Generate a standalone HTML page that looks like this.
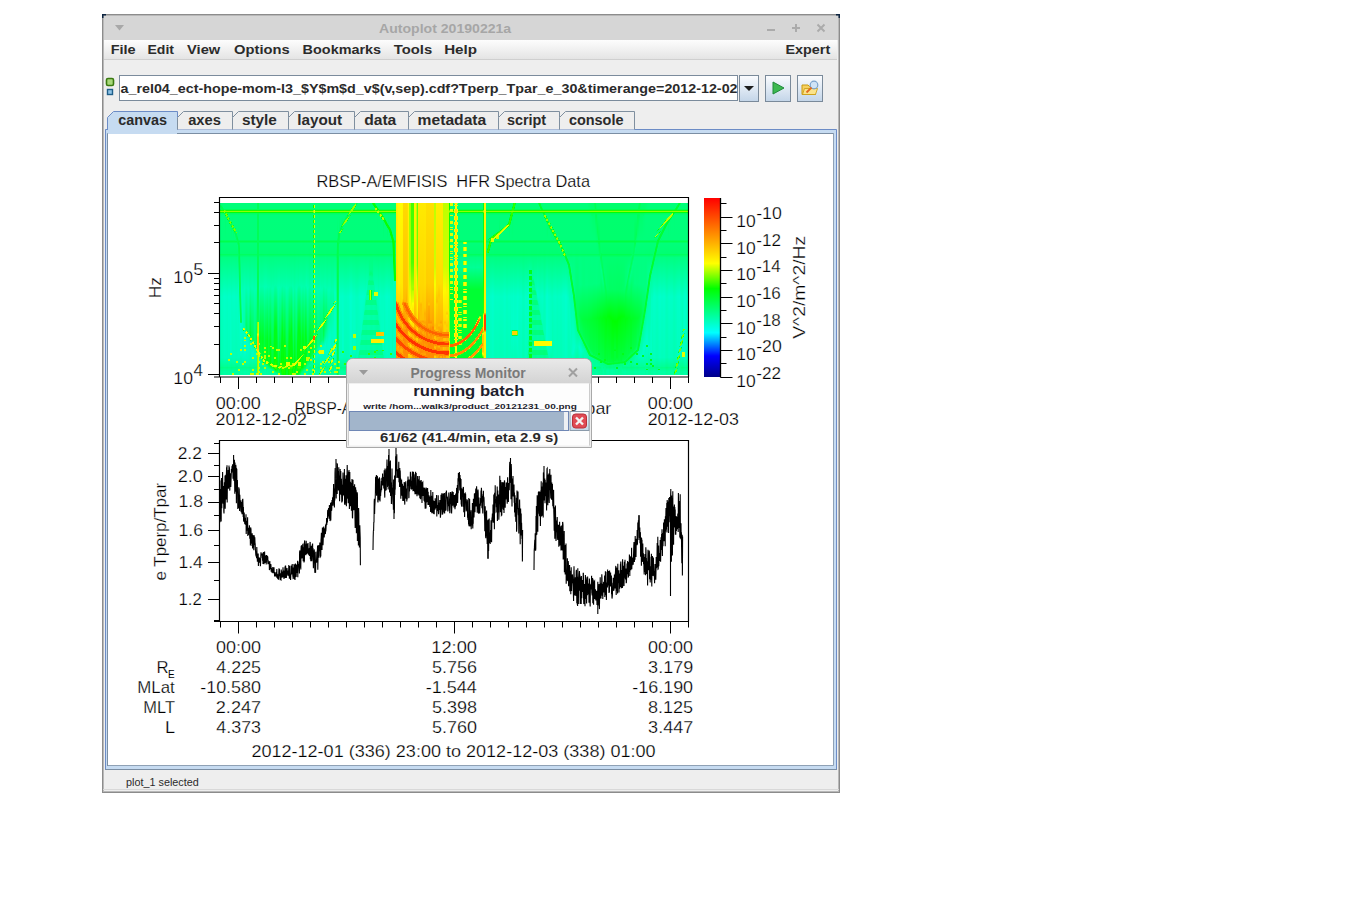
<!DOCTYPE html>
<html><head><meta charset="utf-8"><title>Autoplot</title>
<style>
html,body{margin:0;padding:0;background:#fff}
body{width:1345px;height:916px;position:relative;overflow:hidden;font-family:"Liberation Sans",sans-serif}
.L{position:absolute;left:0;top:0}
.pt text{stroke:#fff;stroke-width:0.25px}
.sp{position:absolute;left:220px;top:203px;width:468px;height:172px;overflow:hidden}
.sp i{position:absolute;top:0;height:172px;display:block}
</style></head><body>
<svg class="L" width="1345" height="916" font-family='"Liberation Sans", sans-serif'><defs><linearGradient id="mb" x1="0" y1="0" x2="0" y2="1"><stop offset="0" stop-color="#fdfdfd"/><stop offset="1" stop-color="#e4e4e4"/></linearGradient><linearGradient id="btn" x1="0" y1="0" x2="0" y2="1"><stop offset="0" stop-color="#fbfcfe"/><stop offset="0.45" stop-color="#e2ebf5"/><stop offset="1" stop-color="#c3d5e8"/></linearGradient><linearGradient id="ttl" x1="0" y1="0" x2="0" y2="1"><stop offset="0" stop-color="#e9e9e9"/><stop offset="1" stop-color="#d3d3d3"/></linearGradient></defs><rect x="102" y="14" width="738" height="779" fill="#eeeeee"/><rect x="102.5" y="14.5" width="737" height="778" fill="none" stroke="#8c8c8c" stroke-width="1"/><rect x="103.5" y="15.5" width="735" height="776" fill="none" stroke="#b8b8b8" stroke-width="1"/><rect x="104" y="16" width="734" height="24" fill="#d6d6d6"/><path d="M102 14h4v1.5h-2.5v2.5h-1.5z" fill="#0d2440"/><path d="M840 14h-4v1.5h2.5v2.5h1.5z" fill="#0d2440"/><path d="M115 25h9l-4.5 5.5z" fill="#a8a8a8"/><text x="379.05" y="33.4" font-size="13.7" font-weight="bold" textLength="132.15" lengthAdjust="spacingAndGlyphs" fill="#a6a6a6">Autoplot 20190221a</text><rect x="767" y="29" width="8" height="2" fill="#ababab"/><path d="M792 28h8M796 24v8" stroke="#ababab" stroke-width="2"/><path d="M817.5 24.5l7 7M824.5 24.5l-7 7" stroke="#ababab" stroke-width="2"/><rect x="104" y="40" width="733" height="19" fill="url(#mb)"/><rect x="104" y="59" width="733" height="1" fill="#cfcfcf"/><text x="110.72" y="53.7" font-size="12.8" font-weight="bold" textLength="24.95" lengthAdjust="spacingAndGlyphs" fill="#2b2b2b">File</text><text x="147.45" y="53.7" font-size="12.8" font-weight="bold" textLength="26.54" lengthAdjust="spacingAndGlyphs" fill="#2b2b2b">Edit</text><text x="187.09" y="53.7" font-size="12.8" font-weight="bold" textLength="33.09" lengthAdjust="spacingAndGlyphs" fill="#2b2b2b">View</text><text x="234.11" y="53.7" font-size="12.8" font-weight="bold" textLength="55.58" lengthAdjust="spacingAndGlyphs" fill="#2b2b2b">Options</text><text x="302.63" y="53.7" font-size="12.8" font-weight="bold" textLength="78.48" lengthAdjust="spacingAndGlyphs" fill="#2b2b2b">Bookmarks</text><text x="393.75" y="53.7" font-size="12.8" font-weight="bold" textLength="38.38" lengthAdjust="spacingAndGlyphs" fill="#2b2b2b">Tools</text><text x="444.18" y="53.7" font-size="12.8" font-weight="bold" textLength="32.86" lengthAdjust="spacingAndGlyphs" fill="#2b2b2b">Help</text><text x="785.43" y="53.7" font-size="12.8" font-weight="bold" textLength="44.75" lengthAdjust="spacingAndGlyphs" fill="#2b2b2b">Expert</text><rect x="106.5" y="78.5" width="7" height="7" rx="1.5" fill="#a8d87a" stroke="#3a7a10" stroke-width="1.6"/><rect x="107.5" y="89.5" width="5" height="5" fill="#8fc4e6" stroke="#1f5f8a" stroke-width="1.4"/><rect x="119.5" y="75.5" width="618" height="25" fill="#fff" stroke="#7b8b9c" stroke-width="1"/><text x="120.47" y="93" font-size="13.3" font-weight="bold" textLength="617.09" lengthAdjust="spacingAndGlyphs" fill="#2a2a2a">a_rel04_ect-hope-mom-l3_$Y$m$d_v$(v,sep).cdf?Tperp_Tpar_e_30&amp;timerange=2012-12-02</text><rect x="739.5" y="75.5" width="19" height="26" fill="url(#btn)" stroke="#7a8a9a" stroke-width="1"/><rect x="765.5" y="75.5" width="25" height="26" fill="url(#btn)" stroke="#7a8a9a" stroke-width="1"/><rect x="797.5" y="75.5" width="25" height="26" fill="url(#btn)" stroke="#7a8a9a" stroke-width="1"/><path d="M744 86h10l-5 5z" fill="#1e1e1e"/><path d="M773 82v12l11-6z" fill="#3cb850" stroke="#1f8a3a" stroke-width="1"/><path d="M802 85h6l1.5 1.5h6v8h-13.5z" fill="#f5d060" stroke="#c99a10" stroke-width="1"/><path d="M802.5 94.5l2-6h13l-2 6z" fill="#fbe38a" stroke="#c99a10" stroke-width="0.8"/><circle cx="814" cy="85" r="3.8" fill="#cfe3f7" stroke="#7aa2cc" stroke-width="1.2"/><path d="M811.5 87.5l-5 5" stroke="#e06a20" stroke-width="1.8"/><rect x="105" y="129" width="732" height="641" fill="#c6dbf1"/><path d="M105.5 770V129.5H836.5V770" fill="none" stroke="#6c8cc6" stroke-width="1"/><rect x="105" y="769" width="732" height="1" fill="#7b8ea3"/><rect x="108" y="133" width="725" height="633" fill="#fff"/><path d="M107.5 766V133.5H833.5" fill="none" stroke="#7b8ea3" stroke-width="1"/><path d="M108 765.5H833.5V133" fill="none" stroke="#8fa1b5" stroke-width="1"/><path d="M107.5 130V117.5L113.5 111.5H177.5V130" fill="#c6dbf1" stroke="#6c8cc6" stroke-width="1"/><text x="118.22" y="124.6" font-size="13.8" font-weight="bold" textLength="48.78" lengthAdjust="spacingAndGlyphs" fill="#2b2b2b">canvas</text><path d="M177.5 129.5V117.5L183.5 111.5H232.5V129.5" fill="#eeeeee" stroke="#7f8f9f" stroke-width="1"/><text x="188.16" y="124.6" font-size="13.8" font-weight="bold" textLength="32.66" lengthAdjust="spacingAndGlyphs" fill="#2b2b2b">axes</text><path d="M232.5 129.5V117.5L238.5 111.5H288.5V129.5" fill="#eeeeee" stroke="#7f8f9f" stroke-width="1"/><text x="241.96" y="124.6" font-size="13.8" font-weight="bold" textLength="34.86" lengthAdjust="spacingAndGlyphs" fill="#2b2b2b">style</text><path d="M288.5 129.5V117.5L294.5 111.5H354.5V129.5" fill="#eeeeee" stroke="#7f8f9f" stroke-width="1"/><text x="297.23" y="124.6" font-size="13.8" font-weight="bold" textLength="44.86" lengthAdjust="spacingAndGlyphs" fill="#2b2b2b">layout</text><path d="M354.5 129.5V117.5L360.5 111.5H408.5V129.5" fill="#eeeeee" stroke="#7f8f9f" stroke-width="1"/><text x="364.18" y="124.6" font-size="13.8" font-weight="bold" textLength="32.13" lengthAdjust="spacingAndGlyphs" fill="#2b2b2b">data</text><path d="M408.5 129.5V117.5L414.5 111.5H498.5V129.5" fill="#eeeeee" stroke="#7f8f9f" stroke-width="1"/><text x="417.58" y="124.6" font-size="13.8" font-weight="bold" textLength="68.71" lengthAdjust="spacingAndGlyphs" fill="#2b2b2b">metadata</text><path d="M498.5 129.5V117.5L504.5 111.5H559.5V129.5" fill="#eeeeee" stroke="#7f8f9f" stroke-width="1"/><text x="506.90" y="124.6" font-size="13.8" font-weight="bold" textLength="39.19" lengthAdjust="spacingAndGlyphs" fill="#2b2b2b">script</text><path d="M559.5 129.5V117.5L565.5 111.5H634.5V129.5" fill="#eeeeee" stroke="#7f8f9f" stroke-width="1"/><text x="568.92" y="124.6" font-size="13.8" font-weight="bold" textLength="54.57" lengthAdjust="spacingAndGlyphs" fill="#2b2b2b">console</text><rect x="108" y="129" width="69" height="5" fill="#c6dbf1"/><text x="126.10" y="786" font-size="10.5" textLength="72.70" lengthAdjust="spacingAndGlyphs" fill="#2b2b2b">plot_1 selected</text><rect x="103" y="789" width="736" height="1" fill="#d8d8d8"/></svg>
<div class="sp"><i style="left:0px;width:1px;background:linear-gradient(#00ff7b 0px,#00ff7b 1.5px,#00ff59 2.5px,#00ff57 3.5px,#00ff78 5.5px,#00ff5a 6.5px,#18ff00 7.5px,#90ff00 8.5px,#00ff0c 9.5px,#00ff65 10.5px,#00ff7b 12.5px,#00ff7a 36.5px,#00ff4c 38.5px,#00ff7a 40.5px,#00ff72 50.5px,#00ff5f 51.5px,#00ff82 54.5px,#00ffc3 93.5px,#00ffb6 154.5px,#00ff92 163.5px,#00ff85 164.5px,#00ff9f 168.5px,#00ff9f 172px)"></i><i style="left:1px;width:1px;background:linear-gradient(#00ff7b 0px,#00ff7b 1.5px,#00ff4d 3.5px,#00ff5a 6.5px,#18ff00 7.5px,#90ff00 8.5px,#00ff0c 9.5px,#00ff65 10.5px,#00ff7b 12.5px,#00ff7a 36.5px,#00ff4c 38.5px,#00ff7a 40.5px,#00ff72 50.5px,#00ff5f 51.5px,#00ff82 54.5px,#00ffc0 94.5px,#00ffb3 154.5px,#00ff8f 163.5px,#00ff82 164.5px,#00ff9b 168.5px,#00ff9b 172px)"></i><i style="left:2px;width:1px;background:linear-gradient(#00ff7b 0px,#00ff6e 3.5px,#00ff51 4.5px,#00ff4d 6.5px,#18ff00 7.5px,#90ff00 8.5px,#00ff0c 9.5px,#00ff65 10.5px,#00ff7b 12.5px,#00ff7a 36.5px,#00ff4c 38.5px,#00ff7a 40.5px,#00ff72 50.5px,#00ff5f 51.5px,#00ff82 54.5px,#00ffc1 94.5px,#00ffb4 154.5px,#00ff90 163.5px,#00ff83 164.5px,#00ff9d 168.5px,#00ff9d 172px)"></i><i style="left:3px;width:1px;background:linear-gradient(#00ff7b 0px,#00ff7b 4.5px,#00ff4d 6.5px,#18ff00 7.5px,#90ff00 8.5px,#00ff0c 9.5px,#00ff65 10.5px,#00ff7b 12.5px,#00ff7a 36.5px,#00ff4c 38.5px,#00ff7a 40.5px,#00ff72 50.5px,#00ff60 51.5px,#00ff83 54.5px,#00ffc5 93.5px,#00ffb8 154.5px,#00ff94 163.5px,#00ff87 164.5px,#00ffa1 168.5px,#00ffa1 172px)"></i><i style="left:4px;width:1px;background:linear-gradient(#00ff7b 0px,#00ff78 5.5px,#00ff5a 6.5px,#7f0 7.5px,#90ff00 8.5px,#7f0 9.5px,#00ff4f 10.5px,#00ff7b 12.5px,#00ff7a 36.5px,#00ff4d 38.5px,#00ff7a 40.5px,#00ff73 50.5px,#00ff60 51.5px,#00ff83 54.5px,#00ffc8 93.5px,#00ffbc 154.5px,#00ff97 163.5px,#00ff8a 164.5px,#00ffa4 168.5px,#00ffa4 172px)"></i><i style="left:5px;width:1px;background:linear-gradient(#00ff7b 0px,#00ff78 5.5px,#00ff5a 6.5px,#4cff00 7.5px,#90ff00 8.5px,#00ff0c 9.5px,#00ff4d 10.5px,#7f0 11.5px,#00ff02 12.5px,#00ff73 13.5px,#00ff7a 36.5px,#00ff4d 38.5px,#00ff7a 40.5px,#00ff72 50.5px,#00ff60 51.5px,#00ff83 54.5px,#00ffc6 93.5px,#00ffba 154.5px,#00ff95 163.5px,#0f8 164.5px,#00ffa2 168.5px,#00ffa2 172px)"></i><i style="left:6px;width:1px;background:linear-gradient(#00ff7b 0px,#00ff78 5.5px,#00ff5a 6.5px,#18ff00 7.5px,#90ff00 8.5px,#00ff0c 9.5px,#7f0 10.5px,#7f0 13.5px,#00ff5b 14.5px,#00ff7b 16.5px,#00ff7a 36.5px,#00ff4c 38.5px,#00ff7a 40.5px,#00ff72 50.5px,#00ff60 51.5px,#00ff83 54.5px,#00ffc5 93.5px,#00ffb9 154.5px,#00ff94 163.5px,#00ff87 164.5px,#00ffa1 168.5px,#00ffa1 172px)"></i><i style="left:7px;width:1px;background:linear-gradient(#00ff7b 0px,#00ff78 5.5px,#00ff5a 6.5px,#18ff00 7.5px,#90ff00 8.5px,#00ff0c 9.5px,#00ff65 10.5px,#00ff12 11.5px,#7f0 12.5px,#00ff52 13.5px,#00ff4d 14.5px,#7f0 15.5px,#00ff07 16.5px,#00ff7b 17.5px,#00ff7a 36.5px,#00ff4c 38.5px,#00ff7a 40.5px,#00ff72 50.5px,#00ff60 51.5px,#00ff82 54.5px,#00ffc3 93.5px,#00ffb7 154.5px,#00ff92 163.5px,#00ff85 164.5px,#00ff9f 168.5px,#00ff9f 172px)"></i><i style="left:8px;width:1px;background:linear-gradient(#00ff7b 0px,#00ff78 5.5px,#00ff5a 6.5px,#18ff00 7.5px,#90ff00 8.5px,#00ff0c 9.5px,#00ff65 10.5px,#00ff7b 12.5px,#00ff7b 13.5px,#7f0 14.5px,#7f0 16.5px,#00ff4d 17.5px,#00ff7b 19.5px,#00ff7a 36.5px,#00ff4d 38.5px,#00ff7a 40.5px,#00ff73 50.5px,#00ff60 51.5px,#00ff83 54.5px,#00ffc7 93.5px,#0fb 154.5px,#00ffb7 155.5px,#bfff00 156.5px,#bfff00 157.5px,#00ffac 158.5px,#00ff96 163.5px,#00ff89 164.5px,#00ffa3 168.5px,#00ffa3 172px)"></i><i style="left:9px;width:1px;background:linear-gradient(#00ff7b 0px,#00ff78 5.5px,#00ff5a 6.5px,#18ff00 7.5px,#90ff00 8.5px,#00ff0c 9.5px,#00ff65 10.5px,#00ff7b 12.5px,#00ff7b 14.5px,#00ff13 15.5px,#00ff65 16.5px,#00ff4d 18.5px,#7f0 19.5px,#00ff1f 20.5px,#00ff7b 21.5px,#00ff7a 36.5px,#00ff4d 38.5px,#00ff7a 40.5px,#00ff72 50.5px,#00ff60 51.5px,#00ff83 54.5px,#00ffc6 93.5px,#00ffb9 154.5px,#00ffb5 155.5px,#bfff00 156.5px,#bfff00 157.5px,#0fa 158.5px,#00ff95 163.5px,#0f8 164.5px,#00ffa1 168.5px,#00ffa1 172px)"></i><i style="left:10px;width:1px;background:linear-gradient(#00ff7b 0px,#00ff78 5.5px,#00ff5a 6.5px,#18ff00 7.5px,#90ff00 8.5px,#00ff0c 9.5px,#00ff65 10.5px,#00ff7b 12.5px,#00ff7b 17.5px,#7f0 18.5px,#7f0 20.5px,#00ff52 21.5px,#00ff7b 23.5px,#00ff7a 36.5px,#00ff4c 38.5px,#00ff7a 40.5px,#00ff72 50.5px,#00ff60 51.5px,#00ff83 54.5px,#00ffc5 93.5px,#00ffc5 149.5px,#bfff00 150.5px,#bfff00 151.5px,#00ffbf 152.5px,#00ff94 163.5px,#00ff87 164.5px,#00ffa1 168.5px,#00ffa1 172px)"></i><i style="left:11px;width:1px;background:linear-gradient(#00ff7b 0px,#00ff78 5.5px,#00ff5a 6.5px,#18ff00 7.5px,#90ff00 8.5px,#00ff0c 9.5px,#00ff65 10.5px,#00ff7b 12.5px,#00ff7b 18.5px,#0cff00 19.5px,#00ff5b 20.5px,#00ff4d 22.5px,#1fff00 23.5px,#00ff70 24.5px,#00ff7a 36.5px,#00ff4c 38.5px,#00ff7a 40.5px,#00ff72 50.5px,#00ff5f 51.5px,#00ff82 54.5px,#00ffc1 93.5px,#00ffc1 149.5px,#bfff00 150.5px,#bfff00 151.5px,#00ffbc 152.5px,#00ff90 163.5px,#00ff83 164.5px,#00ff9d 168.5px,#00ff9d 172px)"></i><i style="left:12px;width:1px;background:linear-gradient(#00ff7b 0px,#00ff78 5.5px,#00ff5a 6.5px,#18ff00 7.5px,#90ff00 8.5px,#00ff0c 9.5px,#00ff65 10.5px,#00ff7b 12.5px,#00ff73 21.5px,#7f0 22.5px,#7f0 24.5px,#00ff56 25.5px,#00ff7b 27.5px,#00ff7a 36.5px,#00ff4c 38.5px,#00ff7a 40.5px,#00ff72 50.5px,#00ff60 51.5px,#00ff83 54.5px,#00ffc4 93.5px,#00ffb8 154.5px,#00ff93 163.5px,#00ff86 164.5px,#00ffa0 168.5px,#00ffa0 169.5px,#bfff00 170.5px,#bfff00 172px)"></i><i style="left:13px;width:1px;background:linear-gradient(#00ff7b 0px,#00ff78 5.5px,#00ff5a 6.5px,#18ff00 7.5px,#90ff00 8.5px,#00ff0c 9.5px,#00ff65 10.5px,#00ff7b 12.5px,#00ff7b 21.5px,#00ff29 22.5px,#7f0 23.5px,#00ff56 24.5px,#00ff4d 25.5px,#62ff00 26.5px,#00ff3a 27.5px,#00ff70 28.5px,#00ff7a 36.5px,#00ff4c 38.5px,#00ff7a 40.5px,#00ff72 50.5px,#00ff60 51.5px,#00ff83 54.5px,#00ffc5 93.5px,#00ffb9 154.5px,#00ff94 163.5px,#00ff87 164.5px,#00ffa1 168.5px,#00ffa1 169.5px,#bfff00 170.5px,#bfff00 172px)"></i><i style="left:14px;width:1px;background:linear-gradient(#00ff7b 0px,#00ff78 5.5px,#00ff5a 6.5px,#18ff00 7.5px,#90ff00 8.5px,#00ff0c 9.5px,#00ff65 10.5px,#00ff7b 12.5px,#00ff7b 24.5px,#7f0 25.5px,#7f0 27.5px,#24ff00 28.5px,#00ff56 29.5px,#00ff7b 31.5px,#00ff7a 36.5px,#00ff4d 38.5px,#00ff7a 40.5px,#00ff72 50.5px,#00ff60 51.5px,#00ff83 54.5px,#00ffc6 93.5px,#00ffb9 154.5px,#00ff95 163.5px,#0f8 164.5px,#00ffa1 168.5px,#00ffa1 172px)"></i><i style="left:15px;width:1px;background:linear-gradient(#00ff7b 0px,#00ff78 5.5px,#00ff5a 6.5px,#18ff00 7.5px,#90ff00 8.5px,#00ff0c 9.5px,#00ff65 10.5px,#00ff7b 12.5px,#00ff7b 24.5px,#00ff58 25.5px,#5cff00 26.5px,#7f0 27.5px,#00ff56 28.5px,#00ff53 31.5px,#00ff7b 35.5px,#00ff6a 37.5px,#00ff4c 38.5px,#00ff7a 40.5px,#00ff72 50.5px,#00ff60 51.5px,#00ff82 54.5px,#00ffc3 93.5px,#00ffb7 154.5px,#00ff92 163.5px,#00ff85 164.5px,#00ff9f 168.5px,#00ff9f 172px)"></i><i style="left:16px;width:1px;background:linear-gradient(#00ff7b 0px,#00ff78 5.5px,#00ff5a 6.5px,#18ff00 7.5px,#90ff00 8.5px,#00ff0c 9.5px,#00ff65 10.5px,#00ff7b 12.5px,#00ff7b 28.5px,#7f0 29.5px,#00ff56 30.5px,#00ff58 35.5px,#00ff67 37.5px,#00ff4c 38.5px,#00ff7a 40.5px,#00ff72 50.5px,#00ff5f 51.5px,#00ff82 54.5px,#00ffc3 93.5px,#00ffb6 154.5px,#00ffab 157.5px,#bfff00 158.5px,#bfff00 159.5px,#00ffa2 160.5px,#00ff85 164.5px,#00ff9f 168.5px,#00ff9f 172px)"></i><i style="left:17px;width:1px;background:linear-gradient(#00ff7b 0px,#00ff78 5.5px,#00ff5a 6.5px,#18ff00 7.5px,#90ff00 8.5px,#00ff0c 9.5px,#00ff65 10.5px,#00ff7b 12.5px,#00ff7b 31.5px,#00ff4d 35.5px,#00ff57 39.5px,#00ff7b 42.5px,#00ff72 50.5px,#00ff60 51.5px,#00ff83 54.5px,#00ffc5 94.5px,#00ffb8 154.5px,#00ffad 157.5px,#bfff00 158.5px,#bfff00 159.5px,#00ffa3 160.5px,#00ff87 164.5px,#00ffa0 168.5px,#00ffa0 172px)"></i><i style="left:18px;width:1px;background:linear-gradient(#00ff7b 0px,#00ff78 5.5px,#00ff5a 6.5px,#18ff00 7.5px,#90ff00 8.5px,#00ff0c 9.5px,#00ff65 10.5px,#00ff7b 12.5px,#0f7 35.5px,#00ff4c 38.5px,#0f6 57.5px,#00ffbf 84.5px,#00ffbc 153.5px,#00ff94 163.5px,#00ff87 164.5px,#00ff94 165.5px,#bfff00 166.5px,#bfff00 167.5px,#00ffa1 168.5px,#00ffa1 172px)"></i><i style="left:19px;width:1px;background:linear-gradient(#00ff7b 0px,#00ff78 5.5px,#00ff5a 6.5px,#18ff00 7.5px,#90ff00 8.5px,#00ff0c 9.5px,#00ff65 10.5px,#00ff7b 12.5px,#00ff7a 36.5px,#00ff4d 38.5px,#00ff64 39.5px,#00ff4d 45.5px,#00ff58 89.5px,#00ffc5 114.5px,#00ffb9 154.5px,#00ff94 163.5px,#00ff94 165.5px,#bfff00 166.5px,#bfff00 167.5px,#00ffa1 168.5px,#00ffa1 172px)"></i><i style="left:20px;width:1px;background:linear-gradient(#00ff7b 0px,#00ff78 5.5px,#00ff5a 6.5px,#18ff00 7.5px,#90ff00 8.5px,#00ff0c 9.5px,#00ff65 10.5px,#00ff7b 12.5px,#00ff7a 36.5px,#00ff4d 38.5px,#00ff7a 40.5px,#00ff73 50.5px,#00ff60 51.5px,#00ff7e 54.5px,#00ff5d 81.5px,#00ff4d 105.5px,#00ff4d 118.5px,#00ff6d 119.5px,#00ffc9 120.5px,#00ffc9 145.5px,#bfff00 146.5px,#bfff00 147.5px,#00ffc9 148.5px,#00ff98 163.5px,#00ff8b 164.5px,#00ffa5 168.5px,#00ffa5 172px)"></i><i style="left:21px;width:1px;background:linear-gradient(#00ff7b 0px,#00ff78 5.5px,#00ff5a 6.5px,#18ff00 7.5px,#90ff00 8.5px,#00ff0c 9.5px,#00ff65 10.5px,#00ff7b 12.5px,#00ff7a 36.5px,#00ff4d 38.5px,#00ff7a 40.5px,#00ff73 50.5px,#00ff61 51.5px,#00ff84 54.5px,#00ffbc 88.5px,#00ff9c 100.5px,#00ff4f 118.5px,#00ff6b 119.5px,#00ffc5 120.5px,#00ffca 145.5px,#bfff00 146.5px,#bfff00 147.5px,#00ffca 148.5px,#0f9 163.5px,#00ff8c 164.5px,#00ffa6 168.5px,#00ffa6 172px)"></i><i style="left:22px;width:1px;background:linear-gradient(#00ff7b 0px,#00ff78 5.5px,#00ff5a 6.5px,#18ff00 7.5px,#90ff00 8.5px,#00ff0c 9.5px,#00ff65 10.5px,#00ff7b 12.5px,#00ff7a 36.5px,#00ff4d 38.5px,#00ff7a 40.5px,#00ff73 50.5px,#00ff60 51.5px,#00ff83 54.5px,#00ffb8 87.5px,#00ffbf 125.5px,#00ff8e 126.5px,#00ffc3 127.5px,#00ffbc 154.5px,#0fa 159.5px,#bfff00 160.5px,#bfff00 161.5px,#00ffa3 162.5px,#00ff8a 164.5px,#00ffa4 168.5px,#00ffa4 172px)"></i><i style="left:23px;width:1px;background:linear-gradient(#00ff7b 0px,#00ff78 5.5px,#00ff5a 6.5px,#18ff00 7.5px,#90ff00 8.5px,#00ff0c 9.5px,#00ff65 10.5px,#00ff7b 12.5px,#00ff7a 36.5px,#00ff4d 38.5px,#00ff7a 40.5px,#00ff73 50.5px,#00ff61 51.5px,#00ff84 54.5px,#00ffb7 86.5px,#00ffb0 123.5px,#00ffb1 124.5px,#e3ff00 125.5px,#e3ff00 126.5px,#00ff21 127.5px,#00ffbf 128.5px,#00ffc1 153.5px,#00ffab 159.5px,#bfff00 160.5px,#bfff00 161.5px,#00ffa4 162.5px,#00ff8c 164.5px,#00ffa6 168.5px,#00ffa6 172px)"></i><i style="left:24px;width:1px;background:linear-gradient(#00ff7b 0px,#00ff78 5.5px,#00ff5a 6.5px,#18ff00 7.5px,#90ff00 8.5px,#00ff0c 9.5px,#00ff65 10.5px,#00ff7b 12.5px,#00ff7a 36.5px,#00ff4d 38.5px,#00ff7a 40.5px,#00ff73 50.5px,#00ff61 51.5px,#00ff84 54.5px,#00ffba 85.5px,#00ffa7 124.5px,#b7ff00 125.5px,#e3ff00 126.5px,#00ffae 127.5px,#00ffcd 133.5px,#bfff00 134.5px,#bfff00 135.5px,#00ffcd 136.5px,#bfff00 137.5px,#00ffcd 138.5px,#00ffcd 141.5px,#bfff00 142.5px,#bfff00 143.5px,#00ffcd 144.5px,#00ffcd 145.5px,#bfff00 146.5px,#bfff00 147.5px,#00ffcd 148.5px,#00ffb5 157.5px,#bfff00 158.5px,#bfff00 159.5px,#00ffac 160.5px,#00ff8f 164.5px,#00ffa9 168.5px,#00ffa9 172px)"></i><i style="left:25px;width:1px;background:linear-gradient(#00ff7b 0px,#00ff78 5.5px,#00ff5a 6.5px,#18ff00 7.5px,#90ff00 8.5px,#00ff0c 9.5px,#00ff65 10.5px,#00ff7b 12.5px,#00ff7a 36.5px,#00ff4d 38.5px,#00ff7a 40.5px,#00ff73 50.5px,#00ff61 51.5px,#00ff84 54.5px,#00ffb5 84.5px,#00ff83 121.5px,#0f9 128.5px,#cfff00 129.5px,#00ff98 130.5px,#00ffba 131.5px,#00ffc8 133.5px,#bfff00 134.5px,#bfff00 135.5px,#0fc 136.5px,#bfff00 137.5px,#0fc 138.5px,#0fc 141.5px,#bfff00 142.5px,#bfff00 143.5px,#0fc 144.5px,#0fc 145.5px,#bfff00 146.5px,#bfff00 147.5px,#0fc 148.5px,#00ffb4 157.5px,#bfff00 158.5px,#bfff00 159.5px,#00ffab 160.5px,#00ff8e 164.5px,#00ffa8 168.5px,#00ffa8 172px)"></i><i style="left:26px;width:1px;background:linear-gradient(#00ff7b 0px,#00ff78 5.5px,#00ff5a 6.5px,#18ff00 7.5px,#90ff00 8.5px,#00ff0c 9.5px,#00ff65 10.5px,#00ff7b 12.5px,#00ff7a 36.5px,#00ff4d 38.5px,#00ff7a 40.5px,#00ff73 50.5px,#00ff61 51.5px,#00ff84 54.5px,#00ffb2 84.5px,#00ff69 123.5px,#00ff70 127.5px,#e3ff00 128.5px,#e3ff00 130.5px,#00ffa3 131.5px,#00ffca 137.5px,#00ffba 155.5px,#0f9 163.5px,#00ff8c 164.5px,#00ffa6 168.5px,#00ffa6 172px)"></i><i style="left:27px;width:1px;background:linear-gradient(#00ff7b 0px,#00ff78 5.5px,#00ff5a 6.5px,#18ff00 7.5px,#90ff00 8.5px,#00ff0c 9.5px,#00ff65 10.5px,#00ff7b 12.5px,#00ff7a 36.5px,#00ff4d 38.5px,#00ff7a 40.5px,#00ff73 50.5px,#00ff61 51.5px,#00ff84 54.5px,#00ffb6 85.5px,#00ff71 127.5px,#00ff48 128.5px,#e3ff00 129.5px,#00ff8d 130.5px,#00ff98 131.5px,#0f0 132.5px,#00ffae 133.5px,#0fc 140.5px,#00ffb8 156.5px,#00ff9b 163.5px,#00ff8e 164.5px,#00ffa8 168.5px,#00ffa8 172px)"></i><i style="left:28px;width:1px;background:linear-gradient(#00ff7b 0px,#00ff78 5.5px,#00ff5a 6.5px,#18ff00 7.5px,#90ff00 8.5px,#00ff0c 9.5px,#00ff65 10.5px,#00ff7b 12.5px,#00ff7a 36.5px,#00ff4d 38.5px,#00ff7a 40.5px,#00ff73 50.5px,#00ff61 51.5px,#00ff84 54.5px,#00ffb9 86.5px,#00ff7f 128.5px,#00ff8b 130.5px,#e3ff00 131.5px,#e3ff00 132.5px,#7aff00 133.5px,#00ffad 134.5px,#00ffcb 142.5px,#00ffb3 157.5px,#00ff9a 163.5px,#00ff8d 164.5px,#00ffa7 168.5px,#00ffa7 172px)"></i><i style="left:29px;width:1px;background:linear-gradient(#00ff7b 0px,#00ff78 5.5px,#00ff5a 6.5px,#18ff00 7.5px,#90ff00 8.5px,#00ff0c 9.5px,#00ff65 10.5px,#00ff7b 12.5px,#00ff7a 36.5px,#00ff4d 38.5px,#00ff7a 40.5px,#00ff73 50.5px,#00ff60 51.5px,#00ff83 54.5px,#00ffb1 85.5px,#00ff5f 129.5px,#00ff64 130.5px,#3dff00 131.5px,#e3ff00 132.5px,#e3ff00 133.5px,#00ff8b 134.5px,#00ffc6 141.5px,#00ffb2 156.5px,#00ff95 163.5px,#0f8 164.5px,#00ffa2 168.5px,#00ffa2 172px)"></i><i style="left:30px;width:1px;background:linear-gradient(#00ff7b 0px,#00ff78 5.5px,#00ff5a 6.5px,#18ff00 7.5px,#90ff00 8.5px,#00ff0c 9.5px,#00ff65 10.5px,#00ff7b 12.5px,#00ff7a 36.5px,#00ff4c 38.5px,#00ff7a 40.5px,#00ff72 50.5px,#00ff60 51.5px,#00ff82 54.5px,#00ffab 83.5px,#00ff38 130.5px,#00ff3c 131.5px,#06ff00 132.5px,#00ff4f 133.5px,#00ff5c 134.5px,#e3ff00 135.5px,#e3ff00 136.5px,#00ff1e 137.5px,#00ff97 138.5px,#00ffa4 139.5px,#bfff00 140.5px,#bfff00 141.5px,#00ffc0 142.5px,#00ffaf 156.5px,#00ff92 163.5px,#00ff85 164.5px,#00ff9f 168.5px,#00ff9f 169.5px,#bfff00 170.5px,#bfff00 172px)"></i><i style="left:31px;width:1px;background:linear-gradient(#00ff7b 0px,#00ff78 5.5px,#00ff5a 6.5px,#18ff00 7.5px,#90ff00 8.5px,#00ff0c 9.5px,#00ff65 10.5px,#00ff7b 12.5px,#00ff7a 36.5px,#00ff4d 38.5px,#00ff7a 40.5px,#00ff72 50.5px,#00ff60 51.5px,#00ff83 54.5px,#00ffaf 84.5px,#00ff4e 132.5px,#00ff53 133.5px,#3fff00 134.5px,#e3ff00 135.5px,#e3ff00 136.5px,#00ff7d 137.5px,#00ff96 139.5px,#bfff00 140.5px,#bfff00 141.5px,#00ffb7 142.5px,#00ffc3 151.5px,#00ff95 163.5px,#0f8 164.5px,#00ffa1 168.5px,#00ffa1 169.5px,#bfff00 170.5px,#bfff00 172px)"></i><i style="left:32px;width:1px;background:linear-gradient(#00ff7b 0px,#00ff78 5.5px,#00ff5a 6.5px,#18ff00 7.5px,#90ff00 8.5px,#00ff0c 9.5px,#00ff65 10.5px,#00ff7b 12.5px,#00ff7a 36.5px,#00ff4d 38.5px,#00ff7a 40.5px,#00ff73 50.5px,#00ff60 51.5px,#00ff83 54.5px,#00ffb1 84.5px,#00ff53 133.5px,#00ff78 138.5px,#e3ff00 139.5px,#9aff00 140.5px,#00ff6f 141.5px,#00ffa8 142.5px,#00ffc7 149.5px,#00ffbe 153.5px,#bfff00 154.5px,#bfff00 155.5px,#00ffb3 156.5px,#00ff96 163.5px,#00ff89 164.5px,#00ff96 165.5px,#bfff00 166.5px,#bfff00 167.5px,#00ffa3 168.5px,#00ffa3 169.5px,#bfff00 170.5px,#bfff00 172px)"></i><i style="left:33px;width:1px;background:linear-gradient(#00ff7b 0px,#00ff78 5.5px,#00ff5a 6.5px,#18ff00 7.5px,#90ff00 8.5px,#00ff0c 9.5px,#00ff65 10.5px,#00ff7b 12.5px,#00ff7a 36.5px,#00ff4c 38.5px,#00ff7a 40.5px,#00ff72 50.5px,#00ff60 51.5px,#00ff83 54.5px,#00ffb0 85.5px,#00ff5c 135.5px,#00ff65 137.5px,#96ff00 138.5px,#e3ff00 139.5px,#e3ff00 140.5px,#00ff8b 141.5px,#00ffc4 148.5px,#00ffbc 153.5px,#bfff00 154.5px,#bfff00 155.5px,#00ffb0 156.5px,#00ff93 163.5px,#00ff86 164.5px,#00ff93 165.5px,#bfff00 166.5px,#bfff00 167.5px,#00ffa0 168.5px,#00ffa0 169.5px,#bfff00 170.5px,#bfff00 172px)"></i><i style="left:34px;width:1px;background:linear-gradient(#00ff7b 0px,#00ff78 5.5px,#00ff5a 6.5px,#18ff00 7.5px,#90ff00 8.5px,#00ff0c 9.5px,#00ff65 10.5px,#00ff7b 12.5px,#00ff7a 36.5px,#00ff4c 38.5px,#00ff7a 40.5px,#00ff72 50.5px,#00ff60 51.5px,#00ff82 54.5px,#00ffb2 87.5px,#00ff71 137.5px,#00ff74 138.5px,#00ff3b 139.5px,#00ff7f 140.5px,#00ff87 141.5px,#e3ff00 142.5px,#e3ff00 143.5px,#1bff00 144.5px,#0fa 145.5px,#00ffbe 152.5px,#00ff92 163.5px,#00ff85 164.5px,#00ff9f 168.5px,#00ff9f 172px)"></i><i style="left:35px;width:1px;background:linear-gradient(#00ff7b 0px,#00ff78 5.5px,#00ff5a 6.5px,#18ff00 7.5px,#90ff00 8.5px,#00ff0c 9.5px,#00ff65 10.5px,#00ff7b 12.5px,#00ff7a 36.5px,#00ff4c 38.5px,#00ff7a 40.5px,#00ff72 50.5px,#00ff60 51.5px,#00ff82 54.5px,#00ffb2 86.5px,#00ff6b 137.5px,#00ff70 140.5px,#00ff1b 141.5px,#e3ff00 142.5px,#e3ff00 144.5px,#0f9 145.5px,#00ffbe 152.5px,#00ff93 163.5px,#00ff86 164.5px,#00ffa0 168.5px,#00ffa0 172px)"></i><i style="left:36px;width:1px;background:linear-gradient(#00ff7b 0px,#00ff78 5.5px,#00ff5a 6.5px,#18ff00 7.5px,#90ff00 8.5px,#00ff0c 9.5px,#00ff65 10.5px,#00ff7b 12.5px,#00ff7a 36.5px,#00ff4c 38.5px,#00ff7a 40.5px,#00ff72 50.5px,#00ff5f 51.5px,#00ff82 54.5px,#00ffad 85.5px,#00ff4f 135.5px,#00ff59 142.5px,#18ff00 143.5px,#00ff6b 144.5px,#00ff76 145.5px,#e3ff00 146.5px,#bfff00 147.5px,#00ff74 148.5px,#00ffa5 149.5px,#bfff00 150.5px,#bfff00 151.5px,#00ffb7 152.5px,#00ff92 163.5px,#00ff85 164.5px,#00ff9e 168.5px,#00ff9e 169.5px,#bfff00 170.5px,#bfff00 172px)"></i><i style="left:37px;width:1px;background:linear-gradient(#00ff57 0px,#00ff57 6.5px,#18ff00 7.5px,#90ff00 8.5px,#00ff0c 9.5px,#00ff57 10.5px,#00ff53 118.5px,#8f0 119.5px,#93ff00 129.5px,#edff00 131.5px,#ffcb00 134.5px,#ffcf00 146.5px,#e7ff00 148.5px,#aeff00 149.5px,#bfff00 151.5px,#86ff00 152.5px,#86ff00 169.5px,#bfff00 170.5px,#bfff00 172px)"></i><i style="left:38px;width:1px;background:linear-gradient(#00ff57 0px,#00ff57 6.5px,#18ff00 7.5px,#90ff00 8.5px,#00ff0c 9.5px,#00ff57 10.5px,#00ff57 118.5px,#bfff00 119.5px,#c4ff00 129.5px,#fff300 131.5px,#ffb800 134.5px,#ffb800 145.5px,#fff300 148.5px,#e7ff00 149.5px,#e8ff00 150.5px,#bfff00 151.5px,#bfff00 172px)"></i><i style="left:39px;width:1px;background:linear-gradient(#00ff7b 0px,#00ff78 5.5px,#00ff5a 6.5px,#18ff00 7.5px,#90ff00 8.5px,#00ff0c 9.5px,#00ff65 10.5px,#00ff7b 12.5px,#00ff7a 36.5px,#00ff4d 38.5px,#00ff7a 40.5px,#00ff73 50.5px,#00ff60 51.5px,#00ff83 54.5px,#00ffb0 84.5px,#00ff40 136.5px,#00ff40 139.5px,#bfff00 140.5px,#bfff00 141.5px,#00ff41 142.5px,#00ff56 148.5px,#e3ff00 149.5px,#e3ff00 151.5px,#bfff00 152.5px,#bfff00 153.5px,#00ff96 154.5px,#00ffa7 157.5px,#bfff00 158.5px,#bfff00 159.5px,#00ffa6 160.5px,#00ff96 163.5px,#bfff00 164.5px,#bfff00 165.5px,#00ffa1 166.5px,#00ffa3 167.5px,#bfff00 168.5px,#bfff00 169.5px,#00ffa3 170.5px,#00ffa3 172px)"></i><i style="left:40px;width:1px;background:linear-gradient(#00ff7b 0px,#00ff78 5.5px,#00ff5a 6.5px,#18ff00 7.5px,#90ff00 8.5px,#00ff0c 9.5px,#00ff65 10.5px,#00ff7b 12.5px,#00ff7a 36.5px,#00ff4d 38.5px,#00ff7a 40.5px,#00ff72 50.5px,#00ff60 51.5px,#00ff83 54.5px,#00ffab 83.5px,#00ff20 134.5px,#00ff2d 149.5px,#9f0 150.5px,#00ff49 151.5px,#00ff63 153.5px,#16ff00 154.5px,#00ff7d 155.5px,#00ffa4 160.5px,#0f8 164.5px,#00ffa1 168.5px,#00ffa1 169.5px,#bfff00 170.5px,#bfff00 172px)"></i><i style="left:41px;width:1px;background:linear-gradient(#00ff7b 0px,#00ff78 5.5px,#00ff5a 6.5px,#18ff00 7.5px,#90ff00 8.5px,#00ff0c 9.5px,#00ff65 10.5px,#00ff7b 12.5px,#00ff7a 36.5px,#00ff4c 38.5px,#00ff7a 40.5px,#00ff72 50.5px,#00ff5f 51.5px,#00ff82 54.5px,#0fa 83.5px,#00ff28 135.5px,#00ff3b 151.5px,#00ff43 152.5px,#e3ff00 153.5px,#deff00 155.5px,#00ff6f 156.5px,#00ff9f 161.5px,#00ff84 164.5px,#00ff9e 168.5px,#00ff9e 169.5px,#bfff00 170.5px,#bfff00 172px)"></i><i style="left:42px;width:1px;background:linear-gradient(#00ff7b 0px,#00ff78 5.5px,#00ff5a 6.5px,#18ff00 7.5px,#90ff00 8.5px,#00ff0c 9.5px,#00ff65 10.5px,#00ff7b 12.5px,#00ff7a 36.5px,#00ff4c 38.5px,#00ff7a 40.5px,#00ff72 50.5px,#00ff60 51.5px,#00ff83 54.5px,#00ffab 83.5px,#00ff21 135.5px,#00ff2c 152.5px,#61ff00 153.5px,#e3ff00 154.5px,#00ff46 155.5px,#00ff52 156.5px,#71ff00 157.5px,#00ff6b 158.5px,#00ff81 159.5px,#bfff00 160.5px,#bfff00 161.5px,#00ff9f 162.5px,#00ff87 164.5px,#00ffa0 168.5px,#00ffa0 172px)"></i><i style="left:43px;width:1px;background:linear-gradient(#00ff7b 0px,#00ff78 5.5px,#00ff5a 6.5px,#18ff00 7.5px,#90ff00 8.5px,#00ff0c 9.5px,#00ff65 10.5px,#00ff7b 12.5px,#00ff7a 36.5px,#00ff4d 38.5px,#00ff7a 40.5px,#00ff73 50.5px,#00ff60 51.5px,#00ff83 54.5px,#00ffae 83.5px,#00ff28 135.5px,#00ff36 155.5px,#e3ff00 156.5px,#e3ff00 158.5px,#00ff06 159.5px,#bfff00 160.5px,#bfff00 161.5px,#00ffa2 162.5px,#00ff8a 164.5px,#00ffa4 168.5px,#00ffa4 172px)"></i><i style="left:44px;width:1px;background:linear-gradient(#00ff7b 0px,#00ff78 5.5px,#00ff5a 6.5px,#18ff00 7.5px,#90ff00 8.5px,#00ff0c 9.5px,#00ff65 10.5px,#00ff7b 12.5px,#00ff7a 36.5px,#00ff4d 38.5px,#00ff7a 40.5px,#00ff73 50.5px,#00ff61 51.5px,#00ff84 54.5px,#00ffb3 84.5px,#00ff3f 137.5px,#00ff3e 143.5px,#bfff00 144.5px,#bfff00 145.5px,#00ff40 146.5px,#00ff41 147.5px,#bfff00 148.5px,#bfff00 149.5px,#00ff43 150.5px,#00ff43 151.5px,#bfff00 152.5px,#bfff00 155.5px,#16ff00 156.5px,#e3ff00 157.5px,#e3ff00 158.5px,#00ff60 159.5px,#00ffa3 162.5px,#00ff9a 163.5px,#bfff00 164.5px,#bfff00 165.5px,#00ffa5 166.5px,#00ffa7 172px)"></i><i style="left:45px;width:1px;background:linear-gradient(#00ff7b 0px,#00ff78 5.5px,#00ff5a 6.5px,#18ff00 7.5px,#90ff00 8.5px,#00ff0c 9.5px,#00ff65 10.5px,#00ff7b 12.5px,#00ff7a 36.5px,#00ff4d 38.5px,#00ff7a 40.5px,#00ff73 50.5px,#00ff61 51.5px,#00ff84 54.5px,#00ffb2 83.5px,#00ff2d 136.5px,#00ff2b 143.5px,#bfff00 144.5px,#bfff00 145.5px,#00ff2d 146.5px,#00ff2e 147.5px,#bfff00 148.5px,#bfff00 149.5px,#00ff30 150.5px,#00ff2f 151.5px,#bfff00 152.5px,#bfff00 155.5px,#00ff26 156.5px,#00ff3d 159.5px,#3fff00 160.5px,#00ff81 161.5px,#00ff9a 163.5px,#bfff00 164.5px,#bfff00 165.5px,#00ffa6 166.5px,#00ffa8 172px)"></i><i style="left:46px;width:1px;background:linear-gradient(#00ff7b 0px,#00ff78 5.5px,#00ff5a 6.5px,#18ff00 7.5px,#90ff00 8.5px,#00ff0c 9.5px,#00ff65 10.5px,#00ff7b 12.5px,#00ff7a 36.5px,#00ff4d 38.5px,#00ff7a 40.5px,#00ff73 50.5px,#00ff61 51.5px,#00ff84 54.5px,#00ffb1 83.5px,#00ff28 137.5px,#00ff1e 157.5px,#bfff00 158.5px,#e3ff00 159.5px,#e3ff00 160.5px,#0f6 161.5px,#00ff92 163.5px,#00ffa7 172px)"></i><i style="left:47px;width:1px;background:linear-gradient(#00ff7b 0px,#00ff78 5.5px,#00ff5a 6.5px,#18ff00 7.5px,#90ff00 8.5px,#00ff0c 9.5px,#00ff65 10.5px,#00ff7b 12.5px,#00ff7a 36.5px,#00ff4d 38.5px,#00ff7a 40.5px,#00ff73 50.5px,#00ff60 51.5px,#00ff83 54.5px,#00ffad 83.5px,#00ff20 136.5px,#00ff13 157.5px,#bfff00 158.5px,#e3ff00 159.5px,#e3ff00 160.5px,#0f4 161.5px,#00ff7d 163.5px,#00ffa3 167.5px,#00ffa3 172px)"></i><i style="left:48px;width:1px;background:linear-gradient(#00ff7b 0px,#00ff78 5.5px,#00ff5a 6.5px,#18ff00 7.5px,#90ff00 8.5px,#00ff0c 9.5px,#00ff65 10.5px,#00ff7b 12.5px,#00ff7a 36.5px,#00ff4c 38.5px,#00ff7a 40.5px,#00ff72 50.5px,#00ff60 51.5px,#00ff83 54.5px,#00ffae 84.5px,#00ff38 138.5px,#00ff38 151.5px,#bfff00 152.5px,#bfff00 153.5px,#00ff31 154.5px,#00ff27 158.5px,#beff00 159.5px,#00ff2a 160.5px,#00ff9f 166.5px,#00ffa1 172px)"></i><i style="left:49px;width:1px;background:linear-gradient(#00ff7b 0px,#00ff78 5.5px,#00ff5a 6.5px,#18ff00 7.5px,#90ff00 8.5px,#00ff0c 9.5px,#00ff65 10.5px,#00ff7b 12.5px,#00ff7a 36.5px,#00ff4c 38.5px,#00ff7a 40.5px,#00ff72 50.5px,#00ff60 51.5px,#00ff82 54.5px,#00ffac 83.5px,#00ff29 137.5px,#00ff27 151.5px,#bfff00 152.5px,#bfff00 153.5px,#00ff20 154.5px,#00ff1f 161.5px,#00ff9e 166.5px,#00ff9f 172px)"></i><i style="left:50px;width:1px;background:linear-gradient(#00ff7b 0px,#00ff78 5.5px,#00ff5a 6.5px,#18ff00 7.5px,#90ff00 8.5px,#00ff0c 9.5px,#00ff65 10.5px,#00ff7b 12.5px,#00ff7a 36.5px,#00ff4c 38.5px,#00ff7a 40.5px,#00ff72 50.5px,#00ff5f 51.5px,#00ff82 54.5px,#00ffa9 83.5px,#00ff1c 137.5px,#00ff19 142.5px,#bfff00 143.5px,#00ff19 144.5px,#00ff08 160.5px,#e3ff00 161.5px,#3eff00 162.5px,#00ff2e 163.5px,#00ff96 166.5px,#00ff9e 172px)"></i><i style="left:51px;width:1px;background:linear-gradient(#00ff7b 0px,#00ff78 5.5px,#00ff5a 6.5px,#18ff00 7.5px,#90ff00 8.5px,#00ff0c 9.5px,#00ff65 10.5px,#00ff7b 12.5px,#00ff7a 36.5px,#00ff4c 38.5px,#00ff7a 40.5px,#00ff72 50.5px,#00ff5f 51.5px,#00ff82 54.5px,#0fa 85.5px,#00ff3d 140.5px,#00ff3c 142.5px,#bfff00 143.5px,#00ff3c 144.5px,#00ff26 159.5px,#91ff00 160.5px,#e3ff00 161.5px,#c2ff00 162.5px,#00ff2f 163.5px,#00ff3d 164.5px,#00ff8a 166.5px,#00ff9b 172px)"></i><i style="left:52px;width:1px;background:linear-gradient(#00ff7b 0px,#00ff78 5.5px,#00ff5a 6.5px,#18ff00 7.5px,#90ff00 8.5px,#00ff0c 9.5px,#00ff65 10.5px,#00ff7b 12.5px,#00ff7a 36.5px,#00ff4c 38.5px,#00ff7a 40.5px,#00ff72 50.5px,#00ff5f 51.5px,#00ff82 54.5px,#00ffad 85.5px,#00ff49 141.5px,#00ff49 143.5px,#bfff00 144.5px,#bfff00 145.5px,#00ff49 146.5px,#00ff31 159.5px,#00ff09 160.5px,#e3ff00 161.5px,#bfff00 162.5px,#bfff00 163.5px,#0f3 164.5px,#00ff93 167.5px,#bfff00 168.5px,#bfff00 169.5px,#00ff9d 170.5px,#00ff9d 172px)"></i><i style="left:53px;width:1px;background:linear-gradient(#00ff7b 0px,#00ff78 5.5px,#00ff5a 6.5px,#18ff00 7.5px,#90ff00 8.5px,#00ff0c 9.5px,#00ff65 10.5px,#00ff7b 12.5px,#00ff7a 36.5px,#00ff4c 38.5px,#00ff7a 40.5px,#00ff72 50.5px,#00ff5f 51.5px,#00ff82 54.5px,#00ffab 85.5px,#00ff37 140.5px,#00ff36 143.5px,#bfff00 144.5px,#bfff00 145.5px,#00ff36 146.5px,#00ff1e 161.5px,#bfff00 162.5px,#bfff00 163.5px,#00ff15 164.5px,#00ff83 167.5px,#bfff00 168.5px,#bfff00 169.5px,#00ff9d 170.5px,#00ff9d 172px)"></i><i style="left:54px;width:1px;background:linear-gradient(#00ff7b 0px,#00ff78 5.5px,#00ff5a 6.5px,#18ff00 7.5px,#90ff00 8.5px,#00ff0c 9.5px,#00ff65 10.5px,#00ff7b 12.5px,#00ff7a 36.5px,#00ff4c 38.5px,#00ff7a 40.5px,#00ff72 50.5px,#00ff60 51.5px,#00ff83 54.5px,#00ffa9 82.5px,#00ff19 127.5px,#00ff10 153.5px,#bfff00 154.5px,#bfff00 155.5px,#00ff05 156.5px,#12ff00 161.5px,#e3ff00 162.5px,#e3ff00 163.5px,#41ff00 164.5px,#0eff00 165.5px,#00ff83 168.5px,#00ffa0 170.5px,#00ffa0 172px)"></i><i style="left:55px;width:1px;background:linear-gradient(#00ff7b 0px,#00ff78 5.5px,#00ff5a 6.5px,#18ff00 7.5px,#90ff00 8.5px,#00ff0c 9.5px,#00ff65 10.5px,#00ff7b 12.5px,#00ff7a 36.5px,#00ff4d 38.5px,#00ff7a 40.5px,#00ff72 50.5px,#00ff60 51.5px,#00ff83 54.5px,#00ffa9 81.5px,#00ff52 107.5px,#00ff19 124.5px,#00ff10 153.5px,#bfff00 154.5px,#bfff00 155.5px,#00ff05 156.5px,#20ff00 161.5px,#e3ff00 162.5px,#e3ff00 163.5px,#62ff00 164.5px,#00ff05 166.5px,#00ff8b 169.5px,#00ffa2 172px)"></i><i style="left:56px;width:1px;background:linear-gradient(#00ff7b 0px,#00ff78 5.5px,#00ff5a 6.5px,#18ff00 7.5px,#90ff00 8.5px,#00ff0c 9.5px,#00ff65 10.5px,#00ff7b 12.5px,#00ff7a 36.5px,#00ff4c 38.5px,#00ff7a 40.5px,#00ff72 50.5px,#00ff60 51.5px,#00ff83 54.5px,#00ffa9 82.5px,#00ff19 126.5px,#00ff19 145.5px,#bfff00 146.5px,#bfff00 147.5px,#00ff19 148.5px,#0eff00 160.5px,#12ff00 161.5px,#d0ff00 162.5px,#e3ff00 163.5px,#41ff00 164.5px,#16ff00 166.5px,#00ff48 168.5px,#00ff92 170.5px,#00ffa1 172px)"></i><i style="left:57px;width:1px;background:linear-gradient(#00ff7b 0px,#00ff78 5.5px,#00ff5a 6.5px,#18ff00 7.5px,#90ff00 8.5px,#00ff0c 9.5px,#00ff65 10.5px,#00ff7b 12.5px,#00ff7a 36.5px,#00ff4d 38.5px,#00ff7a 40.5px,#00ff72 50.5px,#00ff60 51.5px,#00ff83 54.5px,#00ffaf 84.5px,#00ff32 140.5px,#00ff30 145.5px,#bfff00 146.5px,#bfff00 147.5px,#00ff30 148.5px,#00ff13 161.5px,#4aff00 162.5px,#00ff09 163.5px,#00ff0f 165.5px,#00ff4b 168.5px,#00ff9c 172px)"></i><i style="left:58px;width:1px;background:linear-gradient(#00ff7b 0px,#00ff78 5.5px,#00ff5a 6.5px,#18ff00 7.5px,#90ff00 8.5px,#00ff0c 9.5px,#00ff65 10.5px,#00ff7b 12.5px,#00ff7a 36.5px,#00ff4d 38.5px,#00ff7a 40.5px,#00ff73 50.5px,#00ff60 51.5px,#00ff83 54.5px,#00ffb4 86.5px,#00ff59 144.5px,#00ff59 145.5px,#bfff00 146.5px,#bfff00 147.5px,#00ff59 148.5px,#00ff2e 163.5px,#e3ff00 164.5px,#19ff00 165.5px,#00ff40 166.5px,#00ff6a 169.5px,#bfff00 170.5px,#bfff00 172px)"></i><i style="left:59px;width:1px;background:linear-gradient(#00ff7b 0px,#00ff78 5.5px,#00ff5a 6.5px,#18ff00 7.5px,#90ff00 8.5px,#00ff0c 9.5px,#00ff65 10.5px,#00ff7b 12.5px,#00ff7a 36.5px,#00ff4d 38.5px,#00ff7a 40.5px,#00ff73 50.5px,#00ff60 51.5px,#00ff83 54.5px,#00ffb2 84.5px,#00ff3d 142.5px,#00ff3c 145.5px,#bfff00 146.5px,#bfff00 147.5px,#00ff3c 148.5px,#00ff1b 162.5px,#a5ff00 163.5px,#e3ff00 164.5px,#96ff00 165.5px,#00ff23 166.5px,#00ff45 169.5px,#bfff00 170.5px,#bfff00 172px)"></i><i style="left:60px;width:1px;background:linear-gradient(#00ff7b 0px,#00ff78 5.5px,#00ff5a 6.5px,#18ff00 7.5px,#90ff00 8.5px,#00ff0c 9.5px,#00ff65 10.5px,#00ff7b 12.5px,#00ff7a 36.5px,#00ff4c 38.5px,#00ff7a 40.5px,#00ff72 50.5px,#00ff60 51.5px,#00ff83 54.5px,#00ffae 85.5px,#00ff40 142.5px,#00ff24 158.5px,#00ff21 159.5px,#bfff00 160.5px,#bfff00 161.5px,#00ff1c 162.5px,#e2ff00 163.5px,#e3ff00 164.5px,#00ff15 165.5px,#00ff34 169.5px,#00ff6b 172px)"></i><i style="left:61px;width:1px;background:linear-gradient(#00ff7b 0px,#00ff78 5.5px,#00ff5a 6.5px,#18ff00 7.5px,#90ff00 8.5px,#00ff0c 9.5px,#00ff65 10.5px,#00ff7b 12.5px,#00ff7a 36.5px,#00ff4c 38.5px,#00ff7a 40.5px,#00ff72 50.5px,#00ff60 51.5px,#00ff83 54.5px,#00ffac 83.5px,#00ff1a 139.5px,#00ff05 156.5px,#0aff00 159.5px,#bfff00 160.5px,#bfff00 161.5px,#16ff00 162.5px,#e3ff00 163.5px,#3dff00 164.5px,#03ff00 167.5px,#00ff1a 170.5px,#00ff3e 172px)"></i><i style="left:62px;width:1px;background:linear-gradient(#00ff7b 0px,#00ff78 5.5px,#00ff5a 6.5px,#18ff00 7.5px,#90ff00 8.5px,#00ff0c 9.5px,#00ff65 10.5px,#00ff7b 12.5px,#00ff7a 36.5px,#00ff4c 38.5px,#00ff7a 40.5px,#00ff72 50.5px,#00ff60 51.5px,#00ff83 54.5px,#0fa 82.5px,#00ff19 129.5px,#00ff0d 154.5px,#12ff00 161.5px,#2aff00 163.5px,#bfff00 164.5px,#bfff00 165.5px,#16ff00 166.5px,#14ff00 170.5px,#00ff0c 172px)"></i><i style="left:63px;width:1px;background:linear-gradient(#00ff7b 0px,#00ff78 5.5px,#00ff5a 6.5px,#18ff00 7.5px,#90ff00 8.5px,#00ff0c 9.5px,#00ff65 10.5px,#00ff7b 12.5px,#00ff7a 36.5px,#00ff4d 38.5px,#00ff7a 40.5px,#00ff72 50.5px,#00ff60 51.5px,#00ff83 54.5px,#00ffac 83.5px,#00ff19 140.5px,#00ff05 156.5px,#16ff00 162.5px,#2aff00 163.5px,#bfff00 164.5px,#bfff00 165.5px,#14ff00 166.5px,#00ff0b 172px)"></i><i style="left:64px;width:1px;background:linear-gradient(#00ff7b 0px,#00ff78 5.5px,#00ff5a 6.5px,#18ff00 7.5px,#90ff00 8.5px,#00ff0c 9.5px,#00ff65 10.5px,#00ff7b 12.5px,#00ff7a 36.5px,#00ff4d 38.5px,#00ff7a 40.5px,#00ff72 50.5px,#00ff60 51.5px,#00ff83 54.5px,#00ffac 83.5px,#00ff19 136.5px,#00ff19 141.5px,#bfff00 142.5px,#bfff00 143.5px,#00ff19 144.5px,#0eff00 160.5px,#2aff00 163.5px,#d9ff00 164.5px,#2aff00 165.5px,#14ff00 167.5px,#0cff00 172px)"></i><i style="left:65px;width:1px;background:linear-gradient(#00ff7b 0px,#00ff78 5.5px,#00ff5a 6.5px,#18ff00 7.5px,#90ff00 8.5px,#00ff0c 9.5px,#00ff65 10.5px,#00ff7b 12.5px,#00ff7a 36.5px,#00ff4d 38.5px,#00ff7a 40.5px,#00ff72 50.5px,#00ff60 51.5px,#00ff83 54.5px,#00ffad 84.5px,#00ff27 141.5px,#bfff00 142.5px,#bfff00 143.5px,#00ff25 144.5px,#01ff00 162.5px,#e3ff00 163.5px,#acff00 164.5px,#13ff00 165.5px,#00ff03 167.5px,#00ff0a 172px)"></i><i style="left:66px;width:1px;background:linear-gradient(#00ff7b 0px,#00ff78 5.5px,#00ff5a 6.5px,#18ff00 7.5px,#90ff00 8.5px,#00ff0c 9.5px,#00ff65 10.5px,#00ff7b 12.5px,#00ff7a 36.5px,#00ff4d 38.5px,#00ff7a 40.5px,#00ff72 50.5px,#00ff60 51.5px,#00ff83 54.5px,#00ffb1 85.5px,#00ff49 144.5px,#00ff40 153.5px,#bfff00 154.5px,#bfff00 155.5px,#00ff35 156.5px,#00ff2e 158.5px,#e3ff00 159.5px,#e3ff00 163.5px,#5fff00 164.5px,#00ff18 165.5px,#00ff29 172px)"></i><i style="left:67px;width:1px;background:linear-gradient(#00ff7b 0px,#00ff78 5.5px,#00ff5a 6.5px,#18ff00 7.5px,#90ff00 8.5px,#00ff0c 9.5px,#00ff65 10.5px,#00ff7b 12.5px,#00ff7a 36.5px,#00ff4c 38.5px,#00ff7a 40.5px,#00ff72 50.5px,#00ff60 51.5px,#00ff82 54.5px,#00ffaf 85.5px,#00ff47 144.5px,#00ff3e 153.5px,#bfff00 154.5px,#bfff00 155.5px,#0f3 156.5px,#00ff2c 158.5px,#e3ff00 159.5px,#e3ff00 163.5px,#00ff09 164.5px,#00ff23 168.5px,#00ff25 172px)"></i><i style="left:68px;width:1px;background:linear-gradient(#00ff7b 0px,#00ff78 5.5px,#00ff5a 6.5px,#18ff00 7.5px,#90ff00 8.5px,#00ff0c 9.5px,#00ff65 10.5px,#00ff7b 12.5px,#00ff7a 36.5px,#00ff4c 38.5px,#00ff7a 40.5px,#00ff72 50.5px,#00ff60 51.5px,#00ff83 54.5px,#00ffad 84.5px,#00ff25 141.5px,#00ff0c 157.5px,#00ff08 158.5px,#e3ff00 159.5px,#e3ff00 162.5px,#19ff00 163.5px,#bfff00 164.5px,#bfff00 165.5px,#05ff00 166.5px,#01ff00 172px)"></i><i style="left:69px;width:1px;background:linear-gradient(#00ff7b 0px,#00ff78 5.5px,#00ff5a 6.5px,#18ff00 7.5px,#90ff00 8.5px,#00ff0c 9.5px,#00ff65 10.5px,#00ff7b 12.5px,#00ff7a 36.5px,#00ff4c 38.5px,#00ff7a 40.5px,#00ff72 50.5px,#00ff60 51.5px,#00ff82 54.5px,#0fa 82.5px,#00ff19 133.5px,#00ff09 155.5px,#04ff00 158.5px,#e3ff00 159.5px,#e3ff00 162.5px,#2aff00 163.5px,#bfff00 164.5px,#bfff00 165.5px,#16ff00 166.5px,#14ff00 172px)"></i><i style="left:70px;width:1px;background:linear-gradient(#00ff7b 0px,#00ff78 5.5px,#00ff5a 6.5px,#18ff00 7.5px,#90ff00 8.5px,#00ff0c 9.5px,#00ff65 10.5px,#00ff7b 12.5px,#00ff7a 36.5px,#00ff4c 38.5px,#00ff7a 40.5px,#00ff72 50.5px,#00ff5f 51.5px,#00ff82 54.5px,#00ffa9 82.5px,#00ff19 133.5px,#00ff10 153.5px,#bfff00 154.5px,#bfff00 155.5px,#00ff05 156.5px,#12ff00 161.5px,#bfff00 162.5px,#bfff00 163.5px,#41ff00 164.5px,#16ff00 166.5px,#14ff00 172px)"></i><i style="left:71px;width:1px;background:linear-gradient(#00ff7b 0px,#00ff78 5.5px,#00ff5a 6.5px,#18ff00 7.5px,#90ff00 8.5px,#00ff0c 9.5px,#00ff65 10.5px,#00ff7b 12.5px,#00ff7a 36.5px,#00ff4c 38.5px,#00ff7a 40.5px,#00ff72 50.5px,#00ff5f 51.5px,#00ff82 54.5px,#00ffa7 82.5px,#00ff19 127.5px,#00ff10 153.5px,#bfff00 154.5px,#bfff00 155.5px,#00ff05 156.5px,#12ff00 161.5px,#bfff00 162.5px,#bfff00 163.5px,#41ff00 164.5px,#16ff00 166.5px,#14ff00 172px)"></i><i style="left:72px;width:1px;background:linear-gradient(#00ff7b 0px,#00ff78 5.5px,#00ff5a 6.5px,#18ff00 7.5px,#90ff00 8.5px,#00ff0c 9.5px,#00ff65 10.5px,#00ff7b 12.5px,#00ff7a 36.5px,#00ff4c 38.5px,#00ff7a 40.5px,#00ff72 50.5px,#00ff60 51.5px,#00ff82 54.5px,#00ffac 83.5px,#00ff24 141.5px,#00ff09 158.5px,#00ff06 159.5px,#bfff00 160.5px,#bfff00 161.5px,#e3ff00 162.5px,#74ff00 163.5px,#2dff00 164.5px,#03ff00 166.5px,#01ff00 169.5px,#bfff00 170.5px,#bfff00 172px)"></i><i style="left:73px;width:1px;background:linear-gradient(#00ff7b 0px,#00ff78 5.5px,#00ff5a 6.5px,#18ff00 7.5px,#90ff00 8.5px,#00ff0c 9.5px,#00ff65 10.5px,#00ff7b 12.5px,#00ff7a 36.5px,#00ff4c 38.5px,#00ff7a 40.5px,#00ff72 50.5px,#00ff5f 51.5px,#00ff82 54.5px,#00ffae 86.5px,#00ff4b 144.5px,#00ff2f 159.5px,#bfff00 160.5px,#e3ff00 161.5px,#e3ff00 162.5px,#0aff00 163.5px,#00ff2a 167.5px,#00ff2a 169.5px,#bfff00 170.5px,#bfff00 172px)"></i><i style="left:74px;width:1px;background:linear-gradient(#00ff7b 0px,#00ff78 5.5px,#00ff5a 6.5px,#18ff00 7.5px,#90ff00 8.5px,#00ff0c 9.5px,#00ff65 10.5px,#00ff7b 12.5px,#00ff7a 36.5px,#00ff4c 38.5px,#00ff7a 40.5px,#00ff71 50.5px,#00ff5f 51.5px,#00ff81 54.5px,#00ffa7 84.5px,#00ff28 141.5px,#00ff0e 158.5px,#00ff0b 159.5px,#e3ff00 160.5px,#e3ff00 162.5px,#0bff00 163.5px,#2f0 164.5px,#00ff07 167.5px,#00ff08 169.5px,#bfff00 170.5px,#bfff00 172px)"></i><i style="left:75px;width:1px;background:linear-gradient(#00ff7b 0px,#00ff78 5.5px,#00ff5a 6.5px,#18ff00 7.5px,#90ff00 8.5px,#00ff0c 9.5px,#00ff65 10.5px,#00ff7b 12.5px,#00ff7a 36.5px,#00ff4c 38.5px,#00ff7a 40.5px,#00ff72 50.5px,#00ff5f 51.5px,#00ff82 54.5px,#00ffac 85.5px,#00ff3b 142.5px,#00ff23 158.5px,#e3ff00 159.5px,#e3ff00 161.5px,#00ff1a 162.5px,#00ff02 164.5px,#00ff1e 168.5px,#00ff1f 169.5px,#bfff00 170.5px,#bfff00 172px)"></i><i style="left:76px;width:1px;background:linear-gradient(#00ff7b 0px,#00ff78 5.5px,#00ff5a 6.5px,#18ff00 7.5px,#90ff00 8.5px,#00ff0c 9.5px,#00ff65 10.5px,#00ff7b 12.5px,#00ff7a 36.5px,#00ff4c 38.5px,#00ff7a 40.5px,#00ff72 50.5px,#00ff60 51.5px,#00ff83 54.5px,#00ffb0 86.5px,#00ff4d 143.5px,#00ff39 157.5px,#e3ff00 158.5px,#e3ff00 159.5px,#c3ff00 160.5px,#00ff2f 161.5px,#00ff16 164.5px,#00ff31 167.5px,#bfff00 168.5px,#bfff00 169.5px,#00ff35 170.5px,#00ff3c 172px)"></i><i style="left:77px;width:1px;background:linear-gradient(#00ff7b 0px,#00ff78 5.5px,#00ff5a 6.5px,#18ff00 7.5px,#90ff00 8.5px,#00ff0c 9.5px,#00ff65 10.5px,#00ff7b 12.5px,#00ff7a 36.5px,#00ff4c 38.5px,#00ff7a 40.5px,#00ff72 50.5px,#00ff60 51.5px,#00ff83 54.5px,#00ffab 83.5px,#00ff19 138.5px,#00ff09 155.5px,#00ff05 156.5px,#e3ff00 157.5px,#e3ff00 158.5px,#8aff00 159.5px,#09ff00 160.5px,#20ff00 163.5px,#35ff00 164.5px,#01ff00 167.5px,#bfff00 168.5px,#bfff00 169.5px,#00ff12 170.5px,#00ff24 172px)"></i><i style="left:78px;width:1px;background:linear-gradient(#00ff7b 0px,#00ff78 5.5px,#00ff5a 6.5px,#18ff00 7.5px,#90ff00 8.5px,#00ff0c 9.5px,#00ff65 10.5px,#00ff7b 12.5px,#00ff7a 36.5px,#00ff4c 38.5px,#00ff7a 40.5px,#00ff72 50.5px,#00ff5f 51.5px,#00ff82 54.5px,#00ffa7 82.5px,#00ff19 125.5px,#00ff0d 154.5px,#00ff09 155.5px,#e3ff00 156.5px,#e3ff00 157.5px,#48ff00 158.5px,#e3ff00 159.5px,#e3ff00 162.5px,#2aff00 163.5px,#41ff00 164.5px,#16ff00 166.5px,#09ff00 169.5px,#00ff2d 172px)"></i><i style="left:79px;width:1px;background:linear-gradient(#00ff7b 0px,#00ff78 5.5px,#00ff5a 6.5px,#18ff00 7.5px,#90ff00 8.5px,#00ff0c 9.5px,#00ff65 10.5px,#00ff7b 12.5px,#00ff7a 36.5px,#00ff4d 38.5px,#00ff7a 40.5px,#00ff73 50.5px,#00ff60 51.5px,#00ff83 54.5px,#0fa 81.5px,#00ff48 110.5px,#00ff19 126.5px,#00ff0d 154.5px,#e3ff00 155.5px,#c2ff00 156.5px,#0f0 157.5px,#04ff00 158.5px,#e3ff00 159.5px,#e3ff00 162.5px,#2aff00 163.5px,#41ff00 164.5px,#16ff00 166.5px,#00ff03 168.5px,#0f5 172px)"></i><i style="left:80px;width:1px;background:linear-gradient(#00ff7b 0px,#00ff78 5.5px,#00ff5a 6.5px,#18ff00 7.5px,#90ff00 8.5px,#00ff0c 9.5px,#00ff65 10.5px,#00ff7b 12.5px,#00ff7a 36.5px,#00ff4d 38.5px,#00ff7a 40.5px,#00ff72 50.5px,#00ff60 51.5px,#00ff83 54.5px,#00ffab 82.5px,#00ff19 133.5px,#00ff19 145.5px,#bfff00 146.5px,#bfff00 147.5px,#00ff19 148.5px,#00ff10 153.5px,#e3ff00 154.5px,#00ff05 156.5px,#04ff00 158.5px,#e3ff00 159.5px,#e3ff00 162.5px,#23ff00 163.5px,#36ff00 164.5px,#00ff0a 166.5px,#00ff7b 172px)"></i><i style="left:81px;width:1px;background:linear-gradient(#00ff7b 0px,#00ff78 5.5px,#00ff5a 6.5px,#18ff00 7.5px,#90ff00 8.5px,#00ff0c 9.5px,#00ff65 10.5px,#00ff7b 12.5px,#00ff7a 36.5px,#00ff4d 38.5px,#00ff7a 40.5px,#00ff73 50.5px,#00ff60 51.5px,#00ff83 54.5px,#00ffae 84.5px,#00ff2a 140.5px,#00ff2a 145.5px,#bfff00 146.5px,#bfff00 147.5px,#00ff2b 148.5px,#00ff29 152.5px,#e3ff00 153.5px,#0eff00 154.5px,#00ff21 155.5px,#00ff05 164.5px,#00ff86 170.5px,#00ff93 172px)"></i><i style="left:82px;width:1px;background:linear-gradient(#00ff7b 0px,#00ff78 5.5px,#00ff5a 6.5px,#18ff00 7.5px,#90ff00 8.5px,#00ff0c 9.5px,#00ff65 10.5px,#00ff7b 12.5px,#00ff7a 36.5px,#00ff4c 38.5px,#00ff7a 40.5px,#00ff72 50.5px,#00ff60 51.5px,#00ff83 54.5px,#00ffab 83.5px,#00ff19 136.5px,#00ff16 151.5px,#b4ff00 152.5px,#0f1 153.5px,#00ff04 164.5px,#00ff74 168.5px,#00ff9d 172px)"></i><i style="left:83px;width:1px;background:linear-gradient(#00ff7b 0px,#00ff78 5.5px,#00ff5a 6.5px,#18ff00 7.5px,#90ff00 8.5px,#00ff0c 9.5px,#00ff65 10.5px,#00ff7b 12.5px,#00ff7a 36.5px,#00ff4c 38.5px,#00ff7a 40.5px,#00ff72 50.5px,#00ff60 51.5px,#00ff83 54.5px,#0fa 83.5px,#00ff19 138.5px,#00ff19 142.5px,#e3ff00 143.5px,#e3ff00 145.5px,#00ff19 146.5px,#39ff00 147.5px,#00ff1b 148.5px,#00ff1c 150.5px,#60ff00 151.5px,#00ff1a 152.5px,#00ff16 162.5px,#00ff21 164.5px,#00ff7a 167.5px,#00ffa0 172px)"></i><i style="left:84px;width:1px;background:linear-gradient(#00ff7b 0px,#00ff78 5.5px,#00ff5a 6.5px,#18ff00 7.5px,#90ff00 8.5px,#00ff0c 9.5px,#00ff65 10.5px,#00ff7b 12.5px,#00ff7a 36.5px,#00ff4c 38.5px,#00ff7a 40.5px,#00ff72 50.5px,#00ff60 51.5px,#00ff83 54.5px,#00ffac 84.5px,#00ff2b 139.5px,#00ff2b 142.5px,#e3ff00 143.5px,#e3ff00 145.5px,#83ff00 146.5px,#00ff2d 147.5px,#00ff2f 149.5px,#00ff08 150.5px,#00ff2e 151.5px,#00ff20 159.5px,#bfff00 160.5px,#bfff00 161.5px,#00ff38 162.5px,#00ff45 164.5px,#00ff8f 167.5px,#00ff9f 169.5px,#bfff00 170.5px,#bfff00 172px)"></i><i style="left:85px;width:1px;background:linear-gradient(#00ff7b 0px,#00ff78 5.5px,#00ff5a 6.5px,#18ff00 7.5px,#90ff00 8.5px,#00ff0c 9.5px,#00ff65 10.5px,#00ff7b 12.5px,#00ff7a 36.5px,#00ff4d 38.5px,#00ff7a 40.5px,#00ff73 50.5px,#00ff60 51.5px,#00ff83 54.5px,#00ffac 82.5px,#00ff19 131.5px,#00ff19 142.5px,#e3ff00 143.5px,#e3ff00 145.5px,#00ff19 146.5px,#00ff08 159.5px,#bfff00 160.5px,#bfff00 161.5px,#00ff3d 162.5px,#0f5 164.5px,#00ff9e 167.5px,#00ffa3 169.5px,#bfff00 170.5px,#bfff00 172px)"></i><i style="left:86px;width:1px;background:linear-gradient(#00ff7b 0px,#00ff78 5.5px,#00ff5a 6.5px,#18ff00 7.5px,#90ff00 8.5px,#00ff0c 9.5px,#00ff65 10.5px,#00ff7b 12.5px,#00ff7a 36.5px,#00ff4d 38.5px,#00ff7a 40.5px,#00ff73 50.5px,#00ff61 51.5px,#00ff84 54.5px,#00ffb1 82.5px,#00ff19 138.5px,#00ff19 142.5px,#4fff00 143.5px,#e3ff00 144.5px,#00ff1a 145.5px,#00ff1d 153.5px,#bfff00 154.5px,#bfff00 157.5px,#00ff1f 158.5px,#00ff6f 163.5px,#00ff8e 165.5px,#bfff00 166.5px,#bfff00 167.5px,#00ffa7 168.5px,#00ffa7 172px)"></i><i style="left:87px;width:1px;background:linear-gradient(#00ff7b 0px,#00ff78 5.5px,#00ff5a 6.5px,#18ff00 7.5px,#90ff00 8.5px,#00ff0c 9.5px,#00ff65 10.5px,#00ff7b 12.5px,#00ff7a 36.5px,#00ff4d 38.5px,#00ff7a 40.5px,#00ff73 50.5px,#00ff60 51.5px,#00ff84 54.5px,#00ffb2 85.5px,#00ff46 140.5px,#00ff47 141.5px,#8fff00 142.5px,#e3ff00 143.5px,#00ff48 144.5px,#00ff49 153.5px,#bfff00 154.5px,#bfff00 157.5px,#00ff54 158.5px,#0f8 163.5px,#00ff97 165.5px,#bfff00 166.5px,#bfff00 167.5px,#00ffa4 168.5px,#00ffa4 172px)"></i><i style="left:88px;width:1px;background:linear-gradient(#00ff7b 0px,#00ff78 5.5px,#00ff5a 6.5px,#18ff00 7.5px,#90ff00 8.5px,#00ff0c 9.5px,#00ff65 10.5px,#00ff7b 12.5px,#00ff7a 36.5px,#00ff4c 38.5px,#00ff7a 40.5px,#00ff72 50.5px,#00ff60 51.5px,#00ff83 54.5px,#00ffae 84.5px,#00ff3f 139.5px,#00ff14 140.5px,#e3ff00 141.5px,#e3ff00 142.5px,#00ff40 143.5px,#0f4 147.5px,#bfff00 148.5px,#bfff00 149.5px,#00ff46 150.5px,#0f4 153.5px,#bfff00 154.5px,#bfff00 157.5px,#00ff62 158.5px,#00ff8f 163.5px,#00ff93 165.5px,#00ffa0 172px)"></i><i style="left:89px;width:1px;background:linear-gradient(#00ff7b 0px,#00ff78 5.5px,#00ff5a 6.5px,#18ff00 7.5px,#90ff00 8.5px,#00ff0c 9.5px,#00ff65 10.5px,#00ff7b 12.5px,#00ff7a 36.5px,#00ff4c 38.5px,#00ff7a 40.5px,#00ff71 50.5px,#00ff5f 51.5px,#00ff81 54.5px,#00ffa6 83.5px,#00ff26 138.5px,#59ff00 139.5px,#e3ff00 140.5px,#e3ff00 141.5px,#00ff27 142.5px,#00ff2c 147.5px,#bfff00 148.5px,#bfff00 149.5px,#00ff30 150.5px,#00ff32 153.5px,#bfff00 154.5px,#bfff00 155.5px,#00ff4e 156.5px,#00ff94 162.5px,#00ff7f 164.5px,#0f9 168.5px,#0f9 172px)"></i><i style="left:90px;width:1px;background:linear-gradient(#00ff7b 0px,#00ff78 5.5px,#00ff5a 6.5px,#18ff00 7.5px,#90ff00 8.5px,#00ff0c 9.5px,#00ff65 10.5px,#00ff7b 12.5px,#00ff7a 36.5px,#00ff4c 38.5px,#00ff7a 40.5px,#00ff72 50.5px,#00ff5f 51.5px,#00ff82 54.5px,#00ffa8 83.5px,#00ff1f 137.5px,#b6ff00 138.5px,#e3ff00 139.5px,#e3ff00 140.5px,#00ff1f 141.5px,#00ff20 143.5px,#bfff00 144.5px,#bfff00 145.5px,#00ff24 146.5px,#00ff3b 153.5px,#00ff56 155.5px,#bfff00 156.5px,#bfff00 157.5px,#00ff81 158.5px,#00ff9b 162.5px,#00ff83 164.5px,#00ff9d 168.5px,#00ff9d 172px)"></i><i style="left:91px;width:1px;background:linear-gradient(#00ff7b 0px,#00ff78 5.5px,#00ff5a 6.5px,#18ff00 7.5px,#90ff00 8.5px,#00ff0c 9.5px,#00ff65 10.5px,#00ff7b 12.5px,#00ff7a 36.5px,#00ff4d 38.5px,#00ff7a 40.5px,#00ff73 50.5px,#00ff60 51.5px,#00ff83 54.5px,#00ffae 83.5px,#00ff2b 136.5px,#e3ff00 137.5px,#e3ff00 139.5px,#00ff2b 140.5px,#00ff2d 143.5px,#bfff00 144.5px,#bfff00 145.5px,#00ff31 146.5px,#00ff4f 152.5px,#00ff79 155.5px,#bfff00 156.5px,#bfff00 157.5px,#00ff9b 158.5px,#00ff96 163.5px,#00ff89 164.5px,#00ffa3 168.5px,#00ffa3 172px)"></i><i style="left:92px;width:1px;background:linear-gradient(#00ff7b 0px,#00ff78 5.5px,#00ff5a 6.5px,#18ff00 7.5px,#90ff00 8.5px,#00ff0c 9.5px,#00ff65 10.5px,#00ff7b 12.5px,#00ff7a 36.5px,#00ff4d 38.5px,#00ff7a 40.5px,#00ff73 50.5px,#00ff60 51.5px,#00ff84 54.5px,#00ffaf 83.5px,#00ff2d 135.5px,#e3ff00 136.5px,#e3ff00 138.5px,#00ff2c 139.5px,#00ff40 149.5px,#00ffa5 157.5px,#00ff98 163.5px,#00ff8b 164.5px,#00ff98 165.5px,#bfff00 166.5px,#bfff00 167.5px,#00ffa5 168.5px,#00ffa5 169.5px,#bfff00 170.5px,#bfff00 172px)"></i><i style="left:93px;width:1px;background:linear-gradient(#00ff7b 0px,#00ff7b 1.5px,#06ff00 2.5px,#06ff00 4.5px,#00ff78 5.5px,#00ff5a 6.5px,#7eff00 7.5px,#baff00 8.5px,#68ff00 9.5px,#00ff65 10.5px,#00ff79 11.5px,#06ff00 12.5px,#06ff00 14.5px,#00ff7b 15.5px,#00ff7b 16.5px,#06ff00 17.5px,#06ff00 19.5px,#00ff7b 20.5px,#00ff7b 21.5px,#06ff00 22.5px,#06ff00 24.5px,#00ff7b 25.5px,#00ff7b 26.5px,#06ff00 27.5px,#06ff00 29.5px,#00ff7b 30.5px,#00ff7b 31.5px,#06ff00 32.5px,#06ff00 34.5px,#00ff7b 35.5px,#00ff7a 36.5px,#15ff00 37.5px,#2fff00 38.5px,#15ff00 39.5px,#00ff7a 40.5px,#00ff7b 41.5px,#06ff00 42.5px,#06ff00 44.5px,#00ff7b 45.5px,#00ff7b 46.5px,#06ff00 47.5px,#05ff00 49.5px,#00ff72 50.5px,#00ff5f 51.5px,#0cff00 52.5px,#0f0 54.5px,#00ff84 55.5px,#00ff85 56.5px,#00ff03 57.5px,#00ff04 59.5px,#00ff8d 60.5px,#00ff8f 61.5px,#00ff07 62.5px,#00ff0a 64.5px,#00ff97 65.5px,#00ff9a 66.5px,#00ff0d 67.5px,#00ff0f 69.5px,#00ffa2 70.5px,#00ffa4 71.5px,#00ff12 72.5px,#00ff13 74.5px,#0fa 75.5px,#00ffab 76.5px,#00ff15 77.5px,#00ff16 79.5px,#00ffae 80.5px,#00ffae 81.5px,#00ff16 82.5px,#00ff16 84.5px,#00ffad 85.5px,#00ffac 86.5px,#00ff15 87.5px,#00ff13 89.5px,#00ffa7 90.5px,#00ffa5 91.5px,#00ff10 92.5px,#00ff0e 94.5px,#00ff9c 95.5px,#00ff9a 96.5px,#00ff0b 97.5px,#00ff09 99.5px,#00ff91 100.5px,#00ff8f 101.5px,#00ff05 102.5px,#00ff03 104.5px,#00ff86 105.5px,#00ff84 106.5px,#0f0 107.5px,#04ff00 109.5px,#00ff7b 110.5px,#00ff79 111.5px,#0aff00 112.5px,#0eff00 114.5px,#00ff70 115.5px,#00ff6e 116.5px,#13ff00 117.5px,#16ff00 119.5px,#0f6 120.5px,#00ff65 121.5px,#1bff00 122.5px,#1eff00 124.5px,#00ff5e 125.5px,#00ff5d 126.5px,#2f0 127.5px,#24ff00 129.5px,#00ff57 130.5px,#00ff56 131.5px,#28ff00 132.5px,#ff5400 133.5px,#ff5400 136.5px,#adff00 137.5px,#2bff00 138.5px,#2bff00 139.5px,#00ff51 140.5px,#00ff51 141.5px,#2aff00 142.5px,#28ff00 144.5px,#0f5 145.5px,#00ff57 146.5px,#23ff00 147.5px,#13ff00 149.5px,#0f7 150.5px,#00ff82 151.5px,#00ff06 152.5px,#00ff0e 154.5px,#00ffa5 155.5px,#00ffa8 156.5px,#00ff13 157.5px,#0f1 159.5px,#00ffa1 160.5px,#00ff9f 161.5px,#00ff0d 162.5px,#00ff01 164.5px,#00ff91 165.5px,#bfff00 166.5px,#bfff00 167.5px,#00ff0e 168.5px,#00ff0e 169.5px,#bfff00 170.5px,#bfff00 172px)"></i><i style="left:94px;width:1px;background:linear-gradient(#00ff7b 0px,#00ff7b 1.5px,#e3ff00 2.5px,#e3ff00 4.5px,#00ff78 5.5px,#00ff5a 6.5px,#e3ff00 7.5px,#e3ff00 9.5px,#00ff65 10.5px,#00ff79 11.5px,#e3ff00 12.5px,#e3ff00 14.5px,#00ff7b 15.5px,#00ff7b 16.5px,#e3ff00 17.5px,#e3ff00 19.5px,#00ff7b 20.5px,#00ff7b 21.5px,#e3ff00 22.5px,#e3ff00 24.5px,#00ff7b 25.5px,#00ff7b 26.5px,#e3ff00 27.5px,#e3ff00 29.5px,#00ff7b 30.5px,#00ff7b 31.5px,#e3ff00 32.5px,#e3ff00 34.5px,#00ff7b 35.5px,#00ff7a 36.5px,#e3ff00 37.5px,#e3ff00 39.5px,#00ff7a 40.5px,#00ff7b 41.5px,#e3ff00 42.5px,#e3ff00 44.5px,#00ff7b 45.5px,#00ff7b 46.5px,#e3ff00 47.5px,#e3ff00 49.5px,#00ff72 50.5px,#00ff5f 51.5px,#e3ff00 52.5px,#e3ff00 54.5px,#00ff83 55.5px,#00ff85 56.5px,#e3ff00 57.5px,#e3ff00 59.5px,#00ff8c 60.5px,#00ff8e 61.5px,#e3ff00 62.5px,#e3ff00 64.5px,#00ff96 65.5px,#00ff98 66.5px,#e3ff00 67.5px,#e3ff00 69.5px,#00ffa1 70.5px,#00ffa3 71.5px,#e3ff00 72.5px,#e3ff00 74.5px,#00ffa9 75.5px,#00ffab 76.5px,#e3ff00 77.5px,#e3ff00 79.5px,#00ffaf 80.5px,#00ffaf 81.5px,#e3ff00 82.5px,#e3ff00 84.5px,#00ffaf 85.5px,#00ffaf 86.5px,#e3ff00 87.5px,#e3ff00 89.5px,#00ffac 90.5px,#0fa 91.5px,#e3ff00 92.5px,#e3ff00 94.5px,#00ffa4 95.5px,#00ffa2 96.5px,#e3ff00 97.5px,#e3ff00 99.5px,#00ff9c 100.5px,#00ff9a 101.5px,#e3ff00 102.5px,#e3ff00 104.5px,#00ff94 105.5px,#00ff92 106.5px,#e3ff00 107.5px,#e3ff00 109.5px,#00ff8b 110.5px,#00ff8a 111.5px,#e3ff00 112.5px,#e3ff00 114.5px,#00ff84 115.5px,#00ff82 116.5px,#e3ff00 117.5px,#e3ff00 119.5px,#00ff7d 120.5px,#00ff7b 121.5px,#e3ff00 122.5px,#e3ff00 124.5px,#0f7 125.5px,#00ff76 126.5px,#e3ff00 127.5px,#e3ff00 129.5px,#00ff72 130.5px,#00ff71 131.5px,#e3ff00 132.5px,#ff5400 133.5px,#ff5400 136.5px,#e3ff00 137.5px,#e3ff00 139.5px,#00ff6e 140.5px,#00ff6e 141.5px,#e3ff00 142.5px,#e3ff00 144.5px,#00ff72 145.5px,#00ff75 146.5px,#e3ff00 147.5px,#e3ff00 149.5px,#00ff96 150.5px,#00ff9e 151.5px,#e3ff00 152.5px,#e3ff00 154.5px,#00ffad 155.5px,#00ffab 156.5px,#e3ff00 157.5px,#e3ff00 159.5px,#00ff9e 160.5px,#00ff9c 161.5px,#e3ff00 162.5px,#e3ff00 164.5px,#00ff8e 165.5px,#00ff9a 166.5px,#e3ff00 167.5px,#e3ff00 169.5px,#00ff9b 170.5px,#00ff9b 172px)"></i><i style="left:95px;width:1px;background:linear-gradient(#00ff7b 0px,#00ff78 5.5px,#00ff5a 6.5px,#18ff00 7.5px,#90ff00 8.5px,#00ff0c 9.5px,#00ff65 10.5px,#00ff7b 12.5px,#00ff7a 36.5px,#00ff4c 38.5px,#00ff7a 40.5px,#00ff72 50.5px,#00ff5f 51.5px,#00ff82 54.5px,#00ffad 85.5px,#00ff52 132.5px,#e3ff00 133.5px,#3fff00 134.5px,#00ff4f 135.5px,#00ff5c 145.5px,#00ffb3 153.5px,#00ff92 163.5px,#00ff85 164.5px,#00ff9f 168.5px,#00ff9f 172px)"></i><i style="left:96px;width:1px;background:linear-gradient(#00ff7b 0px,#00ff78 5.5px,#00ff5a 6.5px,#18ff00 7.5px,#90ff00 8.5px,#00ff0c 9.5px,#00ff65 10.5px,#00ff7b 12.5px,#00ff7a 36.5px,#00ff4d 38.5px,#00ff7a 40.5px,#00ff72 50.5px,#00ff60 51.5px,#00ff83 54.5px,#00ffb0 85.5px,#00ff5c 127.5px,#00ff02 128.5px,#00ff59 129.5px,#00ff57 131.5px,#adff00 132.5px,#00ff40 133.5px,#00ff53 135.5px,#00ff64 144.5px,#00ffbc 152.5px,#00ff95 163.5px,#0f8 164.5px,#00ffa2 168.5px,#00ffa2 172px)"></i><i style="left:97px;width:1px;background:linear-gradient(#00ff7b 0px,#00ff78 5.5px,#00ff5a 6.5px,#18ff00 7.5px,#90ff00 8.5px,#00ff0c 9.5px,#00ff65 10.5px,#00ff7b 12.5px,#00ff7a 36.5px,#00ff4d 38.5px,#00ff7a 40.5px,#00ff72 50.5px,#00ff60 51.5px,#00ff83 54.5px,#00ffb4 87.5px,#00ff7a 125.5px,#00ff61 126.5px,#a4ff00 127.5px,#0f7 128.5px,#00ff75 130.5px,#00ff12 131.5px,#00ff74 132.5px,#00ff81 143.5px,#00ffc2 151.5px,#00ff95 163.5px,#0f8 164.5px,#00ffa2 168.5px,#00ffa2 172px)"></i><i style="left:98px;width:1px;background:linear-gradient(#00ff7b 0px,#00ff78 5.5px,#00ff5a 6.5px,#18ff00 7.5px,#90ff00 8.5px,#00ff0c 9.5px,#00ff65 10.5px,#00ff7b 12.5px,#00ff7a 36.5px,#00ff4c 38.5px,#00ff7a 40.5px,#00ff72 50.5px,#00ff60 51.5px,#00ff83 54.5px,#00ffb4 87.5px,#00ff81 124.5px,#1aff00 125.5px,#e3ff00 126.5px,#00ff7e 127.5px,#00ff82 141.5px,#00ffb7 147.5px,#bfff00 148.5px,#bfff00 149.5px,#00ffc4 150.5px,#00ff94 163.5px,#00ff87 164.5px,#00ffa1 168.5px,#00ffa1 172px)"></i><i style="left:99px;width:1px;background:linear-gradient(#00ff7b 0px,#00ff78 5.5px,#00ff5a 6.5px,#18ff00 7.5px,#90ff00 8.5px,#00ff0c 9.5px,#00ff65 10.5px,#00ff7b 12.5px,#00ff7a 36.5px,#00ff4d 38.5px,#00ff7a 40.5px,#00ff73 50.5px,#00ff60 51.5px,#00ff83 54.5px,#00ffb5 86.5px,#00ff7f 122.5px,#00ff3e 123.5px,#e3ff00 124.5px,#e3ff00 125.5px,#00ff7a 126.5px,#00ff80 140.5px,#0fb 146.5px,#e3ff00 147.5px,#e3ff00 150.5px,#00ffc4 151.5px,#00ff96 163.5px,#00ff89 164.5px,#00ffa3 168.5px,#00ffa3 169.5px,#00ff03 170.5px,#bfff00 172px)"></i><i style="left:100px;width:1px;background:linear-gradient(#00ff7b 0px,#00ff78 5.5px,#00ff5a 6.5px,#18ff00 7.5px,#90ff00 8.5px,#00ff0c 9.5px,#00ff65 10.5px,#00ff7b 12.5px,#00ff7a 36.5px,#00ff4d 38.5px,#00ff7a 40.5px,#00ff73 50.5px,#00ff60 51.5px,#00ff83 54.5px,#00ffb3 85.5px,#00ff71 121.5px,#67ff00 122.5px,#e3ff00 123.5px,#e3ff00 124.5px,#00ff6b 125.5px,#00ff6c 138.5px,#00ff8e 141.5px,#bfff00 142.5px,#bfff00 143.5px,#00ffb3 144.5px,#00ffc3 146.5px,#e3ff00 147.5px,#e3ff00 150.5px,#00ffc4 151.5px,#00ffa8 159.5px,#bfff00 160.5px,#bfff00 161.5px,#00ffa1 162.5px,#00ff96 163.5px,#bfff00 164.5px,#bfff00 165.5px,#00ffa1 166.5px,#00ffa3 167.5px,#25ff00 168.5px,#bfff00 169.5px,#bfff00 170.5px,#00ffa3 172px)"></i><i style="left:101px;width:1px;background:linear-gradient(#00ff7b 0px,#00ff78 5.5px,#00ff5a 6.5px,#18ff00 7.5px,#90ff00 8.5px,#00ff0c 9.5px,#00ff65 10.5px,#00ff7b 12.5px,#00ff7a 36.5px,#00ff4c 38.5px,#00ff7a 40.5px,#00ff72 50.5px,#00ff60 51.5px,#00ff83 54.5px,#00ffb1 86.5px,#00ff74 120.5px,#e3ff00 121.5px,#e3ff00 123.5px,#00ff6f 124.5px,#00ff72 137.5px,#00ffa1 141.5px,#bfff00 142.5px,#bfff00 143.5px,#00ffbe 144.5px,#00ffc5 146.5px,#e3ff00 147.5px,#e3ff00 150.5px,#00ffc2 151.5px,#00ffa7 159.5px,#bfff00 160.5px,#bfff00 161.5px,#00ff9f 162.5px,#00ff94 163.5px,#bfff00 164.5px,#bfff00 165.5px,#00ff9f 166.5px,#bfff00 167.5px,#bfff00 169.5px,#00ffa1 170.5px,#00ffa1 172px)"></i><i style="left:102px;width:1px;background:linear-gradient(#00ff7b 0px,#00ff78 5.5px,#00ff5a 6.5px,#18ff00 7.5px,#90ff00 8.5px,#00ff0c 9.5px,#00ff65 10.5px,#00ff7b 12.5px,#00ff7a 36.5px,#00ff4c 38.5px,#00ff7a 40.5px,#00ff72 50.5px,#00ff60 51.5px,#00ff83 54.5px,#00ffb0 85.5px,#00ff71 119.5px,#e3ff00 120.5px,#e3ff00 122.5px,#00ff6b 123.5px,#00ff75 136.5px,#00ffc3 144.5px,#00ffc4 146.5px,#e3ff00 147.5px,#e3ff00 150.5px,#00ffc1 151.5px,#00ffac 157.5px,#bfff00 158.5px,#bfff00 159.5px,#00ffa3 160.5px,#00ff86 164.5px,#00ff93 165.5px,#bfff00 166.5px,#bfff00 168.5px,#00ffa0 169.5px,#00ffa0 172px)"></i><i style="left:103px;width:1px;background:linear-gradient(#00ff7b 0px,#00ff78 5.5px,#00ff5a 6.5px,#18ff00 7.5px,#90ff00 8.5px,#00ff0c 9.5px,#00ff65 10.5px,#00ff7b 12.5px,#00ff7a 36.5px,#00ff4d 38.5px,#00ff7a 40.5px,#00ff72 50.5px,#00ff60 51.5px,#00ff83 54.5px,#00ffac 83.5px,#00ff4f 118.5px,#e3ff00 119.5px,#e3ff00 120.5px,#6fff00 121.5px,#00ff47 122.5px,#00ff53 132.5px,#00ff79 137.5px,#00ffc2 142.5px,#00ffc5 146.5px,#e3ff00 147.5px,#e3ff00 150.5px,#00ffc2 151.5px,#00ffae 157.5px,#bfff00 158.5px,#bfff00 159.5px,#00ffa4 160.5px,#00ff49 161.5px,#00ffa0 162.5px,#00ff87 164.5px,#bfff00 165.5px,#a0ff00 166.5px,#00ff48 167.5px,#00ffa1 168.5px,#00ffa1 172px)"></i><i style="left:104px;width:1px;background:linear-gradient(#00ff7b 0px,#00ff78 5.5px,#00ff5a 6.5px,#18ff00 7.5px,#90ff00 8.5px,#00ff0c 9.5px,#00ff65 10.5px,#00ff7b 12.5px,#00ff7a 36.5px,#00ff4d 38.5px,#00ff7a 40.5px,#00ff73 50.5px,#00ff60 51.5px,#00ff83 54.5px,#00ffaf 83.5px,#00ff61 114.5px,#03ff00 115.5px,#00ff5c 116.5px,#00ff5a 117.5px,#e3ff00 118.5px,#c4ff00 119.5px,#00ff2c 120.5px,#00ff52 121.5px,#00ff73 132.5px,#00ffa9 138.5px,#00ffc8 143.5px,#00ffad 158.5px,#00ff36 159.5px,#bfff00 160.5px,#00ffa5 161.5px,#00ff97 163.5px,#7dff00 164.5px,#00ff58 165.5px,#00ffa3 166.5px,#00ffa4 167.5px,#bfff00 168.5px,#bfff00 169.5px,#00ffa4 170.5px,#00ffa4 172px)"></i><i style="left:105px;width:1px;background:linear-gradient(#00ff7b 0px,#00ff78 5.5px,#00ff5a 6.5px,#18ff00 7.5px,#90ff00 8.5px,#00ff0c 9.5px,#00ff65 10.5px,#00ff7b 12.5px,#00ff7a 36.5px,#00ff4d 38.5px,#00ff7a 40.5px,#00ff73 50.5px,#00ff61 51.5px,#00ff84 54.5px,#00ffb1 84.5px,#00ff6d 112.5px,#00ff40 113.5px,#c2ff00 114.5px,#0f6 115.5px,#00ff64 116.5px,#e3ff00 117.5px,#0f0 118.5px,#00ff60 119.5px,#00ff97 133.5px,#00ffca 141.5px,#00ffb6 156.5px,#00ff21 157.5px,#bfff00 158.5px,#bfff00 159.5px,#00ffa9 160.5px,#00ffa4 162.5px,#00ff6f 163.5px,#00ffa4 166.5px,#00ffa6 167.5px,#bfff00 168.5px,#bfff00 169.5px,#00ffa6 170.5px,#00ffa6 172px)"></i><i style="left:106px;width:1px;background:linear-gradient(#00ff7b 0px,#00ff78 5.5px,#00ff5a 6.5px,#18ff00 7.5px,#90ff00 8.5px,#00ff0c 9.5px,#00ff65 10.5px,#00ff7b 12.5px,#00ff7a 36.5px,#00ff4d 38.5px,#00ff7a 40.5px,#00ff73 50.5px,#00ff60 51.5px,#00ff83 54.5px,#00ffae 84.5px,#00ff6b 111.5px,#5dff00 112.5px,#e3ff00 113.5px,#00ff64 114.5px,#00ff63 115.5px,#60ff00 116.5px,#00ff63 117.5px,#00ffb8 136.5px,#00ffc6 149.5px,#00ffb6 155.5px,#bfff00 156.5px,#bfff00 158.5px,#00ffa8 159.5px,#00ff89 164.5px,#00ffa2 168.5px,#00ffa2 172px)"></i><i style="left:107px;width:1px;background:linear-gradient(#00ff7b 0px,#00ff78 5.5px,#00ff5a 6.5px,#18ff00 7.5px,#90ff00 8.5px,#00ff0c 9.5px,#00ff65 10.5px,#00ff7b 12.5px,#00ff7a 36.5px,#00ff4c 38.5px,#00ff7a 40.5px,#00ff72 50.5px,#00ff60 51.5px,#00ff82 54.5px,#00ffb0 86.5px,#0f8 109.5px,#00ff16 110.5px,#e3ff00 111.5px,#e3ff00 112.5px,#00ff85 113.5px,#00ff85 114.5px,#0f5 115.5px,#00ff87 116.5px,#00ffc4 141.5px,#00ffc0 151.5px,#00ffa8 152.5px,#00ffb7 154.5px,#bfff00 155.5px,#bfff00 157.5px,#00ffa8 158.5px,#00ff93 163.5px,#00ff86 164.5px,#00ff9f 168.5px,#00ff9f 172px)"></i><i style="left:108px;width:1px;background:linear-gradient(#00ff7b 0px,#00ff78 5.5px,#00ff5a 6.5px,#18ff00 7.5px,#90ff00 8.5px,#00ff0c 9.5px,#00ff65 10.5px,#00ff7b 12.5px,#00ff7a 36.5px,#00ff4d 38.5px,#00ff7a 40.5px,#00ff72 50.5px,#00ff60 51.5px,#00ff83 54.5px,#00ffb4 87.5px,#00ff94 107.5px,#00ff61 108.5px,#bcff00 109.5px,#e3ff00 110.5px,#e3ff00 111.5px,#00ff93 112.5px,#00ffc6 138.5px,#00ffc6 149.5px,#00ff95 150.5px,#40ff00 151.5px,#00ffc1 152.5px,#00ffbd 153.5px,#bfff00 154.5px,#bfff00 155.5px,#0f2 156.5px,#00ffae 157.5px,#bfff00 158.5px,#bfff00 159.5px,#00ffa5 160.5px,#0f8 164.5px,#00ffa2 168.5px,#00ffa2 172px)"></i><i style="left:109px;width:1px;background:linear-gradient(#00ff7b 0px,#00ff78 5.5px,#00ff5a 6.5px,#18ff00 7.5px,#90ff00 8.5px,#00ff0c 9.5px,#00ff65 10.5px,#00ff7b 12.5px,#00ff7a 36.5px,#00ff4d 38.5px,#00ff7a 40.5px,#00ff73 50.5px,#00ff60 51.5px,#00ff83 54.5px,#00ffb4 86.5px,#00ff98 106.5px,#42ff00 107.5px,#e3ff00 108.5px,#e3ff00 110.5px,#00ff9b 111.5px,#00ffc7 136.5px,#00ffc7 147.5px,#00ff7b 148.5px,#6eff00 149.5px,#bfff00 150.5px,#00ffc4 151.5px,#00ffc1 152.5px,#bfff00 153.5px,#00ff3f 154.5px,#00ffb7 155.5px,#00ffaf 157.5px,#bfff00 158.5px,#bfff00 159.5px,#00ffa6 160.5px,#00ff89 164.5px,#1f0 165.5px,#87ff00 166.5px,#e3ff00 167.5px,#00ffa3 168.5px,#00ffa3 172px)"></i><i style="left:110px;width:1px;background:linear-gradient(#00ff7b 0px,#00ff78 5.5px,#00ff5a 6.5px,#18ff00 7.5px,#90ff00 8.5px,#00ff0c 9.5px,#00ff65 10.5px,#00ff7b 12.5px,#00ff7a 36.5px,#00ff4c 38.5px,#00ff7a 40.5px,#00ff72 50.5px,#00ff60 51.5px,#00ff82 54.5px,#00ffb0 85.5px,#00ff95 105.5px,#e3ff00 106.5px,#e3ff00 108.5px,#bf0 109.5px,#00ff9b 110.5px,#00ffc4 132.5px,#00ffc4 145.5px,#00ff5f 146.5px,#9cff00 147.5px,#bfff00 148.5px,#bfff00 149.5px,#00ffc2 150.5px,#00ffc1 151.5px,#00ff5b 152.5px,#0fb 153.5px,#00ffac 157.5px,#00ff15 159.5px,#5cff00 160.5px,#00ffa1 161.5px,#00ff93 163.5px,#e3ff00 164.5px,#e3ff00 166.5px,#00ff9f 167.5px,#00ffa0 168.5px,#e3ff00 169.5px,#00ffa0 170.5px,#00ffa0 172px)"></i><i style="left:111px;width:1px;background:linear-gradient(#00ff7b 0px,#00ff78 5.5px,#00ff5a 6.5px,#18ff00 7.5px,#90ff00 8.5px,#00ff0c 9.5px,#00ff65 10.5px,#00ff7b 12.5px,#00ff7a 36.5px,#00ff4c 38.5px,#00ff7a 40.5px,#00ff71 50.5px,#00ff5f 51.5px,#00ff81 54.5px,#00ffab 86.5px,#0f9 104.5px,#e3ff00 105.5px,#e3ff00 107.5px,#00ff23 108.5px,#00ffa1 109.5px,#00ffbe 132.5px,#00ffbe 144.5px,#bfff00 145.5px,#bfff00 148.5px,#00ffbd 149.5px,#0fb 151.5px,#00ff87 152.5px,#00ff37 153.5px,#00ffb1 154.5px,#0fa 156.5px,#e3ff00 157.5px,#e3ff00 159.5px,#00ff9c 160.5px,#00ff98 162.5px,#e3ff00 163.5px,#e3ff00 164.5px,#b5ff00 165.5px,#00ff98 166.5px,#0f9 167.5px,#00ff6d 168.5px,#0f9 169.5px,#0f9 172px)"></i><i style="left:112px;width:1px;background:linear-gradient(#00ff7b 0px,#00ff78 5.5px,#00ff5a 6.5px,#18ff00 7.5px,#90ff00 8.5px,#00ff0c 9.5px,#00ff65 10.5px,#00ff7b 12.5px,#00ff7a 36.5px,#00ff4c 38.5px,#00ff7a 40.5px,#00ff72 50.5px,#00ff5f 51.5px,#00ff82 54.5px,#00ffad 86.5px,#00ff9f 103.5px,#e3ff00 104.5px,#e3ff00 105.5px,#3bff00 106.5px,#00ffa6 107.5px,#00ffbf 129.5px,#00ffbf 144.5px,#bfff00 145.5px,#bfff00 146.5px,#5aff00 147.5px,#00ffbf 148.5px,#00ffbf 149.5px,#e3ff00 150.5px,#e3ff00 152.5px,#00ffb6 153.5px,#00ffaf 155.5px,#e3ff00 156.5px,#e3ff00 158.5px,#00ffa0 159.5px,#00ff9c 161.5px,#00ff56 162.5px,#00ff8e 163.5px,#00ff81 164.5px,#00ff9b 168.5px,#00ff9b 172px)"></i><i style="left:113px;width:1px;background:linear-gradient(#00ff7b 0px,#00ff78 5.5px,#00ff5a 6.5px,#18ff00 7.5px,#90ff00 8.5px,#00ff0c 9.5px,#00ff65 10.5px,#00ff7b 12.5px,#00ff7a 36.5px,#00ff4c 38.5px,#00ff7a 40.5px,#00ff72 50.5px,#00ff5f 51.5px,#00ff82 54.5px,#00ffaf 86.5px,#00ffa0 99.5px,#00ff24 100.5px,#00ffa2 101.5px,#00ffa4 102.5px,#e3ff00 103.5px,#b8ff00 104.5px,#00ff74 105.5px,#00ffad 106.5px,#00ffc2 129.5px,#00ffc2 142.5px,#bfff00 143.5px,#bfff00 144.5px,#e3ff00 145.5px,#e3ff00 146.5px,#00ffc2 147.5px,#00ffc2 148.5px,#e3ff00 149.5px,#e3ff00 151.5px,#00ffbc 152.5px,#00ffb6 154.5px,#00ff02 155.5px,#00ff94 157.5px,#00ffa4 159.5px,#00ff84 164.5px,#00ff9e 168.5px,#00ff9e 172px)"></i><i style="left:114px;width:1px;background:linear-gradient(#00ff7b 0px,#00ff78 5.5px,#00ff5a 6.5px,#18ff00 7.5px,#90ff00 8.5px,#00ff0c 9.5px,#00ff65 10.5px,#00ff7b 12.5px,#00ff7a 36.5px,#00ff4d 38.5px,#00ff7a 40.5px,#00ff73 50.5px,#00ff60 51.5px,#00ff84 54.5px,#00ffbe 89.5px,#00ffb8 97.5px,#00ff7f 98.5px,#b6ff00 99.5px,#0fb 100.5px,#00ffbc 101.5px,#e3ff00 102.5px,#00ff35 103.5px,#00ffc0 104.5px,#00ffc9 136.5px,#00ff8d 137.5px,#00ff30 138.5px,#4eff00 139.5px,#00ffc9 140.5px,#00ffc9 141.5px,#e3ff00 142.5px,#e3ff00 145.5px,#00ffc9 146.5px,#00ffc9 147.5px,#e3ff00 148.5px,#4eff00 149.5px,#00ff30 150.5px,#00ffc6 151.5px,#0fa 159.5px,#bfff00 160.5px,#bfff00 161.5px,#00ffa3 162.5px,#00ff8b 164.5px,#00ffa5 167.5px,#bfff00 168.5px,#bfff00 169.5px,#00ffa5 170.5px,#00ffa5 172px)"></i><i style="left:115px;width:1px;background:linear-gradient(#00ff7b 0px,#00ff78 5.5px,#00ff5a 6.5px,#18ff00 7.5px,#90ff00 8.5px,#00ff0c 9.5px,#00ff65 10.5px,#00ff7b 12.5px,#00ff7a 36.5px,#00ff4d 38.5px,#00ff7a 40.5px,#00ff73 50.5px,#00ff60 51.5px,#00ff83 54.5px,#00ffbf 90.5px,#00ffbc 97.5px,#e3ff00 98.5px,#00ffbe 99.5px,#00ffbf 100.5px,#2bff00 101.5px,#00ffc1 102.5px,#00ffc7 135.5px,#e3ff00 136.5px,#e3ff00 138.5px,#00ffc7 139.5px,#00ffc7 140.5px,#e3ff00 141.5px,#e3ff00 143.5px,#4fff00 144.5px,#00ffc7 145.5px,#00ffa9 159.5px,#bfff00 160.5px,#bfff00 161.5px,#00ffa2 162.5px,#00ff89 164.5px,#00ffa3 167.5px,#bfff00 168.5px,#bfff00 169.5px,#00ffa3 170.5px,#00ffa3 172px)"></i><i style="left:116px;width:1px;background:linear-gradient(#00ff7b 0px,#00ff78 5.5px,#00ff5a 6.5px,#18ff00 7.5px,#90ff00 8.5px,#00ff0c 9.5px,#00ff65 10.5px,#00ff7b 12.5px,#00ff7a 36.5px,#00ff4c 38.5px,#00ff7a 40.5px,#00ff68 50.5px,#00ff5a 51.5px,#00ff76 55.5px,#00ff9c 94.5px,#00ff9e 99.5px,#00ff6a 100.5px,#00ffa0 101.5px,#00ffa3 135.5px,#e3ff00 136.5px,#e3ff00 137.5px,#00ffa3 138.5px,#00ffa3 139.5px,#00ff1c 140.5px,#00ff6e 141.5px,#00ffa3 142.5px,#00ff87 162.5px,#00ff7e 163.5px,#bfff00 164.5px,#bfff00 165.5px,#00ff87 166.5px,#0f8 167.5px,#bfff00 168.5px,#bfff00 169.5px,#0f8 170.5px,#0f8 172px)"></i><i style="left:117px;width:1px;background:linear-gradient(#00ff7b 0px,#00ff78 5.5px,#00ff5a 6.5px,#18ff00 7.5px,#90ff00 8.5px,#00ff0c 9.5px,#00ff65 10.5px,#00ff7b 12.5px,#00ff70 34.5px,#00ff4c 38.5px,#00ff4d 163.5px,#bfff00 164.5px,#bfff00 165.5px,#00ff4d 166.5px,#00ff4d 167.5px,#bfff00 168.5px,#bfff00 169.5px,#00ff4d 170.5px,#00ff4d 172px)"></i><i style="left:118px;width:1px;background:linear-gradient(#00ff7b 0px,#00ff78 5.5px,#00ff5a 6.5px,#18ff00 7.5px,#90ff00 8.5px,#00ff0c 9.5px,#00ff65 10.5px,#00ff7b 12.5px,#00ff7b 28.5px,#00ff4f 30.5px,#00ff6a 130.5px,#00ff64 157.5px,#bfff00 158.5px,#bfff00 159.5px,#00ff62 160.5px,#00ff5e 163.5px,#bfff00 164.5px,#bfff00 165.5px,#00ff61 166.5px,#00ff61 172px)"></i><i style="left:119px;width:1px;background:linear-gradient(#00ff7b 0px,#00ff78 5.5px,#00ff5a 6.5px,#18ff00 7.5px,#90ff00 8.5px,#00ff0c 9.5px,#00ff65 10.5px,#00ff7b 12.5px,#00ff70 26.5px,#00ff4d 28.5px,#9bff00 29.5px,#00ff4d 30.5px,#00ff5c 37.5px,#00ff4d 38.5px,#00ff78 41.5px,#00ff73 50.5px,#00ff60 51.5px,#00ff83 54.5px,#00ffc7 93.5px,#0fb 154.5px,#00ffb0 157.5px,#bfff00 158.5px,#bfff00 159.5px,#00ffa6 160.5px,#00ff96 163.5px,#bfff00 164.5px,#bfff00 165.5px,#00ffa2 166.5px,#00ffa3 172px)"></i><i style="left:120px;width:1px;background:linear-gradient(#00ff7b 0px,#00ff78 5.5px,#00ff5a 6.5px,#18ff00 7.5px,#90ff00 8.5px,#00ff0c 9.5px,#00ff65 10.5px,#00ff7b 12.5px,#00ff7b 23.5px,#00ff4f 25.5px,#00ff4d 27.5px,#9bff00 28.5px,#9bff00 29.5px,#00ff70 30.5px,#00ff7a 36.5px,#00ff4d 38.5px,#00ff7a 40.5px,#00ff73 50.5px,#00ff60 51.5px,#00ff83 54.5px,#00ffc7 93.5px,#00ffba 154.5px,#00ff96 163.5px,#00ff89 164.5px,#00ffa2 168.5px,#00ffa2 172px)"></i><i style="left:121px;width:1px;background:linear-gradient(#00ff7b 0px,#00ff78 5.5px,#00ff5a 6.5px,#18ff00 7.5px,#90ff00 8.5px,#00ff0c 9.5px,#00ff65 10.5px,#00ff7b 12.5px,#00ff70 21.5px,#00ff5a 22.5px,#00ff1a 23.5px,#00ff4d 24.5px,#00ff4f 26.5px,#9bff00 27.5px,#05ff00 28.5px,#00ff7b 29.5px,#00ff7a 36.5px,#00ff4d 38.5px,#00ff7a 40.5px,#00ff73 50.5px,#00ff60 51.5px,#00ff83 54.5px,#00ffc7 93.5px,#00ffba 154.5px,#00ff96 163.5px,#00ff89 164.5px,#00ffa3 168.5px,#00ffa3 172px)"></i><i style="left:122px;width:1px;background:linear-gradient(#00ff7b 0px,#00ff78 5.5px,#00ff5a 6.5px,#18ff00 7.5px,#90ff00 8.5px,#00ff0c 9.5px,#00ff65 10.5px,#00ff7b 12.5px,#00ff6f 19.5px,#00ff2a 21.5px,#7aff00 22.5px,#00ff4d 23.5px,#00ff70 25.5px,#29ff00 26.5px,#00ff78 27.5px,#00ff7a 36.5px,#00ff4d 38.5px,#00ff7a 40.5px,#00ff73 50.5px,#00ff60 51.5px,#00ff83 54.5px,#00ffc8 93.5px,#00ffc8 147.5px,#2fff00 148.5px,#2fff00 149.5px,#00ffc7 150.5px,#00ff97 163.5px,#00ff8a 164.5px,#00ffa4 168.5px,#00ffa4 172px)"></i><i style="left:123px;width:1px;background:linear-gradient(#00ff7b 0px,#00ff78 5.5px,#00ff5a 6.5px,#18ff00 7.5px,#90ff00 8.5px,#00ff0c 9.5px,#00ff65 10.5px,#00ff7b 12.5px,#0f7 17.5px,#00ff3a 19.5px,#5eff00 20.5px,#9bff00 21.5px,#00ff65 22.5px,#00ff7b 24.5px,#00ff63 25.5px,#00ff7b 27.5px,#00ff7a 36.5px,#00ff4d 38.5px,#00ff7a 40.5px,#00ff73 50.5px,#00ff60 51.5px,#00ff83 54.5px,#00ffc6 93.5px,#00ffc6 147.5px,#2fff00 148.5px,#2fff00 149.5px,#00ffc5 150.5px,#00ff95 163.5px,#0f8 164.5px,#00ffa2 168.5px,#00ffa2 172px)"></i><i style="left:124px;width:1px;background:linear-gradient(#00ff7b 0px,#00ff78 5.5px,#00ff5a 6.5px,#18ff00 7.5px,#90ff00 8.5px,#00ff0c 9.5px,#00ff65 10.5px,#00ff7b 12.5px,#00ff7b 15.5px,#00ff4d 17.5px,#42ff00 18.5px,#9bff00 19.5px,#9bff00 20.5px,#00ff7b 21.5px,#00ff7a 36.5px,#00ff4c 38.5px,#00ff7a 40.5px,#00ff72 50.5px,#00ff60 51.5px,#00ff82 54.5px,#00ffc3 93.5px,#00ffb7 154.5px,#00ffa5 159.5px,#2fff00 160.5px,#2fff00 161.5px,#00ff9e 162.5px,#00ff85 164.5px,#00ff9f 168.5px,#00ff9f 172px)"></i><i style="left:125px;width:1px;background:linear-gradient(#00ff7b 0px,#00ff78 5.5px,#00ff5a 6.5px,#18ff00 7.5px,#90ff00 8.5px,#00ff0c 9.5px,#00ff65 10.5px,#00ff7b 12.5px,#00ff6a 14.5px,#00ff4d 15.5px,#00ff4d 16.5px,#9bff00 17.5px,#9bff00 19.5px,#00ff7b 20.5px,#00ff7a 36.5px,#00ff4c 38.5px,#00ff7a 40.5px,#00ff72 50.5px,#00ff5f 51.5px,#00ff82 54.5px,#00ffc2 93.5px,#00ffb6 154.5px,#00ffa4 159.5px,#2fff00 160.5px,#2fff00 161.5px,#00ff9d 162.5px,#00ff84 164.5px,#00ff9e 168.5px,#00ff9e 172px)"></i><i style="left:126px;width:1px;background:linear-gradient(#00ff7b 0px,#00ff78 5.5px,#00ff5a 6.5px,#18ff00 7.5px,#90ff00 8.5px,#00ff0c 9.5px,#00ff65 10.5px,#00ff79 11.5px,#00ff4d 14.5px,#00ff4d 15.5px,#9bff00 16.5px,#9bff00 18.5px,#00ff7b 19.5px,#00ff7a 36.5px,#00ff4c 38.5px,#00ff7a 40.5px,#00ff72 50.5px,#00ff5f 51.5px,#00ff82 54.5px,#00ffc2 93.5px,#00ffb5 154.5px,#00ff90 163.5px,#00ff90 165.5px,#00ff9d 172px)"></i><i style="left:127px;width:1px;background:linear-gradient(#00ff7b 0px,#00ff78 5.5px,#00ff5a 6.5px,#18ff00 7.5px,#90ff00 8.5px,#00ff0c 9.5px,#00ff65 10.5px,#00ff5d 11.5px,#00ff1e 12.5px,#00ff4d 13.5px,#00ff4d 14.5px,#9bff00 15.5px,#9bff00 16.5px,#00ff12 17.5px,#00ff7b 18.5px,#00ff7a 36.5px,#00ff4c 38.5px,#00ff7a 40.5px,#00ff72 50.5px,#00ff60 51.5px,#00ff83 54.5px,#00ffc4 93.5px,#00ffb7 154.5px,#00ff93 163.5px,#00ff86 164.5px,#00ffa0 168.5px,#00ffa0 172px)"></i><i style="left:128px;width:1px;background:linear-gradient(#00ff7b 0px,#00ff78 5.5px,#00ff5a 6.5px,#18ff00 7.5px,#90ff00 8.5px,#00ff0c 9.5px,#00ff3b 10.5px,#65ff00 11.5px,#00ff4d 12.5px,#00ff62 13.5px,#9bff00 14.5px,#15ff00 15.5px,#00ff7b 16.5px,#00ff7a 36.5px,#00ff4c 38.5px,#00ff7a 40.5px,#00ff72 50.5px,#00ff60 51.5px,#00ff83 54.5px,#00ffc4 93.5px,#00ffb8 154.5px,#00ff93 163.5px,#00ff86 164.5px,#00ffa0 168.5px,#00ffa0 172px)"></i><i style="left:129px;width:1px;background:linear-gradient(#00ff7b 0px,#00ff78 5.5px,#00ff5a 6.5px,#18ff00 7.5px,#90ff00 8.5px,#5bff00 9.5px,#9bff00 10.5px,#00ff59 11.5px,#0f7 12.5px,#56ff00 13.5px,#00ff65 14.5px,#00ff7b 16.5px,#00ff7a 36.5px,#00ff4d 38.5px,#00ff7a 40.5px,#00ff73 50.5px,#00ff60 51.5px,#00ff84 54.5px,#00ffc9 93.5px,#00ffbd 154.5px,#00ff98 163.5px,#00ff8b 164.5px,#00ffa5 168.5px,#00ffa5 172px)"></i><i style="left:130px;width:1px;background:linear-gradient(#00ff7b 0px,#00ff78 5.5px,#00ff56 6.5px,#54ff00 7.5px,#9bff00 8.5px,#9bff00 9.5px,#00ff5f 10.5px,#00ff79 11.5px,#00ff3f 12.5px,#00ff7b 13.5px,#00ff7a 36.5px,#00ff4d 38.5px,#00ff7a 40.5px,#00ff73 50.5px,#00ff61 51.5px,#00ff84 54.5px,#00ffcd 93.5px,#00ffca 151.5px,#2fff00 152.5px,#2fff00 153.5px,#00ffc0 154.5px,#0fa 161.5px,#2fff00 162.5px,#2fff00 163.5px,#00ff8f 164.5px,#00ffa9 168.5px,#00ffa9 172px)"></i><i style="left:131px;width:1px;background:linear-gradient(#00ff7b 0px,#00ff7b 4.5px,#00ff2c 5.5px,#9f0 6.5px,#9bff00 8.5px,#00ff0c 9.5px,#00ff65 10.5px,#00ff7b 12.5px,#00ff7a 36.5px,#00ff4d 38.5px,#00ff7a 40.5px,#00ff73 50.5px,#00ff61 51.5px,#00ff84 54.5px,#00ffcb 92.5px,#00ffc8 151.5px,#2fff00 152.5px,#2fff00 153.5px,#00ffbf 154.5px,#00ffa8 161.5px,#2fff00 162.5px,#2fff00 163.5px,#00ff8d 164.5px,#00ffa7 168.5px,#00ffa7 172px)"></i><i style="left:132px;width:1px;background:linear-gradient(#00ff7b 0px,#00ff7b 3.5px,#62ff00 4.5px,#9bff00 5.5px,#90ff00 8.5px,#00ff0c 9.5px,#00ff65 10.5px,#00ff7b 12.5px,#00ff7a 36.5px,#00ff4d 38.5px,#00ff7a 40.5px,#00ff73 50.5px,#00ff60 51.5px,#00ff83 54.5px,#00ffc7 93.5px,#0fb 154.5px,#00ffa4 161.5px,#2fff00 162.5px,#2fff00 163.5px,#00ff89 164.5px,#00ffa3 168.5px,#00ffa3 172px)"></i><i style="left:133px;width:1px;background:linear-gradient(#00ff7b 0px,#00ff71 2.5px,#9bff00 3.5px,#9bff00 5.5px,#18ff00 7.5px,#90ff00 8.5px,#00ff0c 9.5px,#00ff65 10.5px,#00ff7b 12.5px,#00ff7a 36.5px,#00ff4c 38.5px,#00ff7a 40.5px,#00ff72 50.5px,#00ff60 51.5px,#00ff83 54.5px,#00ffc4 93.5px,#00ffc4 130.5px,#bfff00 131.5px,#bfff00 134.5px,#00ffc4 135.5px,#00ffc4 142.5px,#9bff00 143.5px,#9bff00 146.5px,#00ffc4 147.5px,#00ffa1 161.5px,#2fff00 162.5px,#2fff00 163.5px,#00ff86 164.5px,#00ffa0 168.5px,#00ffa0 172px)"></i><i style="left:134px;width:1px;background:linear-gradient(#00ff7b 0px,#00ff67 1.5px,#9bff00 2.5px,#98ff00 4.5px,#00ff3d 5.5px,#00ff5a 6.5px,#18ff00 7.5px,#90ff00 8.5px,#00ff0c 9.5px,#00ff65 10.5px,#00ff7b 12.5px,#00ff7a 36.5px,#00ff4c 38.5px,#00ff7a 40.5px,#00ff72 50.5px,#00ff60 51.5px,#00ff83 54.5px,#00ffc4 93.5px,#00ffc4 130.5px,#bfff00 131.5px,#bfff00 134.5px,#00ffc4 135.5px,#00ffc4 142.5px,#9bff00 143.5px,#9bff00 146.5px,#00ffc4 147.5px,#00ff93 163.5px,#00ff86 164.5px,#00ffa0 168.5px,#00ffa0 172px)"></i><i style="left:135px;width:1px;background:linear-gradient(#00ff5d 0px,#9bff00 1.5px,#9bff00 2.5px,#00ff0c 3.5px,#00ff7b 4.5px,#00ff78 5.5px,#00ff5a 6.5px,#18ff00 7.5px,#90ff00 8.5px,#00ff0c 9.5px,#00ff65 10.5px,#00ff7b 12.5px,#00ff7a 36.5px,#00ff4c 38.5px,#00ff7a 40.5px,#00ff72 50.5px,#00ff5f 51.5px,#00ff82 54.5px,#00ffc0 93.5px,#00ffc0 130.5px,#bfff00 131.5px,#bfff00 134.5px,#00ffc0 135.5px,#00ffc0 142.5px,#9bff00 143.5px,#9bff00 146.5px,#00ffc0 147.5px,#00ff8f 163.5px,#00ff82 164.5px,#00ff9c 168.5px,#00ff95 172px)"></i><i style="left:136px;width:1px;background:linear-gradient(#00ff4d 0px,#00ff4d 1.5px,#00ff7b 3.5px,#00ff78 5.5px,#00ff5a 6.5px,#18ff00 7.5px,#90ff00 8.5px,#00ff0c 9.5px,#00ff65 10.5px,#00ff7b 12.5px,#00ff7a 36.5px,#00ff4c 38.5px,#00ff7a 40.5px,#00ff72 50.5px,#00ff5f 51.5px,#00ff82 54.5px,#00ffbf 94.5px,#00ffb3 154.5px,#00ff8b 163.5px,#2fff00 164.5px,#2fff00 165.5px,#00ff90 166.5px,#00ff6e 172px)"></i><i style="left:137px;width:1px;background:linear-gradient(#00ff52 0px,#00ff76 1.5px,#00ff78 5.5px,#00ff5a 6.5px,#18ff00 7.5px,#90ff00 8.5px,#00ff0c 9.5px,#00ff65 10.5px,#00ff7b 12.5px,#00ff7a 36.5px,#00ff4c 38.5px,#00ff7a 40.5px,#00ff72 50.5px,#00ff5f 51.5px,#00ff82 54.5px,#00ffbf 94.5px,#00ffb6 153.5px,#00ff79 161.5px,#00ff85 162.5px,#00ff78 163.5px,#2fff00 164.5px,#2fff00 165.5px,#00ff7e 166.5px,#00ff63 167.5px,#00ff63 172px)"></i><i style="left:138px;width:1px;background:linear-gradient(#00ff7b 0px,#00ff78 5.5px,#00ff5a 6.5px,#18ff00 7.5px,#90ff00 8.5px,#00ff0c 9.5px,#00ff65 10.5px,#00ff7b 12.5px,#00ff7a 36.5px,#00ff4c 38.5px,#00ff7a 40.5px,#00ff72 50.5px,#00ff5f 51.5px,#00ff82 54.5px,#00ffc1 93.5px,#00ffb9 148.5px,#00ff95 156.5px,#00ff75 157.5px,#00ff65 161.5px,#00ff7f 162.5px,#00ff67 164.5px,#00ff7f 166.5px,#00ff63 167.5px,#00ff64 172px)"></i><i style="left:139px;width:1px;background:linear-gradient(#00ff7b 0px,#00ff78 5.5px,#00ff5a 6.5px,#18ff00 7.5px,#90ff00 8.5px,#00ff0c 9.5px,#00ff65 10.5px,#00ff7b 12.5px,#00ff7a 36.5px,#00ff4c 38.5px,#00ff7a 40.5px,#00ff72 50.5px,#00ff60 51.5px,#00ff83 54.5px,#00ffc5 93.5px,#00ffb9 143.5px,#00ffb1 146.5px,#00ff93 148.5px,#00ff87 151.5px,#00ffa1 152.5px,#00ff93 156.5px,#00ff71 157.5px,#0f6 161.5px,#00ff81 162.5px,#00ff69 164.5px,#00ff81 166.5px,#00ff65 167.5px,#00ff65 172px)"></i><i style="left:140px;width:1px;background:linear-gradient(#00ff7b 0px,#00ff78 5.5px,#00ff5a 6.5px,#18ff00 7.5px,#90ff00 8.5px,#00ff0c 9.5px,#00ff65 10.5px,#00ff7b 12.5px,#00ff7a 36.5px,#00ff4d 38.5px,#00ff7a 40.5px,#00ff73 50.5px,#00ff60 51.5px,#00ff84 54.5px,#00ffc9 93.5px,#00ffbd 135.5px,#00ff91 141.5px,#00ffab 142.5px,#0fa 146.5px,#00ff8b 147.5px,#00ff87 151.5px,#00ffa4 152.5px,#00ff96 156.5px,#00ff73 157.5px,#00ff67 161.5px,#00ff84 162.5px,#00ff6c 164.5px,#00ff79 165.5px,#2fff00 166.5px,#2fff00 167.5px,#0f6 168.5px,#0f6 172px)"></i><i style="left:141px;width:1px;background:linear-gradient(#00ff7b 0px,#00ff78 5.5px,#00ff5a 6.5px,#18ff00 7.5px,#90ff00 8.5px,#00ff0c 9.5px,#00ff65 10.5px,#00ff7b 12.5px,#00ff7a 36.5px,#00ff4d 38.5px,#00ff7a 40.5px,#00ff73 50.5px,#00ff60 51.5px,#00ff84 54.5px,#00ffc9 93.5px,#00ffc1 126.5px,#00ff9c 131.5px,#00ffae 133.5px,#0fa 136.5px,#00ff8b 137.5px,#00ff8b 141.5px,#0fa 142.5px,#0fa 146.5px,#00ff8b 147.5px,#0f8 151.5px,#00ffa4 152.5px,#00ff96 156.5px,#00ff73 157.5px,#00ff68 161.5px,#00ff84 162.5px,#00ff6c 164.5px,#00ff79 165.5px,#2fff00 166.5px,#2fff00 167.5px,#00ff67 168.5px,#00ff67 172px)"></i><i style="left:142px;width:1px;background:linear-gradient(#00ff7b 0px,#00ff78 5.5px,#00ff5a 6.5px,#18ff00 7.5px,#90ff00 8.5px,#00ff0c 9.5px,#00ff65 10.5px,#00ff7b 12.5px,#00ff7a 36.5px,#00ff4d 38.5px,#00ff7a 40.5px,#00ff73 50.5px,#00ff61 51.5px,#00ff84 54.5px,#00ffca 93.5px,#00ffc0 117.5px,#0fa 121.5px,#00ffaf 125.5px,#00ffad 126.5px,#00ff8d 127.5px,#00ff8b 131.5px,#0fa 132.5px,#0fa 136.5px,#00ff8b 137.5px,#00ff8b 141.5px,#0fa 142.5px,#0fa 146.5px,#00ff8b 147.5px,#0f8 151.5px,#00ffa5 152.5px,#00ff96 156.5px,#00ff73 157.5px,#00ff68 161.5px,#00ff85 162.5px,#00ff6d 164.5px,#00ff85 166.5px,#00ff67 167.5px,#00ff67 172px)"></i><i style="left:143px;width:1px;background:linear-gradient(#00ff7b 0px,#00ff78 5.5px,#00ff5a 6.5px,#18ff00 7.5px,#90ff00 8.5px,#00ff0c 9.5px,#00ff65 10.5px,#00ff7b 12.5px,#00ff7a 36.5px,#00ff4d 38.5px,#00ff7a 40.5px,#00ff73 50.5px,#00ff61 51.5px,#00ff84 54.5px,#00ffca 93.5px,#00ffbc 110.5px,#00ffb2 116.5px,#00ff95 117.5px,#00ff8b 121.5px,#00ffab 122.5px,#00ffab 126.5px,#00ff8b 127.5px,#00ff8b 131.5px,#00ffab 132.5px,#00ffab 136.5px,#00ff8b 137.5px,#00ff8b 141.5px,#00ffab 142.5px,#00ffab 146.5px,#00ff8b 147.5px,#0f8 151.5px,#00ffa5 152.5px,#00ff97 156.5px,#00ff73 157.5px,#00ff68 161.5px,#00ff85 162.5px,#00ff6d 164.5px,#00ff85 166.5px,#00ff67 167.5px,#00ff67 172px)"></i><i style="left:144px;width:1px;background:linear-gradient(#00ff7b 0px,#00ff78 5.5px,#00ff5a 6.5px,#18ff00 7.5px,#90ff00 8.5px,#00ff0c 9.5px,#00ff65 10.5px,#00ff7b 12.5px,#00ff7a 36.5px,#00ff4d 38.5px,#00ff7a 40.5px,#00ff73 50.5px,#00ff60 51.5px,#00ff84 54.5px,#00ffc9 93.5px,#00ffb7 106.5px,#00ff95 109.5px,#00ff8e 111.5px,#0fa 112.5px,#0fa 116.5px,#00ff8b 117.5px,#00ff8b 121.5px,#0fa 122.5px,#0fa 126.5px,#00ff8b 127.5px,#00ff8b 131.5px,#0fa 132.5px,#0fa 136.5px,#00ff8b 137.5px,#00ff8b 141.5px,#0fa 142.5px,#0fa 146.5px,#00ff8b 147.5px,#0f8 151.5px,#00ffa4 152.5px,#00ff96 156.5px,#00ff73 157.5px,#00ff68 161.5px,#00ff84 162.5px,#00ff6c 164.5px,#00ff84 166.5px,#0f6 167.5px,#00ff67 172px)"></i><i style="left:145px;width:1px;background:linear-gradient(#00ff7b 0px,#00ff78 5.5px,#00ff5a 6.5px,#18ff00 7.5px,#90ff00 8.5px,#00ff0c 9.5px,#00ff65 10.5px,#00ff7b 12.5px,#00ff7a 36.5px,#00ff4d 38.5px,#00ff7a 40.5px,#00ff72 50.5px,#00ff60 51.5px,#00ff83 54.5px,#00ffc4 92.5px,#00ffa5 98.5px,#00ff95 101.5px,#00ffa9 103.5px,#00ffa8 106.5px,#00ff8a 107.5px,#00ff8a 111.5px,#00ffa8 112.5px,#00ffa8 116.5px,#00ff8a 117.5px,#00ff8a 121.5px,#00ffa8 122.5px,#00ffa8 126.5px,#00ff8a 127.5px,#00ff8a 131.5px,#00ffa8 132.5px,#00ffa8 136.5px,#00ff8a 137.5px,#00ff8a 141.5px,#00ffa8 142.5px,#00ffa8 146.5px,#00ff8a 147.5px,#00ff86 151.5px,#00ffa2 152.5px,#00ff94 156.5px,#00ff72 157.5px,#0f6 161.5px,#00ff82 162.5px,#00ff6a 164.5px,#00ff82 166.5px,#00ff65 167.5px,#00ff65 172px)"></i><i style="left:146px;width:1px;background:linear-gradient(#00ff7b 0px,#00ff78 5.5px,#00ff5a 6.5px,#18ff00 7.5px,#90ff00 8.5px,#00ff0c 9.5px,#00ff65 10.5px,#00ff7b 12.5px,#00ff7a 36.5px,#00ff4d 38.5px,#00ff7a 40.5px,#00ff72 50.5px,#00ff60 51.5px,#00ff83 54.5px,#00ffbe 86.5px,#00ffa0 91.5px,#00ffad 93.5px,#00ffa8 96.5px,#00ff89 97.5px,#00ff89 101.5px,#00ffa7 102.5px,#00ffa7 106.5px,#00ff89 107.5px,#00ff89 111.5px,#00ffa7 112.5px,#00ffa7 116.5px,#00ff89 117.5px,#00ff89 121.5px,#00ffa7 122.5px,#00ffa7 126.5px,#00ff89 127.5px,#00ff89 131.5px,#00ffa7 132.5px,#00ffa7 136.5px,#00ff89 137.5px,#00ff89 141.5px,#00ffa7 142.5px,#00ffa7 146.5px,#00ff89 147.5px,#00ff86 151.5px,#00ffa2 152.5px,#00ff93 156.5px,#00ff71 157.5px,#2fff00 158.5px,#2fff00 159.5px,#00ff68 160.5px,#0f6 161.5px,#00ff82 162.5px,#00ff69 164.5px,#00ff82 166.5px,#00ff65 167.5px,#00ff65 172px)"></i><i style="left:147px;width:1px;background:linear-gradient(#00ff7b 0px,#00ff78 5.5px,#00ff5a 6.5px,#18ff00 7.5px,#90ff00 8.5px,#00ff0c 9.5px,#00ff65 10.5px,#00ff7b 12.5px,#00ff7a 36.5px,#00ff4d 38.5px,#00ff7a 40.5px,#00ff73 50.5px,#00ff60 51.5px,#00ff84 54.5px,#00ffaf 79.5px,#00ffac 86.5px,#00ff8f 87.5px,#00ff8b 91.5px,#0fa 92.5px,#0fa 96.5px,#00ff8b 97.5px,#00ff8b 101.5px,#0fa 102.5px,#0fa 106.5px,#00ff8b 107.5px,#00ff8b 111.5px,#0fa 112.5px,#0fa 116.5px,#00ff8b 117.5px,#00ff8b 121.5px,#0fa 122.5px,#0fa 126.5px,#00ff8b 127.5px,#00ff8b 131.5px,#0fa 132.5px,#0fa 136.5px,#00ff8b 137.5px,#00ff8b 141.5px,#0fa 142.5px,#0fa 146.5px,#00ff8b 147.5px,#0f8 151.5px,#00ffa4 152.5px,#00ff96 156.5px,#00ff73 157.5px,#2fff00 158.5px,#2fff00 159.5px,#00ff6a 160.5px,#00ff68 161.5px,#00ff84 162.5px,#00ff6c 164.5px,#00ff84 166.5px,#00ff67 167.5px,#00ff67 172px)"></i><i style="left:148px;width:1px;background:linear-gradient(#00ff7b 0px,#00ff78 5.5px,#00ff5a 6.5px,#18ff00 7.5px,#90ff00 8.5px,#00ff0c 9.5px,#00ff65 10.5px,#00ff7b 12.5px,#00ff7a 36.5px,#00ff4d 38.5px,#00ff7a 40.5px,#00ff73 50.5px,#00ff61 51.5px,#00ff84 54.5px,#00ffa5 76.5px,#00ff8d 78.5px,#0f8 81.5px,#00ffa5 82.5px,#00ffa9 86.5px,#00ff8a 87.5px,#00ff8b 91.5px,#00ffab 92.5px,#00ffab 96.5px,#00ff8b 97.5px,#00ff8b 101.5px,#00ffab 102.5px,#00ffab 106.5px,#00ff8b 107.5px,#00ff8b 111.5px,#00ffab 112.5px,#00ffab 116.5px,#00ff8b 117.5px,#00ff8b 121.5px,#00ffab 122.5px,#00ffab 126.5px,#00ff8b 127.5px,#00ff8b 131.5px,#00ffab 132.5px,#00ffab 136.5px,#00ff8b 137.5px,#00ff8b 141.5px,#00ffab 142.5px,#00ffab 146.5px,#00ff8b 147.5px,#00ff8b 149.5px,#2fff00 150.5px,#2fff00 151.5px,#00ffa5 152.5px,#00ff97 156.5px,#00ff74 157.5px,#00ff68 161.5px,#00ff86 162.5px,#00ff6d 164.5px,#00ff85 166.5px,#00ff67 167.5px,#00ff67 172px)"></i><i style="left:149px;width:1px;background:linear-gradient(#00ff7b 0px,#00ff78 5.5px,#00ff5a 6.5px,#18ff00 7.5px,#90ff00 8.5px,#00ff0c 9.5px,#00ff65 10.5px,#00ff7b 12.5px,#00ff7a 36.5px,#00ff4d 38.5px,#00ff7a 40.5px,#00ff73 50.5px,#00ff60 51.5px,#00ff84 54.5px,#00ff8c 67.5px,#00ff82 71.5px,#00ff97 73.5px,#00ff9c 76.5px,#00ff83 77.5px,#00ff87 81.5px,#00ffa4 82.5px,#00ffa7 86.5px,#53ff00 87.5px,#45ff00 96.5px,#00ff8b 97.5px,#00ff8b 101.5px,#0fa 102.5px,#0fa 106.5px,#00ff8b 107.5px,#00ff8b 111.5px,#0fa 112.5px,#0fa 116.5px,#00ff8b 117.5px,#00ff8b 121.5px,#0fa 122.5px,#0fa 126.5px,#00ff8b 127.5px,#00ff8b 131.5px,#0fa 132.5px,#0fa 136.5px,#00ff8b 137.5px,#00ff8b 141.5px,#0fa 142.5px,#0fa 146.5px,#00ff8b 147.5px,#00ff8a 149.5px,#2fff00 150.5px,#2fff00 151.5px,#00ffa4 152.5px,#00ff96 156.5px,#00ff73 157.5px,#00ff68 161.5px,#00ff84 162.5px,#00ff6c 164.5px,#00ff84 166.5px,#0f6 167.5px,#0f6 172px)"></i><i style="left:150px;width:1px;background:linear-gradient(#00ff7b 0px,#00ff78 5.5px,#00ff5a 6.5px,#18ff00 7.5px,#90ff00 8.5px,#00ff0c 9.5px,#00ff65 10.5px,#00ff7b 12.5px,#00ff7a 36.5px,#00ff4c 38.5px,#00ff7a 40.5px,#00ff72 50.5px,#00ff5f 51.5px,#00ff82 54.5px,#00ff8c 66.5px,#00ff7b 69.5px,#00ff7d 71.5px,#00ff94 73.5px,#0f9 76.5px,#00ff82 78.5px,#00ff85 81.5px,#00ffa0 82.5px,#00ffa4 86.5px,#bfff00 87.5px,#bfff00 96.5px,#0f8 97.5px,#0f8 101.5px,#00ffa6 102.5px,#00ffa6 106.5px,#0f8 107.5px,#0f8 111.5px,#00ffa6 112.5px,#00ffa6 116.5px,#0f8 117.5px,#0f8 121.5px,#00ffa6 122.5px,#00ffa6 126.5px,#0f8 127.5px,#0f8 131.5px,#00ffa6 132.5px,#00ffa6 136.5px,#0f8 137.5px,#0f8 141.5px,#00ffa6 142.5px,#00ffa6 146.5px,#0f8 147.5px,#00ff85 151.5px,#00ffa0 152.5px,#00ff92 156.5px,#00ff70 157.5px,#00ff65 161.5px,#00ff80 162.5px,#00ff68 164.5px,#00ff80 166.5px,#00ff64 167.5px,#00ff64 172px)"></i><i style="left:151px;width:1px;background:linear-gradient(#00ff7b 0px,#00ff78 5.5px,#00ff5a 6.5px,#18ff00 7.5px,#90ff00 8.5px,#00ff0c 9.5px,#00ff65 10.5px,#00ff7b 12.5px,#00ff7a 36.5px,#00ff4c 38.5px,#00ff7a 40.5px,#00ff72 50.5px,#00ff5f 51.5px,#00ff82 54.5px,#00ff8b 66.5px,#00ff7b 70.5px,#00ff95 74.5px,#00ff98 76.5px,#00ff82 78.5px,#00ff84 81.5px,#00ff9f 82.5px,#00ffa3 86.5px,#00ff21 87.5px,#0f2 91.5px,#00ff32 95.5px,#00ff32 96.5px,#0f8 97.5px,#0f8 101.5px,#00ffa4 102.5px,#00ffa4 106.5px,#0f8 107.5px,#0f8 111.5px,#00ffa4 112.5px,#00ffa4 116.5px,#0f8 117.5px,#0f8 121.5px,#00ffa4 122.5px,#00ffa4 126.5px,#0f8 127.5px,#0f8 131.5px,#00ffa4 132.5px,#00ffa4 135.5px,#fe0 136.5px,#fe0 139.5px,#0f8 140.5px,#0f8 141.5px,#00ffa4 142.5px,#00ffa4 146.5px,#0f8 147.5px,#00ff84 151.5px,#00ff9f 152.5px,#00ff90 156.5px,#00ff70 157.5px,#00ff64 161.5px,#00ff7f 162.5px,#0f6 164.5px,#00ff7f 166.5px,#00ff63 167.5px,#00ff63 172px)"></i><i style="left:152px;width:1px;background:linear-gradient(#0bff00 0px,#0f5 1.5px,#00ff7b 2.5px,#00ff78 5.5px,#00ff5a 6.5px,#18ff00 7.5px,#90ff00 8.5px,#00ff0c 9.5px,#00ff65 10.5px,#00ff7b 12.5px,#00ff7a 36.5px,#00ff4c 38.5px,#00ff7a 40.5px,#00ff72 50.5px,#00ff60 51.5px,#00ff82 54.5px,#00ff8a 67.5px,#00ff81 71.5px,#00ff96 74.5px,#0f9 76.5px,#00ff83 78.5px,#00ff85 81.5px,#00ffa0 82.5px,#00ffa4 86.5px,#0f8 87.5px,#0f8 91.5px,#00ffa6 92.5px,#00ffa6 96.5px,#0f8 97.5px,#0f8 101.5px,#00ffa6 102.5px,#00ffa6 106.5px,#0f8 107.5px,#0f8 111.5px,#00ffa6 112.5px,#00ffa6 116.5px,#0f8 117.5px,#0f8 121.5px,#00ffa6 122.5px,#00ffa6 126.5px,#0f8 127.5px,#0f8 131.5px,#00ffa6 132.5px,#00ffa6 135.5px,#fe0 136.5px,#fe0 139.5px,#0f8 140.5px,#0f8 141.5px,#00ffa6 142.5px,#00ffa6 146.5px,#0f8 147.5px,#00ff85 151.5px,#00ffa0 152.5px,#00ff92 156.5px,#00ff71 157.5px,#00ff65 161.5px,#00ff80 162.5px,#00ff68 164.5px,#00ff80 166.5px,#00ff64 167.5px,#00ff64 172px)"></i><i style="left:153px;width:1px;background:linear-gradient(#0bff00 0px,#0bff00 1.5px,#00ff2c 2.5px,#00ff7b 3.5px,#00ff78 5.5px,#00ff5a 6.5px,#18ff00 7.5px,#90ff00 8.5px,#00ff0c 9.5px,#00ff65 10.5px,#00ff7b 12.5px,#00ff7a 36.5px,#00ff4d 38.5px,#00ff7a 40.5px,#00ff73 50.5px,#00ff60 51.5px,#00ff83 54.5px,#00ffa3 76.5px,#00ff89 79.5px,#00ff87 81.5px,#00ffa3 82.5px,#00ffa6 86.5px,#00ff89 87.5px,#00ff8a 91.5px,#00ffa9 92.5px,#00ffa9 96.5px,#00ff8a 97.5px,#00ff8a 101.5px,#00ffa9 102.5px,#00ffa9 106.5px,#00ff8a 107.5px,#00ff8a 111.5px,#00ffa9 112.5px,#00ffa9 116.5px,#00ff8a 117.5px,#00ff8a 121.5px,#00ffa9 122.5px,#00ffa9 126.5px,#00ff8a 127.5px,#00ff8a 131.5px,#00ffa9 132.5px,#00ffa9 135.5px,#fe0 136.5px,#fe0 139.5px,#00ff8a 140.5px,#00ff8a 141.5px,#00ffa9 142.5px,#00ffa9 146.5px,#00ff8a 147.5px,#00ff87 151.5px,#00ffa3 152.5px,#00ff95 156.5px,#00ff72 157.5px,#00ff67 161.5px,#00ff83 162.5px,#00ff6b 164.5px,#00ff83 166.5px,#0f6 167.5px,#0f6 172px)"></i><i style="left:154px;width:1px;background:linear-gradient(#0f2 0px,#0bff00 1.5px,#00ff03 3.5px,#00ff5f 4.5px,#00ff78 5.5px,#00ff5a 6.5px,#18ff00 7.5px,#90ff00 8.5px,#00ff0c 9.5px,#00ff65 10.5px,#00ff7b 12.5px,#00ff7a 36.5px,#00ff4c 38.5px,#00ff7a 40.5px,#00ff72 50.5px,#00ff60 51.5px,#00ff83 54.5px,#00ffab 79.5px,#00ffa9 86.5px,#00ff8d 87.5px,#00ff8a 88.5px,#e3ff00 89.5px,#e3ff00 92.5px,#00ffa7 93.5px,#00ffa7 96.5px,#00ff89 97.5px,#00ff89 101.5px,#00ffa7 102.5px,#00ffa7 106.5px,#00ff89 107.5px,#00ff89 111.5px,#00ffa7 112.5px,#00ffa7 116.5px,#00ff89 117.5px,#00ff89 121.5px,#00ffa7 122.5px,#00ffa7 126.5px,#00ff89 127.5px,#00ff89 131.5px,#00ffa7 132.5px,#00ffa7 135.5px,#fe0 136.5px,#fe0 139.5px,#00ff89 140.5px,#00ff89 141.5px,#00ffa7 142.5px,#00ffa7 146.5px,#00ff89 147.5px,#2fff00 148.5px,#2fff00 149.5px,#0f8 150.5px,#00ff86 151.5px,#00ffa1 152.5px,#00ff9e 153.5px,#2fff00 154.5px,#2fff00 155.5px,#00ff93 156.5px,#00ff71 157.5px,#2fff00 158.5px,#2fff00 159.5px,#00ff68 160.5px,#0f6 161.5px,#00ff81 162.5px,#00ff76 163.5px,#2fff00 164.5px,#2fff00 165.5px,#00ff81 166.5px,#00ff65 167.5px,#00ff65 172px)"></i><i style="left:155px;width:1px;background:linear-gradient(#00ff7b 0px,#00ff4b 1.5px,#0bff00 2.5px,#0bff00 4.5px,#bfff00 5.5px,#bfff00 6.5px,#4bff00 7.5px,#90ff00 8.5px,#00ff0c 9.5px,#00ff65 10.5px,#00ff7b 12.5px,#00ff7a 36.5px,#00ff4c 38.5px,#00ff7a 40.5px,#00ff72 50.5px,#00ff5f 51.5px,#00ff82 54.5px,#00ffb9 86.5px,#00ffac 88.5px,#e3ff00 89.5px,#e3ff00 92.5px,#00ffa9 93.5px,#00ffa4 96.5px,#00ff87 97.5px,#00ff87 101.5px,#00ffa4 102.5px,#00ffa4 106.5px,#00ff87 107.5px,#00ff87 111.5px,#00ffa4 112.5px,#00ffa4 116.5px,#00ff87 117.5px,#00ff87 121.5px,#00ffa4 122.5px,#00ffa4 126.5px,#00ff87 127.5px,#00ff87 131.5px,#00ffa4 132.5px,#00ffa4 135.5px,#fe0 136.5px,#fe0 139.5px,#00ff87 140.5px,#00ff87 141.5px,#00ffa4 142.5px,#00ffa4 146.5px,#00ff87 147.5px,#2fff00 148.5px,#2fff00 149.5px,#00ff86 150.5px,#00ff84 151.5px,#00ff9e 152.5px,#00ff9b 153.5px,#2fff00 154.5px,#2fff00 155.5px,#00ff90 156.5px,#00ff6f 157.5px,#2fff00 158.5px,#2fff00 159.5px,#0f6 160.5px,#00ff64 161.5px,#00ff7e 162.5px,#00ff73 163.5px,#2fff00 164.5px,#2fff00 165.5px,#00ff7e 166.5px,#00ff63 167.5px,#00ff63 172px)"></i><i style="left:156px;width:1px;background:linear-gradient(#00ff7b 0px,#00ff74 2.5px,#00ff18 3.5px,#0bff00 4.5px,#bfff00 5.5px,#bfff00 6.5px,#18ff00 7.5px,#90ff00 8.5px,#00ff0c 9.5px,#00ff65 10.5px,#00ff7b 12.5px,#00ff7a 36.5px,#00ff4c 38.5px,#00ff7a 40.5px,#00ff71 50.5px,#00ff5f 51.5px,#00ff81 54.5px,#00ffbc 88.5px,#e3ff00 89.5px,#e3ff00 92.5px,#00ffb9 93.5px,#00ff90 101.5px,#00ffa2 103.5px,#00ffa1 106.5px,#00ff86 107.5px,#00ff86 111.5px,#00ffa1 112.5px,#00ffa1 116.5px,#00ff86 117.5px,#00ff86 121.5px,#00ffa1 122.5px,#00ffa1 126.5px,#00ff86 127.5px,#00ff86 128.5px,#ffc400 129.5px,#ffc400 132.5px,#00ffa1 133.5px,#00ffa1 135.5px,#fe0 136.5px,#fe0 139.5px,#00ff86 140.5px,#00ff86 141.5px,#00ffa1 142.5px,#00ffa1 146.5px,#2fff00 147.5px,#00ff86 148.5px,#00ff83 151.5px,#00ff9b 152.5px,#00ff8d 156.5px,#00ff6e 157.5px,#00ff63 161.5px,#00ff7b 162.5px,#00ff63 164.5px,#00ff7b 166.5px,#00ff61 167.5px,#00ff61 169.5px,#2fff00 170.5px,#2fff00 172px)"></i><i style="left:157px;width:1px;background:linear-gradient(#00ff7b 0px,#00ff7b 3.5px,#0bff00 5.5px,#18ff00 7.5px,#bfff00 8.5px,#b1ff00 9.5px,#00ff51 10.5px,#00ff79 11.5px,#00ff7a 36.5px,#00ff4c 38.5px,#00ff7a 40.5px,#00ff71 50.5px,#00ff5e 51.5px,#00ff81 54.5px,#0fb 88.5px,#e3ff00 89.5px,#e3ff00 92.5px,#0fb 93.5px,#00ffac 106.5px,#00ff8e 109.5px,#0f8 111.5px,#00ffa1 112.5px,#00ffa0 116.5px,#00ff85 117.5px,#00ff85 121.5px,#00ffa0 122.5px,#00ffa0 126.5px,#00ff85 127.5px,#00ff85 128.5px,#ffc400 129.5px,#ffc400 132.5px,#00ffa0 133.5px,#00ffa0 135.5px,#fe0 136.5px,#fe0 139.5px,#00ff85 140.5px,#00ff85 141.5px,#00ffa0 142.5px,#00ffa0 146.5px,#2fff00 147.5px,#00ff85 148.5px,#00ff82 151.5px,#00ff9b 152.5px,#00ff8c 156.5px,#00ff6d 157.5px,#00ff62 161.5px,#00ff7b 162.5px,#00ff62 164.5px,#00ff7b 166.5px,#00ff61 167.5px,#00ff61 169.5px,#2fff00 170.5px,#2fff00 172px)"></i><i style="left:158px;width:1px;background:linear-gradient(#00ff7b 0px,#00ff7b 4.5px,#00ff67 5.5px,#00ff09 6.5px,#6eff00 7.5px,#bfff00 8.5px,#bfff00 9.5px,#00ff5f 10.5px,#00ff7b 12.5px,#00ff7a 36.5px,#00ff4c 38.5px,#00ff7a 40.5px,#00ff71 50.5px,#00ff5f 51.5px,#00ff81 54.5px,#00ffbe 94.5px,#00ffa9 116.5px,#00ff8b 118.5px,#00ff86 121.5px,#00ffa2 122.5px,#00ffa2 126.5px,#00ff86 127.5px,#00ff86 128.5px,#ffc400 129.5px,#ffc400 132.5px,#00ffa2 133.5px,#00ffa2 135.5px,#fe0 136.5px,#fe0 139.5px,#00ff86 140.5px,#00ff86 141.5px,#00ffa2 142.5px,#00ffa2 146.5px,#00ff86 147.5px,#00ff83 151.5px,#00ff9d 152.5px,#00ff8e 156.5px,#00ff6f 157.5px,#00ff63 161.5px,#00ff7d 162.5px,#00ff64 164.5px,#00ff7c 166.5px,#00ff62 167.5px,#00ff62 172px)"></i><i style="left:159px;width:1px;background:linear-gradient(#00ff7b 0px,#00ff78 5.5px,#00ff5a 6.5px,#18ff00 7.5px,#9aff00 8.5px,#0bff00 9.5px,#0bff00 10.5px,#00ff4a 11.5px,#4fff00 12.5px,#00ff7b 13.5px,#00ff7a 36.5px,#00ff4c 38.5px,#00ff7a 40.5px,#00ff72 50.5px,#00ff5f 51.5px,#00ff82 54.5px,#00ffc3 93.5px,#00ffb5 118.5px,#00ffa5 121.5px,#00ffa8 126.5px,#00ff8a 127.5px,#0f8 128.5px,#ffc400 129.5px,#ffc400 132.5px,#00ffa5 133.5px,#00ffa5 135.5px,#fe0 136.5px,#fe0 139.5px,#0f8 140.5px,#0f8 141.5px,#00ffa5 142.5px,#00ffa5 146.5px,#0f8 147.5px,#00ff85 151.5px,#00ffa0 152.5px,#00ff91 156.5px,#00ff70 157.5px,#00ff65 161.5px,#00ff80 162.5px,#00ff67 164.5px,#00ff80 166.5px,#00ff64 167.5px,#00ff64 172px)"></i><i style="left:160px;width:1px;background:linear-gradient(#00ff7b 0px,#00ff78 5.5px,#00ff5a 6.5px,#18ff00 7.5px,#90ff00 8.5px,#08ff00 9.5px,#0bff00 10.5px,#bfff00 11.5px,#bfff00 13.5px,#00ff7b 14.5px,#00ff7a 36.5px,#00ff4c 38.5px,#00ff7a 40.5px,#00ff72 50.5px,#00ff60 51.5px,#00ff83 54.5px,#00ffc5 93.5px,#00ffbd 126.5px,#00ffab 128.5px,#ffc400 129.5px,#ffc400 132.5px,#00ffab 133.5px,#00ffa8 135.5px,#fe0 136.5px,#fe0 139.5px,#00ff89 140.5px,#00ff89 141.5px,#00ffa7 142.5px,#00ffa7 146.5px,#00ff89 147.5px,#00ff86 151.5px,#00ffa1 152.5px,#00ff93 156.5px,#00ff71 157.5px,#00ff6b 159.5px,#2fff00 160.5px,#2fff00 161.5px,#00ff81 162.5px,#00ff69 164.5px,#00ff81 166.5px,#00ff65 167.5px,#00ff65 172px)"></i><i style="left:161px;width:1px;background:linear-gradient(#00ff7b 0px,#00ff78 5.5px,#00ff5a 6.5px,#18ff00 7.5px,#90ff00 8.5px,#00ff0c 9.5px,#00ff24 10.5px,#5f0 11.5px,#bfff00 12.5px,#0bff00 13.5px,#00ff47 14.5px,#00ff03 15.5px,#00ff7b 16.5px,#00ff7a 36.5px,#00ff4c 38.5px,#00ff7a 40.5px,#00ff72 50.5px,#00ff5f 51.5px,#00ff82 54.5px,#00ffc2 93.5px,#00ffc2 128.5px,#ffc400 129.5px,#ffc400 132.5px,#00ffbd 133.5px,#00ffb8 135.5px,#fe0 136.5px,#fe0 139.5px,#00ff93 140.5px,#00ff8e 141.5px,#00ffa7 142.5px,#00ffa5 146.5px,#0f8 147.5px,#00ff85 151.5px,#00ffa0 152.5px,#00ff91 156.5px,#00ff70 157.5px,#00ff6a 159.5px,#2fff00 160.5px,#2fff00 161.5px,#00ff80 162.5px,#00ff67 164.5px,#00ff7f 166.5px,#00ff64 167.5px,#00ff64 172px)"></i><i style="left:162px;width:1px;background:linear-gradient(#00ff7b 0px,#00ff78 5.5px,#00ff5a 6.5px,#18ff00 7.5px,#90ff00 8.5px,#00ff0c 9.5px,#00ff65 10.5px,#00ff54 11.5px,#0bff00 12.5px,#0bff00 13.5px,#bfff00 14.5px,#bfff00 15.5px,#84ff00 16.5px,#00ff7b 17.5px,#00ff7a 36.5px,#00ff4c 38.5px,#00ff7a 40.5px,#00ff72 50.5px,#00ff5f 51.5px,#00ff82 54.5px,#00ffc2 93.5px,#00ffc2 128.5px,#ffc400 129.5px,#ffc400 132.5px,#00ffc2 133.5px,#00ffc2 135.5px,#fe0 136.5px,#fe0 139.5px,#00ffba 140.5px,#00ffaf 146.5px,#2fff00 147.5px,#00ff91 148.5px,#00ff86 151.5px,#00ff9f 152.5px,#00ff91 156.5px,#00ff70 157.5px,#00ff65 161.5px,#00ff7f 162.5px,#00ff67 164.5px,#00ff7f 166.5px,#00ff64 167.5px,#00ff64 169.5px,#2fff00 170.5px,#2fff00 172px)"></i><i style="left:163px;width:1px;background:linear-gradient(#00ff7b 0px,#00ff78 5.5px,#00ff5a 6.5px,#18ff00 7.5px,#90ff00 8.5px,#00ff0c 9.5px,#00ff65 10.5px,#00ff7b 12.5px,#0f3 13.5px,#7bff00 14.5px,#bfff00 15.5px,#bfff00 16.5px,#00ff1f 17.5px,#00ff6f 18.5px,#00ff7a 36.5px,#00ff4c 38.5px,#00ff7a 40.5px,#00ff72 50.5px,#00ff5f 51.5px,#00ff82 54.5px,#00ffc3 94.5px,#00ffc3 128.5px,#ffc400 129.5px,#ffc400 132.5px,#00ffc3 133.5px,#00ffc3 135.5px,#fe0 136.5px,#fe0 139.5px,#00ffc3 140.5px,#00ffc1 146.5px,#2fff00 147.5px,#00ffba 148.5px,#00ff96 156.5px,#00ff75 157.5px,#00ff65 161.5px,#00ff80 162.5px,#00ff67 164.5px,#00ff80 166.5px,#00ff64 167.5px,#00ff64 169.5px,#2fff00 170.5px,#2fff00 172px)"></i><i style="left:164px;width:1px;background:linear-gradient(#00ff7b 0px,#00ff78 5.5px,#00ff5a 6.5px,#18ff00 7.5px,#90ff00 8.5px,#00ff0c 9.5px,#00ff65 10.5px,#00ff7b 12.5px,#00ff6f 14.5px,#15ff00 15.5px,#0bff00 18.5px,#00ff7b 20.5px,#00ff7a 36.5px,#00ff4c 38.5px,#00ff7a 40.5px,#00ff72 50.5px,#00ff60 51.5px,#00ff82 54.5px,#00ffc3 93.5px,#00ffb6 154.5px,#00ff7c 161.5px,#00ff89 162.5px,#00ff6c 164.5px,#00ff81 166.5px,#00ff65 167.5px,#00ff64 172px)"></i><i style="left:165px;width:1px;background:linear-gradient(#00ff7b 0px,#00ff78 5.5px,#00ff5a 6.5px,#18ff00 7.5px,#90ff00 8.5px,#00ff0c 9.5px,#00ff65 10.5px,#00ff7b 12.5px,#00ff7b 15.5px,#00ff5b 16.5px,#00ff0b 17.5px,#0bff00 20.5px,#00ff7b 22.5px,#00ff7a 36.5px,#00ff4d 38.5px,#00ff7a 40.5px,#00ff73 50.5px,#00ff60 51.5px,#00ff83 54.5px,#00ffc7 93.5px,#0fb 154.5px,#00ff93 163.5px,#00ff84 164.5px,#00ff97 166.5px,#00ff72 172px)"></i><i style="left:166px;width:1px;background:linear-gradient(#00ff7b 0px,#00ff78 5.5px,#00ff5a 6.5px,#18ff00 7.5px,#90ff00 8.5px,#00ff0c 9.5px,#00ff65 10.5px,#00ff7b 12.5px,#00ff7b 17.5px,#0bff00 19.5px,#00ff0b 22.5px,#00ff5b 23.5px,#00ff7b 24.5px,#00ff7a 36.5px,#00ff4d 38.5px,#00ff7a 40.5px,#00ff73 50.5px,#00ff60 51.5px,#00ff84 54.5px,#00ffc9 93.5px,#00ffbd 154.5px,#00ffa6 161.5px,#2fff00 162.5px,#2fff00 165.5px,#00ffa3 166.5px,#00ff9d 172px)"></i><i style="left:167px;width:1px;background:linear-gradient(#00ff7b 0px,#00ff78 5.5px,#00ff5a 6.5px,#18ff00 7.5px,#90ff00 8.5px,#00ff0c 9.5px,#00ff65 10.5px,#00ff7b 12.5px,#00ff7b 19.5px,#0bff00 21.5px,#0bff00 23.5px,#00ff1f 24.5px,#00ff6f 25.5px,#00ff7a 36.5px,#00ff4d 38.5px,#00ff7a 40.5px,#00ff73 50.5px,#00ff61 51.5px,#00ff84 54.5px,#00ffca 93.5px,#00ffbe 154.5px,#00ffa7 161.5px,#2fff00 162.5px,#2fff00 165.5px,#00ffa4 166.5px,#00ffa6 172px)"></i><i style="left:168px;width:1px;background:linear-gradient(#00ff7b 0px,#00ff78 5.5px,#00ff5a 6.5px,#18ff00 7.5px,#90ff00 8.5px,#00ff0c 9.5px,#00ff65 10.5px,#00ff7b 12.5px,#00ff6f 21.5px,#00ff1f 22.5px,#0bff00 23.5px,#0bff00 25.5px,#00ff7b 27.5px,#00ff7a 36.5px,#00ff4d 38.5px,#00ff7a 40.5px,#00ff73 50.5px,#00ff60 51.5px,#00ff83 54.5px,#00ffc7 93.5px,#0fb 154.5px,#00ffaf 157.5px,#2fff00 158.5px,#2fff00 159.5px,#00ffa6 160.5px,#00ff89 164.5px,#00ffa3 168.5px,#00ffa3 172px)"></i><i style="left:169px;width:1px;background:linear-gradient(#00ff7b 0px,#00ff78 5.5px,#00ff5a 6.5px,#18ff00 7.5px,#90ff00 8.5px,#00ff0c 9.5px,#00ff65 10.5px,#00ff7b 12.5px,#00ff7b 22.5px,#00ff5b 23.5px,#00ff0b 24.5px,#0bff00 27.5px,#00ff47 29.5px,#00ff74 30.5px,#00ff7a 36.5px,#00ff4d 38.5px,#00ff7a 40.5px,#00ff73 50.5px,#00ff60 51.5px,#00ff83 54.5px,#00ffc7 93.5px,#0fb 154.5px,#00ffaf 157.5px,#2fff00 158.5px,#2fff00 159.5px,#00ffa6 160.5px,#00ff89 164.5px,#00ffa3 168.5px,#00ffa3 172px)"></i><i style="left:170px;width:1px;background:linear-gradient(#00ff7b 0px,#00ff78 5.5px,#00ff5a 6.5px,#18ff00 7.5px,#90ff00 8.5px,#00ff0c 9.5px,#00ff65 10.5px,#00ff7b 12.5px,#00ff7b 24.5px,#0bff00 26.5px,#00ff07 31.5px,#00ff61 33.5px,#00ff7b 34.5px,#00ff6a 37.5px,#00ff4c 38.5px,#00ff7a 40.5px,#00ff72 50.5px,#00ff60 51.5px,#00ff83 54.5px,#00ffc5 93.5px,#00ffc5 149.5px,#2fff00 150.5px,#2fff00 151.5px,#00ffbf 152.5px,#00ff94 163.5px,#00ff87 164.5px,#00ff94 165.5px,#2fff00 166.5px,#2fff00 169.5px,#00ffa1 170.5px,#00ffa1 172px)"></i><i style="left:171px;width:1px;background:linear-gradient(#00ff7b 0px,#00ff78 5.5px,#00ff5a 6.5px,#18ff00 7.5px,#90ff00 8.5px,#00ff0c 9.5px,#00ff65 10.5px,#00ff7b 12.5px,#00ff7b 26.5px,#0f0 29.5px,#0bff00 34.5px,#00ff6a 37.5px,#00ff4c 38.5px,#00ff7a 40.5px,#00ff72 50.5px,#00ff60 51.5px,#00ff82 54.5px,#00ffc3 93.5px,#00ffc3 149.5px,#2fff00 150.5px,#2fff00 151.5px,#00ffbd 152.5px,#00ff92 163.5px,#00ff85 164.5px,#00ff92 165.5px,#2fff00 166.5px,#2fff00 169.5px,#00ff9f 170.5px,#00ff9f 172px)"></i><i style="left:172px;width:1px;background:linear-gradient(#00ff7b 0px,#00ff78 5.5px,#00ff5a 6.5px,#18ff00 7.5px,#90ff00 8.5px,#00ff0c 9.5px,#00ff65 10.5px,#00ff7b 12.5px,#00ff7b 29.5px,#00ff6e 30.5px,#00ff14 32.5px,#0bff00 34.5px,#00ff06 38.5px,#0f3 40.5px,#00ff6b 50.5px,#00ff5e 51.5px,#00ff82 54.5px,#00ffc2 94.5px,#00ffb5 154.5px,#00ff90 163.5px,#00ff90 165.5px,#00ff9d 169.5px,#2fff00 170.5px,#2fff00 172px)"></i><i style="left:173px;width:1px;background:linear-gradient(#00ff7b 0px,#00ff78 5.5px,#00ff5a 6.5px,#18ff00 7.5px,#90ff00 8.5px,#00ff0c 9.5px,#00ff65 10.5px,#00ff7b 12.5px,#00ff7b 33.5px,#0bff00 36.5px,#00ff06 58.5px,#00ffb4 78.5px,#00ffc2 149.5px,#00ff91 163.5px,#00ff84 164.5px,#00ff9e 168.5px,#00ff9e 169.5px,#2fff00 170.5px,#2fff00 172px)"></i><i style="left:174px;width:1px;background:linear-gradient(#00ff7b 0px,#00ff78 5.5px,#00ff5a 6.5px,#18ff00 7.5px,#90ff00 8.5px,#00ff0c 9.5px,#00ff65 10.5px,#00ff7b 12.5px,#00ff7a 36.5px,#00ff23 38.5px,#0bff00 49.5px,#08ff00 77.5px,#00ffb5 78.5px,#00ffc4 138.5px,#00ffb4 155.5px,#00ff93 163.5px,#00ff86 164.5px,#00ffa0 168.5px,#00ffa0 172px)"></i><i style="left:175px;width:1px;background:linear-gradient(#00ff7b 0px,#00ff78 5.5px,#00ff5a 6.5px,#18ff00 7.5px,#90ff00 8.5px,#00ff0c 9.5px,#00ff65 10.5px,#00ff7b 12.5px,#00ff7a 36.5px,#00ff4d 38.5px,#00ff7a 40.5px,#00ff72 50.5px,#00ff60 51.5px,#00ff70 54.5px,#0bff00 73.5px,#08ff00 77.5px,#00ffb6 78.5px,#00ffc5 133.5px,#00ffb5 155.5px,#00ff94 163.5px,#00ff87 164.5px,#00ffa1 168.5px,#00ffa1 172px)"></i><i style="left:176px;width:1px;background:linear-gradient(#fe0 0px,#ffdb00 83.5px,#ffce00 97.5px,#ff5f00 99.5px,#ff3d00 100.5px,#ff3800 106.5px,#ff8c00 107.5px,#ff8c00 109.5px,#ffbe00 111.5px,#fa0 116.5px,#ff8c00 117.5px,#ff8c00 119.5px,#ff3100 120.5px,#ff3100 124.5px,#ff8c00 125.5px,#fa0 128.5px,#ff8c00 133.5px,#ff4600 134.5px,#ff4600 138.5px,#ff8c00 139.5px,#ff9c00 145.5px,#ff8c00 147.5px,#ff3800 148.5px,#ff3800 151.5px,#ff8c00 152.5px,#ff9300 161.5px,#ffa200 164.5px,#ffa500 170.5px,#ff9700 172px)"></i><i style="left:177px;width:1px;background:linear-gradient(#fff500 0px,#ffe200 83.5px,#ffd400 98.5px,#ff9000 100.5px,#ff3800 101.5px,#ff3800 108.5px,#ff8c00 109.5px,#ff9200 112.5px,#ffc300 113.5px,#ffb100 116.5px,#ffc000 117.5px,#ff8c00 119.5px,#ff8c00 120.5px,#ff3100 121.5px,#ff3100 125.5px,#ff8c00 126.5px,#ff8c00 128.5px,#ffa700 129.5px,#ffa500 131.5px,#ffb700 132.5px,#ff8c00 133.5px,#ff8c00 134.5px,#ff4600 135.5px,#ff4600 139.5px,#ff8c00 140.5px,#ffa300 144.5px,#ffa300 146.5px,#ff8c00 148.5px,#ff3800 149.5px,#ff3800 152.5px,#ff8c00 153.5px,#ffa000 158.5px,#ff9a00 161.5px,#ffa900 164.5px,#ffac00 170.5px,#ff9e00 172px)"></i><i style="left:178px;width:1px;background:linear-gradient(#fffc00 0px,#ffed00 80.5px,#ffd500 98.5px,#ff9000 100.5px,#ff8c00 103.5px,#ff3800 104.5px,#ff3800 110.5px,#ff8c00 111.5px,#ff8c00 113.5px,#ffb900 115.5px,#ffc400 119.5px,#ff8c00 120.5px,#ff8c00 122.5px,#ff3100 123.5px,#ff3100 127.5px,#ff8c00 128.5px,#ff8c00 129.5px,#ffba00 130.5px,#ffab00 133.5px,#ff8c00 134.5px,#ff8c00 135.5px,#ff4600 136.5px,#ff4600 140.5px,#ff8c00 141.5px,#ff8c00 142.5px,#ffb500 143.5px,#ff9f00 145.5px,#ffa800 147.5px,#ff8c00 148.5px,#ff8c00 149.5px,#ff3800 150.5px,#ff3800 153.5px,#ff8c00 154.5px,#ffae00 161.5px,#ff9e00 164.5px,#ffa200 172px)"></i><i style="left:179px;width:1px;background:linear-gradient(#fffc00 0px,#ffed00 80.5px,#ffd200 101.5px,#ff8c00 103.5px,#ff8c00 106.5px,#ff3800 107.5px,#ff3800 112.5px,#ff8c00 113.5px,#ff8c00 115.5px,#ffb800 116.5px,#ffc000 120.5px,#ff8c00 122.5px,#ff8c00 123.5px,#ff3100 124.5px,#ff3100 128.5px,#ff8c00 129.5px,#ff8c00 130.5px,#ffb900 131.5px,#ffab00 134.5px,#ff8c00 135.5px,#ff8c00 136.5px,#ff4600 137.5px,#ff4600 141.5px,#ff8c00 142.5px,#ffa700 148.5px,#ff8600 150.5px,#ff3800 151.5px,#ff3800 153.5px,#ff8c00 154.5px,#ffae00 161.5px,#ff9e00 164.5px,#ffa200 172px)"></i><i style="left:180px;width:1px;background:linear-gradient(#fffc00 0px,#ffe900 80.5px,#ffcd00 104.5px,#ff9800 105.5px,#ff8c00 108.5px,#ff3800 109.5px,#ff3800 114.5px,#ff8c00 115.5px,#ff8c00 117.5px,#ffbe00 118.5px,#ffaf00 122.5px,#ff8c00 123.5px,#ff8c00 124.5px,#ff3100 125.5px,#ff3100 129.5px,#ff8c00 130.5px,#ffaf00 135.5px,#ff8c00 136.5px,#ff8c00 137.5px,#ff4600 138.5px,#ff5000 142.5px,#ff8c00 143.5px,#ffac00 146.5px,#ffad00 148.5px,#ff8c00 150.5px,#ff3800 151.5px,#ff3800 154.5px,#ff8c00 155.5px,#ff8c00 156.5px,#ffb700 157.5px,#ffa200 164.5px,#ffb100 167.5px,#ffa700 172px)"></i><i style="left:181px;width:1px;background:linear-gradient(#fffc00 0px,#ffe900 80.5px,#ffd000 107.5px,#ff8c00 108.5px,#ff8c00 110.5px,#ff3800 111.5px,#ff3800 116.5px,#ff8c00 117.5px,#ff8c00 118.5px,#fb0 119.5px,#ffad00 123.5px,#ff8c00 124.5px,#ff8c00 126.5px,#ff3100 127.5px,#ff3100 130.5px,#ff8c00 131.5px,#ffaf00 136.5px,#ff8c00 137.5px,#ff8c00 138.5px,#ff4600 139.5px,#ff4600 142.5px,#ff8c00 143.5px,#ff8c00 144.5px,#ffad00 145.5px,#ffac00 149.5px,#ff8c00 150.5px,#ff8c00 151.5px,#ff3800 152.5px,#ff3800 155.5px,#ff8c00 156.5px,#ff8c00 157.5px,#ffb700 158.5px,#ffa500 161.5px,#ffa700 172px)"></i><i style="left:182px;width:1px;background:linear-gradient(#fffa00 0px,#ffe700 83.5px,#fd0 95.5px,#ffca00 98.5px,#ff9000 100.5px,#ff8c00 101.5px,#ffd300 102.5px,#ffc900 109.5px,#ff8c00 110.5px,#ff8c00 112.5px,#ff3800 113.5px,#ff3800 117.5px,#ff8c00 118.5px,#ff8c00 120.5px,#ffc500 121.5px,#ffc100 124.5px,#ff8c00 126.5px,#ff8c00 127.5px,#ff3100 128.5px,#ff3100 131.5px,#ff8c00 132.5px,#ff8c00 133.5px,#ffad00 134.5px,#ffa100 137.5px,#ff8c00 139.5px,#ff4600 140.5px,#ff4600 143.5px,#ff8c00 144.5px,#ff8c00 145.5px,#ffaf00 146.5px,#ffa500 149.5px,#ffb500 150.5px,#ff8c00 151.5px,#ff8c00 152.5px,#ff3800 153.5px,#ff3800 156.5px,#ff8c00 157.5px,#ffb500 158.5px,#ffa200 160.5px,#ff9300 164.5px,#fa0 172px)"></i><i style="left:183px;width:1px;background:linear-gradient(#ffd900 0px,#ffc700 83.5px,#ffbf00 95.5px,#ffab00 98.5px,#ff8600 99.5px,#ff8c00 103.5px,#ffb200 105.5px,#fa0 111.5px,#ff8c00 112.5px,#ff8c00 114.5px,#ff3800 115.5px,#ff3800 119.5px,#ff8c00 120.5px,#ff8c00 121.5px,#ffa800 122.5px,#ffa400 125.5px,#ff8c00 128.5px,#ff3100 129.5px,#ff3100 132.5px,#ff8c00 133.5px,#ff8500 137.5px,#ff9f00 138.5px,#ff8c00 140.5px,#ff4600 141.5px,#ff4600 144.5px,#ff8c00 145.5px,#ff8a00 149.5px,#ff9a00 151.5px,#ff8300 153.5px,#ff3800 154.5px,#ff3800 156.5px,#ff8c00 157.5px,#ff7900 164.5px,#ff8f00 172px)"></i><i style="left:184px;width:1px;background:linear-gradient(#ffd900 0px,#ffc500 84.5px,#ffb900 98.5px,#f60 100.5px,#ff6200 102.5px,#ff8c00 103.5px,#ff8c00 106.5px,#ffa900 107.5px,#ffa100 113.5px,#ff8c00 115.5px,#ff3800 116.5px,#ff3800 120.5px,#ff8c00 121.5px,#ff8c00 122.5px,#ffa700 123.5px,#ffa500 125.5px,#ff8f00 127.5px,#ff8c00 129.5px,#ff3100 130.5px,#ff3100 133.5px,#ff8c00 134.5px,#ff8c00 141.5px,#ff4600 142.5px,#ff4600 145.5px,#ff8a00 146.5px,#ff8c00 153.5px,#ff3800 154.5px,#ff3800 157.5px,#ff8c00 158.5px,#ff7900 160.5px,#ff9100 164.5px,#ff8e00 172px)"></i><i style="left:185px;width:1px;background:linear-gradient(#ffd900 0px,#ffc500 84.5px,#ffb900 98.5px,#f60 100.5px,#ff6200 104.5px,#ff8b00 105.5px,#ff8c00 108.5px,#fa0 109.5px,#ffa600 114.5px,#ff8c00 115.5px,#ff8c00 117.5px,#ff3800 118.5px,#ff3800 121.5px,#ff8c00 122.5px,#ff8c00 124.5px,#ffa500 125.5px,#ff8f00 127.5px,#ff8c00 130.5px,#ff3100 131.5px,#ff3100 134.5px,#ff8c00 135.5px,#ff8c00 142.5px,#ff4600 143.5px,#ff4600 146.5px,#f80 147.5px,#ff8c00 154.5px,#ff3800 155.5px,#ff3900 158.5px,#ff7900 159.5px,#ff7900 161.5px,#ff9100 163.5px,#ff8e00 172px)"></i><i style="left:186px;width:1px;background:linear-gradient(#ffd900 0px,#ffc600 82.5px,#ffae00 99.5px,#ff9000 100.5px,#ff8c00 101.5px,#ff6200 102.5px,#ff6500 107.5px,#ff8c00 108.5px,#ff8c00 110.5px,#ffa600 111.5px,#ffa700 116.5px,#ff8c00 117.5px,#ff8c00 118.5px,#ff3800 119.5px,#ff3800 122.5px,#ff8c00 124.5px,#ff8c00 131.5px,#ff3100 132.5px,#ff3100 135.5px,#ff8c00 136.5px,#ff9700 140.5px,#f80 143.5px,#ff4600 144.5px,#ff4600 146.5px,#ff8c00 147.5px,#ff8700 155.5px,#ff3800 156.5px,#ff3800 158.5px,#ff8400 159.5px,#ff8d00 172px)"></i><i style="left:187px;width:1px;background:linear-gradient(#fd0 0px,#ffcb00 83.5px,#ffc600 99.5px,#ff9000 100.5px,#ff8c00 103.5px,#ff6200 104.5px,#ff6200 108.5px,#ff8c00 109.5px,#ff8c00 111.5px,#ffad00 112.5px,#ffb000 117.5px,#ff8c00 118.5px,#ff8c00 119.5px,#ff3800 120.5px,#ff3800 124.5px,#ff8c00 125.5px,#f90 129.5px,#ff8c00 132.5px,#ff3100 133.5px,#ff3100 136.5px,#ff8c00 137.5px,#ff9f00 140.5px,#ff8c00 143.5px,#ff4600 144.5px,#ff4600 147.5px,#ff8c00 148.5px,#ff8c00 155.5px,#ff3800 156.5px,#ff3800 159.5px,#ff8c00 160.5px,#ff9500 172px)"></i><i style="left:188px;width:1px;background:linear-gradient(#fff500 0px,#ffe300 92.5px,#ffd600 101.5px,#ffc600 102.5px,#ff8c00 103.5px,#ff8c00 105.5px,#ff6200 106.5px,#ff6200 110.5px,#ff8c00 111.5px,#ff8c00 113.5px,#ffc400 114.5px,#ffce00 118.5px,#ff8c00 119.5px,#ff8c00 120.5px,#ff3800 122.5px,#ff3800 125.5px,#ff8c00 126.5px,#ff8c00 127.5px,#ffce00 128.5px,#ffc400 131.5px,#ff8c00 132.5px,#ff8c00 133.5px,#ff3100 134.5px,#ff3100 137.5px,#ff8c00 138.5px,#ff8c00 139.5px,#ffd200 140.5px,#ffb800 141.5px,#ffb800 142.5px,#ff8c00 143.5px,#ff8c00 144.5px,#ff4600 145.5px,#ff4600 148.5px,#ff8c00 149.5px,#ff9500 150.5px,#ffd300 151.5px,#fb0 154.5px,#ff8c00 155.5px,#ff8c00 156.5px,#ff3800 157.5px,#ff3800 159.5px,#ff8c00 160.5px,#ff8c00 161.5px,#ffc800 162.5px,#ffc700 170.5px,#ffb600 172px)"></i><i style="left:189px;width:1px;background:linear-gradient(#a1ff00 0px,#b0ff00 63.5px,#fff500 98.5px,#ffe300 104.5px,#ff8c00 105.5px,#ff8c00 107.5px,#ff6200 108.5px,#ff6200 112.5px,#ff8c00 113.5px,#ff8c00 114.5px,#ffd000 115.5px,#ffda00 119.5px,#ff9000 120.5px,#ff8c00 122.5px,#ff3800 123.5px,#ff3800 126.5px,#ff8c00 127.5px,#ff8c00 128.5px,#fc0 129.5px,#ffd900 132.5px,#ff8c00 133.5px,#ff8c00 134.5px,#ff3100 135.5px,#ff3100 138.5px,#ff8c00 139.5px,#ffb300 140.5px,#ffba00 143.5px,#ff8c00 144.5px,#ff8c00 145.5px,#ff4600 146.5px,#ff4600 148.5px,#ff8c00 149.5px,#ff8c00 150.5px,#ffd300 151.5px,#ffba00 155.5px,#ff8c00 156.5px,#ff3800 157.5px,#ff3800 160.5px,#ff8c00 161.5px,#ff8c00 162.5px,#ffc800 163.5px,#ffc700 170.5px,#ffb600 172px)"></i><i style="left:190px;width:1px;background:linear-gradient(#9bff00 0px,#a9ff00 62.5px,#dfff00 86.5px,#fffe00 96.5px,#fff000 106.5px,#ff8c00 107.5px,#ff8c00 109.5px,#ff6200 110.5px,#ff6200 113.5px,#ff8c00 114.5px,#ff8c00 116.5px,#fff200 117.5px,#ffe500 120.5px,#ff8c00 122.5px,#ff8c00 123.5px,#ff3800 124.5px,#ff3800 127.5px,#ff8c00 128.5px,#ff8c00 129.5px,#ffd000 130.5px,#fb0 133.5px,#ff3100 136.5px,#ff3100 138.5px,#ff8c00 139.5px,#ff8c00 140.5px,#ffe300 141.5px,#ffe100 143.5px,#fc0 144.5px,#ff4600 146.5px,#ff4600 149.5px,#ff8c00 150.5px,#ff8c00 151.5px,#ffd200 152.5px,#ffc600 155.5px,#ff8c00 156.5px,#ff8c00 157.5px,#ff3800 158.5px,#ff3800 160.5px,#ff8c00 161.5px,#ff8c00 162.5px,#ffc700 163.5px,#ffb600 172px)"></i><i style="left:191px;width:1px;background:linear-gradient(#41ff00 0px,#4eff00 59.5px,#a0ff00 82.5px,#fff800 104.5px,#fff500 107.5px,#ff8c00 109.5px,#ff8c00 110.5px,#ff6200 111.5px,#ff6200 114.5px,#ff8c00 116.5px,#ff8c00 117.5px,#fff100 118.5px,#ffe200 121.5px,#ffc700 122.5px,#ff8c00 123.5px,#ff8c00 124.5px,#ff3800 125.5px,#ff3800 128.5px,#ff8c00 129.5px,#ff8c00 130.5px,#ffc800 131.5px,#ffc200 133.5px,#ff8c00 134.5px,#ff8c00 135.5px,#ff3100 136.5px,#ff3100 139.5px,#ff8c00 140.5px,#ff8c00 141.5px,#ffd600 142.5px,#ffc300 144.5px,#ff8c00 145.5px,#ff8c00 146.5px,#ff4600 147.5px,#ff4600 150.5px,#ffc500 152.5px,#ffb300 156.5px,#ff3800 159.5px,#ff3800 161.5px,#ff8c00 162.5px,#ff8c00 163.5px,#ffb900 164.5px,#ffa800 172px)"></i><i style="left:192px;width:1px;background:linear-gradient(#41ff00 0px,#4eff00 59.5px,#a4ff00 83.5px,#9fff00 86.5px,#c0ff00 88.5px,#e8ff00 98.5px,#fffe00 100.5px,#ffea00 107.5px,#fff300 109.5px,#ff8c00 110.5px,#ff8c00 112.5px,#ff6200 113.5px,#ff6200 116.5px,#ff8c00 117.5px,#ff8c00 118.5px,#ffde00 119.5px,#ffe100 122.5px,#ffcd00 123.5px,#ff8c00 124.5px,#ff8c00 125.5px,#ff3800 126.5px,#ff3800 128.5px,#ffb100 131.5px,#ffba00 134.5px,#ff8c00 135.5px,#ff8c00 136.5px,#ff3100 137.5px,#ff3100 140.5px,#ff8c00 141.5px,#ff8f00 142.5px,#ffc200 143.5px,#ffb700 145.5px,#ff8c00 146.5px,#ff8c00 147.5px,#ff4600 148.5px,#ff4600 150.5px,#ff8c00 151.5px,#ff8c00 152.5px,#ffad00 153.5px,#ffbd00 156.5px,#ff8c00 157.5px,#ff8c00 158.5px,#ff3800 159.5px,#ff3800 161.5px,#ff7e00 162.5px,#ff8c00 163.5px,#ffb300 164.5px,#ffb000 172px)"></i><i style="left:193px;width:1px;background:linear-gradient(#41ff00 0px,#4eff00 59.5px,#a4ff00 83.5px,#9fff00 86.5px,#c0ff00 88.5px,#e8ff00 98.5px,#fffe00 100.5px,#ffea00 107.5px,#fff100 110.5px,#ffd200 111.5px,#ff8c00 112.5px,#ff8c00 113.5px,#ff6200 114.5px,#ff6200 117.5px,#ff8c00 118.5px,#ff8c00 119.5px,#ffe400 120.5px,#ffe400 123.5px,#ff8c00 125.5px,#ff8c00 126.5px,#ff3800 127.5px,#ff3800 129.5px,#ff8c00 130.5px,#ff8c00 131.5px,#ffbc00 132.5px,#ffc800 135.5px,#ff8c00 136.5px,#ff8c00 137.5px,#ff3100 138.5px,#ff3100 140.5px,#ff8300 141.5px,#ff8c00 142.5px,#ffc200 143.5px,#ffb400 146.5px,#ff8c00 147.5px,#ff4600 148.5px,#ff4600 151.5px,#ff8c00 152.5px,#ffbd00 156.5px,#ffbd00 157.5px,#ff8c00 158.5px,#ff7500 159.5px,#ff3800 160.5px,#ff3800 162.5px,#ff8c00 163.5px,#ff8c00 164.5px,#ffb700 165.5px,#ffb000 172px)"></i><i style="left:194px;width:1px;background:linear-gradient(#fff500 0px,#ffe400 83.5px,#ffc200 112.5px,#ff8c00 113.5px,#ff8c00 114.5px,#ff6200 115.5px,#ff6200 118.5px,#ff8c00 119.5px,#ff8c00 120.5px,#ffbc00 121.5px,#ffab00 125.5px,#ff3800 128.5px,#ff3800 130.5px,#ff8c00 131.5px,#ff8c00 132.5px,#ffa900 133.5px,#ffb600 136.5px,#ff8c00 137.5px,#ff3100 138.5px,#ff3100 141.5px,#ff8c00 142.5px,#ff8c00 143.5px,#ffa600 144.5px,#ffa500 146.5px,#ff8c00 147.5px,#ff8c00 148.5px,#ff4600 149.5px,#ff4600 151.5px,#ff8c00 152.5px,#ff8c00 153.5px,#ffb100 154.5px,#ff8c00 159.5px,#ff3800 160.5px,#ff3800 162.5px,#ff8c00 163.5px,#ffa300 167.5px,#ff9a00 172px)"></i><i style="left:195px;width:1px;background:linear-gradient(#fff500 0px,#ffe400 83.5px,#ffc100 113.5px,#ff8c00 114.5px,#ff8c00 116.5px,#ff6200 117.5px,#ff6200 119.5px,#ff8c00 120.5px,#ff8c00 121.5px,#fb0 122.5px,#ffb700 125.5px,#ff8c00 126.5px,#ff8c00 127.5px,#ff3800 128.5px,#ff3800 131.5px,#ff8c00 132.5px,#ff8c00 133.5px,#ffb700 135.5px,#ffb600 136.5px,#ff8c00 137.5px,#ff8c00 138.5px,#ff3100 139.5px,#ff3100 142.5px,#ff8c00 143.5px,#ffa600 144.5px,#ffb400 147.5px,#ff8c00 148.5px,#ff4600 149.5px,#ff4600 152.5px,#ff8c00 153.5px,#ff8e00 154.5px,#ffb100 155.5px,#ff9e00 157.5px,#ff8c00 159.5px,#ff3800 161.5px,#ff3800 163.5px,#ff8c00 164.5px,#ffa300 166.5px,#ff9a00 172px)"></i><i style="left:196px;width:1px;background:linear-gradient(#bfff00 0px,#ceff00 62.5px,#f3ff00 75.5px,#ffdc00 104.5px,#ffcf00 114.5px,#ff9200 115.5px,#ff8c00 117.5px,#ff6200 118.5px,#ff6200 120.5px,#ff8c00 121.5px,#ff8c00 122.5px,#ffc300 123.5px,#ffd100 126.5px,#ff8c00 127.5px,#ff8c00 128.5px,#ff3800 129.5px,#ff3800 132.5px,#ff8c00 133.5px,#ffcb00 135.5px,#ffca00 137.5px,#ff8c00 138.5px,#ff8c00 139.5px,#ff3100 140.5px,#ff3100 142.5px,#ff8c00 143.5px,#ff8c00 144.5px,#fb0 145.5px,#ffa600 147.5px,#ff8c00 148.5px,#ff8c00 149.5px,#ff4600 150.5px,#ff4600 152.5px,#ff8c00 153.5px,#ff8c00 154.5px,#ffb700 155.5px,#ffb100 158.5px,#ff8c00 159.5px,#ff8c00 160.5px,#ff3800 161.5px,#ff3800 163.5px,#ff8c00 164.5px,#ffb500 169.5px,#ffb300 172px)"></i><i style="left:197px;width:1px;background:linear-gradient(#65ff00 0px,#73ff00 60.5px,#a5ff00 75.5px,#e2ff00 92.5px,#fff200 103.5px,#ffde00 115.5px,#ffa500 116.5px,#ff8c00 117.5px,#ff8c00 118.5px,#ff6200 119.5px,#ff6200 121.5px,#ff8c00 122.5px,#ff8c00 123.5px,#ffcf00 124.5px,#ffdc00 127.5px,#ff8c00 128.5px,#ff8c00 129.5px,#ff3800 130.5px,#ff3800 132.5px,#ff8c00 133.5px,#ff8c00 134.5px,#ffd500 135.5px,#ffc000 138.5px,#ff8c00 139.5px,#ff3100 140.5px,#ff3100 143.5px,#ff8c00 144.5px,#ff8d00 145.5px,#ffc300 146.5px,#ffad00 148.5px,#ff8c00 149.5px,#ff4f00 150.5px,#ff4600 153.5px,#ff8c00 154.5px,#ffb800 156.5px,#fb0 159.5px,#ff8c00 160.5px,#ff3800 161.5px,#ff3800 164.5px,#ff8c00 165.5px,#fa0 166.5px,#ffba00 172px)"></i><i style="left:198px;width:1px;background:linear-gradient(#ffea00 0px,#ffd800 81.5px,#ffc000 101.5px,#ffa600 117.5px,#ff8c00 118.5px,#ff8c00 119.5px,#ff6200 120.5px,#ff6200 122.5px,#ff8c00 123.5px,#ff8c00 124.5px,#ffb000 125.5px,#ffac00 128.5px,#ff8c00 129.5px,#f80 130.5px,#ff3800 131.5px,#ff3800 133.5px,#ff8c00 134.5px,#ff8c00 135.5px,#ffb000 136.5px,#ff8c00 140.5px,#ff3100 141.5px,#ff3100 143.5px,#ff8c00 144.5px,#ff9e00 148.5px,#ff8c00 150.5px,#ff4600 151.5px,#ff4600 153.5px,#ff8c00 154.5px,#ff8c00 161.5px,#ff3800 162.5px,#ff3800 164.5px,#ff8c00 165.5px,#ffa100 172px)"></i><i style="left:199px;width:1px;background:linear-gradient(#ffea00 0px,#ffd800 81.5px,#ffc000 101.5px,#ffb400 117.5px,#ff8c00 119.5px,#ff6200 120.5px,#ff6200 123.5px,#fa0 125.5px,#ffac00 128.5px,#ff8c00 130.5px,#ff3800 131.5px,#ff3800 134.5px,#ff8c00 135.5px,#ffb000 136.5px,#ffa200 139.5px,#ff8c00 140.5px,#ff3e00 141.5px,#ff3100 144.5px,#ff8c00 145.5px,#ff9d00 149.5px,#ff8c00 150.5px,#ff4600 151.5px,#ff4600 154.5px,#ff8c00 155.5px,#ff8c00 161.5px,#ff3800 162.5px,#ff3800 164.5px,#ff8c00 166.5px,#ffa100 172px)"></i><i style="left:200px;width:1px;background:linear-gradient(#ffea00 0px,#ffd800 80.5px,#ffcf00 98.5px,#ffba00 101.5px,#ffbe00 116.5px,#ffa900 118.5px,#ff8c00 119.5px,#ff8c00 120.5px,#ff6200 121.5px,#ff6200 123.5px,#ff8c00 124.5px,#ff8c00 125.5px,#ffa600 126.5px,#ff8c00 131.5px,#ff3800 132.5px,#ff3800 134.5px,#ff8c00 135.5px,#ff8c00 136.5px,#fa0 137.5px,#ff8c00 141.5px,#ff3100 142.5px,#ff3100 144.5px,#ff8c00 145.5px,#ff8c00 151.5px,#ff4600 152.5px,#ff4600 154.5px,#ff8c00 155.5px,#ff8c00 158.5px,#fa0 159.5px,#fa0 160.5px,#ff8c00 161.5px,#ff8c00 162.5px,#ff3800 163.5px,#ff3800 165.5px,#ff8c00 166.5px,#ffa700 167.5px,#ff9800 170.5px,#ffad00 172px)"></i><i style="left:201px;width:1px;background:linear-gradient(#ffea00 0px,#ffd800 80.5px,#ffcf00 98.5px,#ffba00 101.5px,#ffbe00 116.5px,#ffa900 118.5px,#ffa800 119.5px,#ff8c00 120.5px,#ff8c00 121.5px,#ff6200 122.5px,#ff6200 124.5px,#ff8c00 125.5px,#ff8c00 126.5px,#ffa500 127.5px,#ff8c00 131.5px,#ff3800 133.5px,#ff3800 135.5px,#ff8c00 136.5px,#ffa400 137.5px,#ff8c00 141.5px,#ff3100 143.5px,#ff3100 145.5px,#ff8c00 146.5px,#ff8b00 149.5px,#ff9f00 150.5px,#ff8c00 151.5px,#ff4600 152.5px,#ff4600 155.5px,#ff8c00 156.5px,#ff8c00 158.5px,#fa0 159.5px,#fa0 160.5px,#ff8c00 161.5px,#ff8c00 162.5px,#ff3800 163.5px,#ff3800 165.5px,#ff8c00 166.5px,#ff9800 170.5px,#ffad00 172px)"></i><i style="left:202px;width:1px;background:linear-gradient(#ffea00 0px,#ffd700 83.5px,#ffbd00 116.5px,#ffa300 118.5px,#ffb200 120.5px,#ff8c00 121.5px,#ff8c00 122.5px,#ff6200 123.5px,#ff6200 125.5px,#ff8c00 126.5px,#ffab00 129.5px,#fa0 130.5px,#ff8c00 131.5px,#ff8c00 132.5px,#ff3800 133.5px,#ff3800 135.5px,#ff8c00 136.5px,#ff9800 140.5px,#ff8c00 142.5px,#ff3100 143.5px,#ff3100 145.5px,#ff8c00 146.5px,#ff8e00 149.5px,#ff9f00 150.5px,#ff8c00 152.5px,#ff4600 153.5px,#ff4600 155.5px,#ff8c00 156.5px,#ff9000 158.5px,#ffab00 159.5px,#ffab00 161.5px,#ff8c00 162.5px,#ff3800 163.5px,#ff3800 166.5px,#ff8c00 167.5px,#ff9300 172px)"></i><i style="left:203px;width:1px;background:linear-gradient(#ffea00 0px,#ffd700 83.5px,#ffbd00 116.5px,#ffa300 118.5px,#ffb100 121.5px,#ff6200 124.5px,#ff6200 125.5px,#ff8c00 126.5px,#ff8c00 127.5px,#ffab00 128.5px,#ffa900 131.5px,#ff8c00 132.5px,#ff8c00 133.5px,#ff3800 134.5px,#ff3800 136.5px,#ff8c00 137.5px,#ff9200 141.5px,#ff8c00 142.5px,#ff3100 143.5px,#ff3100 146.5px,#ff8c00 147.5px,#ff9e00 151.5px,#ff8c00 152.5px,#ff4600 153.5px,#ff4600 155.5px,#ff8c00 156.5px,#ff9000 158.5px,#ffab00 159.5px,#ffab00 161.5px,#ff8c00 162.5px,#ff8c00 163.5px,#ff3800 164.5px,#ff3800 166.5px,#ff8c00 167.5px,#ff9300 172px)"></i><i style="left:204px;width:1px;background:linear-gradient(#ffea00 0px,#ffdb00 80.5px,#ffc900 104.5px,#ffb300 110.5px,#ffb700 116.5px,#ffa600 119.5px,#ffb000 121.5px,#ff8c00 122.5px,#ff8c00 123.5px,#ff6200 124.5px,#ff6200 126.5px,#ff8c00 127.5px,#ffa300 130.5px,#ff8c00 133.5px,#ff3800 134.5px,#ff3800 136.5px,#ff8c00 137.5px,#ff9b00 141.5px,#ff8c00 143.5px,#ff3100 144.5px,#ff3100 146.5px,#ff8c00 147.5px,#ffa500 151.5px,#ff8c00 152.5px,#ff5700 153.5px,#ff4600 156.5px,#ff8c00 157.5px,#ffa000 161.5px,#ff8c00 163.5px,#ff3800 164.5px,#ff3800 166.5px,#ff8c00 167.5px,#ff9700 172px)"></i><i style="left:205px;width:1px;background:linear-gradient(#ffea00 0px,#ffdb00 80.5px,#ffc900 104.5px,#ffb300 110.5px,#ffb700 116.5px,#ffa600 119.5px,#ffaf00 122.5px,#ff8c00 123.5px,#ff8c00 124.5px,#ff6200 125.5px,#ff6200 127.5px,#ffa400 129.5px,#ffa900 132.5px,#ff8c00 133.5px,#ff8c00 134.5px,#ff3800 135.5px,#ff3800 137.5px,#ff8c00 138.5px,#ff9b00 142.5px,#ff8c00 143.5px,#ff3100 144.5px,#ff3100 147.5px,#ff8c00 148.5px,#ffa500 151.5px,#ff8c00 152.5px,#ff8c00 153.5px,#ff4600 154.5px,#ff4600 156.5px,#ff8c00 157.5px,#ffa000 161.5px,#ff8c00 163.5px,#ff3800 164.5px,#ff3800 166.5px,#ff8c00 168.5px,#ff9700 172px)"></i><i style="left:206px;width:1px;background:linear-gradient(#ffe000 0px,#ffcd00 79.5px,#ff9a00 123.5px,#ff8c00 124.5px,#ff6200 125.5px,#ff6200 127.5px,#ff8400 128.5px,#ff9200 133.5px,#ff8c00 134.5px,#ff3800 135.5px,#ff3800 137.5px,#ff8c00 138.5px,#ff9400 142.5px,#ff8c00 144.5px,#ff3100 145.5px,#ff3100 147.5px,#ff8700 148.5px,#ff8c00 153.5px,#ff4600 154.5px,#ff4600 156.5px,#ff8c00 157.5px,#ff8600 164.5px,#ff3800 165.5px,#ff3800 167.5px,#ff8700 168.5px,#ff9600 172px)"></i><i style="left:207px;width:1px;background:linear-gradient(#ffe000 0px,#ffcd00 79.5px,#ff9a00 123.5px,#ff8c00 125.5px,#ff6200 126.5px,#ff6200 128.5px,#ff8c00 129.5px,#ff8c00 134.5px,#ff7f00 135.5px,#ff3800 136.5px,#ff3800 138.5px,#ff8c00 139.5px,#ff9500 141.5px,#ff8c00 144.5px,#ff3100 145.5px,#ff3100 147.5px,#ff8700 148.5px,#ff8c00 153.5px,#ff4600 155.5px,#ff4600 157.5px,#ff8c00 158.5px,#ff8600 164.5px,#ff3800 165.5px,#ff3800 167.5px,#ff8700 168.5px,#ff9600 172px)"></i><i style="left:208px;width:1px;background:linear-gradient(#ffe000 0px,#ffce00 80.5px,#ffb900 98.5px,#ffc200 101.5px,#ffab00 103.5px,#ff9600 119.5px,#ffac00 121.5px,#ffa200 124.5px,#ff6200 126.5px,#ff6200 128.5px,#ff8c00 129.5px,#ffa100 131.5px,#ff8c00 135.5px,#ff3800 136.5px,#ff3800 138.5px,#ff8c00 139.5px,#ff8c00 144.5px,#ff3100 145.5px,#ff3100 148.5px,#ff8c00 149.5px,#ff8500 154.5px,#ff4600 155.5px,#ff4600 157.5px,#ff8700 158.5px,#ff8600 164.5px,#ff3800 165.5px,#ff3800 167.5px,#ff8200 168.5px,#f80 172px)"></i><i style="left:209px;width:1px;background:linear-gradient(#ffe000 0px,#ffce00 80.5px,#ffb900 98.5px,#ffc200 101.5px,#ffab00 103.5px,#ff9600 119.5px,#ffac00 121.5px,#ffa200 124.5px,#ff8c00 126.5px,#ff6200 127.5px,#ff6200 129.5px,#ffa100 131.5px,#ff8c00 135.5px,#ff3800 136.5px,#ff3800 138.5px,#ff8c00 139.5px,#ff8c00 145.5px,#ff3100 146.5px,#ff3100 148.5px,#ff8c00 149.5px,#ff8500 154.5px,#ff4600 155.5px,#ff4600 157.5px,#ff8700 158.5px,#ff8600 164.5px,#ff3800 165.5px,#ff3e00 168.5px,#ff8200 169.5px,#f80 172px)"></i><i style="left:210px;width:1px;background:linear-gradient(#ffe000 0px,#ffcd00 81.5px,#ffab00 116.5px,#ff9700 119.5px,#ffab00 121.5px,#ff8c00 126.5px,#ff6200 127.5px,#ff6200 129.5px,#ff8c00 130.5px,#ff9700 134.5px,#ff8c00 136.5px,#ff3800 137.5px,#ff3800 139.5px,#ff8a00 140.5px,#ff8c00 145.5px,#ff3100 146.5px,#ff3100 148.5px,#ff8c00 149.5px,#ff8c00 154.5px,#ff4600 155.5px,#ff4600 157.5px,#ff5900 158.5px,#ff8b00 159.5px,#ff8c00 165.5px,#ff3800 166.5px,#ff3800 168.5px,#ff8c00 169.5px,#ff8f00 172px)"></i><i style="left:211px;width:1px;background:linear-gradient(#ffe000 0px,#ffcd00 81.5px,#ffab00 116.5px,#ff9700 119.5px,#ffab00 121.5px,#ff8c00 127.5px,#ff6200 128.5px,#ff6200 129.5px,#ff8c00 130.5px,#ff9700 135.5px,#ff8c00 136.5px,#ff3800 137.5px,#ff3800 139.5px,#ff8a00 140.5px,#ff8c00 145.5px,#ff3100 146.5px,#ff3100 148.5px,#ff4b00 149.5px,#ff8c00 150.5px,#ff8c00 155.5px,#ff4600 156.5px,#ff4600 158.5px,#ff8b00 159.5px,#ff8c00 165.5px,#ff3800 166.5px,#ff3800 168.5px,#ff8c00 169.5px,#ff8f00 172px)"></i><i style="left:212px;width:1px;background:linear-gradient(#ffe000 0px,#ffcd00 79.5px,#ffa100 122.5px,#f80 124.5px,#ff8c00 127.5px,#ff6200 128.5px,#ff6200 130.5px,#ff9e00 132.5px,#ffa200 135.5px,#ff8c00 136.5px,#ff3800 137.5px,#ff3800 139.5px,#ff8c00 140.5px,#ff8c00 146.5px,#ff3100 147.5px,#ff3100 149.5px,#ff8a00 150.5px,#ff8c00 155.5px,#ff4600 156.5px,#ff4600 158.5px,#ff7f00 159.5px,#ff8c00 165.5px,#ff3800 166.5px,#ff3800 168.5px,#ff8700 169.5px,#ff8a00 172px)"></i><i style="left:213px;width:1px;background:linear-gradient(#ffe000 0px,#ffcd00 79.5px,#ffa100 122.5px,#f80 124.5px,#ff8c00 127.5px,#ff6200 129.5px,#ff6200 130.5px,#ff8c00 131.5px,#ffa200 135.5px,#ff8c00 137.5px,#ff3800 138.5px,#ff3800 140.5px,#ff8c00 141.5px,#ff8c00 146.5px,#ff3100 147.5px,#ff3100 149.5px,#ff8a00 150.5px,#ff8c00 155.5px,#ff4600 156.5px,#ff4600 158.5px,#ff7f00 159.5px,#ff8c00 165.5px,#ff3800 166.5px,#ff3800 168.5px,#ff8700 169.5px,#ff8a00 172px)"></i><i style="left:214px;width:1px;background:linear-gradient(#bfff00 0px,#ceff00 63.5px,#f6ff00 81.5px,#ffcf00 119.5px,#ffbf00 122.5px,#ffca00 125.5px,#ffba00 126.5px,#ff8c00 127.5px,#ff8c00 128.5px,#ff6200 129.5px,#ff6200 130.5px,#ff8c00 131.5px,#ff8c00 132.5px,#ffbe00 133.5px,#ffc500 135.5px,#ff8c00 136.5px,#ff8c00 137.5px,#ff3800 138.5px,#ff3800 140.5px,#ff8c00 141.5px,#ffb600 143.5px,#ffc100 144.5px,#ff8c00 146.5px,#ff3100 147.5px,#ff3100 149.5px,#ff8c00 150.5px,#ff8c00 151.5px,#fc0 153.5px,#fc0 154.5px,#ff4600 156.5px,#ff4600 158.5px,#ff8c00 159.5px,#ff8c00 160.5px,#ffb200 161.5px,#ffb000 164.5px,#ff8c00 165.5px,#ff3800 166.5px,#ff4700 169.5px,#ff8c00 170.5px,#ffae00 172px)"></i><i style="left:215px;width:1px;background:linear-gradient(#bfff00 0px,#ceff00 63.5px,#f6ff00 81.5px,#ffcf00 119.5px,#ffbf00 122.5px,#ffca00 125.5px,#ffb500 127.5px,#ff6200 129.5px,#ff6200 131.5px,#ffbe00 133.5px,#ffc400 136.5px,#ff8c00 137.5px,#ff3800 138.5px,#ff3800 140.5px,#ff8c00 141.5px,#ff8c00 142.5px,#ffb600 143.5px,#ffc000 145.5px,#ff8c00 146.5px,#ff3100 147.5px,#ff3100 149.5px,#ff8a00 150.5px,#ff8c00 151.5px,#fc0 153.5px,#fc0 154.5px,#ff4600 156.5px,#ff4600 159.5px,#ff8c00 160.5px,#ffb200 161.5px,#ffb000 164.5px,#ff8c00 165.5px,#ff8c00 166.5px,#ff3800 167.5px,#ff3800 169.5px,#ff8c00 170.5px,#ffae00 172px)"></i><i style="left:216px;width:1px;background:linear-gradient(#fe0 0px,#ffda00 86.5px,#ffc100 98.5px,#ffce00 101.5px,#ffb200 125.5px,#ffc000 127.5px,#ff6200 129.5px,#ff6200 131.5px,#ff8c00 132.5px,#ffb000 135.5px,#ffb000 136.5px,#ff8c00 137.5px,#ff3800 138.5px,#ff3800 140.5px,#ff8c00 141.5px,#ffa400 143.5px,#ff8c00 146.5px,#ff4a00 147.5px,#ff3100 148.5px,#ff3100 150.5px,#ff8c00 151.5px,#ffac00 153.5px,#ffac00 154.5px,#ff8c00 155.5px,#ff8c00 156.5px,#ff4600 157.5px,#ff4600 159.5px,#ff8c00 160.5px,#ffa200 161.5px,#ff8f00 163.5px,#ff8c00 166.5px,#ff3800 167.5px,#ff3800 169.5px,#ff8c00 170.5px,#ff9c00 172px)"></i><i style="left:217px;width:1px;background:linear-gradient(#fe0 0px,#ffda00 86.5px,#ffc100 98.5px,#ffce00 101.5px,#ffb200 125.5px,#ffc000 127.5px,#ff8c00 128.5px,#ff8c00 129.5px,#ff6200 130.5px,#ff6200 131.5px,#ff8c00 132.5px,#ff8c00 133.5px,#ffaf00 134.5px,#ffb000 136.5px,#ff8c00 137.5px,#ff8c00 138.5px,#ff3800 139.5px,#ff3800 141.5px,#ff8c00 142.5px,#ffa400 143.5px,#ff8c00 147.5px,#ff3100 148.5px,#ff3100 150.5px,#ff8c00 151.5px,#ffac00 153.5px,#ffac00 154.5px,#ff8c00 155.5px,#ff8c00 156.5px,#ff4600 157.5px,#ff4600 159.5px,#ff8c00 160.5px,#ffa200 161.5px,#ff8f00 163.5px,#ff8c00 166.5px,#ff3800 167.5px,#ff3800 169.5px,#ff8c00 170.5px,#ff9c00 172px)"></i><i style="left:218px;width:1px;background:linear-gradient(#fe0 0px,#fd0 80.5px,#ffc700 92.5px,#fc0 96.5px,#ffb800 119.5px,#ffc100 122.5px,#ffab00 124.5px,#ffb300 127.5px,#ff8c00 128.5px,#ff8c00 129.5px,#ff6200 130.5px,#ff6200 131.5px,#ff8c00 132.5px,#ff8c00 133.5px,#ffad00 134.5px,#ffa400 136.5px,#ff8c00 138.5px,#ff3800 139.5px,#ff3800 141.5px,#ff8c00 142.5px,#ffb600 143.5px,#ff8c00 146.5px,#ff8c00 147.5px,#ff3100 148.5px,#ff3100 150.5px,#ff8c00 151.5px,#ffa400 152.5px,#ff8c00 156.5px,#ff4600 157.5px,#ff4600 159.5px,#ff8c00 160.5px,#ff9c00 164.5px,#ff8c00 166.5px,#ff3800 167.5px,#ff3800 169.5px,#ff8c00 170.5px,#ff8c00 172px)"></i><i style="left:219px;width:1px;background:linear-gradient(#fe0 0px,#fd0 80.5px,#ffc700 92.5px,#fc0 96.5px,#ffb800 119.5px,#ffc100 122.5px,#ffab00 124.5px,#ffad00 128.5px,#ff6200 130.5px,#ff6200 132.5px,#ffad00 134.5px,#ff8c00 138.5px,#ff3800 139.5px,#ff3800 141.5px,#ff8c00 142.5px,#ffb600 143.5px,#ff8c00 146.5px,#ff8c00 147.5px,#ff3100 148.5px,#ff3100 150.5px,#ff8c00 151.5px,#f90 155.5px,#ff8c00 156.5px,#ff4600 157.5px,#ff4600 159.5px,#ff8c00 160.5px,#ff9c00 164.5px,#ff8c00 166.5px,#ff3800 167.5px,#ff3800 169.5px,#ff8c00 170.5px,#ff8c00 172px)"></i><i style="left:220px;width:2px;background:linear-gradient(#fe0 0px,#ffde00 80.5px,#ffbc00 116.5px,#ffab00 119.5px,#ffbd00 121.5px,#ffa300 127.5px,#ff8c00 129.5px,#ff6200 130.5px,#ff6200 132.5px,#ffa000 134.5px,#ffa700 137.5px,#ff8c00 138.5px,#ff3800 139.5px,#ff3800 141.5px,#ff8c00 142.5px,#ff8c00 143.5px,#ffa700 144.5px,#ffa600 146.5px,#ff8c00 147.5px,#ff3100 148.5px,#ff3100 150.5px,#ff8c00 151.5px,#ff8c00 152.5px,#ffad00 153.5px,#ffad00 155.5px,#ff8c00 156.5px,#ff4600 157.5px,#ff4600 159.5px,#ff8c00 160.5px,#ff8c00 161.5px,#ffa600 162.5px,#ffa600 164.5px,#ff8c00 166.5px,#ff3800 167.5px,#ff3800 169.5px,#ff8c00 170.5px,#ff8c00 172px)"></i><i style="left:222px;width:1px;background:linear-gradient(#fe0 0px,#ffda00 84.5px,#ffb400 122.5px,#ffae00 128.5px,#ff8c00 129.5px,#ff8b00 130.5px,#ff6200 131.5px,#ff6200 132.5px,#ff8c00 133.5px,#ffa700 136.5px,#ffa600 137.5px,#ff8c00 138.5px,#ff3800 139.5px,#ff3800 141.5px,#ff8c00 142.5px,#ff8c00 143.5px,#ffad00 144.5px,#ffac00 146.5px,#ff8c00 147.5px,#ff3100 148.5px,#ff3100 150.5px,#ff8c00 151.5px,#ff8c00 156.5px,#ff4600 157.5px,#ff4600 159.5px,#ff8c00 160.5px,#ffb100 165.5px,#ff8c00 166.5px,#ff3800 167.5px,#ff3800 169.5px,#ff8c00 170.5px,#ff8c00 172px)"></i><i style="left:223px;width:1px;background:linear-gradient(#bfff00 0px,#cdff00 62.5px,#fffb00 89.5px,#ffce00 122.5px,#ffc700 128.5px,#ff8c00 129.5px,#ff8c00 130.5px,#ff6200 131.5px,#ff6200 132.5px,#ff8c00 133.5px,#ff8c00 134.5px,#ffbf00 135.5px,#ffbd00 137.5px,#ff8c00 138.5px,#ff3800 139.5px,#ff3800 141.5px,#ff8c00 142.5px,#ff8c00 143.5px,#ffc300 144.5px,#ffc200 146.5px,#ff8c00 147.5px,#ff3100 148.5px,#ff3100 150.5px,#ff8400 151.5px,#ffa900 153.5px,#ffa900 155.5px,#ff8c00 156.5px,#ff4600 157.5px,#ff4600 159.5px,#ff8c00 160.5px,#ff8c00 161.5px,#ffb800 162.5px,#ffc600 165.5px,#ff8c00 166.5px,#ff3800 167.5px,#ff3800 169.5px,#ff7800 170.5px,#ff8c00 172px)"></i><i style="left:224px;width:1px;background:linear-gradient(#bfff00 0px,#cdff00 62.5px,#fff900 87.5px,#ffe500 107.5px,#ffdc00 116.5px,#ffc700 119.5px,#ffd500 122.5px,#ffd400 128.5px,#ff8c00 129.5px,#ff8c00 130.5px,#ff6200 131.5px,#ff6200 132.5px,#ff8c00 133.5px,#ff8c00 134.5px,#ffc300 135.5px,#ffc100 137.5px,#f50 139.5px,#ff3800 140.5px,#ff3800 141.5px,#ff8c00 142.5px,#ff8c00 143.5px,#ffb800 144.5px,#ffb700 146.5px,#ff8c00 147.5px,#ff3100 148.5px,#ff3100 150.5px,#ff8c00 152.5px,#ffa400 154.5px,#ff8c00 156.5px,#ff4600 157.5px,#ff4600 159.5px,#ffb700 162.5px,#ffa500 165.5px,#ff8c00 166.5px,#ff3800 167.5px,#ff3800 169.5px,#ff8c00 172px)"></i><i style="left:225px;width:1px;background:linear-gradient(#bfff00 0px,#cdff00 62.5px,#fff900 87.5px,#ffe500 107.5px,#ffdc00 116.5px,#ffc700 119.5px,#ffd500 122.5px,#ffd400 128.5px,#ff8c00 129.5px,#ff8c00 130.5px,#ff6200 131.5px,#ff6200 132.5px,#ff8c00 133.5px,#ff8c00 134.5px,#ffc300 135.5px,#ffc100 137.5px,#ff8c00 138.5px,#ff7600 139.5px,#ff3800 140.5px,#ff3800 141.5px,#ff8c00 142.5px,#ff8c00 143.5px,#ffb800 144.5px,#ffb700 146.5px,#ff8c00 147.5px,#ff3100 148.5px,#ff4000 151.5px,#ff8c00 152.5px,#ffa400 154.5px,#ff8c00 156.5px,#ff4600 157.5px,#ff5300 160.5px,#ffb700 162.5px,#ffa500 165.5px,#ff8c00 166.5px,#ff3800 167.5px,#f40 170.5px,#ff8c00 172px)"></i><i style="left:226px;width:1px;background:linear-gradient(#bfff00 0px,#ceff00 63.5px,#fff300 89.5px,#ffe600 107.5px,#ffd000 110.5px,#ffe600 112.5px,#fc0 122.5px,#ffd400 125.5px,#ffc200 128.5px,#ff8c00 129.5px,#ff8c00 130.5px,#ff6200 131.5px,#ff6200 132.5px,#ff8c00 133.5px,#ff8c00 134.5px,#ffb900 135.5px,#ffb700 137.5px,#ff8c00 138.5px,#ff8600 139.5px,#ff3800 140.5px,#ff3800 141.5px,#ff8a00 142.5px,#ff8c00 143.5px,#ffae00 144.5px,#ffad00 146.5px,#ff8c00 147.5px,#ff3100 148.5px,#f30 151.5px,#ff8c00 152.5px,#ffb800 153.5px,#ffb800 155.5px,#ff8c00 156.5px,#ff4600 157.5px,#ff4700 160.5px,#ff8c00 161.5px,#ffb300 162.5px,#ffc000 165.5px,#ff8c00 166.5px,#ff3800 167.5px,#ff3900 170.5px,#ff8c00 172px)"></i><i style="left:227px;width:1px;background:linear-gradient(#bfff00 0px,#ceff00 63.5px,#fff300 89.5px,#ffe600 107.5px,#ffd000 110.5px,#ffe600 112.5px,#fc0 122.5px,#ffd400 125.5px,#ffc200 128.5px,#ff8c00 129.5px,#ff8c00 130.5px,#ff6200 131.5px,#ff6200 132.5px,#ff8c00 133.5px,#ff8c00 134.5px,#ffb900 135.5px,#ffb700 137.5px,#ff8c00 138.5px,#ff8400 139.5px,#ff3800 140.5px,#ff3800 141.5px,#ff8c00 142.5px,#ff8c00 143.5px,#ffae00 144.5px,#ffad00 146.5px,#ff8c00 147.5px,#ff3100 148.5px,#ff3500 151.5px,#ff8c00 152.5px,#ffb800 153.5px,#ffb800 155.5px,#ff8c00 156.5px,#ff4600 157.5px,#ff4900 160.5px,#ff8c00 161.5px,#ffb300 162.5px,#ffc000 165.5px,#ff8c00 166.5px,#ff3800 167.5px,#ff3b00 170.5px,#ff8c00 172px)"></i><i style="left:228px;width:1px;background:linear-gradient(#bfff00 0px,#ceff00 63.5px,#fff500 86.5px,#ffdf00 104.5px,#ffe900 107.5px,#ffda00 112.5px,#ffdf00 116.5px,#ffcd00 119.5px,#ffd200 127.5px,#ffd100 128.5px,#ff8c00 129.5px,#ff8c00 130.5px,#ff6200 131.5px,#ff6200 132.5px,#ff8c00 133.5px,#ff8c00 134.5px,#ffbf00 135.5px,#ffbd00 137.5px,#ff3800 140.5px,#ff3800 141.5px,#ff8c00 142.5px,#ff8c00 143.5px,#ffb500 144.5px,#ffb400 146.5px,#ff8c00 147.5px,#ff3100 148.5px,#ff3100 150.5px,#ff8c00 152.5px,#ffc200 153.5px,#ffc200 155.5px,#ff4600 157.5px,#ff4600 159.5px,#ffb000 162.5px,#ffba00 165.5px,#ff8c00 166.5px,#ff3800 167.5px,#ff3800 169.5px,#ff5300 170.5px,#ff8c00 172px)"></i><i style="left:229px;width:1px;background:linear-gradient(#00ff07 0px,#00ff05 5.5px,#1f0 6.5px,#6cff00 7.5px,#a8ff00 8.5px,#07ff00 10.5px,#03ff00 37.5px,#1dff00 38.5px,#00ff06 40.5px,#00ff06 67.5px,#52ff00 83.5px,#7bff00 104.5px,#6eff00 107.5px,#83ff00 109.5px,#7cff00 116.5px,#92ff00 119.5px,#84ff00 125.5px,#8eff00 128.5px,#e7ff00 129.5px,#fff300 132.5px,#e7ff00 134.5px,#a5ff00 135.5px,#a7ff00 137.5px,#e7ff00 138.5px,#ffde00 139.5px,#ffde00 141.5px,#e7ff00 142.5px,#e7ff00 143.5px,#b2ff00 144.5px,#b3ff00 146.5px,#e7ff00 147.5px,#ffdb00 148.5px,#ffda00 150.5px,#eaff00 151.5px,#ecff00 152.5px,#a8ff00 153.5px,#afff00 155.5px,#f8ff00 156.5px,#fd0 157.5px,#ffdb00 159.5px,#fffd00 160.5px,#fffc00 161.5px,#d9ff00 162.5px,#ef0 164.5px,#d7ff00 165.5px,#fffc00 166.5px,#ffd200 167.5px,#ffd200 169.5px,#fff800 170.5px,#fffc00 172px)"></i><i style="left:230px;width:1px;background:linear-gradient(#e3ff00 0px,#e3ff00 2.5px,#00ff7b 3.5px,#00ff78 5.5px,#e3ff00 6.5px,#e3ff00 8.5px,#00ff0c 9.5px,#00ff65 10.5px,#00ff79 11.5px,#e3ff00 12.5px,#00ff7b 13.5px,#00ff7b 17.5px,#e3ff00 18.5px,#e3ff00 20.5px,#00ff7b 21.5px,#00ff7b 23.5px,#e3ff00 24.5px,#00ff7b 25.5px,#e3ff00 26.5px,#00ff7b 27.5px,#00ff7b 29.5px,#e3ff00 30.5px,#e3ff00 32.5px,#00ff7b 33.5px,#00ff7b 35.5px,#e3ff00 36.5px,#e3ff00 38.5px,#00ff6a 39.5px,#00ff7b 41.5px,#e3ff00 42.5px,#e3ff00 44.5px,#00ff7b 45.5px,#00ff7b 47.5px,#e3ff00 48.5px,#00ff7c 49.5px,#e3ff00 50.5px,#00ff5f 51.5px,#00ff80 53.5px,#e3ff00 54.5px,#00ff84 55.5px,#e3ff00 56.5px,#00ff87 57.5px,#00ff8b 59.5px,#e3ff00 60.5px,#e3ff00 62.5px,#00ff93 63.5px,#00ff89 65.5px,#e3ff00 66.5px,#e3ff00 68.5px,#00ff7d 69.5px,#00ff74 71.5px,#e3ff00 72.5px,#e3ff00 74.5px,#00ff5f 75.5px,#00ff54 77.5px,#e3ff00 78.5px,#e3ff00 80.5px,#00ff40 81.5px,#00ff38 83.5px,#e3ff00 84.5px,#00ff34 85.5px,#e3ff00 86.5px,#0f3 87.5px,#0f3 89.5px,#e3ff00 90.5px,#0f3 91.5px,#0f3 95.5px,#e3ff00 96.5px,#0f3 97.5px,#0f3 140.5px,#ff6200 141.5px,#ff6200 143.5px,#0f3 144.5px,#00ff32 150.5px,#ff8c00 151.5px,#ff8c00 153.5px,#00ff27 154.5px,#00ff12 160.5px,#ffa400 161.5px,#ff9a00 163.5px,#13ff00 164.5px,#00ff0d 166.5px,#00ff0f 172px)"></i><i style="left:231px;width:1px;background:linear-gradient(#e3ff00 0px,#e3ff00 2.5px,#00ff7b 3.5px,#00ff78 5.5px,#e3ff00 6.5px,#e3ff00 8.5px,#00ff0c 9.5px,#00ff65 10.5px,#00ff79 11.5px,#e3ff00 12.5px,#00ff7b 13.5px,#00ff7b 17.5px,#e3ff00 18.5px,#e3ff00 20.5px,#00ff7b 21.5px,#00ff7b 23.5px,#e3ff00 24.5px,#00ff7b 25.5px,#e3ff00 26.5px,#00ff7b 27.5px,#00ff7b 29.5px,#e3ff00 30.5px,#e3ff00 32.5px,#00ff7b 33.5px,#00ff7b 35.5px,#e3ff00 36.5px,#e3ff00 38.5px,#00ff6a 39.5px,#00ff7b 41.5px,#e3ff00 42.5px,#e3ff00 44.5px,#00ff7b 45.5px,#00ff7b 47.5px,#e3ff00 48.5px,#00ff7c 49.5px,#e3ff00 50.5px,#00ff5f 51.5px,#00ff80 53.5px,#e3ff00 54.5px,#00ff83 55.5px,#e3ff00 56.5px,#00ff86 57.5px,#00ff8a 59.5px,#e3ff00 60.5px,#e3ff00 62.5px,#00ff92 63.5px,#0f8 65.5px,#e3ff00 66.5px,#e3ff00 68.5px,#00ff7c 69.5px,#00ff73 71.5px,#e3ff00 72.5px,#e3ff00 74.5px,#00ff5e 75.5px,#00ff53 77.5px,#e3ff00 78.5px,#e3ff00 80.5px,#00ff3f 81.5px,#00ff38 83.5px,#e3ff00 84.5px,#00ff34 85.5px,#e3ff00 86.5px,#0f3 87.5px,#0f3 89.5px,#e3ff00 90.5px,#0f3 91.5px,#0f3 95.5px,#e3ff00 96.5px,#0f3 97.5px,#0f3 140.5px,#ff6200 141.5px,#ff6200 143.5px,#0f3 144.5px,#00ff32 150.5px,#ff8c00 151.5px,#ff8c00 153.5px,#00ff27 154.5px,#00ff12 160.5px,#ff9a00 161.5px,#ff9a00 163.5px,#13ff00 164.5px,#00ff0d 166.5px,#00ff0f 172px)"></i><i style="left:232px;width:1px;background:linear-gradient(#e3ff00 0px,#e3ff00 2.5px,#00ff7b 3.5px,#00ff78 5.5px,#e3ff00 6.5px,#e3ff00 8.5px,#00ff0c 9.5px,#00ff65 10.5px,#00ff79 11.5px,#e3ff00 12.5px,#00ff7b 13.5px,#00ff7b 17.5px,#e3ff00 18.5px,#e3ff00 20.5px,#00ff7b 21.5px,#00ff7b 23.5px,#e3ff00 24.5px,#00ff7b 25.5px,#e3ff00 26.5px,#00ff7b 27.5px,#00ff7b 29.5px,#e3ff00 30.5px,#e3ff00 32.5px,#00ff7b 33.5px,#00ff7b 35.5px,#e3ff00 36.5px,#e3ff00 38.5px,#00ff6a 39.5px,#00ff7b 41.5px,#e3ff00 42.5px,#e3ff00 44.5px,#00ff7b 45.5px,#00ff7b 47.5px,#e3ff00 48.5px,#00ff7c 49.5px,#e3ff00 50.5px,#00ff5f 51.5px,#00ff80 53.5px,#e3ff00 54.5px,#00ff83 55.5px,#e3ff00 56.5px,#00ff87 57.5px,#00ff8a 59.5px,#e3ff00 60.5px,#e3ff00 62.5px,#00ff92 63.5px,#0f8 65.5px,#e3ff00 66.5px,#e3ff00 68.5px,#00ff7c 69.5px,#00ff73 71.5px,#e3ff00 72.5px,#e3ff00 74.5px,#00ff5e 75.5px,#00ff53 77.5px,#e3ff00 78.5px,#e3ff00 80.5px,#00ff3f 81.5px,#00ff38 83.5px,#e3ff00 84.5px,#00ff34 85.5px,#e3ff00 86.5px,#0f3 87.5px,#0f3 89.5px,#e3ff00 90.5px,#0f3 91.5px,#0f3 95.5px,#e3ff00 96.5px,#0f3 97.5px,#0f3 140.5px,#ff6200 141.5px,#ff6200 143.5px,#0f3 144.5px,#00ff32 150.5px,#ff8c00 151.5px,#ff8c00 153.5px,#00ff27 154.5px,#00ff12 160.5px,#ff9a00 161.5px,#ff9a00 163.5px,#13ff00 164.5px,#00ff0d 166.5px,#00ff0f 172px)"></i><i style="left:233px;width:1px;background:linear-gradient(#00ff7b 0px,#00ff78 5.5px,#00ff5a 6.5px,#18ff00 7.5px,#90ff00 8.5px,#00ff0c 9.5px,#00ff65 10.5px,#00ff7b 12.5px,#00ff7a 36.5px,#00ff4c 38.5px,#00ff7a 40.5px,#00ff72 50.5px,#00ff60 51.5px,#00ff82 54.5px,#00ff96 64.5px,#0f3 86.5px,#0f3 139.5px,#56ff00 140.5px,#ff6200 141.5px,#ff7100 143.5px,#0f3 144.5px,#00ff32 150.5px,#ff8c00 151.5px,#ff8c00 153.5px,#00ff27 154.5px,#00ff12 160.5px,#ff9a00 161.5px,#ff9a00 163.5px,#13ff00 164.5px,#00ff0d 166.5px,#00ff0f 172px)"></i><i style="left:234px;width:1px;background:linear-gradient(#f4ff00 0px,#00ff7b 1.5px,#f4ff00 2.5px,#00ff7b 3.5px,#00ff78 5.5px,#fdff00 6.5px,#ffec00 8.5px,#fff700 9.5px,#00ff65 10.5px,#00ff7b 12.5px,#f4ff00 13.5px,#f4ff00 16.5px,#00ff7b 17.5px,#00ff7b 18.5px,#f4ff00 19.5px,#f4ff00 21.5px,#00ff7b 22.5px,#00ff7b 25.5px,#f4ff00 26.5px,#f4ff00 28.5px,#00ff7b 29.5px,#00ff7b 31.5px,#f4ff00 32.5px,#f4ff00 35.5px,#00ff7a 36.5px,#00ff4d 38.5px,#f9ff00 39.5px,#f4ff00 40.5px,#00ff7b 41.5px,#f4ff00 42.5px,#00ff7b 43.5px,#00ff7b 44.5px,#f4ff00 45.5px,#f4ff00 48.5px,#00ff7d 49.5px,#00ff60 51.5px,#f6ff00 52.5px,#f2ff00 53.5px,#00ff83 54.5px,#f1ff00 55.5px,#00ff87 56.5px,#00ff89 57.5px,#efff00 58.5px,#ef0 61.5px,#00ff93 62.5px,#00ff98 64.5px,#efff00 65.5px,#f1ff00 67.5px,#00ff83 68.5px,#00ff76 71.5px,#f7ff00 72.5px,#faff00 74.5px,#00ff61 75.5px,#0f5 77.5px,#fffe00 78.5px,#fffd00 81.5px,#00ff3d 82.5px,#00ff39 83.5px,#fffc00 84.5px,#fffb00 87.5px,#00ff34 88.5px,#00ff34 90.5px,#fffb00 91.5px,#fffb00 94.5px,#00ff34 95.5px,#00ff34 96.5px,#fffb00 97.5px,#fffb00 99.5px,#00ff34 100.5px,#00ff34 103.5px,#fffb00 104.5px,#fffb00 107.5px,#00ff34 108.5px,#00ff34 110.5px,#fffb00 111.5px,#fffb00 113.5px,#00ff34 114.5px,#00ff34 116.5px,#fffb00 117.5px,#fffb00 120.5px,#00ff34 121.5px,#00ff34 122.5px,#fffb00 123.5px,#00ff34 124.5px,#00ff34 125.5px,#fffb00 126.5px,#00ff34 127.5px,#00ff34 129.5px,#fffb00 130.5px,#fffb00 133.5px,#00ff34 134.5px,#00ff34 135.5px,#fffb00 136.5px,#00ff34 137.5px,#00ff34 139.5px,#ff8200 140.5px,#ff6200 141.5px,#ff6200 142.5px,#9aff00 143.5px,#00ff34 144.5px,#00ff34 149.5px,#c5ff00 150.5px,#ff8c00 151.5px,#ff8c00 152.5px,#ffe000 153.5px,#00ff27 154.5px,#00ff12 160.5px,#ff9a00 161.5px,#ffa500 163.5px,#12ff00 164.5px,#00ff0e 166.5px,#00ff10 172px)"></i><i style="left:235px;width:1px;background:linear-gradient(#ffe000 0px,#fffc00 1.5px,#ffe000 2.5px,#fffc00 3.5px,#fffc00 5.5px,#ffe000 6.5px,#ffe000 9.5px,#fffc00 10.5px,#fffc00 12.5px,#ffe000 13.5px,#ffe000 16.5px,#fffc00 17.5px,#fffc00 18.5px,#ffe000 19.5px,#ffe000 21.5px,#fffc00 22.5px,#fffc00 25.5px,#ffe000 26.5px,#ffe000 28.5px,#fffc00 29.5px,#fffc00 31.5px,#ffe000 32.5px,#ffe000 35.5px,#fffc00 36.5px,#fffc00 38.5px,#ffe000 39.5px,#ffe000 40.5px,#fffc00 41.5px,#ffe000 42.5px,#fffc00 43.5px,#fffc00 44.5px,#ffe000 45.5px,#ffe000 48.5px,#fffc00 49.5px,#fffc00 51.5px,#ffe000 52.5px,#ffe000 53.5px,#fffc00 54.5px,#ffe000 55.5px,#fffc00 56.5px,#fffc00 57.5px,#ffe000 58.5px,#ffe000 61.5px,#fffc00 62.5px,#fffc00 64.5px,#ffe000 65.5px,#ffe000 67.5px,#fffc00 68.5px,#fffc00 71.5px,#ffe000 72.5px,#ffe000 74.5px,#fffc00 75.5px,#fffc00 77.5px,#ffe000 78.5px,#ffe000 81.5px,#fffc00 82.5px,#fffc00 83.5px,#ffe000 84.5px,#ffe000 87.5px,#fffc00 88.5px,#fffc00 90.5px,#ffe000 91.5px,#ffe000 94.5px,#fffc00 95.5px,#fffc00 96.5px,#ffe000 97.5px,#ffe000 99.5px,#fffc00 100.5px,#fffc00 103.5px,#ffe000 104.5px,#ffe000 107.5px,#fffc00 108.5px,#fffc00 110.5px,#ffe000 111.5px,#ffe000 113.5px,#fffc00 114.5px,#fffc00 116.5px,#ffe000 117.5px,#ffe000 120.5px,#fffc00 121.5px,#fffc00 122.5px,#ffe000 123.5px,#fffc00 124.5px,#fffc00 125.5px,#ffe000 126.5px,#fffc00 127.5px,#fffc00 129.5px,#ffe000 130.5px,#ffe000 133.5px,#fffc00 134.5px,#fffc00 135.5px,#ffe000 136.5px,#fffc00 137.5px,#fffc00 139.5px,#ff6200 140.5px,#ff6200 142.5px,#fffc00 143.5px,#fffc00 149.5px,#ff8c00 150.5px,#ff8c00 152.5px,#fffc00 153.5px,#fffc00 159.5px,#ffdc00 160.5px,#ff9a00 161.5px,#ff9a00 162.5px,#fffc00 163.5px,#fffc00 172px)"></i><i style="left:236px;width:1px;background:linear-gradient(#ffe000 0px,#fffc00 1.5px,#ffe000 2.5px,#fffc00 3.5px,#fffc00 5.5px,#ffe000 6.5px,#ffe000 9.5px,#fffc00 10.5px,#fffc00 12.5px,#ffe000 13.5px,#ffe000 16.5px,#fffc00 17.5px,#fffc00 18.5px,#ffe000 19.5px,#ffe000 21.5px,#fffc00 22.5px,#fffc00 25.5px,#ffe000 26.5px,#ffe000 28.5px,#fffc00 29.5px,#fffc00 31.5px,#ffe000 32.5px,#ffe000 35.5px,#fffc00 36.5px,#fffc00 38.5px,#ffe000 39.5px,#ffe000 40.5px,#fffc00 41.5px,#ffe000 42.5px,#fffc00 43.5px,#fffc00 44.5px,#ffe000 45.5px,#ffe000 48.5px,#fffc00 49.5px,#fffc00 51.5px,#ffe000 52.5px,#ffe000 53.5px,#fffc00 54.5px,#ffe000 55.5px,#fffc00 56.5px,#fffc00 57.5px,#ffe000 58.5px,#ffe000 61.5px,#fffc00 62.5px,#fffc00 64.5px,#ffe000 65.5px,#ffe000 67.5px,#fffc00 68.5px,#fffc00 71.5px,#ffe000 72.5px,#ffe000 74.5px,#fffc00 75.5px,#fffc00 77.5px,#ffe000 78.5px,#ffe000 81.5px,#fffc00 82.5px,#fffc00 83.5px,#ffe000 84.5px,#ffe000 87.5px,#fffc00 88.5px,#fffc00 90.5px,#ffe000 91.5px,#ffe000 94.5px,#fffc00 95.5px,#fffc00 96.5px,#ffe000 97.5px,#ffe000 99.5px,#fffc00 100.5px,#fffc00 103.5px,#ffe000 104.5px,#ffe000 107.5px,#fffc00 108.5px,#fffc00 110.5px,#ffe000 111.5px,#ffe000 113.5px,#fffc00 114.5px,#fffc00 116.5px,#ffe000 117.5px,#ffe000 120.5px,#fffc00 121.5px,#fffc00 122.5px,#ffe000 123.5px,#fffc00 124.5px,#fffc00 125.5px,#ffe000 126.5px,#fffc00 127.5px,#fffc00 129.5px,#ffe000 130.5px,#ffe000 133.5px,#fffc00 134.5px,#fffc00 135.5px,#ffe000 136.5px,#fffc00 137.5px,#fffc00 139.5px,#ff6200 140.5px,#ff6200 142.5px,#fffc00 143.5px,#fffc00 149.5px,#ff8c00 150.5px,#ff8c00 152.5px,#fffc00 153.5px,#fffc00 159.5px,#ff9a00 160.5px,#ff9a00 162.5px,#fffc00 163.5px,#fffc00 172px)"></i><i style="left:237px;width:1px;background:linear-gradient(#f4ff00 0px,#00ff7b 1.5px,#f4ff00 2.5px,#00ff7b 3.5px,#00ff78 5.5px,#fdff00 6.5px,#ffec00 8.5px,#fff700 9.5px,#00ff65 10.5px,#00ff7b 12.5px,#f4ff00 13.5px,#f4ff00 16.5px,#00ff7b 17.5px,#00ff7b 18.5px,#f4ff00 19.5px,#f4ff00 21.5px,#00ff7b 22.5px,#00ff7b 25.5px,#f4ff00 26.5px,#f4ff00 28.5px,#00ff7b 29.5px,#00ff7b 31.5px,#f4ff00 32.5px,#f4ff00 35.5px,#00ff7a 36.5px,#00ff4c 38.5px,#f9ff00 39.5px,#f4ff00 40.5px,#00ff7b 41.5px,#f4ff00 42.5px,#00ff7b 43.5px,#00ff7b 44.5px,#f4ff00 45.5px,#f4ff00 48.5px,#00ff7c 49.5px,#00ff60 51.5px,#f6ff00 52.5px,#f2ff00 53.5px,#00ff83 54.5px,#f1ff00 55.5px,#00ff86 56.5px,#0f8 57.5px,#f0ff00 58.5px,#ef0 61.5px,#00ff92 62.5px,#00ff96 64.5px,#efff00 65.5px,#f1ff00 67.5px,#00ff82 68.5px,#00ff75 71.5px,#f7ff00 72.5px,#faff00 74.5px,#00ff60 75.5px,#0f5 77.5px,#fffe00 78.5px,#fffd00 81.5px,#00ff3c 82.5px,#00ff39 83.5px,#fffc00 84.5px,#fffb00 87.5px,#0f3 88.5px,#0f3 90.5px,#fffb00 91.5px,#fffb00 94.5px,#0f3 95.5px,#0f3 96.5px,#fffb00 97.5px,#fffb00 99.5px,#0f3 100.5px,#0f3 103.5px,#fffb00 104.5px,#fffb00 107.5px,#0f3 108.5px,#0f3 110.5px,#fffb00 111.5px,#fffb00 113.5px,#0f3 114.5px,#0f3 116.5px,#fffb00 117.5px,#fffb00 120.5px,#0f3 121.5px,#0f3 122.5px,#fffb00 123.5px,#0f3 124.5px,#0f3 125.5px,#fffb00 126.5px,#0f3 127.5px,#0f3 129.5px,#fffb00 130.5px,#fffb00 133.5px,#0f3 134.5px,#0f3 135.5px,#fffb00 136.5px,#0f3 137.5px,#0f3 138.5px,#ff6200 139.5px,#ff6200 141.5px,#27ff00 142.5px,#0f3 143.5px,#0f3 148.5px,#7cff00 149.5px,#ff8c00 150.5px,#ff8c00 151.5px,#ffab00 152.5px,#00ff2b 153.5px,#00ff15 159.5px,#ff9a00 160.5px,#ff9a00 162.5px,#00ff02 163.5px,#12ff00 164.5px,#00ff0e 166.5px,#00ff0f 172px)"></i><i style="left:238px;width:1px;background:linear-gradient(#00ff7b 0px,#00ff78 5.5px,#00ff5a 6.5px,#18ff00 7.5px,#90ff00 8.5px,#00ff0c 9.5px,#00ff65 10.5px,#00ff7b 12.5px,#00ff7a 36.5px,#00ff4c 38.5px,#00ff7a 40.5px,#00ff72 50.5px,#00ff60 51.5px,#00ff83 54.5px,#00ff97 64.5px,#0f3 86.5px,#0f3 96.5px,#aeff00 97.5px,#aeff00 99.5px,#0f3 100.5px,#0f3 103.5px,#aeff00 104.5px,#0f3 105.5px,#0f3 108.5px,#aeff00 109.5px,#0f3 110.5px,#aeff00 111.5px,#0f3 112.5px,#0f3 114.5px,#aeff00 115.5px,#aeff00 117.5px,#0f3 118.5px,#0f3 120.5px,#aeff00 121.5px,#aeff00 123.5px,#0f3 124.5px,#0f3 126.5px,#aeff00 127.5px,#0f3 128.5px,#aeff00 129.5px,#0f3 130.5px,#0f3 132.5px,#aeff00 133.5px,#aeff00 135.5px,#0f3 136.5px,#00ff32 138.5px,#ff6200 139.5px,#ff6200 141.5px,#0f3 142.5px,#0f3 148.5px,#ff8c00 149.5px,#ff8c00 151.5px,#00ff2e 152.5px,#00ff18 158.5px,#dcff00 159.5px,#ff9a00 160.5px,#ff9a00 161.5px,#ffeb00 162.5px,#00ff02 163.5px,#12ff00 164.5px,#00ff0e 166.5px,#00ff0f 172px)"></i><i style="left:239px;width:1px;background:linear-gradient(#00ff7b 0px,#00ff78 5.5px,#00ff5a 6.5px,#18ff00 7.5px,#90ff00 8.5px,#00ff0c 9.5px,#00ff65 10.5px,#00ff7b 12.5px,#00ff7a 36.5px,#00ff4c 38.5px,#00ff7a 40.5px,#00ff72 50.5px,#00ff60 51.5px,#00ff83 54.5px,#00ff96 64.5px,#0f3 86.5px,#0f3 96.5px,#e3ff00 97.5px,#e3ff00 99.5px,#0f3 100.5px,#0f3 103.5px,#e3ff00 104.5px,#0f3 105.5px,#0f3 108.5px,#e3ff00 109.5px,#0f3 110.5px,#e3ff00 111.5px,#0f3 112.5px,#0f3 114.5px,#e3ff00 115.5px,#e3ff00 117.5px,#0f3 118.5px,#0f3 120.5px,#e3ff00 121.5px,#e3ff00 123.5px,#0f3 124.5px,#0f3 126.5px,#e3ff00 127.5px,#0f3 128.5px,#e3ff00 129.5px,#0f3 130.5px,#0f3 132.5px,#e3ff00 133.5px,#e3ff00 135.5px,#0f3 136.5px,#0f3 137.5px,#ff6200 138.5px,#ff6200 140.5px,#e3ff00 141.5px,#0f3 142.5px,#0f3 148.5px,#ff8c00 149.5px,#ff8c00 151.5px,#00ff2e 152.5px,#00ff18 158.5px,#ff9a00 159.5px,#ff9a00 161.5px,#00ff0e 162.5px,#13ff00 164.5px,#00ff0e 166.5px,#00ff0f 172px)"></i><i style="left:240px;width:1px;background:linear-gradient(#00ff7b 0px,#00ff78 5.5px,#00ff5a 6.5px,#18ff00 7.5px,#90ff00 8.5px,#00ff0c 9.5px,#00ff65 10.5px,#00ff7b 12.5px,#00ff7a 36.5px,#00ff4c 38.5px,#00ff7a 40.5px,#00ff72 50.5px,#00ff60 51.5px,#00ff83 54.5px,#00ff97 64.5px,#0f3 86.5px,#0f3 96.5px,#e3ff00 97.5px,#e3ff00 99.5px,#0f3 100.5px,#0f3 103.5px,#e3ff00 104.5px,#0f3 105.5px,#0f3 108.5px,#e3ff00 109.5px,#0f3 110.5px,#e3ff00 111.5px,#0f3 112.5px,#0f3 114.5px,#e3ff00 115.5px,#e3ff00 117.5px,#0f3 118.5px,#0f3 120.5px,#e3ff00 121.5px,#e3ff00 123.5px,#0f3 124.5px,#0f3 126.5px,#e3ff00 127.5px,#0f3 128.5px,#e3ff00 129.5px,#0f3 130.5px,#0f3 132.5px,#e3ff00 133.5px,#e3ff00 135.5px,#0f3 136.5px,#2eff00 137.5px,#ff6200 138.5px,#ff6200 140.5px,#e3ff00 141.5px,#0f3 142.5px,#0f3 147.5px,#ff8c00 148.5px,#ff8c00 150.5px,#6fff00 151.5px,#00ff2e 152.5px,#00ff18 158.5px,#ff9a00 159.5px,#ff9a00 161.5px,#00ff0e 162.5px,#12ff00 164.5px,#00ff0e 166.5px,#00ff0f 172px)"></i><i style="left:241px;width:1px;background:linear-gradient(#00ff7b 0px,#00ff78 5.5px,#00ff5a 6.5px,#18ff00 7.5px,#90ff00 8.5px,#00ff0c 9.5px,#00ff65 10.5px,#00ff7b 12.5px,#00ff7a 36.5px,#00ff4d 38.5px,#00ff7a 40.5px,#00ff73 50.5px,#00ff60 51.5px,#00ff84 54.5px,#00ff98 64.5px,#00ff34 86.5px,#00ff34 96.5px,#aeff00 97.5px,#aeff00 99.5px,#00ff34 100.5px,#00ff34 103.5px,#aeff00 104.5px,#00ff34 105.5px,#00ff34 108.5px,#aeff00 109.5px,#00ff34 110.5px,#aeff00 111.5px,#00ff34 112.5px,#00ff34 114.5px,#aeff00 115.5px,#aeff00 117.5px,#00ff34 118.5px,#00ff34 120.5px,#aeff00 121.5px,#aeff00 123.5px,#00ff34 124.5px,#00ff34 126.5px,#aeff00 127.5px,#00ff34 128.5px,#aeff00 129.5px,#00ff34 130.5px,#00ff34 132.5px,#aeff00 133.5px,#aeff00 135.5px,#00ff34 136.5px,#ff6200 137.5px,#ff6200 139.5px,#aeff00 140.5px,#aeff00 141.5px,#00ff34 142.5px,#00ff34 147.5px,#ff8c00 148.5px,#ff8c00 150.5px,#00ff31 151.5px,#00ff1c 157.5px,#ff9a00 158.5px,#ff9a00 160.5px,#3bff00 161.5px,#00ff0e 162.5px,#12ff00 164.5px,#00ff0e 166.5px,#00ff10 172px)"></i><i style="left:242px;width:1px;background:linear-gradient(#00ff7b 0px,#00ff78 5.5px,#00ff5a 6.5px,#18ff00 7.5px,#90ff00 8.5px,#00ff0c 9.5px,#00ff65 10.5px,#00ff7b 12.5px,#00ff7a 36.5px,#00ff4d 38.5px,#00ff7a 40.5px,#00ff73 50.5px,#00ff61 51.5px,#00ff84 54.5px,#0f9 64.5px,#00ff34 86.5px,#00ff34 135.5px,#ffa300 136.5px,#ff6200 137.5px,#ff6200 138.5px,#ff8000 139.5px,#00ff34 140.5px,#00ff34 146.5px,#ff8c00 147.5px,#ff8c00 149.5px,#62ff00 150.5px,#00ff31 151.5px,#00ff1c 157.5px,#ff9a00 158.5px,#ff9a00 160.5px,#0f1 161.5px,#1f0 164.5px,#00ff10 167.5px,#00ff10 172px)"></i><i style="left:243px;width:1px;background:linear-gradient(#00ff7b 0px,#00ff78 5.5px,#00ff5a 6.5px,#18ff00 7.5px,#90ff00 8.5px,#00ff0c 9.5px,#00ff65 10.5px,#00ff7b 12.5px,#00ff7a 36.5px,#00ff4d 38.5px,#bdff00 39.5px,#b8ff00 40.5px,#00ff7b 41.5px,#00ff7b 43.5px,#b8ff00 44.5px,#b7ff00 47.5px,#00ff7c 48.5px,#00ff73 50.5px,#bfff00 51.5px,#b6ff00 53.5px,#00ff84 54.5px,#00ff89 57.5px,#b3ff00 58.5px,#b1ff00 61.5px,#00ff94 62.5px,#00ff98 64.5px,#b3ff00 65.5px,#b5ff00 68.5px,#00ff80 69.5px,#0f7 71.5px,#baff00 72.5px,#bfff00 75.5px,#00ff5b 76.5px,#00ff50 78.5px,#c6ff00 79.5px,#caff00 82.5px,#00ff39 83.5px,#00ff35 85.5px,#cdff00 86.5px,#00ff34 87.5px,#cdff00 88.5px,#cdff00 89.5px,#00ff34 90.5px,#00ff34 92.5px,#cf0 93.5px,#cf0 96.5px,#00ff34 97.5px,#00ff34 99.5px,#cf0 100.5px,#cf0 101.5px,#00ff34 102.5px,#cf0 103.5px,#00ff34 104.5px,#00ff34 106.5px,#cf0 107.5px,#cf0 110.5px,#00ff34 111.5px,#00ff34 113.5px,#cf0 114.5px,#00ff34 115.5px,#cf0 116.5px,#cf0 117.5px,#00ff34 118.5px,#00ff34 120.5px,#cf0 121.5px,#cf0 124.5px,#00ff34 125.5px,#00ff34 134.5px,#38ff00 135.5px,#ff6200 136.5px,#ff6200 138.5px,#00ff34 139.5px,#00ff34 145.5px,#32ff00 146.5px,#ff8c00 147.5px,#ff8c00 149.5px,#0f3 150.5px,#00ff20 156.5px,#ffa000 157.5px,#ff9a00 159.5px,#9aff00 160.5px,#0f1 161.5px,#12ff00 164.5px,#00ff0e 166.5px,#00ff10 172px)"></i><i style="left:244px;width:1px;background:linear-gradient(#00ff7b 0px,#00ff78 5.5px,#00ff5a 6.5px,#18ff00 7.5px,#90ff00 8.5px,#00ff0c 9.5px,#00ff65 10.5px,#00ff7b 12.5px,#00ff7a 36.5px,#00ff4d 38.5px,#fffc00 39.5px,#fffc00 40.5px,#00ff7b 41.5px,#00ff7b 43.5px,#fffc00 44.5px,#fffc00 47.5px,#00ff7c 48.5px,#00ff73 50.5px,#fffc00 51.5px,#fffc00 53.5px,#00ff83 54.5px,#0f8 57.5px,#fffc00 58.5px,#fffc00 61.5px,#00ff93 62.5px,#00ff97 64.5px,#fffc00 65.5px,#fffc00 68.5px,#00ff7f 69.5px,#00ff76 71.5px,#fffc00 72.5px,#fffc00 75.5px,#00ff5b 76.5px,#00ff50 78.5px,#fffc00 79.5px,#fffc00 82.5px,#00ff39 83.5px,#00ff34 85.5px,#fffc00 86.5px,#0f3 87.5px,#fffc00 88.5px,#fffc00 89.5px,#00ff34 90.5px,#00ff34 92.5px,#fffc00 93.5px,#fffc00 96.5px,#00ff34 97.5px,#00ff34 99.5px,#fffc00 100.5px,#fffc00 101.5px,#00ff34 102.5px,#fffc00 103.5px,#00ff34 104.5px,#00ff34 106.5px,#fffc00 107.5px,#fffc00 110.5px,#00ff34 111.5px,#00ff34 113.5px,#fffc00 114.5px,#00ff34 115.5px,#fffc00 116.5px,#fffc00 117.5px,#00ff34 118.5px,#00ff34 120.5px,#fffc00 121.5px,#fffc00 124.5px,#00ff34 125.5px,#00ff34 134.5px,#ff6200 135.5px,#ff6200 137.5px,#00ff1b 138.5px,#00ff34 139.5px,#00ff34 145.5px,#ff8c00 146.5px,#ff8c00 148.5px,#0f3 149.5px,#00ff20 156.5px,#ff9a00 157.5px,#ff9a00 159.5px,#00ff12 160.5px,#00ff03 163.5px,#12ff00 164.5px,#00ff0e 166.5px,#00ff0f 172px)"></i><i style="left:245px;width:1px;background:linear-gradient(#00ff7b 0px,#00ff78 5.5px,#00ff5a 6.5px,#18ff00 7.5px,#90ff00 8.5px,#00ff0c 9.5px,#00ff65 10.5px,#00ff7b 12.5px,#00ff7a 36.5px,#00ff4c 38.5px,#fffc00 39.5px,#fffc00 40.5px,#00ff7b 41.5px,#00ff7b 43.5px,#fffc00 44.5px,#fffc00 47.5px,#00ff7c 48.5px,#00ff72 50.5px,#fffc00 51.5px,#fffc00 53.5px,#00ff83 54.5px,#0f8 57.5px,#fffc00 58.5px,#fffc00 61.5px,#00ff92 62.5px,#00ff96 64.5px,#fffc00 65.5px,#fffc00 68.5px,#00ff7e 69.5px,#00ff75 71.5px,#fffc00 72.5px,#fffc00 75.5px,#00ff5a 76.5px,#00ff4f 78.5px,#fffc00 79.5px,#fffc00 82.5px,#00ff39 83.5px,#00ff34 85.5px,#fffc00 86.5px,#0f3 87.5px,#fffc00 88.5px,#fffc00 89.5px,#0f3 90.5px,#0f3 92.5px,#fffc00 93.5px,#fffc00 96.5px,#0f3 97.5px,#0f3 99.5px,#fffc00 100.5px,#fffc00 101.5px,#0f3 102.5px,#fffc00 103.5px,#0f3 104.5px,#0f3 106.5px,#fffc00 107.5px,#fffc00 110.5px,#0f3 111.5px,#0f3 113.5px,#fffc00 114.5px,#0f3 115.5px,#fffc00 116.5px,#fffc00 117.5px,#0f3 118.5px,#0f3 120.5px,#fffc00 121.5px,#fffc00 124.5px,#0f3 125.5px,#0f3 133.5px,#ff6200 134.5px,#ff6200 136.5px,#fff100 137.5px,#0f3 138.5px,#0f3 144.5px,#ff9a00 145.5px,#ff8c00 147.5px,#ffd100 148.5px,#0f3 149.5px,#00ff23 155.5px,#ff9a00 156.5px,#ff9a00 158.5px,#31ff00 159.5px,#00ff12 160.5px,#00ff02 163.5px,#12ff00 164.5px,#00ff0e 166.5px,#00ff0f 172px)"></i><i style="left:246px;width:1px;background:linear-gradient(#00ff7b 0px,#00ff78 5.5px,#00ff5a 6.5px,#18ff00 7.5px,#90ff00 8.5px,#00ff0c 9.5px,#00ff65 10.5px,#00ff7b 12.5px,#00ff7a 36.5px,#00ff4c 38.5px,#bdff00 39.5px,#b8ff00 40.5px,#00ff7b 41.5px,#00ff7b 43.5px,#b8ff00 44.5px,#b8ff00 47.5px,#00ff7c 48.5px,#00ff72 50.5px,#c0ff00 51.5px,#b6ff00 53.5px,#00ff82 54.5px,#00ff87 57.5px,#b4ff00 58.5px,#b2ff00 61.5px,#00ff90 62.5px,#00ff95 64.5px,#b4ff00 65.5px,#b6ff00 68.5px,#00ff7c 69.5px,#00ff73 71.5px,#bf0 72.5px,#c0ff00 75.5px,#00ff59 76.5px,#00ff4e 78.5px,#c6ff00 79.5px,#caff00 82.5px,#00ff38 83.5px,#00ff34 85.5px,#cdff00 86.5px,#0f3 87.5px,#cdff00 88.5px,#cdff00 89.5px,#0f3 90.5px,#0f3 92.5px,#cdff00 93.5px,#cdff00 96.5px,#0f3 97.5px,#0f3 99.5px,#cdff00 100.5px,#cdff00 101.5px,#0f3 102.5px,#cdff00 103.5px,#0f3 104.5px,#0f3 106.5px,#cdff00 107.5px,#cdff00 110.5px,#0f3 111.5px,#0f3 113.5px,#cdff00 114.5px,#0f3 115.5px,#cdff00 116.5px,#cdff00 117.5px,#0f3 118.5px,#0f3 120.5px,#cdff00 121.5px,#cdff00 124.5px,#0f3 125.5px,#0f3 132.5px,#ff6200 133.5px,#ff6200 135.5px,#ff9300 136.5px,#0f3 137.5px,#0f3 143.5px,#7aff00 144.5px,#ff8c00 145.5px,#ff8c00 147.5px,#0f3 148.5px,#00ff27 154.5px,#6eff00 155.5px,#ff9a00 156.5px,#ff9a00 158.5px,#00ff14 159.5px,#00ff02 163.5px,#13ff00 164.5px,#00ff0d 166.5px,#00ff0f 172px)"></i><i style="left:247px;width:1px;background:linear-gradient(#00ff7b 0px,#00ff78 5.5px,#00ff5a 6.5px,#18ff00 7.5px,#90ff00 8.5px,#00ff0c 9.5px,#00ff65 10.5px,#00ff7b 12.5px,#00ff7a 36.5px,#00ff4c 38.5px,#00ff7a 40.5px,#00ff72 50.5px,#00ff5f 51.5px,#00ff82 54.5px,#00ff94 64.5px,#0f3 86.5px,#0f3 131.5px,#ff6200 132.5px,#ff6200 135.5px,#0f3 136.5px,#0f3 143.5px,#ff8c00 144.5px,#ff8c00 146.5px,#0f3 147.5px,#00ff27 154.5px,#ff9a00 155.5px,#ff9a00 157.5px,#00ff18 158.5px,#00ff02 163.5px,#13ff00 164.5px,#00ff0d 166.5px,#00ff0f 172px)"></i><i style="left:248px;width:1px;background:linear-gradient(#00ff7b 0px,#00ff78 5.5px,#00ff5a 6.5px,#18ff00 7.5px,#90ff00 8.5px,#00ff0c 9.5px,#00ff65 10.5px,#00ff7b 12.5px,#00ff7a 36.5px,#00ff4c 38.5px,#00ff7a 40.5px,#00ff72 50.5px,#00ff5f 51.5px,#00ff82 54.5px,#00ff95 64.5px,#0f3 86.5px,#0f3 130.5px,#ff6200 131.5px,#ff6200 134.5px,#0f3 135.5px,#0f3 142.5px,#ff8c00 143.5px,#ff8c00 145.5px,#4fff00 146.5px,#0f3 147.5px,#00ff2a 153.5px,#ff9a00 154.5px,#ff9a00 156.5px,#e7ff00 157.5px,#00ff18 158.5px,#00ff02 163.5px,#13ff00 164.5px,#00ff0d 166.5px,#00ff0f 172px)"></i><i style="left:249px;width:1px;background:linear-gradient(#00ff7b 0px,#00ff78 5.5px,#00ff5a 6.5px,#18ff00 7.5px,#90ff00 8.5px,#00ff0c 9.5px,#00ff65 10.5px,#00ff7b 12.5px,#00ff7a 36.5px,#00ff4c 38.5px,#00ff7a 40.5px,#00ff72 50.5px,#00ff5f 51.5px,#00ff82 54.5px,#00ff96 64.5px,#0f3 86.5px,#0f3 129.5px,#ff6200 130.5px,#ff6200 133.5px,#0f3 134.5px,#0f3 141.5px,#ff8c00 142.5px,#ff8c00 144.5px,#ffe500 145.5px,#0f3 146.5px,#00ff2e 152.5px,#e2ff00 153.5px,#ff9a00 154.5px,#ff9a00 156.5px,#00ff1b 157.5px,#00ff02 163.5px,#13ff00 164.5px,#00ff0d 166.5px,#00ff0f 172px)"></i><i style="left:250px;width:1px;background:linear-gradient(#00ff7b 0px,#00ff78 5.5px,#00ff5a 6.5px,#18ff00 7.5px,#90ff00 8.5px,#00ff0c 9.5px,#00ff65 10.5px,#00ff7b 12.5px,#00ff7a 36.5px,#00ff4c 38.5px,#00ff7a 40.5px,#00ff72 50.5px,#00ff5f 51.5px,#00ff82 54.5px,#00ff95 64.5px,#0f3 86.5px,#0f3 128.5px,#ff6200 129.5px,#ff6200 131.5px,#ff8c00 132.5px,#0f3 133.5px,#0f3 140.5px,#ff8c00 141.5px,#ff8c00 143.5px,#ffa500 144.5px,#0f3 145.5px,#00ff2d 152.5px,#ff9a00 153.5px,#ff9a00 155.5px,#00ff1f 156.5px,#00ff02 163.5px,#13ff00 164.5px,#00ff0d 166.5px,#00ff0f 172px)"></i><i style="left:251px;width:1px;background:linear-gradient(#00ff7b 0px,#00ff78 5.5px,#00ff5a 6.5px,#18ff00 7.5px,#90ff00 8.5px,#00ff0c 9.5px,#00ff65 10.5px,#00ff7b 12.5px,#00ff7a 36.5px,#00ff4c 38.5px,#00ff7a 40.5px,#00ff72 50.5px,#00ff5f 51.5px,#00ff82 54.5px,#00ff94 64.5px,#0f3 86.5px,#0f3 126.5px,#c1ff00 127.5px,#ff6200 128.5px,#ff6200 130.5px,#ffe700 131.5px,#0f3 132.5px,#0f3 139.5px,#ff8c00 140.5px,#ff8c00 143.5px,#0f3 144.5px,#00ff30 151.5px,#ff9a00 152.5px,#ff9a00 154.5px,#00ff23 155.5px,#00ff02 163.5px,#13ff00 164.5px,#00ff0d 166.5px,#00ff0f 172px)"></i><i style="left:252px;width:1px;background:linear-gradient(#00ff7b 0px,#00ff78 5.5px,#00ff5a 6.5px,#18ff00 7.5px,#90ff00 8.5px,#00ff0c 9.5px,#00ff65 10.5px,#00ff7b 12.5px,#00ff7a 36.5px,#00ff4c 38.5px,#00ff7a 40.5px,#00ff72 50.5px,#00ff5f 51.5px,#00ff82 54.5px,#00ff95 64.5px,#0f3 86.5px,#0f3 125.5px,#ff6200 126.5px,#ff6200 129.5px,#00ff08 130.5px,#0f3 131.5px,#0f3 138.5px,#ff8c00 139.5px,#ff8c00 142.5px,#0f3 143.5px,#00ff32 150.5px,#ff9a00 151.5px,#ff9a00 153.5px,#b0ff00 154.5px,#00ff23 155.5px,#00ff02 163.5px,#13ff00 164.5px,#00ff0d 166.5px,#00ff0f 172px)"></i><i style="left:253px;width:1px;background:linear-gradient(#00ff7b 0px,#00ff78 5.5px,#00ff5a 6.5px,#18ff00 7.5px,#90ff00 8.5px,#00ff0c 9.5px,#00ff65 10.5px,#00ff7b 12.5px,#00ff7a 36.5px,#00ff4c 38.5px,#00ff7a 40.5px,#00ff72 50.5px,#00ff60 51.5px,#00ff82 54.5px,#00ff96 64.5px,#0f3 86.5px,#0f3 123.5px,#0cff00 124.5px,#ff6200 125.5px,#ff6200 128.5px,#0f3 129.5px,#0f3 137.5px,#ff8c00 138.5px,#ff9400 141.5px,#0f3 142.5px,#0f3 149.5px,#ff9a00 150.5px,#ff9a00 152.5px,#ffd700 153.5px,#00ff27 154.5px,#00ff02 163.5px,#13ff00 164.5px,#00ff0d 166.5px,#00ff0f 172px)"></i><i style="left:254px;width:1px;background:linear-gradient(#00ff7b 0px,#00ff78 5.5px,#00ff5a 6.5px,#18ff00 7.5px,#90ff00 8.5px,#00ff0c 9.5px,#00ff65 10.5px,#00ff7b 12.5px,#00ff7a 36.5px,#00ff4c 38.5px,#00ff7a 40.5px,#00ff72 50.5px,#00ff5f 51.5px,#00ff82 54.5px,#00ff95 64.5px,#0f3 86.5px,#0f3 122.5px,#ff6200 123.5px,#ff6200 126.5px,#fff300 127.5px,#0f3 128.5px,#0f3 136.5px,#ff8c00 137.5px,#ff8c00 139.5px,#ffca00 140.5px,#0f3 141.5px,#0f3 148.5px,#ff9a00 149.5px,#ffa900 152.5px,#00ff2a 153.5px,#00ff02 163.5px,#13ff00 164.5px,#00ff0d 166.5px,#00ff0f 172px)"></i><i style="left:255px;width:1px;background:linear-gradient(#00ff7b 0px,#00ff78 5.5px,#00ff5a 6.5px,#18ff00 7.5px,#90ff00 8.5px,#00ff0c 9.5px,#00ff65 10.5px,#00ff7b 12.5px,#00ff7a 36.5px,#00ff4c 38.5px,#00ff7a 40.5px,#00ff71 50.5px,#00ff5f 51.5px,#00ff81 54.5px,#00ff93 64.5px,#0f3 86.5px,#0f3 120.5px,#fc0 121.5px,#ff6200 122.5px,#ff6200 125.5px,#0f3 126.5px,#0f3 134.5px,#8fff00 135.5px,#ff8c00 136.5px,#ff8c00 138.5px,#b1ff00 139.5px,#0f3 140.5px,#0f3 147.5px,#ff9a00 148.5px,#ff9a00 151.5px,#00ff2d 152.5px,#00ff02 163.5px,#14ff00 164.5px,#00ff0d 166.5px,#00ff0f 172px)"></i><i style="left:256px;width:1px;background:linear-gradient(#00ff7b 0px,#00ff78 5.5px,#00ff5a 6.5px,#18ff00 7.5px,#90ff00 8.5px,#00ff0c 9.5px,#00ff65 10.5px,#00ff7b 12.5px,#00ff7a 36.5px,#00ff4c 38.5px,#00ff7a 40.5px,#00ff72 50.5px,#00ff5f 51.5px,#00ff82 54.5px,#00ff95 64.5px,#0f3 86.5px,#0f3 118.5px,#fcff00 119.5px,#ff6200 120.5px,#ff6200 123.5px,#3aff00 124.5px,#0f3 125.5px,#0f3 133.5px,#ff9000 134.5px,#ff8c00 137.5px,#0f3 138.5px,#0f3 146.5px,#ff9a00 147.5px,#ff9a00 150.5px,#00ff30 151.5px,#00ff02 163.5px,#13ff00 164.5px,#00ff0d 166.5px,#00ff0f 172px)"></i><i style="left:257px;width:1px;background:linear-gradient(#00ff7b 0px,#00ff78 5.5px,#00ff5a 6.5px,#18ff00 7.5px,#90ff00 8.5px,#00ff0c 9.5px,#00ff65 10.5px,#00ff7b 12.5px,#00ff7a 36.5px,#00ff4c 38.5px,#00ff7a 40.5px,#00ff72 50.5px,#00ff60 51.5px,#00ff83 54.5px,#00ff96 64.5px,#0f3 86.5px,#0f3 116.5px,#fff900 117.5px,#ff6400 118.5px,#ff6200 121.5px,#fff000 122.5px,#0f3 123.5px,#0f3 132.5px,#ff8c00 133.5px,#ff8c00 136.5px,#0f3 137.5px,#0f3 145.5px,#ff9a00 146.5px,#ff9a00 148.5px,#ffb600 149.5px,#00ff32 150.5px,#00ff02 163.5px,#13ff00 164.5px,#00ff0e 166.5px,#00ff0f 172px)"></i><i style="left:258px;width:1px;background:linear-gradient(#00ff7b 0px,#00ff78 5.5px,#00ff5a 6.5px,#18ff00 7.5px,#90ff00 8.5px,#00ff0c 9.5px,#00ff65 10.5px,#00ff7b 12.5px,#00ff7a 36.5px,#00ff4c 38.5px,#00ff7a 40.5px,#00ff72 50.5px,#00ff5f 51.5px,#00ff82 54.5px,#00ff96 64.5px,#0f3 86.5px,#0f3 114.5px,#ffe100 115.5px,#ff9500 116.5px,#ff6400 118.5px,#ff6200 119.5px,#ffdc00 120.5px,#0f3 121.5px,#0f3 130.5px,#ffb500 131.5px,#ff8c00 132.5px,#ff8c00 134.5px,#ff0 135.5px,#0f3 136.5px,#0f3 144.5px,#ff9a00 145.5px,#ff9a00 147.5px,#ffec00 148.5px,#0f3 149.5px,#00ff02 163.5px,#13ff00 164.5px,#00ff0d 166.5px,#00ff0f 172px)"></i><i style="left:259px;width:1px;background:linear-gradient(#00ff7b 0px,#00ff78 5.5px,#00ff5a 6.5px,#18ff00 7.5px,#90ff00 8.5px,#00ff0c 9.5px,#00ff65 10.5px,#00ff7b 12.5px,#00ff7a 36.5px,#00ff4c 38.5px,#00ff7a 40.5px,#00ff72 50.5px,#00ff5f 51.5px,#00ff82 54.5px,#00ff95 64.5px,#0f3 86.5px,#0f3 112.5px,#82ff00 113.5px,#fff400 114.5px,#ff7500 117.5px,#d5ff00 118.5px,#0f3 119.5px,#0f3 128.5px,#18ff00 129.5px,#ff8c00 130.5px,#ff8c00 133.5px,#0f3 134.5px,#0f3 142.5px,#96ff00 143.5px,#ff9a00 144.5px,#ff9a00 146.5px,#61ff00 147.5px,#0f3 148.5px,#00ff02 163.5px,#13ff00 164.5px,#00ff0d 166.5px,#00ff0f 172px)"></i><i style="left:260px;width:1px;background:linear-gradient(#00ff7b 0px,#00ff78 5.5px,#00ff5a 6.5px,#18ff00 7.5px,#90ff00 8.5px,#00ff0c 9.5px,#00ff65 10.5px,#00ff7b 12.5px,#00ff7a 36.5px,#00ff4c 38.5px,#00ff7a 40.5px,#00ff72 50.5px,#00ff60 51.5px,#00ff82 54.5px,#00ff96 64.5px,#0f3 86.5px,#0f3 111.5px,#00ff13 112.5px,#fff400 114.5px,#ffc000 115.5px,#0f3 116.5px,#0f3 127.5px,#ff8c00 128.5px,#ff8c00 131.5px,#cf0 132.5px,#0f3 133.5px,#0f3 141.5px,#ff9b00 142.5px,#ff9a00 145.5px,#0f3 146.5px,#00ff0e 162.5px,#13ff00 164.5px,#00ff0d 166.5px,#00ff0f 172px)"></i><i style="left:261px;width:1px;background:linear-gradient(#00ff7b 0px,#00ff78 5.5px,#00ff5a 6.5px,#18ff00 7.5px,#90ff00 8.5px,#00ff0c 9.5px,#00ff65 10.5px,#00ff7b 12.5px,#00ff7a 36.5px,#00ff4c 38.5px,#00ff7a 40.5px,#00ff72 50.5px,#00ff60 51.5px,#00ff82 54.5px,#00ff96 64.5px,#0f3 86.5px,#0f3 111.5px,#00ff13 112.5px,#0f3 113.5px,#0f3 125.5px,#ff8c00 126.5px,#ff8d00 130.5px,#0f3 131.5px,#0f3 140.5px,#ff9a00 141.5px,#ff9a00 144.5px,#0f3 145.5px,#00ff0e 162.5px,#13ff00 164.5px,#00ff0d 166.5px,#00ff0f 172px)"></i><i style="left:262px;width:1px;background:linear-gradient(#00ff7b 0px,#00ff78 5.5px,#00ff5a 6.5px,#18ff00 7.5px,#90ff00 8.5px,#00ff0c 9.5px,#00ff65 10.5px,#00ff7b 12.5px,#00ff7a 36.5px,#00ff4c 38.5px,#00ff7a 40.5px,#00ff72 50.5px,#00ff60 51.5px,#00ff83 54.5px,#00ff97 64.5px,#0f3 86.5px,#0f3 123.5px,#ff8c00 124.5px,#ff8c00 128.5px,#61ff00 129.5px,#df0 130.5px,#ffe200 131.5px,#ffc400 133.5px,#ffc400 139.5px,#ff9a00 140.5px,#ff9a00 142.5px,#ffc400 143.5px,#ffcf00 148.5px,#fffa00 150.5px,#06ff00 154.5px,#00ff1c 157.5px,#00ff02 163.5px,#12ff00 164.5px,#00ff0e 166.5px,#00ff0f 172px)"></i><i style="left:263px;width:1px;background:linear-gradient(#00ff1c 0px,#00ff1a 5.5px,#00ff07 6.5px,#6eff00 7.5px,#beff00 8.5px,#50ff00 9.5px,#00ff0e 10.5px,#00ff1c 24.5px,#0f1 37.5px,#05ff00 38.5px,#00ff1c 41.5px,#00ff17 50.5px,#00ff0a 51.5px,#00ff24 56.5px,#00ff23 67.5px,#0eff00 80.5px,#2f0 94.5px,#2cff00 109.5px,#c9ff00 111.5px,#fffa00 112.5px,#fffa00 126.5px,#9eff00 128.5px,#b5ff00 129.5px,#fffa00 130.5px,#ffc700 132.5px,#ffcd00 148.5px,#faff00 151.5px,#69ff00 154.5px,#3cff00 156.5px,#5bff00 163.5px,#6aff00 164.5px,#4cff00 167.5px,#4cff00 172px)"></i><i style="left:264px;width:2px;background:linear-gradient(#fff500 0px,#ffed00 109.5px,#ff4000 112.5px,#ff4000 126.5px,#ffed00 129.5px,#fff500 172px)"></i><i style="left:266px;width:1px;background:linear-gradient(#00ff7b 0px,#00ff78 5.5px,#00ff5a 6.5px,#18ff00 7.5px,#90ff00 8.5px,#00ff0c 9.5px,#00ff65 10.5px,#00ff7b 12.5px,#00ff7a 36.5px,#00ff4d 38.5px,#00ff7a 40.5px,#00ff7c 47.5px,#00ff5d 48.5px,#00ff72 50.5px,#00ff60 51.5px,#00ff83 54.5px,#00ffc6 93.5px,#00ffba 154.5px,#00ff95 163.5px,#0f8 164.5px,#00ffa2 168.5px,#00ffa2 172px)"></i><i style="left:267px;width:1px;background:linear-gradient(#00ff7b 0px,#00ff78 5.5px,#00ff5a 6.5px,#18ff00 7.5px,#90ff00 8.5px,#00ff0c 9.5px,#00ff65 10.5px,#00ff7b 12.5px,#00ff7a 36.5px,#00ff4c 38.5px,#00ff7a 40.5px,#00ff71 44.5px,#00ff0d 46.5px,#2fff00 47.5px,#2fff00 49.5px,#00ff6f 50.5px,#00ff60 51.5px,#00ff83 54.5px,#00ffc4 93.5px,#00ffb7 154.5px,#00ff93 163.5px,#00ff86 164.5px,#00ffa0 168.5px,#00ffa0 172px)"></i><i style="left:268px;width:1px;background:linear-gradient(#00ff7b 0px,#00ff78 5.5px,#00ff5a 6.5px,#18ff00 7.5px,#90ff00 8.5px,#00ff0c 9.5px,#00ff65 10.5px,#00ff7b 12.5px,#00ff7b 35.5px,#00ff2b 36.5px,#00ff6a 37.5px,#00ff4c 38.5px,#00ff7a 40.5px,#00ff21 42.5px,#1eff00 43.5px,#2fff00 46.5px,#2fff00 48.5px,#0aff00 49.5px,#00ff72 50.5px,#00ff60 51.5px,#00ff83 54.5px,#00ffc4 93.5px,#00ffb8 154.5px,#00ff93 163.5px,#00ff86 164.5px,#00ffa0 168.5px,#00ffa0 172px)"></i><i style="left:269px;width:1px;background:linear-gradient(#00ff7b 0px,#00ff78 5.5px,#00ff5a 6.5px,#18ff00 7.5px,#90ff00 8.5px,#00ff0c 9.5px,#00ff65 10.5px,#00ff7b 12.5px,#00ff7b 34.5px,#00ff1e 35.5px,#00ff7a 36.5px,#00ff59 37.5px,#00ff1d 38.5px,#0f0 39.5px,#2fff00 40.5px,#2fff00 45.5px,#00ff0e 46.5px,#00ff73 48.5px,#00ff73 50.5px,#00ff60 51.5px,#00ff83 54.5px,#00ffc6 93.5px,#00ffba 154.5px,#00ff95 163.5px,#0f8 164.5px,#00ffa2 168.5px,#00ffa2 172px)"></i><i style="left:270px;width:1px;background:linear-gradient(#00ff7b 0px,#00ff78 5.5px,#00ff5a 6.5px,#18ff00 7.5px,#90ff00 8.5px,#00ff0c 9.5px,#00ff65 10.5px,#00ff7b 12.5px,#00ff7b 33.5px,#00ff18 35.5px,#2eff00 36.5px,#2fff00 37.5px,#67ff00 38.5px,#2fff00 39.5px,#2fff00 41.5px,#0cff00 42.5px,#00ff7b 45.5px,#00ff73 50.5px,#00ff60 51.5px,#00ff83 54.5px,#00ffc7 93.5px,#00ffba 154.5px,#00ff96 163.5px,#00ff89 164.5px,#00ffa3 168.5px,#00ffa3 172px)"></i><i style="left:271px;width:1px;background:linear-gradient(#00ff7b 0px,#00ff78 5.5px,#00ff5a 6.5px,#18ff00 7.5px,#90ff00 8.5px,#00ff0c 9.5px,#00ff65 10.5px,#00ff7b 12.5px,#00ff7b 32.5px,#00ff52 33.5px,#2fff00 34.5px,#e3ff00 35.5px,#e3ff00 38.5px,#0f1 39.5px,#00ff7b 41.5px,#00ff73 50.5px,#00ff60 51.5px,#00ff84 54.5px,#00ffc9 93.5px,#00ffbc 154.5px,#00ff98 163.5px,#00ff8b 164.5px,#00ffa5 168.5px,#00ffa5 172px)"></i><i style="left:272px;width:1px;background:linear-gradient(#00ff7b 0px,#00ff78 5.5px,#00ff5a 6.5px,#18ff00 7.5px,#90ff00 8.5px,#00ff0c 9.5px,#00ff65 10.5px,#00ff7b 12.5px,#00ff7b 32.5px,#2fff00 33.5px,#2fff00 34.5px,#e3ff00 35.5px,#e3ff00 38.5px,#00ff6a 39.5px,#00ff7b 43.5px,#00ff73 50.5px,#00ff61 51.5px,#00ff84 54.5px,#0fc 93.5px,#00ffc0 154.5px,#00ff9b 163.5px,#00ff8e 164.5px,#00ffa8 168.5px,#00ffa8 172px)"></i><i style="left:273px;width:1px;background:linear-gradient(#00ff7b 0px,#00ff78 5.5px,#00ff5a 6.5px,#18ff00 7.5px,#90ff00 8.5px,#00ff0c 9.5px,#00ff65 10.5px,#00ff7b 12.5px,#00ff7b 31.5px,#00ff0f 32.5px,#2fff00 33.5px,#2fff00 34.5px,#e3ff00 35.5px,#e3ff00 38.5px,#00ff6a 39.5px,#00ff7b 43.5px,#00ff73 50.5px,#00ff61 51.5px,#00ff84 54.5px,#00ffca 93.5px,#00ffbe 154.5px,#0f9 163.5px,#00ff8c 164.5px,#00ffa6 168.5px,#00ffa6 172px)"></i><i style="left:274px;width:1px;background:linear-gradient(#00ff7b 0px,#00ff78 5.5px,#00ff5a 6.5px,#18ff00 7.5px,#90ff00 8.5px,#00ff0c 9.5px,#00ff65 10.5px,#00ff7b 12.5px,#00ff7b 30.5px,#00ff39 31.5px,#2fff00 32.5px,#2fff00 33.5px,#e3ff00 34.5px,#e3ff00 35.5px,#00ff7a 36.5px,#00ff4c 38.5px,#00ff7a 40.5px,#00ff72 50.5px,#00ff60 51.5px,#00ff83 54.5px,#00ffc5 93.5px,#00ffb8 154.5px,#00ff94 163.5px,#00ff87 164.5px,#00ffa1 168.5px,#00ffa1 172px)"></i><i style="left:275px;width:1px;background:linear-gradient(#00ff7b 0px,#00ff78 5.5px,#00ff5a 6.5px,#18ff00 7.5px,#90ff00 8.5px,#00ff0c 9.5px,#00ff65 10.5px,#00ff7b 12.5px,#00ff7b 29.5px,#00ff63 30.5px,#2fff00 31.5px,#2fff00 32.5px,#e3ff00 33.5px,#e3ff00 34.5px,#00ff1e 35.5px,#00ff7a 36.5px,#00ff4c 38.5px,#00ff7a 40.5px,#00ff72 50.5px,#00ff60 51.5px,#00ff82 54.5px,#00ffc3 93.5px,#00ffb7 154.5px,#00ff92 163.5px,#00ff85 164.5px,#00ff9f 168.5px,#00ff9f 172px)"></i><i style="left:276px;width:1px;background:linear-gradient(#00ff7b 0px,#00ff78 5.5px,#00ff5a 6.5px,#18ff00 7.5px,#90ff00 8.5px,#00ff0c 9.5px,#00ff65 10.5px,#00ff7b 12.5px,#00ff7b 29.5px,#13ff00 30.5px,#2fff00 31.5px,#e3ff00 32.5px,#e3ff00 33.5px,#bfff00 34.5px,#bfff00 35.5px,#00ff7a 36.5px,#00ff4c 38.5px,#00ff7a 40.5px,#00ff72 50.5px,#00ff60 51.5px,#00ff82 54.5px,#00ffc4 93.5px,#00ffb7 154.5px,#00ff93 163.5px,#00ff86 164.5px,#00ff9f 168.5px,#00ff9f 172px)"></i><i style="left:277px;width:1px;background:linear-gradient(#00ff7b 0px,#00ff78 5.5px,#00ff5a 6.5px,#18ff00 7.5px,#90ff00 8.5px,#00ff0c 9.5px,#00ff65 10.5px,#00ff7b 12.5px,#00ff7b 28.5px,#00ff1f 29.5px,#2fff00 30.5px,#e3ff00 31.5px,#e3ff00 33.5px,#bfff00 34.5px,#bfff00 35.5px,#00ff7a 36.5px,#00ff4c 38.5px,#00ff7a 40.5px,#00ff72 50.5px,#00ff60 51.5px,#00ff83 54.5px,#00ffc4 93.5px,#00ffb8 154.5px,#00ff93 163.5px,#00ff86 164.5px,#00ffa0 168.5px,#00ffa0 172px)"></i><i style="left:278px;width:1px;background:linear-gradient(#00ff7b 0px,#00ff78 5.5px,#00ff5a 6.5px,#18ff00 7.5px,#90ff00 8.5px,#00ff0c 9.5px,#00ff65 10.5px,#00ff7b 12.5px,#00ff7b 27.5px,#00ff49 28.5px,#2fff00 29.5px,#c9ff00 30.5px,#e3ff00 31.5px,#e3ff00 32.5px,#bfff00 33.5px,#bfff00 35.5px,#00ff7a 36.5px,#00ff4c 38.5px,#00ff7a 40.5px,#00ff72 50.5px,#00ff60 51.5px,#00ff83 54.5px,#00ffc4 93.5px,#00ffb8 154.5px,#00ff93 163.5px,#00ff86 164.5px,#00ffa0 168.5px,#00ffa0 172px)"></i><i style="left:279px;width:1px;background:linear-gradient(#00ff7b 0px,#00ff78 5.5px,#00ff5a 6.5px,#18ff00 7.5px,#90ff00 8.5px,#00ff0c 9.5px,#00ff65 10.5px,#00ff7b 12.5px,#00ff70 27.5px,#2fff00 28.5px,#e3ff00 30.5px,#e3ff00 31.5px,#00ff7b 32.5px,#00ff7a 36.5px,#00ff4c 38.5px,#00ff7a 40.5px,#00ff72 50.5px,#00ff5f 51.5px,#00ff82 54.5px,#00ffc3 93.5px,#00ffb6 154.5px,#00ff92 163.5px,#00ff85 164.5px,#00ff9f 168.5px,#00ff9f 172px)"></i><i style="left:280px;width:1px;background:linear-gradient(#00ff7b 0px,#00ff78 5.5px,#00ff5a 6.5px,#18ff00 7.5px,#90ff00 8.5px,#00ff0c 9.5px,#00ff65 10.5px,#00ff7b 12.5px,#00ff7b 26.5px,#05ff00 27.5px,#92ff00 28.5px,#e3ff00 29.5px,#e3ff00 30.5px,#00ff7b 31.5px,#00ff7a 36.5px,#00ff4c 38.5px,#00ff7a 40.5px,#00ff72 50.5px,#00ff5f 51.5px,#00ff82 54.5px,#00ffc2 93.5px,#00ffb6 154.5px,#00ff91 163.5px,#00ff91 165.5px,#00ff9e 172px)"></i><i style="left:281px;width:1px;background:linear-gradient(#00ff7b 0px,#00ff78 5.5px,#00ff5a 6.5px,#18ff00 7.5px,#90ff00 8.5px,#00ff0c 9.5px,#00ff65 10.5px,#00ff7b 12.5px,#00ff7b 25.5px,#00ff1e 26.5px,#92ff00 27.5px,#e3ff00 28.5px,#e3ff00 29.5px,#00ff7b 30.5px,#00ff7a 36.5px,#00ff4c 38.5px,#00ff7a 40.5px,#00ff72 50.5px,#00ff5f 51.5px,#00ff82 54.5px,#00ffc2 93.5px,#00ffb6 154.5px,#00ff91 163.5px,#00ff84 164.5px,#00ff9e 168.5px,#00ff9e 172px)"></i><i style="left:282px;width:1px;background:linear-gradient(#00ff7b 0px,#00ff78 5.5px,#00ff5a 6.5px,#18ff00 7.5px,#90ff00 8.5px,#00ff0c 9.5px,#00ff65 10.5px,#00ff7b 12.5px,#00ff7b 24.5px,#00ff3f 25.5px,#92ff00 26.5px,#e3ff00 27.5px,#e3ff00 28.5px,#00ff7b 29.5px,#00ff7a 36.5px,#00ff4c 38.5px,#00ff7a 40.5px,#00ff72 50.5px,#00ff60 51.5px,#00ff82 54.5px,#00ffc3 93.5px,#00ffb7 154.5px,#00ff92 163.5px,#00ff85 164.5px,#00ff9f 168.5px,#00ff9f 172px)"></i><i style="left:283px;width:1px;background:linear-gradient(#00ff7b 0px,#00ff78 5.5px,#00ff5a 6.5px,#18ff00 7.5px,#90ff00 8.5px,#00ff0c 9.5px,#00ff65 10.5px,#00ff7b 12.5px,#00ff7b 23.5px,#00ff60 24.5px,#92ff00 25.5px,#e3ff00 26.5px,#e3ff00 27.5px,#00ff7b 28.5px,#00ff7a 36.5px,#00ff4d 38.5px,#00ff7a 40.5px,#00ff72 50.5px,#00ff60 51.5px,#00ff83 54.5px,#00ffc5 93.5px,#00ffb9 154.5px,#00ff94 163.5px,#00ff87 164.5px,#00ffa1 168.5px,#00ffa1 172px)"></i><i style="left:284px;width:1px;background:linear-gradient(#00ff7b 0px,#00ff78 5.5px,#00ff5a 6.5px,#18ff00 7.5px,#90ff00 8.5px,#00ff0c 9.5px,#00ff65 10.5px,#00ff7b 12.5px,#00ff7b 23.5px,#8dff00 24.5px,#e3ff00 25.5px,#e3ff00 26.5px,#00ff7b 27.5px,#00ff7a 36.5px,#00ff4d 38.5px,#00ff7a 40.5px,#00ff73 50.5px,#00ff60 51.5px,#00ff83 54.5px,#00ffc8 93.5px,#00ffbc 154.5px,#00ff97 163.5px,#00ff8a 164.5px,#00ffa4 168.5px,#00ffa4 172px)"></i><i style="left:285px;width:1px;background:linear-gradient(#00ff7b 0px,#00ff78 5.5px,#00ff5a 6.5px,#18ff00 7.5px,#90ff00 8.5px,#00ff0c 9.5px,#00ff65 10.5px,#00ff7b 12.5px,#00ff7b 22.5px,#73ff00 23.5px,#e3ff00 24.5px,#e3ff00 25.5px,#00ff60 26.5px,#00ff7b 27.5px,#00ff7a 36.5px,#00ff4d 38.5px,#00ff7a 40.5px,#00ff72 50.5px,#00ff60 51.5px,#00ff83 54.5px,#00ffc6 93.5px,#00ffba 154.5px,#00ff95 163.5px,#0f8 164.5px,#00ffa2 168.5px,#00ffa2 172px)"></i><i style="left:286px;width:1px;background:linear-gradient(#00ff7b 0px,#00ff78 5.5px,#00ff5a 6.5px,#18ff00 7.5px,#90ff00 8.5px,#00ff0c 9.5px,#00ff65 10.5px,#00ff7b 12.5px,#00ff7b 21.5px,#59ff00 22.5px,#e3ff00 23.5px,#e3ff00 24.5px,#00ff3f 25.5px,#00ff7b 26.5px,#00ff7a 36.5px,#00ff4c 38.5px,#00ff7a 40.5px,#00ff72 50.5px,#00ff5f 51.5px,#00ff82 54.5px,#00ffc2 93.5px,#00ffb6 154.5px,#00ff91 163.5px,#00ff84 164.5px,#00ff9e 168.5px,#00ff9e 172px)"></i><i style="left:287px;width:1px;background:linear-gradient(#00ff7b 0px,#00ff78 5.5px,#00ff5a 6.5px,#18ff00 7.5px,#90ff00 8.5px,#00ff0c 9.5px,#00ff65 10.5px,#00ff7b 12.5px,#00ff7b 20.5px,#00ff0e 21.5px,#e3ff00 22.5px,#e3ff00 23.5px,#00ff1e 24.5px,#00ff7b 25.5px,#00ff7a 36.5px,#00ff4c 38.5px,#00ff7a 40.5px,#00ff72 50.5px,#00ff5f 51.5px,#00ff82 54.5px,#00ffc2 93.5px,#00ffb6 154.5px,#00ff91 163.5px,#00ff84 164.5px,#00ff9e 168.5px,#00ff9e 172px)"></i><i style="left:288px;width:1px;background:linear-gradient(#00ff7b 0px,#00ff78 5.5px,#00ff5a 6.5px,#18ff00 7.5px,#90ff00 8.5px,#00ff0c 9.5px,#00ff65 10.5px,#00ff7b 12.5px,#00ff7b 17.5px,#0bff00 20.5px,#67ff00 21.5px,#e3ff00 22.5px,#05ff00 23.5px,#00ff7b 24.5px,#00ff7a 36.5px,#00ff4c 38.5px,#00ff7a 40.5px,#00ff72 50.5px,#00ff60 51.5px,#00ff83 54.5px,#00ffc5 93.5px,#00ffb8 154.5px,#00ff94 163.5px,#00ff87 164.5px,#00ffa1 168.5px,#00ffa1 172px)"></i><i style="left:289px;width:1px;background:linear-gradient(#00ff7b 0px,#00ff78 5.5px,#00ff5a 6.5px,#18ff00 7.5px,#90ff00 8.5px,#00ff0c 9.5px,#00ff65 10.5px,#00ff7b 12.5px,#00ff7b 13.5px,#0f0 16.5px,#2fff00 17.5px,#2fff00 22.5px,#00ff70 23.5px,#00ff7a 36.5px,#00ff4d 38.5px,#00ff7a 40.5px,#00ff72 50.5px,#00ff60 51.5px,#00ff83 54.5px,#00ffc6 93.5px,#00ffb9 154.5px,#00ff95 163.5px,#0f8 164.5px,#00ffa2 168.5px,#00ffa2 172px)"></i><i style="left:290px;width:1px;background:linear-gradient(#00ff7b 0px,#00ff78 5.5px,#00ff5a 6.5px,#18ff00 7.5px,#90ff00 8.5px,#00ff0c 9.5px,#00ff52 10.5px,#00ff07 12.5px,#2fff00 13.5px,#2fff00 18.5px,#16ff00 19.5px,#00ff51 21.5px,#00ff7b 22.5px,#00ff7a 36.5px,#00ff4d 38.5px,#00ff7a 40.5px,#00ff72 50.5px,#00ff60 51.5px,#00ff83 54.5px,#00ffc5 93.5px,#00ffb9 154.5px,#00ff94 163.5px,#00ff87 164.5px,#00ffa1 168.5px,#00ffa1 172px)"></i><i style="left:291px;width:1px;background:linear-gradient(#00ff7b 0px,#00ff78 5.5px,#00ff4e 6.5px,#21ff00 7.5px,#90ff00 8.5px,#2fff00 9.5px,#2f0 15.5px,#00ff1c 16.5px,#00ff79 18.5px,#00ff7a 36.5px,#00ff4d 38.5px,#00ff7a 40.5px,#00ff73 50.5px,#00ff60 51.5px,#00ff83 54.5px,#00ffc7 93.5px,#00ffc7 126.5px,#00ff9c 128.5px,#00ff9c 131.5px,#00ffc7 133.5px,#00ffb7 155.5px,#00ff96 163.5px,#00ff89 164.5px,#00ffa3 168.5px,#00ffa3 172px)"></i><i style="left:292px;width:1px;background:linear-gradient(#00ff7b 0px,#00ff72 2.5px,#00ff14 4.5px,#2fff00 5.5px,#2fff00 7.5px,#90ff00 8.5px,#2fff00 9.5px,#2dff00 11.5px,#00ff15 12.5px,#00ff73 14.5px,#00ff7a 36.5px,#00ff4d 38.5px,#00ff7a 40.5px,#00ff72 50.5px,#00ff60 51.5px,#00ff83 54.5px,#00ffc6 93.5px,#00ffc6 126.5px,#00ff35 127.5px,#ffd200 128.5px,#ffd200 131.5px,#00ff35 132.5px,#00ffc6 133.5px,#00ffb6 155.5px,#00ff95 163.5px,#0f8 164.5px,#00ffa2 168.5px,#00ffa2 172px)"></i><i style="left:293px;width:1px;background:linear-gradient(#00ff1b 0px,#23ff00 1.5px,#2fff00 7.5px,#90ff00 8.5px,#07ff00 9.5px,#00ff59 10.5px,#00ff79 11.5px,#00ff7a 36.5px,#00ff4d 38.5px,#00ff7a 40.5px,#00ff73 50.5px,#00ff60 51.5px,#00ff84 54.5px,#00ffc9 93.5px,#00ffc9 126.5px,#00ff37 127.5px,#ffd200 128.5px,#ffd200 131.5px,#00ff37 132.5px,#00ffc9 133.5px,#00ffb9 155.5px,#00ff98 163.5px,#00ff8b 164.5px,#00ffa5 168.5px,#00ffa5 172px)"></i><i style="left:294px;width:1px;background:linear-gradient(#2fff00 0px,#2fff00 3.5px,#00ff08 4.5px,#00ff4a 6.5px,#18ff00 7.5px,#90ff00 8.5px,#00ff0c 9.5px,#00ff65 10.5px,#00ff7b 12.5px,#00ff7a 36.5px,#00ff4d 38.5px,#00ff7a 40.5px,#00ff72 50.5px,#00ff60 51.5px,#00ff83 54.5px,#00ffc6 93.5px,#00ffc6 126.5px,#00ff36 127.5px,#ffd200 128.5px,#ffd200 131.5px,#00ff36 132.5px,#00ffc6 133.5px,#00ffb6 155.5px,#00ff95 163.5px,#0f8 164.5px,#00ffa2 168.5px,#00ffa2 172px)"></i><i style="left:295px;width:1px;background:linear-gradient(#00ff01 0px,#00ff5f 2.5px,#00ff7b 3.5px,#00ff78 5.5px,#00ff5a 6.5px,#18ff00 7.5px,#90ff00 8.5px,#00ff0c 9.5px,#00ff65 10.5px,#00ff7b 12.5px,#00ff7a 36.5px,#00ff4d 38.5px,#00ff7a 40.5px,#00ff72 50.5px,#00ff60 51.5px,#00ff83 54.5px,#00ffc6 93.5px,#00ffc6 126.5px,#00ff35 127.5px,#ffd200 128.5px,#ffd200 131.5px,#00ff35 132.5px,#00ffc6 133.5px,#00ffb6 155.5px,#00ff95 163.5px,#0f8 164.5px,#00ffa2 168.5px,#00ffa2 172px)"></i><i style="left:296px;width:1px;background:linear-gradient(#00ff7b 0px,#00ff78 5.5px,#00ff5a 6.5px,#18ff00 7.5px,#90ff00 8.5px,#00ff0c 9.5px,#00ff65 10.5px,#00ff7b 12.5px,#00ff7a 36.5px,#00ff4d 38.5px,#00ff7a 40.5px,#00ff73 50.5px,#00ff60 51.5px,#00ff83 54.5px,#00ffc7 93.5px,#00ffc7 126.5px,#00ff36 127.5px,#ffd200 128.5px,#ffd200 131.5px,#00ff36 132.5px,#00ffc7 133.5px,#00ffb7 155.5px,#00ff96 163.5px,#00ff89 164.5px,#00ffa3 168.5px,#00ffa3 172px)"></i><i style="left:297px;width:1px;background:linear-gradient(#00ff7b 0px,#00ff78 5.5px,#00ff5a 6.5px,#18ff00 7.5px,#90ff00 8.5px,#00ff0c 9.5px,#00ff65 10.5px,#00ff7b 12.5px,#00ff7a 36.5px,#00ff4d 38.5px,#00ff7a 40.5px,#00ff73 50.5px,#00ff61 51.5px,#00ff84 54.5px,#00ffca 93.5px,#00ffcb 126.5px,#00ff6c 127.5px,#74ff00 128.5px,#74ff00 131.5px,#00ff6c 132.5px,#00ffcb 133.5px,#00ffba 155.5px,#00ff9a 163.5px,#00ff8d 164.5px,#00ffa6 168.5px,#00ffa6 172px)"></i><i style="left:298px;width:1px;background:linear-gradient(#00ff7b 0px,#00ff78 5.5px,#00ff5a 6.5px,#18ff00 7.5px,#90ff00 8.5px,#00ff0c 9.5px,#00ff65 10.5px,#00ff7b 12.5px,#00ff7a 36.5px,#00ff4d 38.5px,#00ff7a 40.5px,#00ff73 50.5px,#00ff60 51.5px,#00ff84 54.5px,#00ffc9 93.5px,#00ffbd 154.5px,#00ff98 163.5px,#00ff98 165.5px,#00ffa5 172px)"></i><i style="left:299px;width:1px;background:linear-gradient(#00ff7b 0px,#00ff78 5.5px,#00ff5a 6.5px,#18ff00 7.5px,#90ff00 8.5px,#00ff0c 9.5px,#00ff65 10.5px,#00ff7b 12.5px,#00ff7a 36.5px,#00ff4d 38.5px,#00ff7a 40.5px,#00ff73 50.5px,#00ff60 51.5px,#00ff83 54.5px,#00ffc6 93.5px,#00ffba 154.5px,#00ff95 163.5px,#0f8 164.5px,#00ffa2 168.5px,#00ffa2 172px)"></i><i style="left:300px;width:1px;background:linear-gradient(#00ff7b 0px,#00ff78 5.5px,#00ff5a 6.5px,#18ff00 7.5px,#90ff00 8.5px,#00ff0c 9.5px,#00ff65 10.5px,#00ff7b 12.5px,#00ff7a 36.5px,#00ff4d 38.5px,#00ff7a 40.5px,#00ff73 50.5px,#00ff60 51.5px,#00ff83 54.5px,#00ffc8 93.5px,#0fb 154.5px,#00ff97 163.5px,#00ff8a 164.5px,#00ffa4 168.5px,#00ffa4 172px)"></i><i style="left:301px;width:1px;background:linear-gradient(#00ff7b 0px,#00ff78 5.5px,#00ff5a 6.5px,#18ff00 7.5px,#90ff00 8.5px,#00ff0c 9.5px,#00ff65 10.5px,#00ff7b 12.5px,#00ff7a 36.5px,#00ff4d 38.5px,#00ff7a 40.5px,#00ff73 50.5px,#00ff60 51.5px,#00ff83 54.5px,#00ffc7 93.5px,#0fb 154.5px,#00ff96 163.5px,#00ff89 164.5px,#00ffa3 168.5px,#00ffa3 172px)"></i><i style="left:302px;width:1px;background:linear-gradient(#00ff7b 0px,#00ff78 5.5px,#00ff5a 6.5px,#18ff00 7.5px,#90ff00 8.5px,#00ff0c 9.5px,#00ff65 10.5px,#00ff7b 12.5px,#00ff7a 36.5px,#00ff4c 38.5px,#00ff7a 40.5px,#00ff72 50.5px,#00ff5f 51.5px,#00ff82 54.5px,#00ffc0 94.5px,#00ffb3 154.5px,#00ff8f 163.5px,#00ff82 164.5px,#00ff9c 168.5px,#00ff9c 172px)"></i><i style="left:303px;width:1px;background:linear-gradient(#00ff7b 0px,#00ff78 5.5px,#00ff5a 6.5px,#18ff00 7.5px,#90ff00 8.5px,#00ff0c 9.5px,#00ff65 10.5px,#00ff7b 12.5px,#00ff7a 36.5px,#00ff4c 38.5px,#00ff7a 40.5px,#00ff71 50.5px,#00ff5f 51.5px,#00ff81 54.5px,#00ffbe 94.5px,#00ffb2 154.5px,#00ff8d 163.5px,#00ff80 164.5px,#00ff9a 168.5px,#00ff9a 172px)"></i><i style="left:304px;width:1px;background:linear-gradient(#00ff7b 0px,#00ff78 5.5px,#00ff5a 6.5px,#18ff00 7.5px,#90ff00 8.5px,#00ff0c 9.5px,#00ff65 10.5px,#00ff7b 12.5px,#00ff7a 36.5px,#00ff4c 38.5px,#00ff7a 40.5px,#00ff72 50.5px,#00ff5f 51.5px,#00ff82 54.5px,#00ffc1 93.5px,#00ffb5 154.5px,#00ff90 163.5px,#00ff83 164.5px,#00ff9d 168.5px,#00ff9d 172px)"></i><i style="left:305px;width:1px;background:linear-gradient(#00ff7b 0px,#00ff78 5.5px,#00ff5a 6.5px,#18ff00 7.5px,#90ff00 8.5px,#00ff0c 9.5px,#00ff65 10.5px,#00ff7b 12.5px,#00ff7a 36.5px,#00ff4d 38.5px,#00ff7a 40.5px,#00ff73 50.5px,#00ff60 51.5px,#00ff83 54.5px,#00ffc7 93.5px,#0fb 154.5px,#00ff96 163.5px,#00ff89 164.5px,#00ffa3 168.5px,#00ffa3 172px)"></i><i style="left:306px;width:1px;background:linear-gradient(#00ff7b 0px,#00ff78 5.5px,#00ff5a 6.5px,#18ff00 7.5px,#90ff00 8.5px,#00ff0c 9.5px,#00ff65 10.5px,#00ff7b 12.5px,#00ff7a 36.5px,#00ff4c 38.5px,#00ff7a 40.5px,#00ff72 50.5px,#00ff60 51.5px,#00ff83 54.5px,#00ffc5 93.5px,#00ffb9 154.5px,#00ff93 163.5px,#00ff86 164.5px,#00ff9c 167.5px,#00ff96 172px)"></i><i style="left:307px;width:1px;background:linear-gradient(#00ff7b 0px,#00ff78 5.5px,#00ff5a 6.5px,#18ff00 7.5px,#90ff00 8.5px,#00ff0c 9.5px,#00ff65 10.5px,#00ff7b 12.5px,#00ff7a 36.5px,#00ff4d 38.5px,#00ff7a 40.5px,#00ff73 50.5px,#00ff60 51.5px,#00ff84 54.5px,#00ffc9 93.5px,#00ffba 147.5px,#00ffa5 156.5px,#00ff84 159.5px,#00ff7b 161.5px,#00ff8d 162.5px,#00ff72 164.5px,#0f8 166.5px,#00ff6c 168.5px,#00ff67 172px)"></i><i style="left:308px;width:1px;background:linear-gradient(#00ff7b 0px,#00ff78 5.5px,#00ff5a 6.5px,#18ff00 7.5px,#90ff00 8.5px,#00ff0c 9.5px,#00ff65 10.5px,#00ff7b 12.5px,#00ff7a 36.5px,#00ff4d 38.5px,#00ff7a 40.5px,#00ff73 50.5px,#00ff61 51.5px,#00ff84 54.5px,#00ffcb 92.5px,#00ffbf 126.5px,#00ffa8 131.5px,#00ffb8 133.5px,#00ffb4 136.5px,#0f9 138.5px,#00ff93 141.5px,#00ffae 142.5px,#00ffab 146.5px,#0f8 147.5px,#00ff80 151.5px,#00ffa1 152.5px,#00ff92 156.5px,#00ff68 157.5px,#00ff5c 161.5px,#00ff80 162.5px,#00ff67 164.5px,#00ff80 166.5px,#00ff5b 167.5px,#00ff5b 172px)"></i><i style="left:309px;width:1px;background:linear-gradient(#00ff7b 0px,#00ff78 5.5px,#00ff5a 6.5px,#18ff00 7.5px,#90ff00 8.5px,#00ff0c 9.5px,#00ff65 10.5px,#00ff7b 12.5px,#00ff7a 36.5px,#00ff4d 38.5px,#00ff7a 40.5px,#00ff73 50.5px,#00ff61 51.5px,#00ff84 54.5px,#00ff9e 66.5px,#00ff19 67.5px,#00ff19 70.5px,#0fa 71.5px,#00ffad 72.5px,#00ff19 73.5px,#00ff19 76.5px,#00ffb8 77.5px,#0fb 78.5px,#00ff19 79.5px,#00ff19 82.5px,#00ffc3 83.5px,#00ffc4 84.5px,#00ff19 85.5px,#00ff19 88.5px,#00ffc3 89.5px,#00ffc3 90.5px,#00ff19 91.5px,#00ff19 94.5px,#00ffc3 95.5px,#00ffc2 96.5px,#00ff19 97.5px,#00ff19 100.5px,#00ffaf 101.5px,#00ffbc 102.5px,#00ff19 103.5px,#00ff19 106.5px,#00ffa2 107.5px,#00ffa0 108.5px,#00ff19 109.5px,#00ff19 112.5px,#00ffb0 113.5px,#00ffaf 114.5px,#00ff19 115.5px,#00ff19 118.5px,#00ff8b 119.5px,#00ff89 120.5px,#00ff19 121.5px,#00ff19 124.5px,#00ffa7 125.5px,#00ffa6 126.5px,#00ff19 127.5px,#00ff19 130.5px,#00ff7f 131.5px,#00ffa5 132.5px,#00ff19 133.5px,#00ff19 136.5px,#00ff7f 137.5px,#00ff7f 138.5px,#00ff19 139.5px,#00ff19 142.5px,#00ffa5 143.5px,#00ffa5 144.5px,#00ff19 145.5px,#00ff19 148.5px,#00ff7f 149.5px,#00ff7e 150.5px,#00ff19 151.5px,#00ff19 154.5px,#00ff95 155.5px,#00ff91 156.5px,#00ff19 157.5px,#00ff19 160.5px,#00ff5c 161.5px,#00ff7f 162.5px,#00ff19 163.5px,#00ff19 166.5px,#00ff5b 167.5px,#00ff5b 168.5px,#00ff19 169.5px,#00ff19 172px)"></i><i style="left:310px;width:1px;background:linear-gradient(#00ff7b 0px,#00ff78 5.5px,#00ff5a 6.5px,#18ff00 7.5px,#90ff00 8.5px,#00ff0c 9.5px,#00ff65 10.5px,#00ff7b 12.5px,#00ff7a 36.5px,#00ff4d 38.5px,#00ff7a 40.5px,#00ff73 50.5px,#00ff60 51.5px,#00ff83 54.5px,#00ff9c 66.5px,#00ff19 67.5px,#00ff19 70.5px,#00ffa2 71.5px,#00ffa6 72.5px,#00ff19 73.5px,#00ff19 76.5px,#00ff9a 77.5px,#00ff9a 78.5px,#00ff19 79.5px,#00ff19 82.5px,#00ffab 83.5px,#00ffab 84.5px,#00ff19 85.5px,#00ff19 88.5px,#00ff8f 89.5px,#00ff8d 90.5px,#00ff19 91.5px,#00ff19 94.5px,#00ffa6 95.5px,#00ffa5 96.5px,#00ff19 97.5px,#00ff19 100.5px,#00ff7f 101.5px,#00ffa2 102.5px,#00ff19 103.5px,#00ff19 106.5px,#00ff7d 107.5px,#00ff7d 108.5px,#00ff19 109.5px,#00ff19 112.5px,#00ffa2 113.5px,#00ffa2 114.5px,#00ff19 115.5px,#00ff19 118.5px,#00ff7d 119.5px,#00ff7d 120.5px,#00ff19 121.5px,#00ff19 124.5px,#00ffa2 125.5px,#00ffa2 126.5px,#00ff19 127.5px,#00ff19 130.5px,#00ff7d 131.5px,#00ffa2 132.5px,#00ff19 133.5px,#00ff19 136.5px,#00ff7d 137.5px,#00ff7d 138.5px,#00ff19 139.5px,#00ff19 142.5px,#00ffa2 143.5px,#00ffa2 144.5px,#00ff19 145.5px,#00ff19 148.5px,#00ff7d 149.5px,#00ff7c 150.5px,#00ff19 151.5px,#00ff19 154.5px,#00ff92 155.5px,#00ff8e 156.5px,#00ff19 157.5px,#00ff19 160.5px,#00ff5a 161.5px,#00ff7c 162.5px,#00ff19 163.5px,#00ff19 166.5px,#00ff59 167.5px,#00ff59 168.5px,#00ff19 169.5px,#00ff19 172px)"></i><i style="left:311px;width:1px;background:linear-gradient(#00ff7b 0px,#00ff78 5.5px,#00ff5a 6.5px,#18ff00 7.5px,#90ff00 8.5px,#00ff0c 9.5px,#00ff65 10.5px,#00ff7b 12.5px,#00ff7a 36.5px,#00ff4c 38.5px,#00ff7a 40.5px,#00ff72 50.5px,#00ff5f 51.5px,#00ff82 54.5px,#00ff9a 66.5px,#00ff19 67.5px,#00ff19 70.5px,#00ff90 71.5px,#00ff98 72.5px,#00ff19 73.5px,#00ff19 76.5px,#00ff75 77.5px,#00ff76 78.5px,#00ff19 79.5px,#00ff19 82.5px,#00ff9a 83.5px,#00ff9b 84.5px,#00ff19 85.5px,#00ff19 88.5px,#00ff7b 89.5px,#00ff7b 90.5px,#00ff19 91.5px,#00ff19 94.5px,#00ff9e 95.5px,#00ff9e 96.5px,#00ff19 97.5px,#00ff19 100.5px,#00ff7b 101.5px,#00ff9e 102.5px,#00ff19 103.5px,#00ff19 106.5px,#00ff7b 107.5px,#00ff7b 108.5px,#00ff19 109.5px,#00ff19 112.5px,#00ff9e 113.5px,#00ff9e 114.5px,#00ff19 115.5px,#00ff19 118.5px,#00ff7b 119.5px,#00ff7b 120.5px,#00ff19 121.5px,#00ff19 124.5px,#00ff9e 125.5px,#00ff9e 126.5px,#00ff19 127.5px,#00ff19 130.5px,#00ff7b 131.5px,#00ff9e 132.5px,#00ff19 133.5px,#00ff19 136.5px,#00ff7b 137.5px,#00ff7b 138.5px,#00ff19 139.5px,#00ff19 142.5px,#00ff9e 143.5px,#00ff9e 144.5px,#00ff19 145.5px,#00ff19 148.5px,#00ff7b 149.5px,#00ff7a 150.5px,#00ff19 151.5px,#00ff19 154.5px,#00ff8e 155.5px,#00ff8a 156.5px,#00ff19 157.5px,#00ff19 160.5px,#00ff58 161.5px,#00ff79 162.5px,#00ff19 163.5px,#00ff19 166.5px,#00ff57 167.5px,#00ff57 168.5px,#00ff19 169.5px,#00ff19 172px)"></i><i style="left:312px;width:1px;background:linear-gradient(#00ff7b 0px,#00ff78 5.5px,#00ff5a 6.5px,#18ff00 7.5px,#90ff00 8.5px,#00ff0c 9.5px,#00ff65 10.5px,#00ff7b 12.5px,#00ff7a 36.5px,#00ff4c 38.5px,#00ff7a 40.5px,#00ff72 50.5px,#00ff5f 51.5px,#00ff82 54.5px,#00ff9a 70.5px,#00ff93 76.5px,#00ff75 77.5px,#00ff78 81.5px,#00ff9a 82.5px,#00ff9d 86.5px,#00ff7b 87.5px,#00ff7c 91.5px,#00ff9f 92.5px,#00ff9f 96.5px,#00ff7c 97.5px,#00ff7c 101.5px,#00ff9f 102.5px,#00ff9f 106.5px,#00ff7c 107.5px,#00ff7c 111.5px,#00ff9f 112.5px,#00ff9f 116.5px,#00ff7c 117.5px,#00ff7c 121.5px,#00ff9f 122.5px,#00ff9f 126.5px,#00ff7c 127.5px,#00ff7c 131.5px,#00ff9f 132.5px,#00ff9f 136.5px,#00ff7c 137.5px,#00ff7c 141.5px,#00ff9f 142.5px,#00ff9f 146.5px,#00ff7c 147.5px,#00ff79 151.5px,#00ff9a 152.5px,#00ff8b 156.5px,#00ff64 157.5px,#00ff59 161.5px,#00ff7a 162.5px,#00ff61 164.5px,#00ff79 166.5px,#00ff58 167.5px,#00ff58 172px)"></i><i style="left:313px;width:1px;background:linear-gradient(#00ff7b 0px,#00ff78 5.5px,#00ff5a 6.5px,#18ff00 7.5px,#90ff00 8.5px,#00ff0c 9.5px,#00ff65 10.5px,#00ff7b 12.5px,#00ff7a 36.5px,#00ff4c 38.5px,#00ff7a 40.5px,#00ff72 50.5px,#00ff60 51.5px,#00ff82 54.5px,#00ff9f 75.5px,#00ff7a 78.5px,#00ff78 81.5px,#00ff9b 82.5px,#00ff9e 86.5px,#00ff7b 87.5px,#00ff7c 91.5px,#00ffa0 92.5px,#00ffa0 96.5px,#00ff7c 97.5px,#00ff7c 101.5px,#00ffa0 102.5px,#00ffa0 106.5px,#00ff7c 107.5px,#00ff7c 111.5px,#00ffa0 112.5px,#00ffa0 116.5px,#00ff7c 117.5px,#00ff7c 121.5px,#00ffa0 122.5px,#00ffa0 126.5px,#00ff7c 127.5px,#00ff7c 131.5px,#00ffa0 132.5px,#00ffa0 136.5px,#00ff7c 137.5px,#00ff7c 141.5px,#00ffa0 142.5px,#00ffa0 146.5px,#00ff7c 147.5px,#00ff79 151.5px,#00ff9a 152.5px,#00ff8c 156.5px,#00ff64 157.5px,#00ff59 161.5px,#00ff7a 162.5px,#00ff62 164.5px,#00ff7a 166.5px,#00ff58 167.5px,#00ff58 172px)"></i><i style="left:314px;width:1px;background:linear-gradient(#00ff7b 0px,#00ff78 5.5px,#00ff5a 6.5px,#18ff00 7.5px,#90ff00 8.5px,#00ff0c 9.5px,#00ff65 10.5px,#00ff7b 12.5px,#00ff7a 36.5px,#00ff4c 38.5px,#00ff7a 40.5px,#00ff72 50.5px,#00ff5f 51.5px,#00ff82 54.5px,#00ffa8 77.5px,#00ff8b 81.5px,#00ff9d 83.5px,#00ff9c 86.5px,#00ff7a 87.5px,#00ff7b 91.5px,#00ff9e 92.5px,#00ff9e 96.5px,#00ff7b 97.5px,#00ff7b 101.5px,#00ff9e 102.5px,#00ff9e 106.5px,#00ff7b 107.5px,#00ff7b 111.5px,#00ff9e 112.5px,#00ff9e 116.5px,#00ff7b 117.5px,#00ff7b 121.5px,#00ff9e 122.5px,#00ff9e 126.5px,#00ff7b 127.5px,#00ff7b 131.5px,#00ff9e 132.5px,#00ff9e 136.5px,#00ff7b 137.5px,#fffc00 138.5px,#fffc00 142.5px,#00ff9e 143.5px,#00ff9e 146.5px,#00ff7b 147.5px,#00ff78 151.5px,#00ff98 152.5px,#00ff8a 156.5px,#00ff63 157.5px,#00ff58 161.5px,#00ff78 162.5px,#00ff60 164.5px,#00ff78 166.5px,#00ff57 167.5px,#00ff57 172px)"></i><i style="left:315px;width:1px;background:linear-gradient(#00ff7b 0px,#00ff78 5.5px,#00ff5a 6.5px,#18ff00 7.5px,#90ff00 8.5px,#00ff0c 9.5px,#00ff65 10.5px,#00ff7b 12.5px,#00ff7a 36.5px,#00ff4c 38.5px,#00ff7a 40.5px,#00ff72 50.5px,#00ff5f 51.5px,#00ff82 54.5px,#00ffb2 83.5px,#00ffa7 86.5px,#00ff81 88.5px,#00ff7a 91.5px,#00ff9d 92.5px,#00ff9d 96.5px,#00ff7a 97.5px,#00ff7a 101.5px,#00ff9d 102.5px,#00ff9d 106.5px,#00ff7a 107.5px,#00ff7a 111.5px,#00ff9d 112.5px,#00ff9d 116.5px,#00ff7a 117.5px,#00ff7a 121.5px,#00ff9d 122.5px,#00ff9d 126.5px,#00ff7a 127.5px,#00ff7a 131.5px,#00ff9d 132.5px,#00ff9d 136.5px,#00ff7a 137.5px,#fffc00 138.5px,#fffc00 142.5px,#00ff9d 143.5px,#00ff9d 146.5px,#00ff7a 147.5px,#0f7 151.5px,#00ff97 152.5px,#00ff89 156.5px,#00ff63 157.5px,#00ff57 161.5px,#0f7 162.5px,#00ff5f 164.5px,#0f7 166.5px,#00ff56 167.5px,#00ff56 172px)"></i><i style="left:316px;width:1px;background:linear-gradient(#00ff7b 0px,#00ff78 5.5px,#00ff5a 6.5px,#18ff00 7.5px,#90ff00 8.5px,#00ff0c 9.5px,#00ff65 10.5px,#00ff7b 12.5px,#00ff7a 36.5px,#00ff4c 38.5px,#00ff7a 40.5px,#00ff72 50.5px,#00ff60 51.5px,#00ff82 54.5px,#00ffba 87.5px,#00ff97 91.5px,#00ffa4 93.5px,#00ffa0 96.5px,#00ff7c 97.5px,#00ff7c 101.5px,#00ffa0 102.5px,#00ffa0 106.5px,#00ff7c 107.5px,#00ff7c 111.5px,#00ffa0 112.5px,#00ffa0 116.5px,#00ff7c 117.5px,#00ff7c 121.5px,#00ffa0 122.5px,#00ffa0 126.5px,#00ff7c 127.5px,#00ff7c 131.5px,#00ffa0 132.5px,#00ffa0 136.5px,#00ff7c 137.5px,#fffc00 138.5px,#fffc00 142.5px,#00ffa0 143.5px,#00ffa0 146.5px,#00ff7c 147.5px,#00ff79 151.5px,#00ff9a 152.5px,#00ff8c 156.5px,#00ff64 157.5px,#00ff59 161.5px,#00ff7a 162.5px,#00ff62 164.5px,#00ff7a 166.5px,#00ff58 167.5px,#00ff58 172px)"></i><i style="left:317px;width:1px;background:linear-gradient(#00ff7b 0px,#00ff78 5.5px,#00ff5a 6.5px,#18ff00 7.5px,#90ff00 8.5px,#00ff0c 9.5px,#00ff65 10.5px,#00ff7b 12.5px,#00ff7a 36.5px,#00ff4d 38.5px,#00ff7a 40.5px,#00ff73 50.5px,#00ff60 51.5px,#00ff84 54.5px,#00ffc7 91.5px,#00ffb3 96.5px,#00ff8a 98.5px,#00ff7e 101.5px,#00ffa4 102.5px,#00ffa4 106.5px,#00ff7e 107.5px,#00ff7e 111.5px,#00ffa4 112.5px,#00ffa4 116.5px,#00ff7e 117.5px,#00ff7e 121.5px,#00ffa4 122.5px,#00ffa4 126.5px,#00ff7e 127.5px,#00ff7e 131.5px,#00ffa4 132.5px,#00ffa4 136.5px,#00ff7e 137.5px,#fffc00 138.5px,#fffc00 142.5px,#00ffa4 143.5px,#00ffa4 146.5px,#00ff7e 147.5px,#00ff7b 151.5px,#00ff9e 152.5px,#00ff90 156.5px,#00ff67 157.5px,#00ff5b 161.5px,#00ff7e 162.5px,#0f6 164.5px,#00ff7e 166.5px,#00ff5a 167.5px,#00ff5a 172px)"></i><i style="left:318px;width:1px;background:linear-gradient(#00ff34 0px,#00ff7b 2.5px,#00ff78 5.5px,#00ff5a 6.5px,#18ff00 7.5px,#90ff00 8.5px,#00ff0c 9.5px,#00ff65 10.5px,#00ff7b 12.5px,#00ff7a 36.5px,#00ff4d 38.5px,#00ff7a 40.5px,#00ff73 50.5px,#00ff60 51.5px,#00ff83 54.5px,#00ffc7 93.5px,#00ffb3 99.5px,#00ff9e 101.5px,#00ffa9 103.5px,#00ffa2 106.5px,#00ff7e 107.5px,#00ff7e 111.5px,#00ffa2 112.5px,#00ffa2 116.5px,#00ff7e 117.5px,#00ff7e 121.5px,#00ffa2 122.5px,#00ffa2 126.5px,#00ff7e 127.5px,#00ff7e 131.5px,#00ffa2 132.5px,#00ffa2 136.5px,#00ff7e 137.5px,#fffc00 138.5px,#fffc00 142.5px,#00ffa2 143.5px,#00ffa2 146.5px,#00ff7e 147.5px,#00ff7a 151.5px,#00ff9d 152.5px,#00ff8e 156.5px,#0f6 157.5px,#00ff5b 161.5px,#00ff7d 162.5px,#00ff64 164.5px,#00ff7d 166.5px,#00ff59 167.5px,#00ff59 172px)"></i><i style="left:319px;width:1px;background:linear-gradient(#00ff2e 0px,#00ff2e 2.5px,#00ff7b 4.5px,#00ff78 5.5px,#00ff5a 6.5px,#18ff00 7.5px,#90ff00 8.5px,#00ff0c 9.5px,#00ff65 10.5px,#00ff7b 12.5px,#00ff7a 36.5px,#00ff4c 38.5px,#00ff7a 40.5px,#00ff72 50.5px,#00ff60 51.5px,#00ff83 54.5px,#00ffc4 93.5px,#00ffb1 106.5px,#00ff8c 108.5px,#00ff7c 111.5px,#00ffa0 112.5px,#00ffa0 116.5px,#00ff7c 117.5px,#00ff7c 121.5px,#00ffa0 122.5px,#00ffa0 126.5px,#00ff7c 127.5px,#00ff7c 131.5px,#00ffa0 132.5px,#00ffa0 136.5px,#00ff7c 137.5px,#fffc00 138.5px,#fffc00 142.5px,#00ffa0 143.5px,#00ffa0 146.5px,#00ff7c 147.5px,#00ff79 151.5px,#00ff9a 152.5px,#00ff8c 156.5px,#00ff64 157.5px,#00ff59 161.5px,#00ff7a 162.5px,#00ff62 164.5px,#00ff7a 166.5px,#00ff58 167.5px,#00ff58 172px)"></i><i style="left:320px;width:1px;background:linear-gradient(#00ff63 0px,#00ff3a 1.5px,#00ff2e 4.5px,#00ff58 6.5px,#18ff00 7.5px,#90ff00 8.5px,#00ff0c 9.5px,#00ff65 10.5px,#00ff7b 12.5px,#00ff7a 36.5px,#00ff4c 38.5px,#00ff7a 40.5px,#00ff72 50.5px,#00ff60 51.5px,#00ff82 54.5px,#00ffc3 93.5px,#0fb 108.5px,#00ffa1 111.5px,#00ffa1 115.5px,#00ffa0 116.5px,#00ff7c 117.5px,#00ff7c 121.5px,#00ff9f 122.5px,#00ff9f 126.5px,#00ff7c 127.5px,#00ff7c 131.5px,#00ff9f 132.5px,#00ff9f 136.5px,#00ff7c 137.5px,#fffc00 138.5px,#fffc00 142.5px,#00ff9f 143.5px,#00ff9f 146.5px,#00ff7c 147.5px,#00ff79 151.5px,#00ff9a 152.5px,#00ff8b 156.5px,#00ff64 157.5px,#00ff59 161.5px,#00ff7a 162.5px,#00ff62 164.5px,#00ff7a 166.5px,#00ff58 167.5px,#00ff58 172px)"></i><i style="left:321px;width:1px;background:linear-gradient(#00ff7b 0px,#00ff6a 2.5px,#00ff2e 4.5px,#00ff2e 6.5px,#18ff00 7.5px,#90ff00 8.5px,#00ff0c 9.5px,#00ff65 10.5px,#00ff7b 12.5px,#00ff7a 36.5px,#00ff4c 38.5px,#00ff7a 40.5px,#00ff72 50.5px,#00ff60 51.5px,#00ff83 54.5px,#00ffc5 93.5px,#00ffba 115.5px,#00ff7d 121.5px,#00ffa1 122.5px,#00ffa1 126.5px,#00ff7d 127.5px,#00ff7d 131.5px,#00ffa1 132.5px,#00ffa1 136.5px,#00ff7d 137.5px,#fffc00 138.5px,#fffc00 142.5px,#00ffa1 143.5px,#00ffa1 146.5px,#00ff7d 147.5px,#00ff7a 151.5px,#00ff9b 152.5px,#00ff8d 156.5px,#00ff65 157.5px,#00ff5a 161.5px,#00ff7b 162.5px,#00ff63 164.5px,#00ff7b 166.5px,#00ff58 167.5px,#00ff58 172px)"></i><i style="left:322px;width:1px;background:linear-gradient(#00ff7b 0px,#00ff70 4.5px,#00ff2e 6.5px,#18ff00 7.5px,#90ff00 8.5px,#00ff0c 9.5px,#00ff59 10.5px,#00ff79 11.5px,#00ff7a 36.5px,#00ff4d 38.5px,#00ff7a 40.5px,#00ff73 50.5px,#00ff60 51.5px,#00ff83 54.5px,#00ffc6 93.5px,#0fb 119.5px,#00ffa8 121.5px,#00ffa3 126.5px,#00ff7d 127.5px,#00ff7d 131.5px,#00ffa2 132.5px,#00ffa2 136.5px,#00ff7d 137.5px,#fffc00 138.5px,#fffc00 142.5px,#00ffa2 143.5px,#00ffa2 146.5px,#00ff7d 147.5px,#00ff7a 151.5px,#00ff9c 152.5px,#00ff8e 156.5px,#0f6 157.5px,#00ff5a 161.5px,#00ff7c 162.5px,#00ff64 164.5px,#00ff7c 166.5px,#00ff59 167.5px,#00ff59 172px)"></i><i style="left:323px;width:1px;background:linear-gradient(#00ff7b 0px,#00ff78 5.5px,#00ff58 6.5px,#18ff00 7.5px,#90ff00 8.5px,#00ff0c 9.5px,#00ff7b 13.5px,#00ff7a 36.5px,#00ff4c 38.5px,#00ff7a 40.5px,#00ff72 50.5px,#00ff5f 51.5px,#00ff82 54.5px,#00ffc1 93.5px,#00ffb4 126.5px,#00ff7d 131.5px,#00ff9e 132.5px,#00ff9e 136.5px,#00ff7b 137.5px,#fffc00 138.5px,#fffc00 142.5px,#00ff9e 143.5px,#00ff9e 146.5px,#00ff7b 147.5px,#00ff78 151.5px,#0f9 152.5px,#00ff8a 156.5px,#00ff63 157.5px,#00ff58 161.5px,#00ff79 162.5px,#00ff60 164.5px,#00ff78 166.5px,#00ff57 167.5px,#00ff57 172px)"></i><i style="left:324px;width:1px;background:linear-gradient(#00ff7b 0px,#00ff78 5.5px,#00ff5a 6.5px,#18ff00 7.5px,#90ff00 8.5px,#00ff0c 9.5px,#00ff2e 10.5px,#00ff2e 11.5px,#9bff00 12.5px,#9bff00 13.5px,#00ff02 14.5px,#00ff7b 15.5px,#00ff7a 36.5px,#00ff4c 38.5px,#00ff7a 40.5px,#00ff71 50.5px,#00ff5e 51.5px,#00ff81 54.5px,#00ffbc 94.5px,#00ffb5 129.5px,#00ff9c 136.5px,#00ff79 137.5px,#fffc00 138.5px,#fffc00 142.5px,#00ff9b 143.5px,#00ff9b 146.5px,#00ff79 147.5px,#00ff76 151.5px,#00ff95 152.5px,#00ff87 156.5px,#00ff61 157.5px,#00ff56 161.5px,#00ff75 162.5px,#00ff5d 164.5px,#00ff75 166.5px,#0f5 167.5px,#0f5 172px)"></i><i style="left:325px;width:1px;background:linear-gradient(#00ff7b 0px,#00ff78 5.5px,#00ff5a 6.5px,#18ff00 7.5px,#90ff00 8.5px,#00ff0c 9.5px,#00ff65 10.5px,#00ff5b 11.5px,#9bff00 12.5px,#9bff00 14.5px,#00ff2e 15.5px,#00ff7b 17.5px,#00ff7a 36.5px,#00ff4c 38.5px,#00ff7a 40.5px,#00ff72 50.5px,#00ff5f 51.5px,#00ff82 54.5px,#00ffc2 93.5px,#00ffb7 136.5px,#00ffa3 137.5px,#fffc00 138.5px,#fffc00 142.5px,#00ff9f 143.5px,#00ff9f 146.5px,#00ff7c 147.5px,#00ff79 151.5px,#0f9 152.5px,#00ff8b 156.5px,#00ff64 157.5px,#00ff59 161.5px,#00ff79 162.5px,#00ff61 164.5px,#00ff79 166.5px,#00ff57 167.5px,#00ff58 172px)"></i><i style="left:326px;width:1px;background:linear-gradient(#00ff7b 0px,#00ff78 5.5px,#00ff5a 6.5px,#18ff00 7.5px,#90ff00 8.5px,#00ff0c 9.5px,#00ff65 10.5px,#00ff7b 12.5px,#16ff00 13.5px,#00ff3a 14.5px,#00ff2e 15.5px,#9bff00 16.5px,#97ff00 17.5px,#00ff1c 18.5px,#0f7 19.5px,#00ff7a 36.5px,#00ff4d 38.5px,#00ff7a 40.5px,#00ff73 50.5px,#00ff61 51.5px,#00ff84 54.5px,#00ffca 93.5px,#00ffca 137.5px,#fffc00 138.5px,#fffc00 142.5px,#00ffb5 143.5px,#00ffa8 146.5px,#00ff80 147.5px,#00ff7c 151.5px,#00ff9f 152.5px,#00ff90 156.5px,#00ff67 157.5px,#00ff5c 161.5px,#00ff7f 162.5px,#0f6 164.5px,#00ff7f 166.5px,#00ff5b 167.5px,#00ff5b 172px)"></i><i style="left:327px;width:1px;background:linear-gradient(#00ff7b 0px,#00ff78 5.5px,#00ff5a 6.5px,#18ff00 7.5px,#90ff00 8.5px,#00ff0c 9.5px,#00ff65 10.5px,#00ff7b 12.5px,#00ff7b 14.5px,#32ff00 15.5px,#9bff00 16.5px,#9bff00 17.5px,#00ff2e 18.5px,#00ff2e 19.5px,#00ff71 21.5px,#00ff7a 36.5px,#00ff4d 38.5px,#00ff7a 40.5px,#00ff73 50.5px,#00ff61 51.5px,#00ff84 54.5px,#0fc 92.5px,#0fc 137.5px,#fffc00 138.5px,#fffc00 142.5px,#0fc 143.5px,#00ffb0 147.5px,#00ff85 151.5px,#00ffa2 152.5px,#00ff92 156.5px,#00ff68 157.5px,#00ff5d 161.5px,#00ff80 162.5px,#00ff68 164.5px,#00ff80 166.5px,#00ff5b 167.5px,#00ff5c 172px)"></i><i style="left:328px;width:1px;background:linear-gradient(#00ff7b 0px,#00ff78 5.5px,#00ff5a 6.5px,#18ff00 7.5px,#90ff00 8.5px,#00ff0c 9.5px,#00ff65 10.5px,#00ff7b 12.5px,#00ff7b 15.5px,#00ff63 16.5px,#00ff71 17.5px,#00ff2e 19.5px,#9bff00 20.5px,#69ff00 21.5px,#00ff30 22.5px,#00ff6a 23.5px,#00ff7b 26.5px,#00ff7a 36.5px,#00ff4d 38.5px,#00ff7a 40.5px,#00ff73 50.5px,#00ff60 51.5px,#00ff83 54.5px,#00ffc7 93.5px,#00ffc7 137.5px,#fffc00 138.5px,#fffc00 142.5px,#00ffc7 143.5px,#00ffb4 152.5px,#00ff93 156.5px,#00ff69 157.5px,#00ff5a 161.5px,#00ff7c 162.5px,#00ff64 164.5px,#00ff7c 166.5px,#00ff59 167.5px,#00ff59 172px)"></i><i style="left:329px;width:1px;background:linear-gradient(#00ff7b 0px,#00ff78 5.5px,#00ff5a 6.5px,#18ff00 7.5px,#90ff00 8.5px,#00ff0c 9.5px,#00ff65 10.5px,#00ff7b 12.5px,#00ff7b 18.5px,#71ff00 19.5px,#9bff00 20.5px,#9bff00 21.5px,#00ff2e 22.5px,#00ff3a 24.5px,#00ff7b 26.5px,#00ff7a 36.5px,#00ff4d 38.5px,#00ff7a 40.5px,#00ff72 50.5px,#00ff60 51.5px,#00ff83 54.5px,#00ffc6 93.5px,#00ffc6 137.5px,#fffc00 138.5px,#fffc00 142.5px,#00ffc6 143.5px,#00ffb2 155.5px,#00ff65 161.5px,#00ff7e 162.5px,#00ff63 164.5px,#00ff7c 166.5px,#00ff59 167.5px,#00ff59 172px)"></i><i style="left:330px;width:1px;background:linear-gradient(#00ff7b 0px,#00ff78 5.5px,#00ff5a 6.5px,#18ff00 7.5px,#90ff00 8.5px,#00ff0c 9.5px,#00ff65 10.5px,#00ff7b 12.5px,#00ff7b 19.5px,#00ff3b 20.5px,#00ff7b 21.5px,#00ff2e 23.5px,#9bff00 24.5px,#3cff00 25.5px,#00ff35 26.5px,#00ff65 27.5px,#00ff7b 29.5px,#00ff7a 36.5px,#00ff4c 38.5px,#00ff7a 40.5px,#00ff72 50.5px,#00ff5f 51.5px,#00ff82 54.5px,#00ffc1 93.5px,#00ffc1 137.5px,#fffc00 138.5px,#fffc00 142.5px,#00ffc1 143.5px,#00ffa6 158.5px,#00ff82 163.5px,#00ff70 164.5px,#00ff7f 166.5px,#00ff5d 167.5px,#00ff57 172px)"></i><i style="left:331px;width:1px;background:linear-gradient(#00ff7b 0px,#00ff78 5.5px,#00ff5a 6.5px,#18ff00 7.5px,#90ff00 8.5px,#00ff0c 9.5px,#00ff65 10.5px,#00ff7b 12.5px,#00ff7b 22.5px,#9bff00 23.5px,#9bff00 25.5px,#00ff2e 26.5px,#00ff41 28.5px,#00ff71 29.5px,#00ff7a 36.5px,#00ff4c 38.5px,#00ff7a 40.5px,#00ff72 50.5px,#00ff5f 51.5px,#00ff82 54.5px,#00ffbf 94.5px,#00ffbf 137.5px,#fffc00 138.5px,#fffc00 142.5px,#00ffbf 143.5px,#00ffa4 158.5px,#00ff8e 163.5px,#00ff8c 165.5px,#00ff8a 167.5px,#00ff65 172px)"></i><i style="left:332px;width:1px;background:linear-gradient(#00ff7b 0px,#00ff78 5.5px,#00ff5a 6.5px,#18ff00 7.5px,#90ff00 8.5px,#00ff0c 9.5px,#00ff65 10.5px,#00ff7b 12.5px,#00ff7b 23.5px,#00ff12 24.5px,#00ff7b 25.5px,#00ff59 26.5px,#9bff00 27.5px,#9bff00 28.5px,#13ff00 29.5px,#00ff4d 30.5px,#00ff7b 31.5px,#00ff7a 36.5px,#00ff4c 38.5px,#00ff7a 40.5px,#00ff71 50.5px,#00ff5f 51.5px,#00ff81 54.5px,#00ffbe 94.5px,#00ffb1 154.5px,#00ff8d 163.5px,#00ff80 164.5px,#00ff9a 168.5px,#00ff92 172px)"></i><i style="left:333px;width:1px;background:linear-gradient(#00ff7b 0px,#00ff78 5.5px,#00ff5a 6.5px,#18ff00 7.5px,#90ff00 8.5px,#00ff0c 9.5px,#00ff65 10.5px,#00ff7b 12.5px,#00ff7b 25.5px,#03ff00 26.5px,#9bff00 27.5px,#9bff00 28.5px,#00ff2e 29.5px,#00ff2e 31.5px,#00ff7b 33.5px,#00ff6a 37.5px,#00ff4c 38.5px,#00ff7a 40.5px,#00ff72 50.5px,#00ff5f 51.5px,#00ff82 54.5px,#00ffc1 93.5px,#00ffb5 154.5px,#00ff90 163.5px,#00ff83 164.5px,#00ff9d 168.5px,#00ff9d 172px)"></i><i style="left:334px;width:1px;background:linear-gradient(#00ff7b 0px,#00ff78 5.5px,#00ff5a 6.5px,#18ff00 7.5px,#90ff00 8.5px,#00ff0c 9.5px,#00ff65 10.5px,#00ff7b 12.5px,#00ff7b 27.5px,#2f0 28.5px,#00ff71 29.5px,#00ff41 30.5px,#9bff00 31.5px,#89ff00 32.5px,#00ff12 33.5px,#00ff65 34.5px,#00ff7a 36.5px,#00ff4c 38.5px,#00ff7a 40.5px,#00ff72 50.5px,#00ff60 51.5px,#00ff82 54.5px,#00ffc3 93.5px,#00ffb7 154.5px,#00ff92 163.5px,#00ff85 164.5px,#00ff9f 168.5px,#00ff9f 172px)"></i><i style="left:335px;width:1px;background:linear-gradient(#00ff7b 0px,#00ff78 5.5px,#00ff5a 6.5px,#18ff00 7.5px,#90ff00 8.5px,#00ff0c 9.5px,#00ff65 10.5px,#00ff7b 12.5px,#00ff7b 29.5px,#41ff00 30.5px,#9bff00 31.5px,#9bff00 32.5px,#00ff2e 33.5px,#00ff41 35.5px,#00ff71 36.5px,#00ff4c 38.5px,#00ff7a 40.5px,#00ff72 50.5px,#00ff60 51.5px,#00ff83 54.5px,#00ffc4 93.5px,#00ffb8 154.5px,#00ff93 163.5px,#00ff86 164.5px,#00ffa0 168.5px,#00ffa0 172px)"></i><i style="left:336px;width:1px;background:linear-gradient(#00ff7b 0px,#00ff78 5.5px,#00ff5a 6.5px,#18ff00 7.5px,#90ff00 8.5px,#00ff0c 9.5px,#00ff65 10.5px,#00ff7b 12.5px,#00ff7b 30.5px,#00ff57 31.5px,#00ff7b 32.5px,#00ff2e 34.5px,#9bff00 35.5px,#62ff00 36.5px,#00ff39 37.5px,#00ff7a 40.5px,#00ff72 50.5px,#00ff5f 51.5px,#00ff82 54.5px,#00ffc2 93.5px,#00ffb6 154.5px,#00ff91 163.5px,#00ff84 164.5px,#00ff9e 168.5px,#00ff9e 172px)"></i><i style="left:337px;width:1px;background:linear-gradient(#00ff7b 0px,#00ff78 5.5px,#00ff5a 6.5px,#18ff00 7.5px,#90ff00 8.5px,#00ff0c 9.5px,#00ff65 10.5px,#00ff7b 12.5px,#00ff7b 33.5px,#7fff00 34.5px,#9bff00 35.5px,#9bff00 36.5px,#00ff2e 37.5px,#00ff2e 38.5px,#00ff7a 40.5px,#00ff72 50.5px,#00ff5f 51.5px,#00ff82 54.5px,#00ffc0 93.5px,#00ffb4 154.5px,#00ff8f 163.5px,#00ff82 164.5px,#00ff9c 168.5px,#00ff9c 172px)"></i><i style="left:338px;width:1px;background:linear-gradient(#00ff7b 0px,#00ff78 5.5px,#00ff5a 6.5px,#18ff00 7.5px,#90ff00 8.5px,#00ff0c 9.5px,#00ff65 10.5px,#00ff7b 12.5px,#00ff7b 34.5px,#00ff34 35.5px,#00ff71 36.5px,#00ff3d 37.5px,#9bff00 38.5px,#9bff00 39.5px,#35ff00 40.5px,#00ff65 41.5px,#00ff7b 43.5px,#00ff72 50.5px,#00ff5f 51.5px,#00ff82 54.5px,#00ffc2 93.5px,#00ffb6 154.5px,#00ff91 163.5px,#00ff84 164.5px,#00ff9e 168.5px,#00ff9e 172px)"></i><i style="left:339px;width:1px;background:linear-gradient(#00ff7b 0px,#00ff78 5.5px,#00ff5a 6.5px,#18ff00 7.5px,#90ff00 8.5px,#00ff0c 9.5px,#00ff65 10.5px,#00ff7b 12.5px,#00ff7a 36.5px,#00ff18 37.5px,#9bff00 38.5px,#9bff00 40.5px,#00ff2e 41.5px,#00ff7b 44.5px,#00ff72 50.5px,#00ff5f 51.5px,#00ff82 54.5px,#00ffc3 93.5px,#00ffb6 154.5px,#00ff92 163.5px,#00ff85 164.5px,#00ff9f 168.5px,#00ff9f 172px)"></i><i style="left:340px;width:1px;background:linear-gradient(#00ff7b 0px,#00ff78 5.5px,#00ff5a 6.5px,#18ff00 7.5px,#90ff00 8.5px,#00ff0c 9.5px,#00ff65 10.5px,#00ff7b 12.5px,#00ff7a 36.5px,#00ff4c 38.5px,#00ff08 39.5px,#00ff59 40.5px,#00ff2e 41.5px,#9bff00 42.5px,#9bff00 43.5px,#78ff00 44.5px,#00ff7b 45.5px,#00ff72 50.5px,#00ff5f 51.5px,#00ff82 54.5px,#00ffc2 93.5px,#00ffb6 154.5px,#00ff91 163.5px,#00ff84 164.5px,#00ff9e 168.5px,#00ff9e 172px)"></i><i style="left:341px;width:1px;background:linear-gradient(#00ff7b 0px,#00ff78 5.5px,#00ff5a 6.5px,#18ff00 7.5px,#90ff00 8.5px,#00ff0c 9.5px,#00ff65 10.5px,#00ff7b 12.5px,#00ff7a 36.5px,#00ff4c 38.5px,#00ff7a 40.5px,#00ff1e 41.5px,#98ff00 42.5px,#9bff00 43.5px,#00ff2e 44.5px,#00ff2e 45.5px,#00ff5a 46.5px,#00ff07 47.5px,#00ff7c 48.5px,#00ff5f 51.5px,#00ff82 54.5px,#00ffc3 93.5px,#00ffb6 154.5px,#00ff92 163.5px,#00ff85 164.5px,#00ff9e 168.5px,#00ff9e 172px)"></i><i style="left:342px;width:1px;background:linear-gradient(#00ff7b 0px,#00ff78 5.5px,#00ff5a 6.5px,#18ff00 7.5px,#90ff00 8.5px,#00ff0c 9.5px,#00ff65 10.5px,#00ff7b 12.5px,#00ff7a 36.5px,#00ff4d 38.5px,#00ff7a 40.5px,#00ff72 43.5px,#00ff42 44.5px,#00ff2e 45.5px,#9bff00 46.5px,#9bff00 48.5px,#00ff7c 49.5px,#00ff60 51.5px,#00ff83 54.5px,#00ffc7 93.5px,#00ffba 154.5px,#00ff96 163.5px,#00ff89 164.5px,#00ffa2 168.5px,#00ffa2 172px)"></i><i style="left:343px;width:1px;background:linear-gradient(#00ff7b 0px,#00ff78 5.5px,#00ff5a 6.5px,#18ff00 7.5px,#90ff00 8.5px,#00ff0c 9.5px,#00ff65 10.5px,#00ff7b 12.5px,#00ff7a 36.5px,#00ff4d 38.5px,#00ff7a 40.5px,#00ff7b 44.5px,#0f6 45.5px,#2bff00 46.5px,#9bff00 47.5px,#00ff2e 48.5px,#00ff42 50.5px,#98ff00 51.5px,#00ff1b 52.5px,#00ff81 53.5px,#00ffc8 92.5px,#00ffbc 154.5px,#00ff97 163.5px,#00ff8a 164.5px,#00ffa4 168.5px,#00ffa4 172px)"></i><i style="left:344px;width:1px;background:linear-gradient(#00ff7b 0px,#00ff78 5.5px,#00ff5a 6.5px,#18ff00 7.5px,#90ff00 8.5px,#00ff0c 9.5px,#00ff65 10.5px,#00ff7b 12.5px,#00ff7a 36.5px,#00ff4d 38.5px,#00ff7a 40.5px,#00ff7b 46.5px,#00ff2e 49.5px,#9bff00 50.5px,#9bff00 52.5px,#00ff5a 53.5px,#00ff82 54.5px,#00ffc9 92.5px,#00ffbd 154.5px,#00ff98 163.5px,#00ff8b 164.5px,#00ffa5 168.5px,#00ffa5 172px)"></i><i style="left:345px;width:1px;background:linear-gradient(#00ff7b 0px,#00ff78 5.5px,#00ff5a 6.5px,#18ff00 7.5px,#90ff00 8.5px,#00ff0c 9.5px,#00ff65 10.5px,#00ff7b 12.5px,#00ff7a 36.5px,#00ff4d 38.5px,#00ff7a 40.5px,#00ff7c 49.5px,#00ff3f 50.5px,#49ff00 51.5px,#00ff2e 52.5px,#00ff2e 54.5px,#00ff89 57.5px,#00ffcd 93.5px,#00ffc1 154.5px,#00ff9c 163.5px,#00ff8f 164.5px,#00ffa9 168.5px,#00ffa9 172px)"></i><i style="left:346px;width:1px;background:linear-gradient(#00ff7b 0px,#00ff78 5.5px,#00ff5a 6.5px,#18ff00 7.5px,#90ff00 8.5px,#00ff0c 9.5px,#00ff65 10.5px,#00ff7b 12.5px,#00ff7a 36.5px,#00ff4d 38.5px,#00ff7a 40.5px,#00ff73 50.5px,#00ff64 52.5px,#00ff2e 54.5px,#0f3 57.5px,#00ff8b 59.5px,#00ffcb 93.5px,#00ffbf 154.5px,#00ff9a 163.5px,#00ff9a 165.5px,#00ffa7 172px)"></i><i style="left:347px;width:1px;background:linear-gradient(#00ff7b 0px,#00ff78 5.5px,#00ff5a 6.5px,#18ff00 7.5px,#90ff00 8.5px,#00ff0c 9.5px,#00ff65 10.5px,#00ff7b 12.5px,#00ff7a 36.5px,#00ff4d 38.5px,#00ff7a 40.5px,#00ff72 50.5px,#00ff5f 51.5px,#00ff81 54.5px,#0f3 56.5px,#00ff2e 59.5px,#00ff90 62.5px,#00ffc6 94.5px,#0fb 154.5px,#00ff96 163.5px,#00ff89 164.5px,#00ffa3 168.5px,#00ffa3 172px)"></i><i style="left:348px;width:1px;background:linear-gradient(#00ff7b 0px,#00ff78 5.5px,#00ff5a 6.5px,#18ff00 7.5px,#90ff00 8.5px,#00ff0c 9.5px,#00ff65 10.5px,#00ff7b 12.5px,#00ff7a 36.5px,#00ff4c 38.5px,#00ff7a 40.5px,#00ff72 50.5px,#00ff5f 51.5px,#00ff81 54.5px,#00ff83 56.5px,#00ff2e 59.5px,#00ff3e 63.5px,#00ff93 67.5px,#00ffc1 95.5px,#00ffb6 154.5px,#00ff91 163.5px,#00ff84 164.5px,#00ff9e 168.5px,#00ff9e 172px)"></i><i style="left:349px;width:1px;background:linear-gradient(#00ff7b 0px,#00ff78 5.5px,#00ff5a 6.5px,#18ff00 7.5px,#90ff00 8.5px,#00ff0c 9.5px,#00ff65 10.5px,#00ff7b 12.5px,#00ff7a 36.5px,#00ff4c 38.5px,#00ff7a 40.5px,#00ff72 50.5px,#00ff5f 51.5px,#00ff80 54.5px,#00ff86 59.5px,#0f3 61.5px,#00ff3b 69.5px,#00ffa3 74.5px,#00ffc2 106.5px,#00ffb6 154.5px,#00ff92 163.5px,#00ff85 164.5px,#00ff9f 168.5px,#00ff9f 172px)"></i><i style="left:350px;width:1px;background:linear-gradient(#00ff7b 0px,#00ff78 5.5px,#00ff5a 6.5px,#18ff00 7.5px,#90ff00 8.5px,#00ff0c 9.5px,#00ff65 10.5px,#00ff7b 12.5px,#00ff7a 36.5px,#00ff4c 38.5px,#00ff7a 40.5px,#00ff72 50.5px,#00ff5f 51.5px,#00ff80 54.5px,#00ff8a 62.5px,#00ff2e 67.5px,#00ff37 75.5px,#00ffa8 80.5px,#00ffc2 128.5px,#00ffb6 154.5px,#00ff91 163.5px,#00ff84 164.5px,#00ff9e 168.5px,#00ff9e 172px)"></i><i style="left:351px;width:1px;background:linear-gradient(#00ff7b 0px,#00ff78 5.5px,#00ff5a 6.5px,#18ff00 7.5px,#90ff00 8.5px,#00ff0c 9.5px,#00ff65 10.5px,#00ff7b 12.5px,#00ff7a 36.5px,#00ff4c 38.5px,#00ff7a 40.5px,#00ff71 50.5px,#00ff5f 51.5px,#00ff80 54.5px,#00ff8f 68.5px,#00ff32 73.5px,#0f3 81.5px,#0fa 86.5px,#00ffc0 150.5px,#00ff91 163.5px,#00ff84 164.5px,#00ff9d 168.5px,#00ff9d 172px)"></i><i style="left:352px;width:1px;background:linear-gradient(#00ff7b 0px,#00ff78 5.5px,#00ff5a 6.5px,#18ff00 7.5px,#90ff00 8.5px,#00ff0c 9.5px,#00ff65 10.5px,#00ff7b 12.5px,#00ff7a 36.5px,#00ff4d 38.5px,#00ff7a 40.5px,#00ff72 50.5px,#00ff60 51.5px,#00ff81 54.5px,#00ff8a 75.5px,#00ff2e 80.5px,#00ff2e 87.5px,#00ffac 92.5px,#00ffc7 150.5px,#00ff97 163.5px,#00ff8a 164.5px,#00ffa4 168.5px,#00ffa4 172px)"></i><i style="left:353px;width:1px;background:linear-gradient(#00ff7b 0px,#00ff78 5.5px,#00ff5a 6.5px,#18ff00 7.5px,#90ff00 8.5px,#00ff0c 9.5px,#00ff65 10.5px,#00ff7b 12.5px,#00ff7a 36.5px,#00ff4d 38.5px,#00ff7a 40.5px,#00ff73 50.5px,#00ff60 51.5px,#00ff82 54.5px,#00ff8d 81.5px,#00ff2e 86.5px,#00ff38 94.5px,#0fa 101.5px,#00ffcb 148.5px,#00ff9a 163.5px,#00ff8d 164.5px,#00ffa7 168.5px,#00ffa7 172px)"></i><i style="left:354px;width:1px;background:linear-gradient(#00ff7b 0px,#00ff78 5.5px,#00ff5a 6.5px,#18ff00 7.5px,#90ff00 8.5px,#00ff0c 9.5px,#00ff65 10.5px,#00ff7b 12.5px,#00ff7a 36.5px,#00ff4d 38.5px,#00ff7a 40.5px,#00ff72 50.5px,#00ff60 51.5px,#00ff82 54.5px,#00ff89 87.5px,#00ff2e 92.5px,#00ff2f 102.5px,#00ffa4 109.5px,#00ffc9 144.5px,#00ffa4 162.5px,#00ff8c 164.5px,#00ffa5 168.5px,#00ffa5 172px)"></i><i style="left:355px;width:1px;background:linear-gradient(#00ff7b 0px,#00ff78 5.5px,#00ff5a 6.5px,#18ff00 7.5px,#90ff00 8.5px,#00ff0c 9.5px,#00ff65 10.5px,#00ff7b 12.5px,#00ff7a 36.5px,#00ff4c 38.5px,#00ff7a 40.5px,#00ff71 50.5px,#00ff5f 51.5px,#00ff80 54.5px,#00ff7d 93.5px,#00ff2e 101.5px,#00ff36 111.5px,#00ff9e 118.5px,#00ffc1 142.5px,#0fa 157.5px,#00ff90 163.5px,#00ff83 164.5px,#00ff9d 168.5px,#00ff9d 172px)"></i><i style="left:356px;width:1px;background:linear-gradient(#00ff7b 0px,#00ff78 5.5px,#00ff5a 6.5px,#18ff00 7.5px,#90ff00 8.5px,#00ff0c 9.5px,#00ff65 10.5px,#00ff7b 12.5px,#00ff7a 36.5px,#00ff4c 38.5px,#00ff7a 40.5px,#00ff71 50.5px,#00ff5e 51.5px,#00ff7f 54.5px,#00ff79 85.5px,#00ff62 103.5px,#00ff2e 110.5px,#00ff2f 119.5px,#00ffa2 127.5px,#00ffbd 144.5px,#00ff97 162.5px,#00ff7f 164.5px,#0f9 168.5px,#0f9 172px)"></i><i style="left:357px;width:1px;background:linear-gradient(#00ff7b 0px,#00ff78 5.5px,#00ff5a 6.5px,#18ff00 7.5px,#90ff00 8.5px,#00ff0c 9.5px,#00ff65 10.5px,#00ff7b 12.5px,#00ff7a 36.5px,#00ff4c 38.5px,#00ff7a 40.5px,#00ff71 50.5px,#00ff5e 51.5px,#00ff7f 54.5px,#00ff78 84.5px,#00ff59 112.5px,#00ff2e 119.5px,#00ff36 127.5px,#00ff9c 129.5px,#0fb 142.5px,#00ffa3 157.5px,#00ff8a 163.5px,#00ff7d 164.5px,#00ff97 168.5px,#00ff97 172px)"></i><i style="left:358px;width:1px;background:linear-gradient(#00ff7b 0px,#00ff78 5.5px,#00ff5a 6.5px,#18ff00 7.5px,#90ff00 8.5px,#00ff0c 9.5px,#00ff65 10.5px,#00ff7b 12.5px,#00ff7a 36.5px,#00ff4c 38.5px,#00ff7a 40.5px,#00ff71 50.5px,#00ff5e 51.5px,#00ff80 54.5px,#00ff7b 83.5px,#00ff58 111.5px,#00ff5b 120.5px,#00ff2e 128.5px,#00ff31 129.5px,#00ff9e 131.5px,#00ffc0 143.5px,#00ffa5 158.5px,#00ff8f 163.5px,#00ff8f 165.5px,#00ff9c 172px)"></i><i style="left:359px;width:1px;background:linear-gradient(#00ff7b 0px,#00ff78 5.5px,#00ff5a 6.5px,#18ff00 7.5px,#90ff00 8.5px,#00ff0c 9.5px,#00ff65 10.5px,#00ff7b 12.5px,#00ff7a 36.5px,#00ff4d 38.5px,#00ff7a 40.5px,#00ff72 50.5px,#00ff60 51.5px,#00ff82 54.5px,#00ff82 81.5px,#00ff4e 112.5px,#00ff6b 126.5px,#00ff2e 129.5px,#00ff2e 131.5px,#00ffa4 133.5px,#00ffc9 144.5px,#00ffab 159.5px,#00ff8c 164.5px,#00ffa5 168.5px,#00ffa5 172px)"></i><i style="left:360px;width:1px;background:linear-gradient(#00ff7b 0px,#00ff78 5.5px,#00ff5a 6.5px,#18ff00 7.5px,#90ff00 8.5px,#00ff0c 9.5px,#00ff65 10.5px,#00ff7b 12.5px,#00ff7a 36.5px,#00ff4d 38.5px,#00ff7a 40.5px,#00ff73 50.5px,#00ff60 51.5px,#00ff82 54.5px,#00ff83 81.5px,#00ff47 113.5px,#00ff5b 129.5px,#00ff2e 131.5px,#00ff2e 133.5px,#00ffa6 135.5px,#00ffcb 147.5px,#00ff9b 163.5px,#00ff8e 164.5px,#00ffa8 168.5px,#00ffa8 172px)"></i><i style="left:361px;width:1px;background:linear-gradient(#00ff7b 0px,#00ff78 5.5px,#00ff5a 6.5px,#18ff00 7.5px,#90ff00 8.5px,#00ff0c 9.5px,#00ff65 10.5px,#00ff7b 12.5px,#00ff7a 36.5px,#00ff4d 38.5px,#00ff7a 40.5px,#00ff72 50.5px,#00ff60 51.5px,#00ff81 54.5px,#00ff81 81.5px,#00ff42 115.5px,#00ff5b 129.5px,#00ff5c 131.5px,#00ff2e 133.5px,#00ff2e 135.5px,#00ffa0 137.5px,#00ffc7 148.5px,#00ff97 163.5px,#00ff8a 164.5px,#00ffa4 168.5px,#00ffa4 172px)"></i><i style="left:362px;width:1px;background:linear-gradient(#00ff7b 0px,#00ff78 5.5px,#00ff5a 6.5px,#18ff00 7.5px,#90ff00 8.5px,#00ff0c 9.5px,#00ff65 10.5px,#00ff7b 12.5px,#00ff7a 36.5px,#00ff4c 38.5px,#00ff7a 40.5px,#00ff72 50.5px,#00ff5f 51.5px,#00ff80 54.5px,#00ff7e 81.5px,#00ff3f 116.5px,#00ff59 131.5px,#00ff5d 133.5px,#00ff2e 135.5px,#00ff2e 137.5px,#00ff95 139.5px,#00ffc0 148.5px,#00ff91 163.5px,#00ff84 164.5px,#00ff9e 168.5px,#00ff9e 172px)"></i><i style="left:363px;width:1px;background:linear-gradient(#00ff7b 0px,#00ff78 5.5px,#00ff5a 6.5px,#18ff00 7.5px,#90ff00 8.5px,#00ff0c 9.5px,#00ff65 10.5px,#00ff7b 12.5px,#00ff7a 36.5px,#00ff4c 38.5px,#00ff7a 40.5px,#00ff72 50.5px,#00ff5f 51.5px,#00ff80 54.5px,#00ff7d 82.5px,#00ff3d 116.5px,#00ff53 132.5px,#00ff5f 135.5px,#00ff2e 137.5px,#00ff2e 139.5px,#00ff51 140.5px,#00ff8e 141.5px,#0fb 147.5px,#00ff9d 162.5px,#00ff85 164.5px,#00ff9f 168.5px,#00ff9f 172px)"></i><i style="left:364px;width:1px;background:linear-gradient(#00ff7b 0px,#00ff78 5.5px,#00ff5a 6.5px,#18ff00 7.5px,#90ff00 8.5px,#00ff0c 9.5px,#00ff65 10.5px,#00ff7b 12.5px,#00ff7a 36.5px,#00ff4c 38.5px,#00ff7a 40.5px,#00ff72 50.5px,#00ff5f 51.5px,#00ff80 54.5px,#00ff7d 82.5px,#00ff3c 116.5px,#00ff52 134.5px,#00ff61 137.5px,#00ff2e 139.5px,#00ff2e 141.5px,#00ff4c 142.5px,#0f8 143.5px,#00ffae 146.5px,#00ffb6 154.5px,#00ff92 163.5px,#00ff85 164.5px,#00ff9f 168.5px,#00ff9f 172px)"></i><i style="left:365px;width:1px;background:linear-gradient(#00ff7b 0px,#00ff78 5.5px,#00ff5a 6.5px,#18ff00 7.5px,#90ff00 8.5px,#00ff0c 9.5px,#00ff65 10.5px,#00ff7b 12.5px,#00ff7a 36.5px,#00ff4d 38.5px,#00ff7a 40.5px,#00ff72 50.5px,#00ff5f 51.5px,#00ff81 54.5px,#00ff80 81.5px,#00ff3b 116.5px,#00ff4d 135.5px,#00ff62 139.5px,#00ff2e 141.5px,#00ff2e 143.5px,#00ff48 144.5px,#00ff85 145.5px,#00ffab 147.5px,#00ffb7 155.5px,#00ff97 163.5px,#00ff8a 164.5px,#00ffa4 168.5px,#00ffa4 172px)"></i><i style="left:366px;width:1px;background:linear-gradient(#00ff7b 0px,#00ff78 5.5px,#00ff5a 6.5px,#18ff00 7.5px,#90ff00 8.5px,#00ff0c 9.5px,#00ff65 10.5px,#00ff7b 12.5px,#00ff7a 36.5px,#00ff4d 38.5px,#00ff7a 40.5px,#00ff72 50.5px,#00ff5f 51.5px,#00ff81 54.5px,#00ff80 81.5px,#00ff3a 116.5px,#00ff50 138.5px,#00ff62 141.5px,#00ff2e 143.5px,#00ff2e 145.5px,#00ff43 146.5px,#00ff81 147.5px,#00ffa4 148.5px,#00ffb6 155.5px,#00ff97 163.5px,#00ff8a 164.5px,#00ffa4 168.5px,#00ffa4 172px)"></i><i style="left:367px;width:1px;background:linear-gradient(#00ff79 0px,#00ff78 5.5px,#00ff5a 6.5px,#18ff00 7.5px,#90ff00 8.5px,#00ff0c 9.5px,#00ff65 10.5px,#00ff7b 12.5px,#00ff7a 36.5px,#00ff4d 38.5px,#00ff7a 40.5px,#00ff72 50.5px,#00ff5f 51.5px,#00ff81 54.5px,#00ff80 81.5px,#00ff38 117.5px,#00ff4f 140.5px,#00ff62 143.5px,#00ff2e 145.5px,#00ff3f 148.5px,#00ffa5 150.5px,#00ffaf 157.5px,#00ff97 163.5px,#00ff8a 164.5px,#00ffa4 168.5px,#00ffa4 172px)"></i><i style="left:368px;width:1px;background:linear-gradient(#00ff75 0px,#00ff76 5.5px,#00ff59 6.5px,#18ff00 7.5px,#90ff00 8.5px,#00ff0c 9.5px,#00ff65 10.5px,#00ff7b 12.5px,#00ff7a 36.5px,#00ff4c 38.5px,#00ff7a 40.5px,#00ff72 50.5px,#00ff5f 51.5px,#00ff81 54.5px,#00ff7e 81.5px,#00ff37 116.5px,#00ff4e 142.5px,#00ff61 145.5px,#00ff2e 147.5px,#00ff3b 150.5px,#00ffa4 152.5px,#00ffa2 161.5px,#00ff87 164.5px,#00ffa1 168.5px,#00ffa1 172px)"></i><i style="left:369px;width:1px;background:linear-gradient(#00ff71 0px,#00ff73 5.5px,#00ff56 6.5px,#1aff00 7.5px,#90ff00 8.5px,#00ff0b 9.5px,#00ff64 10.5px,#00ff7a 12.5px,#00ff7a 36.5px,#00ff4c 38.5px,#00ff7a 40.5px,#00ff72 50.5px,#00ff5f 51.5px,#00ff81 54.5px,#00ff7e 81.5px,#00ff36 116.5px,#00ff49 143.5px,#00ff62 147.5px,#00ff30 149.5px,#00ff3c 152.5px,#00ffa1 153.5px,#00ff9f 162.5px,#00ff86 164.5px,#00ffa0 168.5px,#00ffa0 172px)"></i><i style="left:370px;width:1px;background:linear-gradient(#00ff6f 0px,#00ff6f 5.5px,#00ff53 6.5px,#1cff00 7.5px,#90ff00 8.5px,#00ff09 9.5px,#00ff61 10.5px,#0f7 12.5px,#00ff7a 36.5px,#00ff4c 38.5px,#00ff7a 40.5px,#00ff72 50.5px,#00ff5f 51.5px,#00ff80 54.5px,#00ff7d 81.5px,#00ff34 116.5px,#00ff49 145.5px,#0f6 149.5px,#00ff34 151.5px,#00ff2e 152.5px,#00ff9f 154.5px,#00ff9e 162.5px,#00ff86 164.5px,#00ffa0 168.5px,#00ffa0 172px)"></i><i style="left:371px;width:1px;background:linear-gradient(#00ff6e 0px,#00ff6c 5.5px,#00ff50 6.5px,#1eff00 7.5px,#90ff00 8.5px,#00ff07 9.5px,#00ff5d 10.5px,#00ff75 13.5px,#00ff7a 36.5px,#00ff4c 38.5px,#00ff7a 40.5px,#00ff72 50.5px,#00ff5f 51.5px,#00ff81 54.5px,#00ff7d 81.5px,#00ff32 116.5px,#00ff4b 147.5px,#00ff63 150.5px,#00ff58 151.5px,#00ff2e 152.5px,#00ff36 153.5px,#00ff97 154.5px,#00ffa1 161.5px,#00ff86 164.5px,#00ffa0 168.5px,#00ffa0 172px)"></i><i style="left:372px;width:1px;background:linear-gradient(#00ff6e 0px,#00ff6b 5.5px,#00ff4f 6.5px,#1fff00 7.5px,#90ff00 8.5px,#00ff06 9.5px,#00ff5b 10.5px,#00ff71 13.5px,#00ff7a 36.5px,#00ff4c 38.5px,#00ff7a 40.5px,#00ff72 50.5px,#00ff5f 51.5px,#00ff81 54.5px,#00ff7d 81.5px,#00ff30 115.5px,#00ff49 148.5px,#00ff63 151.5px,#00ff34 152.5px,#00ff2e 153.5px,#0f9 155.5px,#00ff9f 162.5px,#00ff87 164.5px,#00ffa1 168.5px,#00ffa1 172px)"></i><i style="left:373px;width:1px;background:linear-gradient(#00ff6e 0px,#00ff6b 5.5px,#00ff4f 6.5px,#1fff00 7.5px,#90ff00 8.5px,#00ff06 9.5px,#00ff5a 10.5px,#00ff6e 12.5px,#00ff7a 36.5px,#00ff4c 38.5px,#00ff7a 40.5px,#00ff72 50.5px,#00ff5f 51.5px,#00ff80 54.5px,#00ff7e 80.5px,#00ff2e 115.5px,#00ff48 149.5px,#00ff52 152.5px,#00ff2e 153.5px,#00ff35 154.5px,#00ff90 155.5px,#00ff9e 162.5px,#00ff85 164.5px,#00ff9f 168.5px,#00ff9f 172px)"></i><i style="left:374px;width:1px;background:linear-gradient(#00ff58 0px,#0f6 5.5px,#00ff4f 6.5px,#1fff00 7.5px,#90ff00 8.5px,#00ff06 9.5px,#00ff5a 10.5px,#00ff6e 12.5px,#00ff7a 36.5px,#00ff4c 38.5px,#00ff7a 40.5px,#00ff72 50.5px,#00ff5f 51.5px,#00ff80 54.5px,#00ff7e 80.5px,#00ff2c 115.5px,#00ff49 150.5px,#00ff5c 152.5px,#0f3 153.5px,#00ff2e 154.5px,#00ff93 156.5px,#00ff9d 162.5px,#00ff91 163.5px,#00ff19 164.5px,#00ff19 165.5px,#00ff9d 166.5px,#00ff9e 172px)"></i><i style="left:375px;width:1px;background:linear-gradient(#00ff57 0px,#00ff4f 6.5px,#1fff00 7.5px,#90ff00 8.5px,#00ff06 9.5px,#00ff57 10.5px,#00ff70 25.5px,#00ff78 36.5px,#00ff4b 38.5px,#00ff7a 40.5px,#00ff72 50.5px,#00ff5f 51.5px,#00ff80 54.5px,#00ff7e 80.5px,#00ff2a 115.5px,#00ff4b 151.5px,#00ff4f 153.5px,#00ff2e 154.5px,#00ff35 155.5px,#00ff8c 156.5px,#00ff9e 162.5px,#00ff93 163.5px,#00ff19 164.5px,#00ff19 165.5px,#00ff9e 166.5px,#00ff9f 172px)"></i><i style="left:376px;width:1px;background:linear-gradient(#00ff6e 0px,#00ff61 5.5px,#00ff4f 6.5px,#1fff00 7.5px,#90ff00 8.5px,#00ff06 9.5px,#00ff57 10.5px,#00ff74 36.5px,#00ff48 38.5px,#00ff78 40.5px,#00ff72 50.5px,#00ff5f 51.5px,#00ff81 54.5px,#00ff7f 80.5px,#00ff27 115.5px,#00ff46 151.5px,#00ff59 153.5px,#0f3 154.5px,#00ff2e 155.5px,#00ff92 157.5px,#00ffa1 162.5px,#00ff89 164.5px,#00ffa3 168.5px,#00ffa3 172px)"></i><i style="left:377px;width:1px;background:linear-gradient(#00ff6e 0px,#00ff6b 5.5px,#00ff4f 6.5px,#1fff00 7.5px,#90ff00 8.5px,#00ff06 9.5px,#00ff5a 10.5px,#00ff6a 12.5px,#00ff58 28.5px,#00ff71 36.5px,#00ff45 38.5px,#00ff74 40.5px,#00ff72 50.5px,#00ff5f 51.5px,#00ff81 54.5px,#00ff7d 80.5px,#00ff25 114.5px,#00ff48 152.5px,#00ff4c 154.5px,#00ff2e 155.5px,#00ff34 156.5px,#00ff89 157.5px,#00ff9e 162.5px,#00ff86 164.5px,#00ffa0 168.5px,#00ffa0 172px)"></i><i style="left:378px;width:1px;background:linear-gradient(#00ff6e 0px,#00ff6b 5.5px,#00ff4f 6.5px,#1fff00 7.5px,#90ff00 8.5px,#00ff06 9.5px,#00ff5a 10.5px,#00ff6e 12.5px,#00ff57 37.5px,#00ff41 38.5px,#00ff65 41.5px,#00ff70 50.5px,#00ff5d 51.5px,#00ff80 54.5px,#00ff7c 80.5px,#0f2 115.5px,#00ff3c 149.5px,#00ff19 150.5px,#00ff19 151.5px,#00ff43 152.5px,#00ff54 154.5px,#00ff32 155.5px,#00ff2e 156.5px,#00ff8b 158.5px,#00ff9b 162.5px,#00ff84 164.5px,#00ff9e 168.5px,#00ff9e 172px)"></i><i style="left:379px;width:1px;background:linear-gradient(#00ff6e 0px,#00ff6b 5.5px,#00ff4f 6.5px,#1fff00 7.5px,#90ff00 8.5px,#00ff06 9.5px,#00ff5a 10.5px,#00ff6e 12.5px,#00ff60 34.5px,#00ff57 37.5px,#00ff40 38.5px,#00ff57 40.5px,#00ff64 50.5px,#00ff59 51.5px,#00ff7d 54.5px,#00ff7d 79.5px,#00ff1f 115.5px,#00ff3c 149.5px,#00ff19 150.5px,#00ff19 151.5px,#00ff3f 152.5px,#00ff49 155.5px,#00ff2e 156.5px,#00ff34 157.5px,#00ff82 158.5px,#00ff98 162.5px,#00ff82 164.5px,#00ff9c 168.5px,#00ff9c 172px)"></i><i style="left:380px;width:1px;background:linear-gradient(#00ff6e 0px,#00ff6b 5.5px,#00ff4f 6.5px,#1fff00 7.5px,#90ff00 8.5px,#00ff06 9.5px,#00ff5a 10.5px,#00ff6e 12.5px,#00ff6d 36.5px,#00ff40 38.5px,#00ff6a 40.5px,#00ff5c 54.5px,#00ff86 62.5px,#00ff6e 85.5px,#00ff1d 114.5px,#00ff46 154.5px,#00ff50 155.5px,#00ff32 156.5px,#00ff19 159.5px,#00ff91 160.5px,#00ff90 163.5px,#00ff84 164.5px,#00ff9e 168.5px,#00ff9e 172px)"></i><i style="left:381px;width:1px;background:linear-gradient(#00ff6e 0px,#00ff6b 5.5px,#00ff4f 6.5px,#1fff00 7.5px,#90ff00 8.5px,#00ff06 9.5px,#00ff5a 10.5px,#00ff6e 12.5px,#00ff6d 36.5px,#00ff40 38.5px,#00ff6d 40.5px,#00ff69 49.5px,#00ff52 51.5px,#00ff68 62.5px,#00ff89 67.5px,#00ff60 89.5px,#00ff1a 115.5px,#00ff47 156.5px,#00ff19 158.5px,#00ff19 159.5px,#00ff8d 160.5px,#00ff90 163.5px,#00ff92 165.5px,#00ff9f 172px)"></i><i style="left:382px;width:1px;background:linear-gradient(#00ff6e 0px,#00ff6b 5.5px,#00ff4f 6.5px,#1fff00 7.5px,#90ff00 8.5px,#00ff06 9.5px,#00ff5a 10.5px,#00ff6e 12.5px,#00ff6d 36.5px,#00ff40 38.5px,#00ff6d 40.5px,#00ff64 50.5px,#00ff51 51.5px,#00ff72 54.5px,#00ff57 64.5px,#0f7 70.5px,#00ff86 75.5px,#00ff17 115.5px,#00ff43 155.5px,#00ff4d 156.5px,#00ff2e 158.5px,#00ff89 160.5px,#00ff92 163.5px,#00ff96 165.5px,#00ffa3 172px)"></i><i style="left:383px;width:1px;background:linear-gradient(#00ff6e 0px,#00ff6b 5.5px,#00ff4f 6.5px,#1fff00 7.5px,#90ff00 8.5px,#00ff06 9.5px,#00ff5a 10.5px,#00ff6e 12.5px,#00ff6d 36.5px,#00ff40 38.5px,#00ff6d 40.5px,#00ff64 50.5px,#00ff51 51.5px,#00ff71 54.5px,#00ff6e 63.5px,#00ff57 71.5px,#00ff7c 80.5px,#00ff15 114.5px,#00ff45 157.5px,#00ff2e 158.5px,#00ff34 159.5px,#00ff82 160.5px,#00ff91 163.5px,#00ff87 164.5px,#00ffa4 167.5px,#00ffa4 172px)"></i><i style="left:384px;width:1px;background:linear-gradient(#00ff6e 0px,#00ff6b 5.5px,#00ff4f 6.5px,#1fff00 7.5px,#90ff00 8.5px,#00ff06 9.5px,#00ff5a 10.5px,#00ff6e 12.5px,#00ff6d 36.5px,#00ff40 38.5px,#00ff6d 40.5px,#00ff64 50.5px,#00ff51 51.5px,#00ff71 54.5px,#00ff74 69.5px,#00ff57 76.5px,#00ff65 87.5px,#00ff13 114.5px,#00ff39 155.5px,#00ff19 156.5px,#00ff2e 159.5px,#00ff87 161.5px,#00ff93 165.5px,#00ffa2 172px)"></i><i style="left:385px;width:1px;background:linear-gradient(#00ff6e 0px,#00ff6b 5.5px,#00ff4f 6.5px,#1fff00 7.5px,#90ff00 8.5px,#00ff06 9.5px,#00ff5a 10.5px,#00ff6e 12.5px,#00ff6d 36.5px,#00ff40 38.5px,#00ff6d 40.5px,#00ff64 50.5px,#00ff50 51.5px,#00ff71 54.5px,#00ff70 76.5px,#00ff57 83.5px,#00ff54 91.5px,#00ff0f 115.5px,#00ff35 155.5px,#00ff19 156.5px,#00ff19 157.5px,#00ff43 158.5px,#00ff2e 159.5px,#0f3 160.5px,#00ff7f 161.5px,#00ff90 165.5px,#00ff9f 172px)"></i><i style="left:386px;width:1px;background:linear-gradient(#00ff6e 0px,#00ff6b 5.5px,#00ff4f 6.5px,#1fff00 7.5px,#90ff00 8.5px,#00ff06 9.5px,#00ff5a 10.5px,#00ff6e 12.5px,#00ff6d 36.5px,#00ff40 38.5px,#00ff6d 40.5px,#00ff64 50.5px,#00ff51 51.5px,#00ff71 54.5px,#00ff6d 82.5px,#00ff5a 87.5px,#00ff0c 116.5px,#00ff3c 157.5px,#00ff48 158.5px,#00ff2e 160.5px,#0f8 162.5px,#00ff81 164.5px,#00ffa1 167.5px,#00ffa1 172px)"></i><i style="left:387px;width:1px;background:linear-gradient(#00ff6e 0px,#00ff6b 5.5px,#00ff4f 6.5px,#1fff00 7.5px,#90ff00 8.5px,#00ff06 9.5px,#00ff5a 10.5px,#00ff6e 12.5px,#00ff6d 36.5px,#00ff40 38.5px,#00ff6d 40.5px,#00ff64 50.5px,#00ff51 51.5px,#00ff71 54.5px,#0f6 86.5px,#00ff0d 113.5px,#00ff2b 141.5px,#00ff38 157.5px,#00ff45 159.5px,#00ff2e 160.5px,#00ff34 161.5px,#00ff86 162.5px,#00ff83 164.5px,#00ffa4 167.5px,#00ffa4 172px)"></i><i style="left:388px;width:1px;background:linear-gradient(#00ff6e 0px,#00ff6b 5.5px,#00ff4f 6.5px,#1fff00 7.5px,#90ff00 8.5px,#00ff06 9.5px,#00ff5a 10.5px,#00ff6e 12.5px,#00ff6d 36.5px,#00ff40 38.5px,#00ff6d 40.5px,#00ff64 50.5px,#00ff51 51.5px,#00ff71 54.5px,#00ff65 86.5px,#00ff0b 113.5px,#00ff28 140.5px,#00ff3f 158.5px,#00ff4e 159.5px,#00ff2e 160.5px,#00ff2e 161.5px,#00ff84 162.5px,#00ff83 164.5px,#00ffa5 167.5px,#00ffa5 172px)"></i><i style="left:389px;width:1px;background:linear-gradient(#00ff6e 0px,#00ff6b 5.5px,#00ff4f 6.5px,#1fff00 7.5px,#90ff00 8.5px,#00ff06 9.5px,#00ff5a 10.5px,#00ff6e 12.5px,#00ff6d 36.5px,#00ff40 38.5px,#00ff6d 40.5px,#00ff64 50.5px,#00ff51 51.5px,#00ff71 54.5px,#00ff61 87.5px,#00ff09 113.5px,#00ff25 139.5px,#00ff3c 158.5px,#00ff47 159.5px,#00ff2e 160.5px,#0f3 161.5px,#00ff7f 162.5px,#00ff7d 164.5px,#00ff9f 167.5px,#00ffa0 172px)"></i><i style="left:390px;width:1px;background:linear-gradient(#00ff6e 0px,#00ff6b 5.5px,#00ff4f 6.5px,#1fff00 7.5px,#90ff00 8.5px,#00ff06 9.5px,#00ff5a 10.5px,#00ff6e 12.5px,#00ff6d 36.5px,#00ff40 38.5px,#00ff6d 40.5px,#00ff64 50.5px,#00ff51 51.5px,#00ff71 54.5px,#00ff63 86.5px,#00ff07 114.5px,#00ff26 140.5px,#00ff3d 158.5px,#00ff43 159.5px,#00ff2e 160.5px,#00ff3d 161.5px,#00ff81 162.5px,#00ff7f 164.5px,#00ffa1 167.5px,#00ffa2 172px)"></i><i style="left:391px;width:1px;background:linear-gradient(#00ff6e 0px,#00ff6b 5.5px,#00ff4f 6.5px,#1fff00 7.5px,#90ff00 8.5px,#00ff06 9.5px,#00ff5a 10.5px,#00ff6e 12.5px,#00ff6d 36.5px,#00ff40 38.5px,#00ff6d 40.5px,#00ff64 50.5px,#00ff51 51.5px,#00ff71 54.5px,#00ff63 86.5px,#00ff05 115.5px,#00ff30 154.5px,#00ff41 159.5px,#00ff2e 160.5px,#00ff48 161.5px,#00ff83 162.5px,#00ff81 164.5px,#00ffa3 167.5px,#00ffa3 172px)"></i><i style="left:392px;width:1px;background:linear-gradient(#00ff6e 0px,#00ff6b 5.5px,#00ff4f 6.5px,#1fff00 7.5px,#90ff00 8.5px,#00ff06 9.5px,#00ff5a 10.5px,#00ff6e 12.5px,#00ff6d 36.5px,#00ff40 38.5px,#00ff6d 40.5px,#00ff64 50.5px,#00ff51 51.5px,#00ff71 54.5px,#00ff65 85.5px,#00ff02 117.5px,#00ff30 154.5px,#00ff3d 159.5px,#00ff2e 160.5px,#00ff87 162.5px,#00ff84 164.5px,#00ffa5 167.5px,#00ffa5 172px)"></i><i style="left:393px;width:1px;background:linear-gradient(#00ff6e 0px,#00ff6b 5.5px,#00ff4f 6.5px,#1fff00 7.5px,#90ff00 8.5px,#00ff06 9.5px,#00ff5a 10.5px,#00ff6e 12.5px,#00ff6d 36.5px,#00ff40 38.5px,#00ff6d 40.5px,#00ff64 50.5px,#00ff51 51.5px,#00ff71 54.5px,#00ff63 86.5px,#00ff02 117.5px,#00ff30 154.5px,#00ff39 159.5px,#00ff2e 160.5px,#00ff86 162.5px,#00ff81 164.5px,#00ffa1 167.5px,#00ffa1 172px)"></i><i style="left:394px;width:1px;background:linear-gradient(#00ff6e 0px,#00ff6b 5.5px,#00ff4f 6.5px,#1fff00 7.5px,#90ff00 8.5px,#00ff06 9.5px,#00ff5a 10.5px,#00ff6e 12.5px,#00ff6d 36.5px,#00ff40 38.5px,#00ff6d 40.5px,#00ff64 50.5px,#00ff51 51.5px,#00ff71 54.5px,#00ff63 86.5px,#00ff01 118.5px,#00ff2f 145.5px,#00ff19 147.5px,#00ff34 148.5px,#00ff38 157.5px,#0f4 158.5px,#00ff2e 160.5px,#00ff6c 161.5px,#0f8 162.5px,#00ff82 164.5px,#00ffa2 167.5px,#00ffa2 172px)"></i><i style="left:395px;width:1px;background:linear-gradient(#00ff6e 0px,#00ff6b 5.5px,#00ff4f 6.5px,#1fff00 7.5px,#90ff00 8.5px,#00ff06 9.5px,#00ff5a 10.5px,#00ff6e 12.5px,#00ff6d 36.5px,#00ff40 38.5px,#00ff6d 40.5px,#00ff64 50.5px,#00ff51 51.5px,#00ff71 54.5px,#00ff63 86.5px,#00ff01 118.5px,#00ff2f 145.5px,#00ff19 147.5px,#00ff34 148.5px,#00ff39 157.5px,#00ff45 158.5px,#00ff2e 160.5px,#00ff78 161.5px,#0f8 163.5px,#00ff92 165.5px,#00ffa1 172px)"></i><i style="left:396px;width:1px;background:linear-gradient(#00ff6e 0px,#00ff6b 5.5px,#00ff4f 6.5px,#1fff00 7.5px,#90ff00 8.5px,#00ff06 9.5px,#00ff5a 10.5px,#00ff6e 12.5px,#00ff6d 36.5px,#00ff40 38.5px,#00ff6d 40.5px,#00ff64 50.5px,#00ff50 51.5px,#00ff71 54.5px,#00ff62 86.5px,#00ff02 118.5px,#00ff30 154.5px,#00ff45 158.5px,#00ff2e 160.5px,#00ff7a 161.5px,#00ff87 163.5px,#00ff19 164.5px,#00ff19 165.5px,#00ff9c 166.5px,#00ff9e 172px)"></i><i style="left:397px;width:1px;background:linear-gradient(#00ff6e 0px,#00ff6b 5.5px,#00ff4f 6.5px,#1fff00 7.5px,#90ff00 8.5px,#00ff06 9.5px,#00ff5a 10.5px,#00ff6e 12.5px,#00ff6d 36.5px,#00ff40 38.5px,#00ff6d 40.5px,#00ff63 50.5px,#00ff50 51.5px,#00ff70 54.5px,#00ff62 86.5px,#00ff02 117.5px,#00ff30 154.5px,#00ff45 158.5px,#00ff2f 160.5px,#00ff7a 161.5px,#00ff85 163.5px,#00ff19 164.5px,#00ff19 165.5px,#00ff9a 166.5px,#00ff9c 172px)"></i><i style="left:398px;width:1px;background:linear-gradient(#00ff6e 0px,#00ff6b 5.5px,#00ff4f 6.5px,#1fff00 7.5px,#90ff00 8.5px,#00ff06 9.5px,#00ff5a 10.5px,#00ff6e 12.5px,#00ff6d 36.5px,#00ff40 38.5px,#00ff6d 40.5px,#00ff64 50.5px,#00ff50 51.5px,#00ff70 54.5px,#00ff62 86.5px,#00ff05 115.5px,#00ff3b 157.5px,#00ff43 158.5px,#00ff2e 159.5px,#00ff37 160.5px,#00ff7c 161.5px,#00ff8e 165.5px,#00ff9d 172px)"></i><i style="left:399px;width:1px;background:linear-gradient(#00ff6e 0px,#00ff6b 5.5px,#00ff4f 6.5px,#1fff00 7.5px,#90ff00 8.5px,#00ff06 9.5px,#00ff5a 10.5px,#00ff6e 12.5px,#00ff6d 36.5px,#00ff40 38.5px,#00ff6d 40.5px,#00ff64 50.5px,#00ff50 51.5px,#00ff71 54.5px,#00ff61 87.5px,#00ff07 114.5px,#00ff26 140.5px,#00ff41 158.5px,#00ff2e 159.5px,#00ff42 160.5px,#00ff7f 161.5px,#00ff90 165.5px,#00ff9f 172px)"></i><i style="left:400px;width:1px;background:linear-gradient(#00ff6e 0px,#00ff6b 5.5px,#00ff4f 6.5px,#1fff00 7.5px,#90ff00 8.5px,#00ff06 9.5px,#00ff5a 10.5px,#00ff6e 12.5px,#00ff6d 36.5px,#00ff40 38.5px,#00ff6d 40.5px,#00ff64 50.5px,#00ff51 51.5px,#00ff71 54.5px,#00ff63 86.5px,#00ff08 114.5px,#00ff2b 142.5px,#00ff3f 158.5px,#00ff2e 159.5px,#00ff83 161.5px,#00ff93 165.5px,#00ffa1 172px)"></i><i style="left:401px;width:1px;background:linear-gradient(#00ff6e 0px,#00ff6b 5.5px,#00ff4f 6.5px,#1fff00 7.5px,#90ff00 8.5px,#00ff06 9.5px,#00ff5a 10.5px,#00ff6e 12.5px,#00ff6d 36.5px,#00ff40 38.5px,#00ff6d 40.5px,#00ff64 50.5px,#00ff51 51.5px,#00ff71 54.5px,#00ff62 87.5px,#00ff0b 113.5px,#00ff28 140.5px,#00ff3a 156.5px,#00ff3c 158.5px,#00ff2e 159.5px,#00ff87 161.5px,#00ff93 165.5px,#00ffa1 172px)"></i><i style="left:402px;width:1px;background:linear-gradient(#00ff6e 0px,#00ff6b 5.5px,#00ff4f 6.5px,#1fff00 7.5px,#90ff00 8.5px,#00ff06 9.5px,#00ff5a 10.5px,#00ff6e 12.5px,#00ff6d 36.5px,#00ff40 38.5px,#00ff6d 40.5px,#00ff64 50.5px,#00ff51 51.5px,#00ff71 54.5px,#00ff65 86.5px,#00ff0d 113.5px,#00ff2b 141.5px,#00ff37 149.5px,#00ff19 150.5px,#00ff19 151.5px,#00ff35 152.5px,#00ff48 157.5px,#00ff2e 159.5px,#00ff8a 161.5px,#00ff85 164.5px,#00ffa1 167.5px,#00ffa2 172px)"></i><i style="left:403px;width:1px;background:linear-gradient(#00ff6e 0px,#00ff6b 5.5px,#00ff4f 6.5px,#1fff00 7.5px,#90ff00 8.5px,#00ff06 9.5px,#00ff5a 10.5px,#00ff6e 12.5px,#00ff6d 36.5px,#00ff40 38.5px,#00ff6d 40.5px,#00ff64 50.5px,#00ff51 51.5px,#00ff71 54.5px,#00ff67 86.5px,#00ff0f 113.5px,#00ff2f 143.5px,#00ff37 149.5px,#00ff19 150.5px,#00ff19 151.5px,#00ff36 152.5px,#00ff4d 157.5px,#00ff2e 159.5px,#0f7 160.5px,#00ff95 162.5px,#00ff86 164.5px,#00ffa2 168.5px,#00ffa2 172px)"></i><i style="left:404px;width:1px;background:linear-gradient(#00ff6e 0px,#00ff6b 5.5px,#00ff4f 6.5px,#1fff00 7.5px,#90ff00 8.5px,#00ff06 9.5px,#00ff5a 10.5px,#00ff6e 12.5px,#00ff6d 36.5px,#00ff40 38.5px,#00ff6d 40.5px,#00ff64 50.5px,#00ff51 51.5px,#00ff71 54.5px,#00ff6c 85.5px,#0f1 113.5px,#00ff34 146.5px,#00ff47 156.5px,#00ff54 157.5px,#00ff2e 158.5px,#00ff19 161.5px,#0f9 162.5px,#0f8 164.5px,#00ffa4 168.5px,#00ffa4 172px)"></i><i style="left:405px;width:1px;background:linear-gradient(#00ff6e 0px,#00ff6b 5.5px,#00ff4f 6.5px,#1fff00 7.5px,#90ff00 8.5px,#00ff06 9.5px,#00ff5a 10.5px,#00ff6e 12.5px,#00ff6d 36.5px,#00ff40 38.5px,#00ff6d 40.5px,#00ff64 50.5px,#00ff51 51.5px,#00ff71 54.5px,#00ff76 82.5px,#00ff5b 87.5px,#0f1 116.5px,#00ff45 155.5px,#00ff4f 156.5px,#00ff2e 158.5px,#00ff38 159.5px,#00ff19 160.5px,#00ff19 161.5px,#00ff9a 162.5px,#0f8 164.5px,#00ffa3 168.5px,#00ffa3 172px)"></i><i style="left:406px;width:1px;background:linear-gradient(#00ff6e 0px,#00ff6b 5.5px,#00ff4f 6.5px,#1fff00 7.5px,#90ff00 8.5px,#00ff06 9.5px,#00ff5a 10.5px,#00ff6e 12.5px,#00ff6d 36.5px,#00ff40 38.5px,#00ff6d 40.5px,#00ff64 50.5px,#00ff51 51.5px,#00ff71 54.5px,#00ff79 78.5px,#00ff57 83.5px,#00ff56 91.5px,#00ff15 115.5px,#00ff46 154.5px,#00ff4e 155.5px,#00ff2e 157.5px,#00ff32 158.5px,#00ff81 159.5px,#0f9 162.5px,#00ff86 164.5px,#00ffa0 168.5px,#00ffa0 172px)"></i><i style="left:407px;width:1px;background:linear-gradient(#00ff6e 0px,#00ff6b 5.5px,#00ff4f 6.5px,#1fff00 7.5px,#90ff00 8.5px,#00ff06 9.5px,#00ff5a 10.5px,#00ff6e 12.5px,#00ff6d 36.5px,#00ff40 38.5px,#00ff6d 40.5px,#00ff64 50.5px,#00ff51 51.5px,#00ff71 54.5px,#00ff7e 73.5px,#00ff57 78.5px,#00ff62 88.5px,#00ff17 115.5px,#00ff48 153.5px,#00ff50 154.5px,#00ff2e 157.5px,#00ff78 158.5px,#00ff9a 162.5px,#00ff85 164.5px,#00ffa0 168.5px,#00ffa0 172px)"></i><i style="left:408px;width:1px;background:linear-gradient(#00ff6e 0px,#00ff6b 5.5px,#00ff4f 6.5px,#1fff00 7.5px,#90ff00 8.5px,#00ff06 9.5px,#00ff5a 10.5px,#00ff6e 12.5px,#00ff6d 36.5px,#00ff40 38.5px,#00ff6d 40.5px,#00ff64 50.5px,#00ff51 51.5px,#00ff71 54.5px,#00ff80 68.5px,#00ff57 73.5px,#00ff6e 79.5px,#00ff6b 86.5px,#00ff1b 114.5px,#00ff41 150.5px,#00ff53 153.5px,#00ff2e 155.5px,#00ff2e 156.5px,#00ff73 157.5px,#0f9 160.5px,#00ff93 163.5px,#00ff87 164.5px,#00ffa1 168.5px,#00ffa1 172px)"></i><i style="left:409px;width:1px;background:linear-gradient(#00ff6e 0px,#00ff6b 5.5px,#00ff4f 6.5px,#1fff00 7.5px,#90ff00 8.5px,#00ff06 9.5px,#00ff5a 10.5px,#00ff6e 12.5px,#00ff6d 36.5px,#00ff40 38.5px,#00ff6d 40.5px,#00ff64 50.5px,#00ff51 51.5px,#00ff72 54.5px,#00ff7d 63.5px,#00ff57 68.5px,#00ff68 73.5px,#00ff82 77.5px,#00ff1d 114.5px,#00ff42 149.5px,#00ff56 152.5px,#00ff2e 154.5px,#00ff2e 155.5px,#00ff6f 156.5px,#00ff94 158.5px,#00ff92 163.5px,#00ff86 164.5px,#00ffa0 168.5px,#00ffa0 172px)"></i><i style="left:410px;width:1px;background:linear-gradient(#00ff6e 0px,#00ff6b 5.5px,#00ff4f 6.5px,#1fff00 7.5px,#90ff00 8.5px,#00ff06 9.5px,#00ff5a 10.5px,#00ff6e 12.5px,#00ff6d 36.5px,#00ff40 38.5px,#00ff6d 40.5px,#00ff64 50.5px,#00ff51 51.5px,#00ff75 54.5px,#00ff6f 59.5px,#00ff57 65.5px,#00ff87 72.5px,#00ff1f 116.5px,#00ff36 143.5px,#00ff19 144.5px,#00ff19 145.5px,#00ff3b 146.5px,#00ff57 151.5px,#00ff2e 153.5px,#00ff2e 154.5px,#00ff6a 155.5px,#00ff8d 156.5px,#00ff94 157.5px,#00ff19 158.5px,#00ff19 159.5px,#00ff9c 160.5px,#00ff83 164.5px,#00ff9d 168.5px,#00ff9d 172px)"></i><i style="left:411px;width:1px;background:linear-gradient(#00ff6e 0px,#00ff6b 5.5px,#00ff4f 6.5px,#1fff00 7.5px,#90ff00 8.5px,#00ff06 9.5px,#00ff5a 10.5px,#00ff6e 12.5px,#00ff6d 36.5px,#00ff40 38.5px,#00ff6d 40.5px,#00ff67 50.5px,#00ff54 51.5px,#00ff72 53.5px,#00ff57 60.5px,#00ff87 68.5px,#00ff57 92.5px,#00ff21 117.5px,#00ff37 143.5px,#00ff19 144.5px,#00ff19 145.5px,#00ff3d 146.5px,#00ff58 150.5px,#00ff2e 152.5px,#00ff2e 153.5px,#00ff8e 155.5px,#0f9 157.5px,#00ff19 158.5px,#00ff19 159.5px,#00ff9b 160.5px,#00ff80 164.5px,#00ff9a 168.5px,#00ff9a 172px)"></i><i style="left:412px;width:1px;background:linear-gradient(#00ff6e 0px,#00ff6b 5.5px,#00ff4f 6.5px,#1fff00 7.5px,#90ff00 8.5px,#00ff06 9.5px,#00ff5a 10.5px,#00ff6e 12.5px,#00ff6d 36.5px,#00ff40 38.5px,#00ff6d 40.5px,#00ff68 49.5px,#00ff57 55.5px,#00ff86 63.5px,#00ff6c 86.5px,#00ff25 115.5px,#00ff47 147.5px,#00ff54 150.5px,#00ff2e 151.5px,#00ff2e 152.5px,#00ff93 154.5px,#0f9 162.5px,#00ff81 164.5px,#00ff9b 168.5px,#00ff9b 172px)"></i><i style="left:413px;width:1px;background:linear-gradient(#00ff6e 0px,#00ff6b 5.5px,#00ff4f 6.5px,#1fff00 7.5px,#90ff00 8.5px,#00ff06 9.5px,#00ff5a 10.5px,#00ff6e 12.5px,#00ff6d 36.5px,#00ff40 38.5px,#00ff6e 40.5px,#00ff5a 52.5px,#00ff84 58.5px,#00ff75 83.5px,#00ff27 115.5px,#00ff48 146.5px,#00ff5a 149.5px,#00ff2e 150.5px,#00ff2e 151.5px,#00ff98 153.5px,#00ff9e 161.5px,#00ff84 164.5px,#00ff9d 168.5px,#00ff9d 172px)"></i><i style="left:414px;width:1px;background:linear-gradient(#00ff6e 0px,#00ff6b 5.5px,#00ff4f 6.5px,#1fff00 7.5px,#90ff00 8.5px,#00ff06 9.5px,#00ff5a 10.5px,#00ff6e 12.5px,#00ff60 36.5px,#00ff41 38.5px,#00ff57 40.5px,#00ff64 48.5px,#00ff6d 50.5px,#00ff5f 51.5px,#00ff81 54.5px,#00ff7e 80.5px,#00ff2a 115.5px,#00ff4b 145.5px,#00ff60 148.5px,#00ff2e 149.5px,#00ff2e 150.5px,#00ff58 151.5px,#00ff9e 152.5px,#00ffa6 159.5px,#00ff94 163.5px,#00ff87 164.5px,#00ffa1 168.5px,#00ffa1 172px)"></i><i style="left:415px;width:1px;background:linear-gradient(#00ff6e 0px,#00ff6b 5.5px,#00ff4f 6.5px,#1fff00 7.5px,#90ff00 8.5px,#00ff06 9.5px,#00ff5a 10.5px,#00ff6e 12.5px,#00ff5d 29.5px,#00ff57 37.5px,#0f4 38.5px,#00ff7a 45.5px,#00ff72 50.5px,#00ff5f 51.5px,#00ff81 54.5px,#00ff7f 80.5px,#00ff2c 115.5px,#00ff4b 143.5px,#0f6 147.5px,#00ff2e 148.5px,#00ff2e 149.5px,#00ff52 150.5px,#00ffa2 151.5px,#00ffae 157.5px,#00ff96 163.5px,#00ff89 164.5px,#00ffa3 168.5px,#00ffa3 172px)"></i><i style="left:416px;width:1px;background:linear-gradient(#00ff6e 0px,#00ff6b 5.5px,#00ff4f 6.5px,#1fff00 7.5px,#90ff00 8.5px,#00ff06 9.5px,#00ff5a 10.5px,#00ff6e 12.5px,#00ff57 31.5px,#00ff6e 36.5px,#00ff48 38.5px,#00ff78 40.5px,#00ff72 50.5px,#00ff5f 51.5px,#00ff81 54.5px,#00ff7d 81.5px,#00ff2f 115.5px,#00ff4f 141.5px,#00ff6f 146.5px,#00ff32 147.5px,#00ff2e 148.5px,#00ff4b 149.5px,#00ff19 150.5px,#00ff19 151.5px,#00ffb1 152.5px,#00ffa6 159.5px,#00ff19 160.5px,#00ff19 161.5px,#00ff9f 162.5px,#00ff87 164.5px,#00ffa1 168.5px,#00ffa1 172px)"></i><i style="left:417px;width:1px;background:linear-gradient(#00ff6e 0px,#00ff6b 5.5px,#00ff4f 6.5px,#1fff00 7.5px,#90ff00 8.5px,#00ff06 9.5px,#00ff59 10.5px,#00ff5b 14.5px,#0f6 27.5px,#0f7 36.5px,#00ff4b 38.5px,#00ff7a 40.5px,#00ff72 50.5px,#00ff5f 51.5px,#00ff80 54.5px,#00ff7e 80.5px,#00ff31 115.5px,#00ff58 139.5px,#00ff52 143.5px,#00ff2e 147.5px,#00ff43 148.5px,#00ffa4 149.5px,#00ff19 150.5px,#00ff19 151.5px,#00ffb6 152.5px,#00ffa5 159.5px,#00ff19 160.5px,#00ff19 161.5px,#00ff9e 162.5px,#00ff85 164.5px,#00ff9f 168.5px,#00ff9f 172px)"></i><i style="left:418px;width:1px;background:linear-gradient(#00ff6e 0px,#00ff4f 6.5px,#1fff00 7.5px,#90ff00 8.5px,#00ff06 9.5px,#00ff57 10.5px,#00ff7a 36.5px,#00ff4d 38.5px,#00ff7a 40.5px,#00ff72 50.5px,#00ff5f 51.5px,#00ff81 54.5px,#00ff7e 81.5px,#00ff35 114.5px,#00ff53 137.5px,#00ff2e 141.5px,#00ff2e 146.5px,#00ff3d 147.5px,#00ffa9 148.5px,#00ffb9 154.5px,#00ff95 163.5px,#0f8 164.5px,#00ffa2 168.5px,#00ffa2 172px)"></i><i style="left:419px;width:1px;background:linear-gradient(#00ff57 0px,#00ff4f 6.5px,#1fff00 7.5px,#90ff00 8.5px,#00ff06 9.5px,#00ff58 10.5px,#00ff6e 18.5px,#00ff7a 36.5px,#00ff4d 38.5px,#00ff7a 40.5px,#00ff72 50.5px,#00ff60 51.5px,#00ff81 54.5px,#00ff81 80.5px,#00ff3a 113.5px,#00ff53 131.5px,#00ff2e 136.5px,#00ff3a 142.5px,#00ffa8 146.5px,#00ffbf 153.5px,#00ff98 163.5px,#00ff8b 164.5px,#00ffa5 168.5px,#00ffa5 172px)"></i><i style="left:420px;width:1px;background:linear-gradient(#00ff59 0px,#00ff69 5.5px,#00ff4f 6.5px,#1fff00 7.5px,#90ff00 8.5px,#00ff06 9.5px,#00ff5a 10.5px,#00ff6e 12.5px,#00ff7a 36.5px,#00ff4d 38.5px,#00ff7a 40.5px,#00ff73 50.5px,#00ff60 51.5px,#00ff82 54.5px,#00ff81 81.5px,#00ff41 111.5px,#00ff56 125.5px,#00ff2e 130.5px,#00ff34 136.5px,#00ffa3 141.5px,#00ffc4 152.5px,#00ff9a 163.5px,#00ff8d 164.5px,#00ffa7 168.5px,#00ffa7 172px)"></i><i style="left:421px;width:1px;background:linear-gradient(#00ff6e 0px,#00ff6b 5.5px,#00ff4f 6.5px,#1fff00 7.5px,#90ff00 8.5px,#00ff06 9.5px,#00ff5a 10.5px,#00ff6e 12.5px,#00ff7a 36.5px,#00ff4d 38.5px,#00ff7a 40.5px,#00ff72 50.5px,#00ff60 51.5px,#00ff81 54.5px,#00ff80 81.5px,#00ff4a 109.5px,#00ff58 119.5px,#00ff2e 124.5px,#00ff2e 130.5px,#00ff9f 135.5px,#00ffc2 152.5px,#00ff98 163.5px,#00ff8b 164.5px,#00ffa4 168.5px,#00ffa4 172px)"></i><i style="left:422px;width:1px;background:linear-gradient(#00ff6e 0px,#00ff6b 5.5px,#00ff4f 6.5px,#1fff00 7.5px,#90ff00 8.5px,#00ff06 9.5px,#00ff5a 10.5px,#00ff70 12.5px,#00ff7a 36.5px,#00ff4d 38.5px,#00ff7a 40.5px,#00ff73 50.5px,#00ff60 51.5px,#00ff82 54.5px,#00ff81 81.5px,#00ff57 108.5px,#00ff53 114.5px,#00ff2e 119.5px,#00ff2e 124.5px,#00ff9d 129.5px,#00ffc6 151.5px,#00ff19 152.5px,#00ff19 153.5px,#00ffbd 154.5px,#0f9 163.5px,#00ff8c 164.5px,#00ffa6 168.5px,#00ffa6 172px)"></i><i style="left:423px;width:1px;background:linear-gradient(#00ff6e 0px,#00ff6b 5.5px,#00ff50 6.5px,#1fff00 7.5px,#90ff00 8.5px,#00ff07 9.5px,#00ff5d 10.5px,#00ff75 13.5px,#00ff7a 36.5px,#00ff4d 38.5px,#00ff7a 40.5px,#00ff73 50.5px,#00ff60 51.5px,#00ff82 54.5px,#00ff82 81.5px,#00ff5b 108.5px,#00ff2e 113.5px,#00ff37 119.5px,#0f9 123.5px,#00ffc8 145.5px,#00ffc7 151.5px,#00ff19 152.5px,#00ff19 153.5px,#00ffbe 154.5px,#0f9 163.5px,#00ff8c 164.5px,#00ffa6 168.5px,#00ffa6 172px)"></i><i style="left:424px;width:1px;background:linear-gradient(#00ff6e 0px,#00ff6d 5.5px,#00ff52 6.5px,#1dff00 7.5px,#90ff00 8.5px,#00ff08 9.5px,#00ff60 10.5px,#0f7 12.5px,#00ff7a 36.5px,#00ff4d 38.5px,#00ff7a 40.5px,#00ff73 50.5px,#00ff60 51.5px,#00ff82 54.5px,#00ff81 83.5px,#00ff68 101.5px,#00ff2e 107.5px,#00ff31 113.5px,#00ffa0 118.5px,#00ffca 145.5px,#00ffa5 162.5px,#00ff8c 164.5px,#00ffa6 168.5px,#00ffa6 172px)"></i><i style="left:425px;width:1px;background:linear-gradient(#00ff6f 0px,#00ff70 5.5px,#0f5 6.5px,#1bff00 7.5px,#90ff00 8.5px,#00ff0a 9.5px,#00ff63 10.5px,#00ff7a 12.5px,#00ff7a 36.5px,#00ff4d 38.5px,#00ff7a 40.5px,#00ff72 50.5px,#00ff5f 51.5px,#00ff81 54.5px,#00ff80 88.5px,#00ff76 94.5px,#00ff2e 100.5px,#00ff2e 107.5px,#00ff9e 112.5px,#00ffc6 138.5px,#00ffb7 155.5px,#00ff96 163.5px,#00ff96 165.5px,#00ffa3 172px)"></i><i style="left:426px;width:1px;background:linear-gradient(#00ff71 0px,#00ff74 5.5px,#00ff58 6.5px,#19ff00 7.5px,#90ff00 8.5px,#00ff0b 9.5px,#00ff65 10.5px,#00ff7b 12.5px,#00ff7a 36.5px,#00ff4d 38.5px,#00ff7a 40.5px,#00ff72 50.5px,#00ff60 51.5px,#00ff81 54.5px,#00ff86 87.5px,#00ff2e 93.5px,#00ff39 101.5px,#00ffa1 106.5px,#00ffc8 136.5px,#00ffc8 141.5px,#00ff19 142.5px,#00ff19 143.5px,#00ffc8 144.5px,#0fa 159.5px,#00ff19 160.5px,#00ff19 161.5px,#00ffa3 162.5px,#00ff8a 164.5px,#00ff97 165.5px,#00ff19 166.5px,#00ffa4 167.5px,#00ffa4 172px)"></i><i style="left:427px;width:1px;background:linear-gradient(#00ff75 0px,#0f7 5.5px,#00ff5a 6.5px,#18ff00 7.5px,#90ff00 8.5px,#00ff0c 9.5px,#00ff65 10.5px,#00ff7b 12.5px,#00ff7a 36.5px,#00ff4d 38.5px,#00ff7a 40.5px,#00ff72 50.5px,#00ff60 51.5px,#00ff81 54.5px,#00ff91 80.5px,#00ff2e 86.5px,#00ff35 94.5px,#00ffa3 99.5px,#00ffc8 136.5px,#00ffc8 141.5px,#00ff19 142.5px,#00ff19 143.5px,#00ffc8 144.5px,#0fa 159.5px,#00ff19 160.5px,#00ff19 161.5px,#00ffa3 162.5px,#00ff8a 164.5px,#00ff97 165.5px,#00ff19 166.5px,#00ffa4 167.5px,#00ffa4 172px)"></i><i style="left:428px;width:1px;background:linear-gradient(#00ff79 0px,#00ff78 5.5px,#00ff5a 6.5px,#18ff00 7.5px,#90ff00 8.5px,#00ff0c 9.5px,#00ff65 10.5px,#00ff7b 12.5px,#00ff7a 36.5px,#00ff4c 38.5px,#00ff7a 40.5px,#00ff72 50.5px,#00ff5f 51.5px,#00ff80 54.5px,#00ff92 73.5px,#00ff2e 79.5px,#00ff31 87.5px,#00ffa8 93.5px,#00ffc2 145.5px,#00ff9d 162.5px,#00ff85 164.5px,#00ff9e 168.5px,#00ff9e 172px)"></i><i style="left:429px;width:1px;background:linear-gradient(#00ff7b 0px,#00ff78 5.5px,#00ff5a 6.5px,#18ff00 7.5px,#90ff00 8.5px,#00ff0c 9.5px,#00ff65 10.5px,#00ff7b 12.5px,#00ff7a 36.5px,#00ff4c 38.5px,#00ff7a 40.5px,#00ff71 50.5px,#00ff5f 51.5px,#00ff80 54.5px,#00ff8f 68.5px,#00ff2e 72.5px,#00ff2e 80.5px,#0fa 86.5px,#00ffc1 149.5px,#00ff90 163.5px,#00ff83 164.5px,#00ff9d 168.5px,#00ff9d 172px)"></i><i style="left:430px;width:1px;background:linear-gradient(#00ff7b 0px,#00ff78 5.5px,#00ff5a 6.5px,#18ff00 7.5px,#90ff00 8.5px,#00ff0c 9.5px,#00ff65 10.5px,#00ff7b 12.5px,#00ff7a 36.5px,#00ff4c 38.5px,#00ff7a 40.5px,#00ff71 50.5px,#00ff5f 51.5px,#00ff80 54.5px,#00ff8c 64.5px,#00ff2e 68.5px,#00ff2e 73.5px,#00ffa7 79.5px,#00ffc2 133.5px,#00ffc1 149.5px,#00ff19 150.5px,#00ff19 151.5px,#00ffbc 152.5px,#00ffb1 155.5px,#00ff19 156.5px,#00ff19 157.5px,#00ffa6 158.5px,#00ffa3 159.5px,#00ff19 160.5px,#00ff19 161.5px,#00ff9c 162.5px,#00ff84 164.5px,#00ff9d 168.5px,#00ff9d 172px)"></i><i style="left:431px;width:1px;background:linear-gradient(#00ff7b 0px,#00ff78 5.5px,#00ff5a 6.5px,#18ff00 7.5px,#90ff00 8.5px,#00ff0c 9.5px,#00ff65 10.5px,#00ff7b 12.5px,#00ff7a 36.5px,#00ff4c 38.5px,#00ff7a 40.5px,#00ff72 50.5px,#00ff5f 51.5px,#00ff81 54.5px,#00ff80 60.5px,#00ff34 63.5px,#00ff39 69.5px,#0f9 72.5px,#00ffc2 96.5px,#00ffc5 149.5px,#00ff19 150.5px,#00ff19 151.5px,#00ffbf 152.5px,#00ffb5 155.5px,#00ff19 156.5px,#00ff19 157.5px,#00ffa9 158.5px,#00ffa6 159.5px,#00ff19 160.5px,#00ff19 161.5px,#00ff9f 162.5px,#00ff87 164.5px,#00ffa1 168.5px,#00ffa1 172px)"></i><i style="left:432px;width:1px;background:linear-gradient(#00ff7b 0px,#00ff78 5.5px,#00ff5a 6.5px,#18ff00 7.5px,#90ff00 8.5px,#00ff0c 9.5px,#00ff65 10.5px,#00ff7b 12.5px,#00ff7a 36.5px,#00ff4c 38.5px,#00ff7a 40.5px,#00ff72 50.5px,#00ff5f 51.5px,#00ff81 54.5px,#00ff72 56.5px,#00ff2e 59.5px,#00ff2e 64.5px,#00ff9a 68.5px,#00ffc4 97.5px,#00ffb8 154.5px,#00ffa1 161.5px,#00ff19 162.5px,#00ff19 163.5px,#00ff87 164.5px,#00ffa0 168.5px,#00ffa0 172px)"></i><i style="left:433px;width:1px;background:linear-gradient(#00ff7b 0px,#00ff78 5.5px,#00ff5a 6.5px,#18ff00 7.5px,#90ff00 8.5px,#00ff0c 9.5px,#00ff65 10.5px,#00ff7b 12.5px,#00ff7a 36.5px,#00ff4d 38.5px,#00ff7a 40.5px,#00ff72 50.5px,#00ff2e 56.5px,#00ff31 60.5px,#00ff94 64.5px,#00ffc8 94.5px,#00ffbc 154.5px,#00ffa5 161.5px,#00ff19 162.5px,#00ff19 163.5px,#00ff8a 164.5px,#00ffa4 168.5px,#00ffa4 172px)"></i><i style="left:434px;width:1px;background:linear-gradient(#00ff7b 0px,#00ff78 5.5px,#00ff5a 6.5px,#18ff00 7.5px,#90ff00 8.5px,#00ff0c 9.5px,#00ff65 10.5px,#00ff7b 12.5px,#00ff7b 33.5px,#00ff54 34.5px,#00ff7b 35.5px,#00ff6a 37.5px,#00ff4d 38.5px,#00ff7a 40.5px,#00ff72 47.5px,#00ff30 50.5px,#00ff3a 56.5px,#00ff89 59.5px,#00ffc9 92.5px,#00ffbd 154.5px,#00ff98 163.5px,#00ff8b 164.5px,#00ffa5 168.5px,#00ffa5 172px)"></i><i style="left:435px;width:1px;background:linear-gradient(#00ff7b 0px,#00ff78 5.5px,#00ff5a 6.5px,#18ff00 7.5px,#90ff00 8.5px,#00ff0c 9.5px,#00ff65 10.5px,#00ff7b 12.5px,#00ff7b 32.5px,#bfff00 33.5px,#00ff54 34.5px,#00ff7b 35.5px,#00ff6a 37.5px,#00ff4d 38.5px,#00ff7a 40.5px,#00ff7b 42.5px,#00ff2e 46.5px,#00ff2e 51.5px,#00ff84 55.5px,#00ffc7 93.5px,#00ffba 154.5px,#00ff96 163.5px,#00ff89 164.5px,#00ffa3 168.5px,#00ffa3 172px)"></i><i style="left:436px;width:1px;background:linear-gradient(#00ff7b 0px,#00ff78 5.5px,#00ff5a 6.5px,#18ff00 7.5px,#90ff00 8.5px,#00ff0c 9.5px,#00ff65 10.5px,#00ff7b 12.5px,#00ff7b 27.5px,#00ff67 28.5px,#00ff7b 30.5px,#00ff7b 31.5px,#bfff00 32.5px,#0f3 33.5px,#00ff7b 34.5px,#00ff6a 37.5px,#00ff4b 38.5px,#00ff4b 40.5px,#00ff2e 43.5px,#0f3 47.5px,#00ff6b 50.5px,#00ff5f 51.5px,#00ff82 54.5px,#00ffc4 93.5px,#00ffb7 154.5px,#00ff93 163.5px,#00ff86 164.5px,#00ffa0 168.5px,#00ffa0 172px)"></i><i style="left:437px;width:1px;background:linear-gradient(#00ff7b 0px,#00ff78 5.5px,#00ff5a 6.5px,#18ff00 7.5px,#90ff00 8.5px,#00ff0c 9.5px,#00ff65 10.5px,#00ff7b 12.5px,#00ff7b 26.5px,#0f3 27.5px,#00ff7b 28.5px,#00ff7b 30.5px,#b6ff00 31.5px,#00ff67 32.5px,#00ff7b 34.5px,#00ff7b 35.5px,#0f3 37.5px,#00ff3b 43.5px,#00ff7b 46.5px,#00ff72 50.5px,#00ff5f 51.5px,#00ff82 54.5px,#00ffc3 93.5px,#00ffb7 154.5px,#00ff92 163.5px,#00ff85 164.5px,#00ff9f 168.5px,#00ff9f 172px)"></i><i style="left:438px;width:1px;background:linear-gradient(#00ff7b 0px,#00ff78 5.5px,#00ff5a 6.5px,#18ff00 7.5px,#90ff00 8.5px,#00ff0c 9.5px,#00ff65 10.5px,#00ff7b 12.5px,#00ff7b 25.5px,#01ff00 26.5px,#00ff7b 27.5px,#00ff7b 29.5px,#5cff00 30.5px,#00ff7b 31.5px,#00ff7b 33.5px,#00ff34 35.5px,#00ff2e 38.5px,#00ff7b 42.5px,#00ff73 50.5px,#00ff60 51.5px,#00ff83 54.5px,#00ffc7 93.5px,#00ffba 154.5px,#00ff96 163.5px,#00ff89 164.5px,#00ff96 165.5px,#00ff19 166.5px,#00ffa3 167.5px,#00ffa3 172px)"></i><i style="left:439px;width:1px;background:linear-gradient(#00ff7b 0px,#00ff78 5.5px,#00ff5a 6.5px,#18ff00 7.5px,#90ff00 8.5px,#00ff0c 9.5px,#00ff65 10.5px,#00ff7b 12.5px,#00ff7b 24.5px,#5cff00 25.5px,#00ff7b 26.5px,#00ff7b 28.5px,#01ff00 29.5px,#00ff7b 30.5px,#00ff7b 31.5px,#00ff34 33.5px,#00ff34 36.5px,#0f5 37.5px,#00ff4d 38.5px,#00ff7a 40.5px,#00ff73 50.5px,#00ff61 51.5px,#00ff84 54.5px,#00ffca 93.5px,#00ffbe 154.5px,#0f9 163.5px,#00ff8c 164.5px,#0f9 165.5px,#00ff19 166.5px,#00ffa6 167.5px,#00ffa6 172px)"></i><i style="left:440px;width:1px;background:linear-gradient(#00ff7b 0px,#00ff78 5.5px,#00ff5a 6.5px,#18ff00 7.5px,#90ff00 8.5px,#00ff0c 9.5px,#00ff65 10.5px,#00ff7b 12.5px,#00ff7b 22.5px,#00ff67 23.5px,#b6ff00 24.5px,#00ff7b 25.5px,#00ff7b 27.5px,#0f3 28.5px,#00ff7b 29.5px,#00ff34 31.5px,#00ff34 34.5px,#00ff7a 36.5px,#00ff4d 38.5px,#00ff7a 40.5px,#00ff73 50.5px,#00ff61 51.5px,#00ff84 54.5px,#00ffca 93.5px,#00ffbe 154.5px,#0f9 163.5px,#00ff8c 164.5px,#00ffa6 168.5px,#00ffa6 172px)"></i><i style="left:441px;width:1px;background:linear-gradient(#00ff7b 0px,#00ff78 5.5px,#00ff5a 6.5px,#18ff00 7.5px,#90ff00 8.5px,#00ff0c 9.5px,#00ff65 10.5px,#00ff7b 12.5px,#00ff7b 21.5px,#0f3 22.5px,#bfff00 23.5px,#00ff7b 24.5px,#00ff7b 26.5px,#00ff60 28.5px,#00ff34 29.5px,#00ff34 32.5px,#00ff7b 34.5px,#00ff6a 37.5px,#00ff4d 38.5px,#00ff7a 40.5px,#00ff73 50.5px,#00ff60 51.5px,#00ff83 54.5px,#00ffc7 93.5px,#0fb 154.5px,#00ff96 163.5px,#00ff89 164.5px,#00ffa3 168.5px,#00ffa3 172px)"></i><i style="left:442px;width:1px;background:linear-gradient(#00ff7b 0px,#00ff78 5.5px,#00ff5a 6.5px,#18ff00 7.5px,#90ff00 8.5px,#00ff0c 9.5px,#00ff65 10.5px,#00ff7b 12.5px,#00ff7b 20.5px,#1f0 21.5px,#bfff00 22.5px,#00ff7b 23.5px,#00ff7b 25.5px,#00ff34 27.5px,#00ff34 30.5px,#00ff7b 32.5px,#00ff7a 36.5px,#00ff4d 38.5px,#00ff7a 40.5px,#00ff73 50.5px,#00ff60 51.5px,#00ff83 54.5px,#00ffc7 93.5px,#00ffba 154.5px,#00ff96 163.5px,#00ff89 164.5px,#00ffa3 168.5px,#00ffa3 172px)"></i><i style="left:443px;width:1px;background:linear-gradient(#00ff7b 0px,#00ff78 5.5px,#00ff5a 6.5px,#18ff00 7.5px,#90ff00 8.5px,#00ff0c 9.5px,#00ff65 10.5px,#00ff7b 12.5px,#00ff7b 19.5px,#85ff00 20.5px,#bfff00 21.5px,#00ff7b 22.5px,#00ff7b 23.5px,#00ff34 25.5px,#00ff34 28.5px,#00ff7b 30.5px,#00ff7a 36.5px,#00ff4d 38.5px,#00ff7a 40.5px,#00ff73 50.5px,#00ff60 51.5px,#00ff84 54.5px,#00ffc9 93.5px,#00ffbc 154.5px,#00ff98 163.5px,#00ff8b 164.5px,#00ffa4 168.5px,#00ffa4 172px)"></i><i style="left:444px;width:1px;background:linear-gradient(#00ff7b 0px,#00ff78 5.5px,#00ff5a 6.5px,#18ff00 7.5px,#90ff00 8.5px,#00ff0c 9.5px,#00ff65 10.5px,#00ff7b 12.5px,#00ff7b 17.5px,#00ff39 18.5px,#bfff00 19.5px,#bfff00 20.5px,#00ff7b 21.5px,#00ff34 23.5px,#00ff34 26.5px,#00ff7b 28.5px,#00ff7a 36.5px,#00ff4d 38.5px,#00ff7a 40.5px,#00ff73 50.5px,#00ff60 51.5px,#00ff84 54.5px,#00ffc9 93.5px,#00ffbd 154.5px,#00ff98 163.5px,#00ff8b 164.5px,#00ffa5 168.5px,#00ffa5 172px)"></i><i style="left:445px;width:1px;background:linear-gradient(#00ff7b 0px,#00ff78 5.5px,#00ff5a 6.5px,#18ff00 7.5px,#90ff00 8.5px,#00ff0c 9.5px,#00ff65 10.5px,#00ff7b 12.5px,#00ff7b 16.5px,#1f0 17.5px,#bfff00 18.5px,#bfff00 19.5px,#00ff6a 20.5px,#00ff36 21.5px,#00ff34 24.5px,#00ff7b 26.5px,#00ff7a 36.5px,#00ff4c 38.5px,#00ff7a 40.5px,#00ff72 50.5px,#00ff60 51.5px,#00ff83 54.5px,#00ffc4 93.5px,#00ffb7 154.5px,#00ff93 163.5px,#00ff86 164.5px,#00ffa0 168.5px,#00ffa0 172px)"></i><i style="left:446px;width:1px;background:linear-gradient(#00ff7b 0px,#00ff78 5.5px,#00ff5a 6.5px,#18ff00 7.5px,#90ff00 8.5px,#00ff0c 9.5px,#00ff65 10.5px,#00ff7b 12.5px,#00ff7b 15.5px,#85ff00 16.5px,#bfff00 17.5px,#bfff00 18.5px,#00ff4d 19.5px,#00ff2e 20.5px,#00ff34 22.5px,#00ff7b 24.5px,#00ff7a 36.5px,#00ff4c 38.5px,#00ff7a 40.5px,#00ff72 50.5px,#00ff5f 51.5px,#00ff82 54.5px,#00ffc0 94.5px,#00ffb4 154.5px,#00ff8f 163.5px,#00ff82 164.5px,#00ff9c 168.5px,#00ff9c 172px)"></i><i style="left:447px;width:1px;background:linear-gradient(#00ff7b 0px,#00ff78 5.5px,#00ff5a 6.5px,#18ff00 7.5px,#90ff00 8.5px,#00ff0c 9.5px,#00ff65 10.5px,#00ff7b 12.5px,#00ff7b 14.5px,#bfff00 15.5px,#bfff00 17.5px,#00ff2f 18.5px,#00ff2e 20.5px,#00ff7b 22.5px,#00ff7a 36.5px,#00ff4c 38.5px,#00ff7a 40.5px,#00ff72 50.5px,#00ff5f 51.5px,#00ff82 54.5px,#00ffc1 94.5px,#00ffb4 154.5px,#00ff90 163.5px,#00ff83 164.5px,#00ff9d 168.5px,#00ff9d 172px)"></i><i style="left:448px;width:1px;background:linear-gradient(#00ff7b 0px,#00ff78 5.5px,#00ff5a 6.5px,#18ff00 7.5px,#90ff00 8.5px,#00ff0c 9.5px,#00ff65 10.5px,#00ff7b 12.5px,#00ff7b 13.5px,#bfff00 14.5px,#bfff00 16.5px,#00ff2e 17.5px,#00ff3e 19.5px,#00ff72 20.5px,#00ff7a 36.5px,#00ff4d 38.5px,#00ff7a 40.5px,#00ff72 50.5px,#00ff60 51.5px,#00ff83 54.5px,#00ffc5 93.5px,#00ffb9 154.5px,#00ff94 163.5px,#00ff87 164.5px,#00ffa1 168.5px,#00ffa1 172px)"></i><i style="left:449px;width:1px;background:linear-gradient(#00ff7b 0px,#00ff78 5.5px,#00ff5a 6.5px,#18ff00 7.5px,#90ff00 8.5px,#00ff0c 9.5px,#00ff65 10.5px,#00ff7b 12.5px,#bfff00 13.5px,#bfff00 15.5px,#00ff2e 16.5px,#00ff2e 17.5px,#00ff7b 19.5px,#00ff7a 36.5px,#00ff4d 38.5px,#00ff7a 40.5px,#00ff73 50.5px,#00ff60 51.5px,#00ff83 54.5px,#00ffc7 93.5px,#0fb 154.5px,#00ff96 163.5px,#00ff89 164.5px,#00ffa3 168.5px,#00ffa3 172px)"></i><i style="left:450px;width:1px;background:linear-gradient(#00ff7b 0px,#00ff78 5.5px,#00ff5a 6.5px,#18ff00 7.5px,#90ff00 8.5px,#00ff0c 9.5px,#00ff65 10.5px,#00ff79 11.5px,#bfff00 12.5px,#bfff00 14.5px,#00ff2e 15.5px,#00ff45 16.5px,#00ff79 17.5px,#00ff7a 36.5px,#00ff4d 38.5px,#00ff7a 40.5px,#00ff72 50.5px,#00ff60 51.5px,#00ff83 54.5px,#00ffc6 93.5px,#00ffba 154.5px,#00ff95 163.5px,#0f8 164.5px,#00ffa2 168.5px,#00ffa2 172px)"></i><i style="left:451px;width:1px;background:linear-gradient(#00ff7b 0px,#00ff78 5.5px,#00ff5a 6.5px,#18ff00 7.5px,#90ff00 8.5px,#00ff0c 9.5px,#00ff65 10.5px,#bfff00 11.5px,#bfff00 12.5px,#9f0 13.5px,#00ff2f 14.5px,#00ff63 15.5px,#00ff7b 17.5px,#00ff7a 36.5px,#00ff4d 38.5px,#00ff7a 40.5px,#00ff72 50.5px,#00ff60 51.5px,#00ff83 54.5px,#00ffc6 93.5px,#00ffba 154.5px,#00ff95 163.5px,#0f8 164.5px,#00ffa2 168.5px,#00ffa2 172px)"></i><i style="left:452px;width:1px;background:linear-gradient(#00ff7b 0px,#00ff78 5.5px,#00ff5a 6.5px,#18ff00 7.5px,#90ff00 8.5px,#00ff0c 9.5px,#bfff00 10.5px,#bfff00 11.5px,#4bff00 12.5px,#00ff4d 13.5px,#00ff7b 14.5px,#00ff7a 36.5px,#00ff4c 38.5px,#00ff7a 40.5px,#00ff72 50.5px,#00ff60 51.5px,#00ff83 54.5px,#00ffc5 93.5px,#00ffb8 154.5px,#00ff94 163.5px,#00ff87 164.5px,#00ffa1 168.5px,#00ffa1 172px)"></i><i style="left:453px;width:1px;background:linear-gradient(#00ff7b 0px,#00ff78 5.5px,#00ff5a 6.5px,#18ff00 7.5px,#90ff00 8.5px,#00ff0c 9.5px,#00ff1a 11.5px,#00ff6a 12.5px,#00ff7b 15.5px,#00ff7a 36.5px,#00ff4c 38.5px,#00ff7a 40.5px,#00ff72 50.5px,#00ff5f 51.5px,#00ff82 54.5px,#00ffc0 94.5px,#00ffb4 154.5px,#00ff8f 163.5px,#00ff82 164.5px,#00ff9c 168.5px,#00ff9c 172px)"></i><i style="left:454px;width:1px;background:linear-gradient(#00ff7b 0px,#00ff78 5.5px,#00ff4c 6.5px,#18ff00 7.5px,#90ff00 8.5px,#00ff0c 9.5px,#00ff79 11.5px,#00ff7a 36.5px,#00ff4c 38.5px,#00ff7a 40.5px,#00ff72 50.5px,#00ff5f 51.5px,#00ff81 54.5px,#00ffbf 94.5px,#00ffb2 154.5px,#00ff8e 163.5px,#00ff81 164.5px,#00ff9a 167.5px,#00ff15 169.5px,#48ff00 170.5px,#00ff9a 172px)"></i><i style="left:455px;width:1px;background:linear-gradient(#00ff7b 0px,#00ff79 4.5px,#0f4 5.5px,#18ff00 7.5px,#90ff00 8.5px,#00ff0c 9.5px,#00ff65 10.5px,#00ff7b 12.5px,#00ff7a 36.5px,#00ff4c 38.5px,#00ff7a 40.5px,#00ff72 50.5px,#00ff5f 51.5px,#00ff82 54.5px,#00ffc2 94.5px,#00ffb5 154.5px,#00ff94 162.5px,#00ff0c 164.5px,#00ff91 165.5px,#00ff9c 166.5px,#7f0 167.5px,#7f0 169.5px,#00ff9e 170.5px,#00ff9e 172px)"></i><i style="left:456px;width:1px;background:linear-gradient(#00ff7b 0px,#00ff7b 2.5px,#00ff2e 4.5px,#00ff2e 6.5px,#18ff00 7.5px,#90ff00 8.5px,#00ff0c 9.5px,#00ff65 10.5px,#00ff7b 12.5px,#00ff7a 36.5px,#00ff4c 38.5px,#00ff7a 40.5px,#00ff72 50.5px,#00ff60 51.5px,#00ff83 54.5px,#00ffc4 93.5px,#00ffb8 154.5px,#00ffa6 159.5px,#46ff00 160.5px,#7f0 161.5px,#7f0 163.5px,#00ff86 164.5px,#00ff93 165.5px,#7f0 166.5px,#7f0 167.5px,#47ff00 168.5px,#00ffa0 169.5px,#00ffa0 172px)"></i><i style="left:457px;width:1px;background:linear-gradient(#00ff7b 0px,#00ff72 1.5px,#00ff3e 2.5px,#00ff2e 4.5px,#00ff59 6.5px,#18ff00 7.5px,#90ff00 8.5px,#00ff0c 9.5px,#00ff65 10.5px,#00ff7b 12.5px,#00ff7a 36.5px,#00ff4d 38.5px,#00ff7a 40.5px,#00ff73 50.5px,#00ff60 51.5px,#00ff83 54.5px,#00ffc8 93.5px,#00ffbf 153.5px,#0f2 154.5px,#42ff00 155.5px,#7f0 156.5px,#00ffb0 157.5px,#00ffa9 159.5px,#7f0 160.5px,#7f0 162.5px,#00ff97 163.5px,#00ff8a 164.5px,#00ff51 165.5px,#0f9 166.5px,#00ffa4 172px)"></i><i style="left:458px;width:1px;background:linear-gradient(#00ff54 0px,#00ff2e 1.5px,#00ff2f 3.5px,#00ff63 4.5px,#00ff78 5.5px,#00ff5a 6.5px,#18ff00 7.5px,#90ff00 8.5px,#00ff0c 9.5px,#00ff65 10.5px,#00ff7b 12.5px,#00ff7a 36.5px,#00ff4d 38.5px,#00ff7a 40.5px,#00ff73 50.5px,#00ff60 51.5px,#00ff84 54.5px,#00ffc9 93.5px,#00ffbe 147.5px,#00ff28 149.5px,#00ffc8 150.5px,#00ffc3 152.5px,#7f0 153.5px,#7f0 155.5px,#00ffb5 156.5px,#00ffb1 157.5px,#4f0 158.5px,#00ff1c 159.5px,#00ff9d 161.5px,#00ff8b 164.5px,#00ffa5 168.5px,#00ffa5 172px)"></i><i style="left:459px;width:1px;background:linear-gradient(#00ff2e 0px,#00ff2e 1.5px,#00ff7b 3.5px,#00ff78 5.5px,#00ff5a 6.5px,#18ff00 7.5px,#90ff00 8.5px,#00ff0c 9.5px,#00ff65 10.5px,#00ff7b 12.5px,#00ff7a 36.5px,#00ff4d 38.5px,#00ff7a 40.5px,#00ff73 50.5px,#00ff61 51.5px,#00ff84 54.5px,#00ffcb 93.5px,#00ffc0 142.5px,#00ff74 143.5px,#00ffcb 144.5px,#00ffcb 145.5px,#7f0 146.5px,#7f0 148.5px,#00ffcb 149.5px,#00ffc8 151.5px,#7f0 152.5px,#40ff00 153.5px,#00ff24 154.5px,#0fb 155.5px,#00ff9a 163.5px,#00ff8d 164.5px,#00ffa7 168.5px,#00ffa7 172px)"></i><i style="left:460px;width:1px;background:linear-gradient(#00ff36 0px,#00ff6a 1.5px,#00ff7b 4.5px,#00ff78 5.5px,#00ff5a 6.5px,#18ff00 7.5px,#90ff00 8.5px,#00ff0c 9.5px,#00ff65 10.5px,#00ff7b 12.5px,#00ff7a 36.5px,#00ff4c 38.5px,#00ff7a 40.5px,#00ff72 50.5px,#00ff60 51.5px,#00ff82 54.5px,#00ffc4 93.5px,#00ffc3 138.5px,#00ff26 139.5px,#3fff00 140.5px,#7f0 141.5px,#7f0 142.5px,#00ffc3 143.5px,#00ffc3 144.5px,#7f0 145.5px,#7f0 147.5px,#00ffc3 148.5px,#00ff92 163.5px,#00ff92 165.5px,#00ff9f 172px)"></i><i style="left:461px;width:1px;background:linear-gradient(#00ff7b 0px,#00ff78 5.5px,#00ff5a 6.5px,#18ff00 7.5px,#90ff00 8.5px,#00ff0c 9.5px,#00ff65 10.5px,#00ff7b 12.5px,#00ff7a 36.5px,#00ff4c 38.5px,#00ff7a 40.5px,#00ff72 50.5px,#00ff5f 51.5px,#00ff82 54.5px,#00ffc0 94.5px,#00ffc0 132.5px,#00ff24 134.5px,#40ff00 135.5px,#00ffc0 136.5px,#00ffc0 137.5px,#7f0 138.5px,#7f0 141.5px,#00ffc0 142.5px,#00ffc0 143.5px,#00ff24 144.5px,#00ffb6 146.5px,#00ffb0 155.5px,#00ff8f 163.5px,#00ff82 164.5px,#00ff9c 168.5px,#00ff9c 172px)"></i><i style="left:462px;width:1px;background:linear-gradient(#00ff7b 0px,#00ff78 5.5px,#00ff5a 6.5px,#18ff00 7.5px,#90ff00 8.5px,#00ff0c 9.5px,#00ff65 10.5px,#00ff7b 12.5px,#00ff7a 36.5px,#00ff4c 38.5px,#00ff7a 40.5px,#00ff72 50.5px,#00ff5f 51.5px,#00ff81 54.5px,#00ffbf 94.5px,#00ffb5 127.5px,#00ff6c 128.5px,#00ffbf 129.5px,#00ffbf 131.5px,#7f0 132.5px,#7f0 134.5px,#00ffbf 135.5px,#00ffbf 136.5px,#7f0 137.5px,#40ff00 138.5px,#00ff24 139.5px,#00ffbf 141.5px,#00ffbf 148.5px,#e3ff00 149.5px,#e3ff00 153.5px,#00ffb2 154.5px,#00ff8e 163.5px,#00ff81 164.5px,#00ff9b 168.5px,#00ff9b 172px)"></i><i style="left:463px;width:1px;background:linear-gradient(#00ff7b 0px,#00ff78 5.5px,#00ff5a 6.5px,#18ff00 7.5px,#90ff00 8.5px,#00ff0c 9.5px,#00ff65 10.5px,#00ff7b 12.5px,#00ff7a 36.5px,#00ff4c 38.5px,#00ff7a 40.5px,#00ff72 50.5px,#00ff60 51.5px,#00ff83 54.5px,#00ffc4 93.5px,#00ffc4 125.5px,#72ff00 126.5px,#7f0 127.5px,#00ffc4 128.5px,#00ffc4 130.5px,#7f0 131.5px,#7f0 132.5px,#3fff00 133.5px,#00ffc4 134.5px,#00ffc4 148.5px,#e3ff00 149.5px,#e3ff00 153.5px,#00ffb8 154.5px,#00ff93 163.5px,#00ff86 164.5px,#00ffa0 168.5px,#00ffa0 172px)"></i><i style="left:464px;width:1px;background:linear-gradient(#00ff7b 0px,#00ff78 5.5px,#00ff5a 6.5px,#18ff00 7.5px,#90ff00 8.5px,#00ff0c 9.5px,#00ff65 10.5px,#00ff7b 12.5px,#00ff7a 36.5px,#00ff4d 38.5px,#00ff7a 40.5px,#00ff73 50.5px,#00ff61 51.5px,#00ff84 54.5px,#00ffca 93.5px,#00ffca 125.5px,#72ff00 126.5px,#00ffca 127.5px,#00ffca 129.5px,#00ff74 130.5px,#00ffc0 131.5px,#00ffca 148.5px,#e3ff00 149.5px,#e3ff00 153.5px,#00ffbe 154.5px,#0f9 163.5px,#00ff8c 164.5px,#00ffa6 168.5px,#00ffa6 172px)"></i><i style="left:465px;width:1px;background:linear-gradient(#00ff7b 0px,#00ff78 5.5px,#00ff5a 6.5px,#18ff00 7.5px,#90ff00 8.5px,#00ff0c 9.5px,#00ff65 10.5px,#00ff7b 12.5px,#00ff7a 36.5px,#00ff4d 38.5px,#00ff7a 40.5px,#00ff73 50.5px,#00ff61 51.5px,#00ff84 54.5px,#00ffca 93.5px,#00ffbe 154.5px,#00ff9a 163.5px,#00ff8d 164.5px,#00ffa6 168.5px,#00ffa6 172px)"></i><i style="left:466px;width:1px;background:linear-gradient(#00ff7b 0px,#00ff78 5.5px,#00ff5a 6.5px,#18ff00 7.5px,#90ff00 8.5px,#00ff0c 9.5px,#00ff65 10.5px,#00ff7b 12.5px,#00ff7a 36.5px,#00ff4c 38.5px,#00ff7a 40.5px,#00ff72 50.5px,#00ff60 51.5px,#00ff83 54.5px,#00ffc5 93.5px,#00ffb9 154.5px,#00ff94 163.5px,#00ff87 164.5px,#00ffa1 168.5px,#00ffa1 172px)"></i><i style="left:467px;width:1px;background:linear-gradient(#00ff7b 0px,#00ff78 5.5px,#00ff5a 6.5px,#18ff00 7.5px,#90ff00 8.5px,#00ff0c 9.5px,#00ff65 10.5px,#00ff7b 12.5px,#00ff7a 36.5px,#00ff4c 38.5px,#00ff7a 40.5px,#00ff72 50.5px,#00ff5f 51.5px,#00ff82 54.5px,#00ffc0 94.5px,#00ffb4 154.5px,#00ff8f 163.5px,#00ff82 164.5px,#00ff9c 168.5px,#00ff9c 172px)"></i></div>
<svg class="L" width="1345" height="916" font-family='"Liberation Sans", sans-serif'><g class="pt"><text x="316.45" y="187" font-size="17" textLength="273.54" lengthAdjust="spacingAndGlyphs" fill="#000">RBSP-A/EMFISIS &#160;HFR Spectra Data</text><path d="M219.5 377V197.5H688.5V377" fill="none" stroke="#000" stroke-width="1.15"/><path d="M214 377H689" stroke="#000" stroke-width="1.2"/><path d="M208.0 374.5H219.5" stroke="#000" stroke-width="1"/><path d="M214.0 344.5H219.5" stroke="#000" stroke-width="1"/><path d="M214.0 326.5H219.5" stroke="#000" stroke-width="1"/><path d="M214.0 313.5H219.5" stroke="#000" stroke-width="1"/><path d="M214.0 303.5H219.5" stroke="#000" stroke-width="1"/><path d="M214.0 295.5H219.5" stroke="#000" stroke-width="1"/><path d="M214.0 289.5H219.5" stroke="#000" stroke-width="1"/><path d="M214.0 283.5H219.5" stroke="#000" stroke-width="1"/><path d="M214.0 278.5H219.5" stroke="#000" stroke-width="1"/><path d="M208.0 273.5H219.5" stroke="#000" stroke-width="1"/><path d="M214.0 242.5H219.5" stroke="#000" stroke-width="1"/><path d="M214.0 225.5H219.5" stroke="#000" stroke-width="1"/><path d="M214.0 212.5H219.5" stroke="#000" stroke-width="1"/><path d="M214.0 202.5H219.5" stroke="#000" stroke-width="1"/><text x="173.38" y="384.1" font-size="17" textLength="19.63" lengthAdjust="spacingAndGlyphs" fill="#000">10</text><text x="193.52" y="376.0" font-size="17" textLength="9.47" lengthAdjust="spacingAndGlyphs" fill="#000">4</text><text x="173.38" y="283.0" font-size="17" textLength="19.63" lengthAdjust="spacingAndGlyphs" fill="#000">10</text><text x="193.18" y="274.9" font-size="17" textLength="10.07" lengthAdjust="spacingAndGlyphs" fill="#000">5</text><text transform="translate(161.1,296.9) rotate(-90)" x="-1.44" y="0" font-size="17" textLength="21.30" lengthAdjust="spacingAndGlyphs" fill="#000">Hz</text><path d="M220.5 377v6" stroke="#000" stroke-width="1"/><path d="M238.5 377v12" stroke="#000" stroke-width="1"/><path d="M256.5 377v6" stroke="#000" stroke-width="1"/><path d="M274.5 377v6" stroke="#000" stroke-width="1"/><path d="M292.5 377v6" stroke="#000" stroke-width="1"/><path d="M310.5 377v6" stroke="#000" stroke-width="1"/><path d="M328.5 377v6" stroke="#000" stroke-width="1"/><path d="M346.5 377v6" stroke="#000" stroke-width="1"/><path d="M364.5 377v6" stroke="#000" stroke-width="1"/><path d="M382.5 377v6" stroke="#000" stroke-width="1"/><path d="M400.5 377v6" stroke="#000" stroke-width="1"/><path d="M418.5 377v6" stroke="#000" stroke-width="1"/><path d="M436.5 377v6" stroke="#000" stroke-width="1"/><path d="M454.5 377v12" stroke="#000" stroke-width="1"/><path d="M472.5 377v6" stroke="#000" stroke-width="1"/><path d="M490.5 377v6" stroke="#000" stroke-width="1"/><path d="M508.5 377v6" stroke="#000" stroke-width="1"/><path d="M526.5 377v6" stroke="#000" stroke-width="1"/><path d="M544.5 377v6" stroke="#000" stroke-width="1"/><path d="M562.5 377v6" stroke="#000" stroke-width="1"/><path d="M580.5 377v6" stroke="#000" stroke-width="1"/><path d="M598.5 377v6" stroke="#000" stroke-width="1"/><path d="M616.5 377v6" stroke="#000" stroke-width="1"/><path d="M634.5 377v6" stroke="#000" stroke-width="1"/><path d="M652.5 377v6" stroke="#000" stroke-width="1"/><path d="M670.5 377v12" stroke="#000" stroke-width="1"/><path d="M688.5 377v6" stroke="#000" stroke-width="1"/><text x="215.78" y="408.7" font-size="17" textLength="45.10" lengthAdjust="spacingAndGlyphs" fill="#000">00:00</text><text x="215.61" y="424.7" font-size="17" textLength="91.39" lengthAdjust="spacingAndGlyphs" fill="#000">2012-12-02</text><text x="647.88" y="408.7" font-size="17" textLength="45.10" lengthAdjust="spacingAndGlyphs" fill="#000">00:00</text><text x="647.71" y="424.7" font-size="17" textLength="91.26" lengthAdjust="spacingAndGlyphs" fill="#000">2012-12-03</text><text x="294.62" y="413.7" font-size="17" textLength="140.88" lengthAdjust="spacingAndGlyphs" fill="#000">RBSP-A/ECT-HOPE</text><text x="611.30" y="413.7" font-size="17" text-anchor="end" textLength="36.66" lengthAdjust="spacingAndGlyphs" fill="#000">Tpar</text><defs><linearGradient id="cb" x1="0" y1="1" x2="0" y2="0"><stop offset="0" stop-color="#000089"/><stop offset="0.1176" stop-color="#0000ff"/><stop offset="0.247" stop-color="#00ffff"/><stop offset="0.494" stop-color="#00ff00"/><stop offset="0.635" stop-color="#ffff00"/><stop offset="1" stop-color="#ff0000"/></linearGradient></defs><rect x="704" y="198" width="16" height="179" fill="url(#cb)"/><path d="M720.5 198V377.5" stroke="#000" stroke-width="1.3"/><path d="M720.5 377.5h12" stroke="#000" stroke-width="1"/><text x="736.38" y="386.9" font-size="17" textLength="19.51" lengthAdjust="spacingAndGlyphs" fill="#000">10</text><text x="756.23" y="379.0" font-size="17" textLength="24.73" lengthAdjust="spacingAndGlyphs" fill="#000">-22</text><path d="M720.5 363.5h6" stroke="#000" stroke-width="1"/><path d="M720.5 350.5h12" stroke="#000" stroke-width="1"/><text x="736.38" y="360.23999999999995" font-size="17" textLength="19.51" lengthAdjust="spacingAndGlyphs" fill="#000">10</text><text x="756.20" y="352.34" font-size="17" textLength="25.57" lengthAdjust="spacingAndGlyphs" fill="#000">-20</text><path d="M720.5 337.5h6" stroke="#000" stroke-width="1"/><path d="M720.5 323.5h12" stroke="#000" stroke-width="1"/><text x="736.38" y="333.58" font-size="17" textLength="19.51" lengthAdjust="spacingAndGlyphs" fill="#000">10</text><text x="756.23" y="325.68" font-size="17" textLength="24.59" lengthAdjust="spacingAndGlyphs" fill="#000">-18</text><path d="M720.5 310.5h6" stroke="#000" stroke-width="1"/><path d="M720.5 297.5h12" stroke="#000" stroke-width="1"/><text x="736.38" y="306.91999999999996" font-size="17" textLength="19.51" lengthAdjust="spacingAndGlyphs" fill="#000">10</text><text x="756.23" y="299.02" font-size="17" textLength="24.59" lengthAdjust="spacingAndGlyphs" fill="#000">-16</text><path d="M720.5 283.5h6" stroke="#000" stroke-width="1"/><path d="M720.5 270.5h12" stroke="#000" stroke-width="1"/><text x="736.38" y="280.26" font-size="17" textLength="19.51" lengthAdjust="spacingAndGlyphs" fill="#000">10</text><text x="756.24" y="272.36" font-size="17" textLength="24.33" lengthAdjust="spacingAndGlyphs" fill="#000">-14</text><path d="M720.5 257.5h6" stroke="#000" stroke-width="1"/><path d="M720.5 243.5h12" stroke="#000" stroke-width="1"/><text x="736.38" y="253.59999999999997" font-size="17" textLength="19.51" lengthAdjust="spacingAndGlyphs" fill="#000">10</text><text x="756.23" y="245.7" font-size="17" textLength="24.73" lengthAdjust="spacingAndGlyphs" fill="#000">-12</text><path d="M720.5 230.5h6" stroke="#000" stroke-width="1"/><path d="M720.5 217.5h12" stroke="#000" stroke-width="1"/><text x="736.38" y="226.93999999999997" font-size="17" textLength="19.51" lengthAdjust="spacingAndGlyphs" fill="#000">10</text><text x="756.20" y="219.04" font-size="17" textLength="25.57" lengthAdjust="spacingAndGlyphs" fill="#000">-10</text><path d="M720.5 203.5h6" stroke="#000" stroke-width="1"/><text transform="translate(805,338.7) rotate(-90)" x="-0.10" y="0" font-size="17" textLength="102.94" lengthAdjust="spacingAndGlyphs" fill="#000">V^2/m^2/Hz</text><path d="M219.5 621.5V440.5H688.5V621.5" fill="none" stroke="#000" stroke-width="1.2"/><path d="M214 621.5H689" stroke="#000" stroke-width="1.1"/><path d="M214.0 620.5H219.5" stroke="#000" stroke-width="1"/><path d="M208.0 599.5H219.5" stroke="#000" stroke-width="1"/><text x="178.54" y="604.8" font-size="17" textLength="23.30" lengthAdjust="spacingAndGlyphs" fill="#000">1.2</text><path d="M214.0 580.5H219.5" stroke="#000" stroke-width="1"/><path d="M208.0 562.5H219.5" stroke="#000" stroke-width="1"/><text x="178.49" y="567.803836841458" font-size="17" textLength="24.29" lengthAdjust="spacingAndGlyphs" fill="#000">1.4</text><path d="M214.0 545.5H219.5" stroke="#000" stroke-width="1"/><path d="M208.0 530.5H219.5" stroke="#000" stroke-width="1"/><text x="178.47" y="535.7563026115726" font-size="17" textLength="24.58" lengthAdjust="spacingAndGlyphs" fill="#000">1.6</text><path d="M214.0 515.5H219.5" stroke="#000" stroke-width="1"/><path d="M208.0 502.5H219.5" stroke="#000" stroke-width="1"/><text x="178.47" y="507.4883740540405" font-size="17" textLength="24.58" lengthAdjust="spacingAndGlyphs" fill="#000">1.8</text><path d="M214.0 489.5H219.5" stroke="#000" stroke-width="1"/><path d="M208.0 476.5H219.5" stroke="#000" stroke-width="1"/><text x="177.69" y="482.2018502961622" font-size="17" textLength="25.30" lengthAdjust="spacingAndGlyphs" fill="#000">2.0</text><path d="M214.0 465.5H219.5" stroke="#000" stroke-width="1"/><path d="M208.0 453.5H219.5" stroke="#000" stroke-width="1"/><text x="177.73" y="459.3274071431242" font-size="17" textLength="24.14" lengthAdjust="spacingAndGlyphs" fill="#000">2.2</text><path d="M214.0 443.5H219.5" stroke="#000" stroke-width="1"/><text transform="translate(165.7,579.8) rotate(-90)" x="-0.72" y="0" font-size="17" textLength="97.57" lengthAdjust="spacingAndGlyphs" fill="#000">e Tperp/Tpar</text><path d="M220.5 621.5v6" stroke="#000" stroke-width="1"/><path d="M238.5 621.5v12" stroke="#000" stroke-width="1"/><path d="M256.5 621.5v6" stroke="#000" stroke-width="1"/><path d="M274.5 621.5v6" stroke="#000" stroke-width="1"/><path d="M292.5 621.5v6" stroke="#000" stroke-width="1"/><path d="M310.5 621.5v6" stroke="#000" stroke-width="1"/><path d="M328.5 621.5v6" stroke="#000" stroke-width="1"/><path d="M346.5 621.5v6" stroke="#000" stroke-width="1"/><path d="M364.5 621.5v6" stroke="#000" stroke-width="1"/><path d="M382.5 621.5v6" stroke="#000" stroke-width="1"/><path d="M400.5 621.5v6" stroke="#000" stroke-width="1"/><path d="M418.5 621.5v6" stroke="#000" stroke-width="1"/><path d="M436.5 621.5v6" stroke="#000" stroke-width="1"/><path d="M454.5 621.5v12" stroke="#000" stroke-width="1"/><path d="M472.5 621.5v6" stroke="#000" stroke-width="1"/><path d="M490.5 621.5v6" stroke="#000" stroke-width="1"/><path d="M508.5 621.5v6" stroke="#000" stroke-width="1"/><path d="M526.5 621.5v6" stroke="#000" stroke-width="1"/><path d="M544.5 621.5v6" stroke="#000" stroke-width="1"/><path d="M562.5 621.5v6" stroke="#000" stroke-width="1"/><path d="M580.5 621.5v6" stroke="#000" stroke-width="1"/><path d="M598.5 621.5v6" stroke="#000" stroke-width="1"/><path d="M616.5 621.5v6" stroke="#000" stroke-width="1"/><path d="M634.5 621.5v6" stroke="#000" stroke-width="1"/><path d="M652.5 621.5v6" stroke="#000" stroke-width="1"/><path d="M670.5 621.5v12" stroke="#000" stroke-width="1"/><path d="M688.5 621.5v6" stroke="#000" stroke-width="1"/><path d="M220.0 522.3L220.2 489.0 220.4 506.4 220.6 491.7 220.8 519.3 221.0 480.4 221.2 521.4 221.4 480.3 221.6 478.0 221.8 508.3 222.0 484.5 222.2 497.5 222.4 496.8 222.6 471.9 222.8 494.4 223.0 503.0 223.2 503.4 223.4 485.9 223.6 487.1 223.8 511.2 224.0 513.5 224.2 494.8 224.4 482.3 224.6 484.2 224.8 500.8 225.0 475.6 225.2 508.7 225.4 494.1 225.6 478.2 225.8 474.9 226.0 477.6 226.2 499.6 226.4 473.8 226.6 467.3 226.8 472.4 227.0 465.2 227.2 502.6 227.4 477.0 227.6 484.3 227.8 484.1 228.0 488.8 228.2 470.1 228.4 488.8 228.6 483.8 228.8 474.0 229.0 465.4 229.2 486.6 229.4 467.2 229.6 486.4 229.8 490.6 230.0 479.1 230.2 485.1 230.4 473.3 230.6 481.8 230.8 487.0 231.0 481.0 231.2 476.0 231.4 468.9 231.6 472.6 231.8 470.9 232.0 466.6 232.2 465.8 232.4 470.9 232.6 464.2 232.8 466.8 233.0 478.7 233.2 477.7 233.4 477.5 233.6 467.7 233.8 480.7 234.0 475.0 234.2 466.5 234.4 459.7 234.6 480.3 234.8 493.7 235.0 462.4 235.2 491.8 235.4 470.6 235.6 471.4 235.8 464.9 236.0 467.2 236.2 475.8 236.4 503.2 236.6 468.9 236.8 469.2 237.0 491.0 237.2 484.1 237.4 479.9 237.6 493.0 237.8 509.0 238.0 495.1 238.2 498.8 238.4 504.8 238.6 508.2 238.8 487.2 239.0 506.9 239.2 488.4 239.4 496.4 239.6 511.0 239.8 494.8 240.0 500.3 240.2 502.1 240.4 500.2 240.6 503.4 240.8 507.7 241.0 511.7 241.2 501.8 241.4 512.6 241.6 507.2 241.8 504.1 242.0 514.3 242.2 500.1 242.4 512.3 242.6 499.4 242.8 498.8 243.0 505.1 243.2 517.0 243.4 507.1 243.6 521.5 243.8 519.5 244.0 521.6 244.2 512.5 244.4 517.5 244.6 521.2 244.8 524.1 245.0 517.8 245.2 520.2 245.4 523.5 245.6 523.8 245.8 524.8 246.0 514.2 246.2 534.0 246.4 527.4 246.6 528.0 246.8 528.6 247.0 520.8 247.2 523.5 247.4 530.8 247.6 517.2 247.8 535.9 248.0 527.9 248.2 532.7 248.4 535.0 248.6 528.7 248.8 527.9 249.0 532.1 249.2 532.6 249.4 525.3 249.6 533.9 249.8 538.7 250.0 533.8 250.2 531.6 250.4 545.6 250.6 527.4 250.8 528.1 251.0 529.6 251.2 539.0 251.4 535.7 251.6 543.7 251.8 536.0 252.0 546.1 252.2 533.3 252.4 543.6 252.6 548.4 252.8 537.6 253.0 535.1 253.2 542.0 253.4 541.5 253.6 536.6 253.8 550.3 254.0 542.3 254.2 535.2 254.4 544.9 254.6 543.9 254.8 537.2 255.0 542.5 255.2 544.0 255.4 549.5 255.6 551.6 255.8 555.0 256.0 555.8 256.2 555.7 256.4 556.3 256.6 558.2 256.8 547.1 257.0 552.5 257.2 555.9 257.4 561.7 257.6 559.9 257.8 559.0 258.0 558.7 258.2 553.4 258.4 566.1 258.6 557.6 258.8 563.0 259.0 560.3 259.2 561.7 259.4 558.3 259.6 558.6 259.8 559.1 260.0 561.8 260.2 561.7 260.4 566.2 260.6 562.7 260.8 555.6 261.0 552.3 261.2 555.1 261.4 554.3 261.6 553.5 261.8 555.5 262.0 553.9 262.2 558.0 262.4 556.6 262.6 560.8 262.8 553.3 263.0 564.0 263.2 553.6 263.4 552.1 263.6 556.8 263.8 556.6 264.0 564.3 264.2 562.0 264.4 561.8 264.6 551.4 264.8 562.9 265.0 558.6 265.2 558.6 265.4 562.8 265.6 558.0 265.8 556.0 266.0 556.1 266.2 564.6 266.4 554.9 266.6 562.6 266.8 556.5 267.0 560.1 267.2 557.7 267.4 556.3 267.6 556.5 267.8 557.4 268.0 564.2 268.2 560.2 268.4 562.5 268.6 562.3 268.8 562.8 269.0 564.0 269.2 561.8 269.4 570.1 269.6 568.9 269.8 561.0 270.0 565.6 270.2 564.2 270.4 569.3 270.6 565.4 270.8 564.0 271.0 566.1 271.2 571.8 271.4 568.1 271.6 569.3 271.8 569.9 272.0 572.8 272.2 571.3 272.4 568.7 272.6 570.3 272.8 567.0 273.0 573.3 273.2 569.2 273.4 568.2 273.6 571.0 273.8 569.5 274.0 567.3 274.2 573.2 274.4 572.0 274.6 576.5 274.8 572.1 275.0 575.0 275.2 573.7 275.4 575.0 275.6 574.8 275.8 573.9 276.0 576.6 276.2 572.9 276.4 572.0 276.6 575.1 276.8 568.9 277.0 578.1 277.2 573.7 277.4 576.6 277.6 575.9 277.8 579.0 278.0 574.2 278.2 575.1 278.4 579.8 278.6 577.3 278.8 572.7 279.0 568.2 279.2 573.4 279.4 569.1 279.6 576.0 279.8 574.3 280.0 577.5 280.2 580.3 280.4 575.2 280.6 573.3 280.8 579.3 281.0 579.6 281.2 569.5 281.4 571.6 281.6 577.1 281.8 577.1 282.0 577.5 282.2 571.6 282.4 574.0 282.6 572.6 282.8 577.5 283.0 567.2 283.2 572.2 283.4 575.4 283.6 570.7 283.8 571.9 284.0 579.1 284.2 572.4 284.4 575.6 284.6 577.3 284.8 571.1 285.0 566.5 285.2 578.0 285.4 566.1 285.6 566.1 285.8 567.8 286.0 573.2 286.2 577.4 286.4 577.4 286.6 571.3 286.8 574.0 287.0 568.1 287.2 570.6 287.4 574.7 287.6 572.6 287.8 571.3 288.0 576.1 288.2 575.1 288.4 570.4 288.6 572.2 288.8 565.1 289.0 573.4 289.2 566.6 289.4 578.7 289.6 566.0 289.8 576.1 290.0 576.0 290.2 577.6 290.4 575.3 290.6 579.9 290.8 575.5 291.0 572.6 291.2 565.5 291.4 570.3 291.6 574.4 291.8 565.4 292.0 569.9 292.2 563.9 292.4 571.6 292.6 569.6 292.8 576.0 293.0 576.8 293.2 579.1 293.4 567.6 293.6 571.7 293.8 577.1 294.0 563.9 294.2 570.3 294.4 577.7 294.6 579.3 294.8 564.9 295.0 580.0 295.2 570.3 295.4 563.5 295.6 572.5 295.8 574.4 296.0 576.5 296.2 576.4 296.4 565.2 296.6 565.1 296.8 573.0 297.0 565.3 297.2 571.6 297.4 568.6 297.6 560.8 297.8 577.2 298.0 561.5 298.2 564.2 298.4 565.5 298.6 564.1 298.8 566.9 299.0 566.3 299.2 570.7 299.4 573.5 299.6 552.4 299.8 551.0 300.0 550.5 300.2 567.7 300.4 556.7 300.6 558.5 300.8 569.5 301.0 549.8 301.2 545.9 301.4 551.6 301.6 545.2 301.8 558.3 302.0 557.7 302.2 550.9 302.4 549.3 302.6 557.3 302.8 543.7 303.0 554.3 303.2 561.3 303.4 549.2 303.6 560.0 303.8 547.3 304.0 562.5 304.2 542.7 304.4 561.4 304.6 540.4 304.8 543.8 305.0 550.1 305.2 554.7 305.4 544.3 305.6 553.3 305.8 555.2 306.0 546.3 306.2 540.8 306.4 554.2 306.6 553.6 306.8 549.2 307.0 553.4 307.2 543.7 307.4 548.0 307.6 553.4 307.8 547.3 308.0 543.1 308.2 550.7 308.4 554.7 308.6 551.2 308.8 550.3 309.0 548.7 309.2 548.6 309.4 555.9 309.6 547.9 309.8 548.3 310.0 542.5 310.2 542.1 310.4 559.2 310.6 553.1 310.8 561.3 311.0 550.0 311.2 557.0 311.4 545.7 311.6 551.9 311.8 561.1 312.0 558.8 312.2 546.8 312.4 544.3 312.6 543.6 312.8 556.8 313.0 547.9 313.2 558.8 313.4 568.2 313.6 557.9 313.8 563.1 314.0 562.1 314.2 549.4 314.4 552.1 314.6 560.5 314.8 571.6 315.0 572.9 315.2 560.2 315.4 567.1 315.6 572.7 315.8 551.8 316.0 561.9 316.2 558.8 316.4 562.8 316.6 558.7 316.8 561.0 317.0 562.5 317.2 551.6 317.4 550.1 317.6 545.6 317.8 569.8 318.0 558.6 318.2 551.2 318.4 545.3 318.6 554.0 318.8 552.6 319.0 557.8 319.2 545.0 319.4 547.1 319.6 551.3 319.8 542.4 320.0 549.7 320.2 543.0 320.4 555.7 320.6 556.4 320.8 555.6 321.0 540.1 321.2 537.8 321.4 532.7 321.6 538.9 321.8 539.3 322.0 550.1 322.2 537.0 322.4 527.4 322.6 538.4 322.8 532.2 323.0 545.3 323.2 540.5 323.4 528.2 323.6 527.8 323.8 526.6 324.0 532.6 324.2 537.5 324.4 534.5 324.6 532.3 324.8 532.0 325.0 528.4 325.2 533.6 325.4 534.0 325.6 524.4 325.8 531.5 326.0 528.8 326.2 523.6 326.4 525.3 326.6 518.0 326.8 525.0 327.0 519.2 327.2 518.3 327.4 522.4 327.6 511.8 327.8 509.7 328.0 516.6 328.2 511.8 328.4 513.0 328.6 508.1 328.8 510.5 329.0 518.8 329.2 515.7 329.4 504.9 329.6 513.1 329.8 513.6 330.0 521.1 330.2 518.7 330.4 518.6 330.6 502.8 330.8 520.4 331.0 509.9 331.2 510.9 331.4 502.2 331.6 510.7 331.8 508.6 332.0 500.1 332.2 504.5 332.4 503.7 332.6 497.9 332.8 497.9 333.0 505.7 333.2 497.8 333.4 493.1 333.6 484.1 333.8 499.6 334.0 488.4 334.2 503.7 334.4 507.4 334.6 491.2 334.8 500.4 335.0 473.3 335.2 468.0 335.4 479.5 335.6 490.5 335.8 480.3 336.0 492.9 336.2 498.6 336.4 482.1 336.6 479.3 336.8 467.0 337.0 462.9 337.2 494.1 337.4 463.9 337.6 482.5 337.8 471.1 338.0 487.5 338.2 477.9 338.4 490.6 338.6 480.0 338.8 467.3 339.0 477.4 339.2 475.5 339.4 488.0 339.6 501.2 339.8 485.3 340.0 494.6 340.2 469.1 340.4 493.3 340.6 479.8 340.8 471.0 341.0 494.7 341.2 484.5 341.4 478.8 341.6 493.1 341.8 502.6 342.0 488.6 342.2 496.0 342.4 501.5 342.6 485.6 342.8 483.8 343.0 472.4 343.2 479.2 343.4 494.2 343.6 495.1 343.8 483.0 344.0 484.3 344.2 496.3 344.4 469.1 344.6 504.2 344.8 486.2 345.0 504.9 345.2 478.8 345.4 503.6 345.6 485.0 345.8 489.4 346.0 475.3 346.2 485.6 346.4 506.3 346.6 478.3 346.8 478.0 347.0 478.4 347.2 465.1 347.4 474.0 347.6 498.8 347.8 484.6 348.0 495.4 348.2 503.2 348.4 477.9 348.6 471.6 348.8 498.7 349.0 470.0 349.2 489.2 349.4 508.9 349.6 479.2 349.8 471.9 350.0 506.1 350.2 505.5 350.4 481.8 350.6 500.3 350.8 490.9 351.0 506.3 351.2 482.7 351.4 510.8 351.6 504.3 351.8 484.8 352.0 479.1 352.2 504.4 352.4 517.7 352.6 518.2 352.8 506.5 353.0 479.8 353.2 493.5 353.4 496.1 353.6 486.1 353.8 510.3 354.0 494.7 354.2 493.4 354.4 498.0 354.6 484.2 354.8 496.8 355.0 518.4 355.2 528.0 355.4 520.3 355.6 487.2 355.8 523.2 356.0 489.9 356.2 491.4 356.4 533.2 356.6 496.5 356.8 532.3 357.0 494.3 357.2 492.3 357.4 494.5 357.6 519.3 357.8 519.6 358.0 519.5 358.2 519.9 358.4 545.5 358.6 508.1 358.8 513.6 359.0 538.1 359.2 531.0 359.4 547.5 359.6 540.7 359.8 525.3 360.0 532.0 360.2 537.5 360.4 565.3M373.0 549.9L373.2 537.0 373.4 530.6 373.6 531.1 373.8 521.9 374.0 522.4 374.2 501.4 374.4 498.7 374.6 513.9 374.8 506.1 375.0 503.0 375.2 498.8 375.4 492.4 375.6 476.8 375.8 493.2 376.0 487.4 376.2 491.7 376.4 475.0 376.6 495.7 376.8 478.5 377.0 486.2 377.2 475.9 377.4 476.5 377.6 481.8 377.8 501.4 378.0 502.4 378.2 489.9 378.4 479.0 378.6 487.6 378.8 486.6 379.0 478.1 379.2 500.3 379.4 477.2 379.6 500.2 379.8 478.4 380.0 501.6 380.2 495.1 380.4 493.7 380.6 495.9 380.8 490.6 381.0 490.9 381.2 485.8 381.4 481.0 381.6 490.2 381.8 477.7 382.0 481.9 382.2 477.8 382.4 478.8 382.6 473.5 382.8 485.4 383.0 482.4 383.2 476.9 383.4 483.6 383.6 482.0 383.8 488.6 384.0 486.2 384.2 470.2 384.4 484.2 384.6 493.7 384.8 497.6 385.0 468.5 385.2 469.6 385.4 471.0 385.6 490.8 385.8 476.3 386.0 474.0 386.2 490.2 386.4 483.3 386.6 468.6 386.8 468.2 387.0 459.5 387.2 480.2 387.4 466.1 387.6 487.0 387.8 486.0 388.0 476.4 388.2 489.4 388.4 469.2 388.6 455.1 388.8 479.9 389.0 485.8 389.2 461.3 389.4 468.6 389.6 492.5 389.8 474.5 390.0 483.6 390.2 486.7 390.4 460.4 390.6 496.1 390.8 482.4 391.0 495.1 391.2 487.6 391.4 504.0 391.6 499.6 391.8 484.7 392.0 468.6 392.2 485.9 392.4 489.6 392.6 489.3 392.8 494.4 393.0 504.4 393.2 491.9 393.4 509.8 393.6 479.4 393.8 482.7 394.0 492.1 394.2 486.7 394.4 513.2 394.6 475.6 394.8 494.9 395.0 486.4 395.2 489.5 395.4 476.9 395.6 464.5 395.8 456.2 396.0 460.1 396.2 466.9 396.4 471.1 396.6 468.8 396.8 454.3 397.0 471.2 397.2 477.2 397.4 477.2 397.6 469.2 397.8 470.5 398.0 476.6 398.2 477.9 398.4 471.1 398.6 472.3 398.8 461.7 399.0 482.3 399.2 469.6 399.4 477.3 399.6 487.1 399.8 468.1 400.0 486.7 400.2 470.4 400.4 479.2 400.6 477.9 400.8 498.7 401.0 489.1 401.2 480.0 401.4 493.0 401.6 479.6 401.8 492.5 402.0 495.7 402.2 489.4 402.4 483.7 402.6 494.2 402.8 501.0 403.0 499.2 403.2 489.0 403.4 486.6 403.6 485.9 403.8 495.9 404.0 501.0 404.2 482.0 404.4 498.0 404.6 501.5 404.8 504.6 405.0 482.4 405.2 498.5 405.4 497.1 405.6 487.5 405.8 481.2 406.0 493.2 406.2 498.7 406.4 497.9 406.6 497.2 406.8 501.4 407.0 488.4 407.2 499.6 407.4 485.5 407.6 480.2 407.8 485.3 408.0 476.5 408.2 483.5 408.4 485.8 408.6 484.1 408.8 498.2 409.0 497.3 409.2 479.4 409.4 491.5 409.6 490.3 409.8 482.5 410.0 486.5 410.2 482.9 410.4 471.7 410.6 484.0 410.8 476.5 411.0 488.6 411.2 488.8 411.4 486.6 411.6 481.2 411.8 481.1 412.0 489.3 412.2 474.8 412.4 471.5 412.6 478.8 412.8 475.6 413.0 491.2 413.2 489.4 413.4 471.8 413.6 476.4 413.8 491.1 414.0 474.2 414.2 480.0 414.4 487.8 414.6 491.6 414.8 485.4 415.0 494.3 415.2 480.7 415.4 473.4 415.6 471.7 415.8 494.3 416.0 476.4 416.2 473.0 416.4 491.7 416.6 488.9 416.8 490.7 417.0 496.2 417.2 494.4 417.4 489.5 417.6 475.9 417.8 490.4 418.0 479.3 418.2 482.8 418.4 494.6 418.6 490.5 418.8 495.5 419.0 484.3 419.2 476.1 419.4 494.8 419.6 487.5 419.8 497.6 420.0 497.5 420.2 487.9 420.4 480.5 420.6 499.2 420.8 494.4 421.0 495.5 421.2 479.9 421.4 491.0 421.6 482.3 421.8 493.4 422.0 503.0 422.2 491.8 422.4 494.2 422.6 482.5 422.8 482.2 423.0 496.0 423.2 488.4 423.4 493.1 423.6 495.3 423.8 487.6 424.0 500.8 424.2 497.9 424.4 491.1 424.6 501.8 424.8 487.8 425.0 502.5 425.2 508.7 425.4 489.2 425.6 498.0 425.8 500.5 426.0 508.6 426.2 487.5 426.4 502.4 426.6 499.8 426.8 488.4 427.0 490.4 427.2 501.9 427.4 495.0 427.6 488.0 427.8 500.5 428.0 505.0 428.2 491.8 428.4 505.0 428.6 503.6 428.8 501.9 429.0 495.3 429.2 501.6 429.4 505.0 429.6 502.3 429.8 507.0 430.0 496.6 430.2 500.6 430.4 502.3 430.6 511.9 430.8 489.9 431.0 496.4 431.2 506.6 431.4 512.1 431.6 495.7 431.8 513.3 432.0 501.5 432.2 496.9 432.4 512.8 432.6 505.9 432.8 492.1 433.0 504.2 433.2 513.5 433.4 500.5 433.6 508.5 433.8 513.9 434.0 512.2 434.2 514.3 434.4 501.1 434.6 503.0 434.8 502.8 435.0 509.8 435.2 498.3 435.4 508.4 435.6 507.8 435.8 503.5 436.0 501.1 436.2 503.7 436.4 500.6 436.6 495.1 436.8 516.5 437.0 509.2 437.2 506.1 437.4 505.4 437.6 508.5 437.8 505.1 438.0 511.1 438.2 495.3 438.4 512.2 438.6 514.2 438.8 511.8 439.0 505.0 439.2 510.0 439.4 502.4 439.6 509.4 439.8 500.0 440.0 502.7 440.2 504.5 440.4 517.7 440.6 515.1 440.8 510.2 441.0 494.8 441.2 509.3 441.4 498.8 441.6 509.8 441.8 493.2 442.0 503.6 442.2 514.8 442.4 511.7 442.6 509.2 442.8 514.2 443.0 493.4 443.2 494.4 443.4 500.5 443.6 509.4 443.8 494.0 444.0 512.4 444.2 497.7 444.4 493.0 444.6 513.4 444.8 510.7 445.0 510.3 445.2 511.1 445.4 502.2 445.6 500.1 445.8 492.2 446.0 510.6 446.2 499.2 446.4 490.5 446.6 494.6 446.8 496.7 447.0 498.0 447.2 497.2 447.4 496.8 447.6 503.9 447.8 511.5 448.0 502.3 448.2 506.2 448.4 502.4 448.6 504.0 448.8 492.5 449.0 496.6 449.2 499.5 449.4 510.8 449.6 503.3 449.8 513.2 450.0 512.1 450.2 507.1 450.4 492.0 450.6 502.6 450.8 492.1 451.0 504.2 451.2 493.4 451.4 497.4 451.6 513.5 451.8 507.8 452.0 502.8 452.2 491.2 452.4 503.0 452.6 494.9 452.8 505.8 453.0 497.6 453.2 491.9 453.4 503.4 453.6 499.6 453.8 494.9 454.0 507.5 454.2 497.5 454.4 495.1 454.6 505.0 454.8 498.7 455.0 509.2 455.2 495.3 455.4 507.3 455.6 495.5 455.8 493.5 456.0 495.1 456.2 505.6 456.4 505.2 456.6 488.4 456.8 488.3 457.0 492.6 457.2 499.2 457.4 484.9 457.6 503.1 457.8 497.8 458.0 478.3 458.2 493.3 458.4 473.0 458.6 476.3 458.8 481.4 459.0 478.3 459.2 475.9 459.4 472.1 459.6 484.9 459.8 490.5 460.0 474.9 460.2 487.6 460.4 478.1 460.6 499.7 460.8 490.4 461.0 478.9 461.2 504.0 461.4 504.3 461.6 506.6 461.8 488.3 462.0 493.2 462.2 496.6 462.4 490.6 462.6 489.2 462.8 494.6 463.0 506.8 463.2 487.6 463.4 486.9 463.6 492.7 463.8 512.2 464.0 493.4 464.2 501.7 464.4 506.6 464.6 517.0 464.8 497.6 465.0 493.6 465.2 493.4 465.4 502.0 465.6 493.7 465.8 501.3 466.0 508.8 466.2 511.4 466.4 501.6 466.6 504.2 466.8 508.0 467.0 499.2 467.2 510.5 467.4 500.3 467.6 517.8 467.8 516.0 468.0 520.0 468.2 515.7 468.4 517.4 468.6 524.5 468.8 497.9 469.0 526.3 469.2 519.7 469.4 512.0 469.6 499.1 469.8 512.3 470.0 526.6 470.2 512.0 470.4 526.2 470.6 519.6 470.8 523.5 471.0 510.3 471.2 529.2 471.4 520.4 471.6 524.6 471.8 524.7 472.0 518.7 472.2 517.2 472.4 502.9 472.6 523.9 472.8 528.4 473.0 519.5 473.2 523.8 473.4 498.8 473.6 506.0 473.8 504.9 474.0 517.5 474.2 509.6 474.4 493.9 474.6 493.3 474.8 500.4 475.0 512.2 475.2 499.6 475.4 497.0 475.6 493.6 475.8 488.4 476.0 500.8 476.2 506.4 476.4 499.6 476.6 486.3 476.8 491.8 477.0 492.6 477.2 512.7 477.4 490.7 477.6 506.5 477.8 494.4 478.0 489.6 478.2 492.9 478.4 513.1 478.6 513.5 478.8 500.3 479.0 497.5 479.2 512.6 479.4 503.7 479.6 512.9 479.8 512.9 480.0 504.3 480.2 505.9 480.4 504.6 480.6 498.0 480.8 502.1 481.0 490.4 481.2 502.7 481.4 487.8 481.6 490.9 481.8 505.2 482.0 508.3 482.2 495.9 482.4 502.0 482.6 508.7 482.8 513.4 483.0 494.3 483.2 499.9 483.4 490.7 483.6 501.4 483.8 496.7 484.0 498.2 484.2 504.3 484.4 514.7 484.6 517.6 484.8 531.3 485.0 522.2 485.2 506.2 485.4 515.0 485.6 536.1 485.8 538.3 486.0 521.2 486.2 512.1 486.4 516.8 486.6 510.4 486.8 534.6 487.0 536.5 487.2 544.0 487.4 520.3 487.6 538.9 487.8 531.2 488.0 558.3 488.2 519.5 488.4 539.6 488.6 551.1 488.8 535.4 489.0 532.0 489.2 518.6 489.4 542.9 489.6 539.9 489.8 535.9 490.0 532.5 490.2 544.1 490.4 534.8 490.6 529.9 490.8 541.8 491.0 520.2 491.2 538.8 491.4 525.4 491.6 542.2 491.8 522.9 492.0 517.4 492.2 518.1 492.4 513.4 492.6 517.0 492.8 521.3 493.0 504.6 493.2 522.7 493.4 506.0 493.6 514.8 493.8 494.6 494.0 513.4 494.2 510.8 494.4 529.2 494.6 492.7 494.8 513.3 495.0 511.1 495.2 485.3 495.4 500.9 495.6 503.2 495.8 499.0 496.0 500.7 496.2 501.2 496.4 507.2 496.6 496.3 496.8 512.6 497.0 502.7 497.2 486.4 497.4 521.0 497.6 502.2 497.8 490.4 498.0 506.9 498.2 496.4 498.4 512.5 498.6 494.5 498.8 519.7 499.0 515.8 499.2 503.4 499.4 498.8 499.6 496.5 499.8 475.8 500.0 488.1 500.2 488.1 500.4 512.3 500.6 480.0 500.8 483.4 501.0 507.8 501.2 481.9 501.4 515.2 501.6 514.9 501.8 514.9 502.0 502.1 502.2 496.1 502.4 482.7 502.6 486.6 502.8 482.1 503.0 506.4 503.2 509.2 503.4 482.5 503.6 510.0 503.8 482.8 504.0 513.1 504.2 497.1 504.4 480.9 504.6 480.4 504.8 492.3 505.0 492.3 505.2 507.8 505.4 488.2 505.6 487.0 505.8 499.5 506.0 497.2 506.2 483.4 506.4 482.4 506.6 495.3 506.8 497.5 507.0 498.3 507.2 503.7 507.4 496.1 507.6 477.2 507.8 488.6 508.0 496.6 508.2 485.8 508.4 501.9 508.6 483.0 508.8 488.1 509.0 487.6 509.2 490.2 509.4 483.8 509.6 466.1 509.8 461.9 510.0 479.4 510.2 465.1 510.4 462.1 510.6 482.9 510.8 465.8 511.0 499.2 511.2 463.9 511.4 469.0 511.6 487.0 511.8 489.8 512.0 506.5 512.2 478.6 512.4 491.8 512.6 486.9 512.8 489.6 513.0 476.1 513.2 496.5 513.4 486.3 513.6 486.4 513.8 489.5 514.0 484.5 514.2 502.8 514.4 492.5 514.6 512.5 514.8 496.4 515.0 495.2 515.2 516.8 515.4 503.0 515.6 507.4 515.8 521.0 516.0 520.9 516.2 514.9 516.4 497.7 516.6 531.8 516.8 528.6 517.0 490.5 517.2 501.6 517.4 494.1 517.6 509.3 517.8 506.6 518.0 491.5 518.2 512.2 518.4 515.1 518.6 508.0 518.8 533.4 519.0 510.3 519.2 518.3 519.4 511.0 519.6 499.4 519.8 511.5 520.0 523.7 520.2 544.2 520.4 514.2 520.6 508.5 520.8 517.6 521.0 520.3 521.2 513.5 521.4 535.4 521.6 522.8 521.8 533.7 522.0 539.0 522.2 532.0 522.4 561.5 522.6 530.1M534.0 569.9L534.2 550.5 534.4 547.9 534.6 543.6 534.8 539.7 535.0 550.6 535.2 533.3 535.4 544.6 535.6 550.8 535.8 548.5 536.0 515.9 536.2 535.3 536.4 506.1 536.6 512.7 536.8 534.8 537.0 517.0 537.2 495.2 537.4 503.6 537.6 503.5 537.8 531.7 538.0 497.2 538.2 513.8 538.4 492.1 538.6 492.7 538.8 504.0 539.0 490.9 539.2 500.9 539.4 513.8 539.6 516.3 539.8 492.5 540.0 492.1 540.2 497.4 540.4 525.9 540.6 511.5 540.8 490.4 541.0 513.4 541.2 481.3 541.4 516.4 541.6 509.3 541.8 486.6 542.0 505.2 542.2 515.7 542.4 505.9 542.6 514.2 542.8 482.4 543.0 503.0 543.2 517.4 543.4 472.4 543.6 475.0 543.8 488.7 544.0 500.6 544.2 492.0 544.4 491.4 544.6 482.0 544.8 478.6 545.0 503.3 545.2 480.0 545.4 491.4 545.6 484.2 545.8 482.6 546.0 492.1 546.2 496.2 546.4 494.7 546.6 510.4 546.8 479.2 547.0 468.7 547.2 468.4 547.4 489.4 547.6 477.8 547.8 505.3 548.0 474.7 548.2 493.1 548.4 493.5 548.6 494.6 548.8 473.6 549.0 499.8 549.2 503.0 549.4 481.5 549.6 481.1 549.8 469.1 550.0 489.7 550.2 482.2 550.4 486.2 550.6 493.4 550.8 498.4 551.0 474.8 551.2 493.6 551.4 483.9 551.6 499.7 551.8 482.4 552.0 488.2 552.2 486.3 552.4 484.1 552.6 496.8 552.8 506.3 553.0 500.8 553.2 489.7 553.4 508.5 553.6 489.9 553.8 511.4 554.0 517.9 554.2 530.8 554.4 507.2 554.6 521.6 554.8 538.7 555.0 508.8 555.2 513.2 555.4 505.5 555.6 517.9 555.8 526.4 556.0 541.0 556.2 538.3 556.4 520.6 556.6 528.6 556.8 532.3 557.0 523.8 557.2 517.0 557.4 527.9 557.6 538.4 557.8 539.9 558.0 524.6 558.2 534.9 558.4 526.8 558.6 525.0 558.8 546.7 559.0 533.0 559.2 534.5 559.4 545.7 559.6 521.7 559.8 537.5 560.0 532.0 560.2 526.3 560.4 533.1 560.6 545.6 560.8 535.9 561.0 550.4 561.2 543.3 561.4 525.4 561.6 550.0 561.8 542.9 562.0 538.1 562.2 543.9 562.4 550.4 562.6 521.9 562.8 522.6 563.0 525.2 563.2 559.6 563.4 547.7 563.6 539.0 563.8 539.0 564.0 550.9 564.2 530.9 564.4 572.2 564.6 562.4 564.8 565.6 565.0 563.9 565.2 574.5 565.4 544.9 565.6 561.8 565.8 549.6 566.0 543.6 566.2 583.7 566.4 572.6 566.6 569.8 566.8 577.3 567.0 580.5 567.2 578.5 567.4 558.2 567.6 580.7 567.8 580.0 568.0 581.1 568.2 561.0 568.4 563.5 568.6 586.3 568.8 565.9 569.0 573.6 569.2 576.8 569.4 567.1 569.6 565.1 569.8 591.2 570.0 589.1 570.2 588.2 570.4 572.8 570.6 570.8 570.8 594.2 571.0 577.7 571.2 567.2 571.4 586.7 571.6 591.1 571.8 580.1 572.0 578.6 572.2 580.1 572.4 574.4 572.6 577.6 572.8 583.1 573.0 581.5 573.2 585.9 573.4 594.3 573.6 601.0 573.8 576.8 574.0 566.2 574.2 576.7 574.4 587.0 574.6 593.0 574.8 595.5 575.0 590.1 575.2 584.2 575.4 577.3 575.6 583.0 575.8 582.4 576.0 595.9 576.2 571.5 576.4 569.8 576.6 582.5 576.8 603.1 577.0 597.1 577.2 604.4 577.4 576.7 577.6 605.9 577.8 568.2 578.0 588.5 578.2 590.8 578.4 584.6 578.6 577.6 578.8 604.0 579.0 578.5 579.2 573.6 579.4 571.1 579.6 574.7 579.8 574.9 580.0 590.8 580.2 583.1 580.4 578.1 580.6 604.1 580.8 590.3 581.0 576.4 581.2 603.9 581.4 576.0 581.6 589.5 581.8 598.3 582.0 586.6 582.2 580.1 582.4 590.4 582.6 592.0 582.8 582.3 583.0 591.1 583.2 573.3 583.4 573.3 583.6 598.2 583.8 604.1 584.0 600.3 584.2 600.1 584.4 583.9 584.6 587.5 584.8 591.9 585.0 606.3 585.2 587.6 585.4 574.9 585.6 598.9 585.8 576.8 586.0 578.9 586.2 578.7 586.4 582.8 586.6 603.6 586.8 579.5 587.0 581.4 587.2 588.3 587.4 595.3 587.6 576.6 587.8 585.0 588.0 590.4 588.2 588.1 588.4 583.6 588.6 594.6 588.8 586.7 589.0 602.8 589.2 597.8 589.4 578.6 589.6 587.9 589.8 588.5 590.0 603.3 590.2 606.4 590.4 585.3 590.6 584.8 590.8 589.6 591.0 584.5 591.2 584.0 591.4 582.5 591.6 575.7 591.8 592.5 592.0 593.6 592.2 595.4 592.4 586.6 592.6 578.1 592.8 603.3 593.0 579.8 593.2 580.0 593.4 587.5 593.6 604.7 593.8 589.3 594.0 583.0 594.2 590.7 594.4 581.4 594.6 581.1 594.8 599.1 595.0 595.1 595.2 593.6 595.4 589.3 595.6 593.9 595.8 600.4 596.0 595.1 596.2 595.8 596.4 593.0 596.6 590.8 596.8 597.9 597.0 604.9 597.2 593.3 597.4 593.9 597.6 594.7 597.8 581.7 598.0 605.4 598.2 599.2 598.4 591.9 598.6 591.4 598.8 591.8 599.0 584.0 599.2 605.7 599.4 609.1 599.6 597.6 599.8 587.5 600.0 598.7 600.2 577.2 600.4 589.4 600.6 595.6 600.8 594.9 601.0 598.5 601.2 583.3 601.4 584.8 601.6 590.9 601.8 574.3 602.0 578.1 602.2 595.7 602.4 583.7 602.6 588.8 602.8 598.9 603.0 588.8 603.2 588.0 603.4 589.5 603.6 582.3 603.8 581.9 604.0 592.4 604.2 586.6 604.4 585.3 604.6 575.5 604.8 597.0 605.0 581.5 605.2 595.3 605.4 571.2 605.6 591.4 605.8 584.5 606.0 582.4 606.2 590.1 606.4 599.9 606.6 583.0 606.8 586.9 607.0 571.7 607.2 581.3 607.4 587.4 607.6 569.5 607.8 585.6 608.0 577.3 608.2 584.4 608.4 580.5 608.6 571.1 608.8 584.1 609.0 593.0 609.2 572.1 609.4 592.2 609.6 570.6 609.8 580.9 610.0 575.1 610.2 582.0 610.4 586.4 610.6 572.6 610.8 585.0 611.0 586.1 611.2 576.6 611.4 575.5 611.6 594.6 611.8 593.8 612.0 598.6 612.2 597.3 612.4 595.0 612.6 587.4 612.8 582.7 613.0 591.0 613.2 577.8 613.4 582.6 613.6 580.3 613.8 590.7 614.0 589.8 614.2 584.5 614.4 574.5 614.6 581.2 614.8 576.5 615.0 588.6 615.2 574.6 615.4 573.4 615.6 568.5 615.8 565.9 616.0 586.5 616.2 595.0 616.4 585.8 616.6 567.5 616.8 569.9 617.0 591.1 617.2 571.8 617.4 579.4 617.6 593.4 617.8 563.7 618.0 581.9 618.2 572.1 618.4 580.6 618.6 583.2 618.8 570.2 619.0 592.4 619.2 573.5 619.4 575.8 619.6 588.7 619.8 583.2 620.0 577.1 620.2 587.1 620.4 564.2 620.6 564.8 620.8 561.6 621.0 565.7 621.2 583.7 621.4 588.2 621.6 584.5 621.8 570.0 622.0 581.1 622.2 580.2 622.4 588.1 622.6 559.3 622.8 586.4 623.0 567.3 623.2 573.1 623.4 572.8 623.6 565.7 623.8 575.3 624.0 586.1 624.2 575.7 624.4 561.8 624.6 569.4 624.8 574.8 625.0 559.7 625.2 576.7 625.4 578.2 625.6 579.4 625.8 572.6 626.0 568.5 626.2 583.2 626.4 582.6 626.6 578.2 626.8 577.9 627.0 563.5 627.2 566.4 627.4 574.2 627.6 560.9 627.8 568.5 628.0 561.9 628.2 572.5 628.4 577.4 628.6 564.6 628.8 562.3 629.0 564.1 629.2 571.9 629.4 554.6 629.6 563.3 629.8 576.0 630.0 561.1 630.2 561.8 630.4 560.4 630.6 556.4 630.8 570.3 631.0 566.6 631.2 566.1 631.4 566.0 631.6 547.7 631.8 569.3 632.0 560.8 632.2 565.1 632.4 561.2 632.6 557.5 632.8 560.0 633.0 560.9 633.2 564.8 633.4 559.1 633.6 553.2 633.8 545.7 634.0 542.0 634.2 549.7 634.4 562.1 634.6 550.5 634.8 559.9 635.0 558.8 635.2 535.9 635.4 548.8 635.6 542.3 635.8 552.4 636.0 557.0 636.2 543.3 636.4 538.7 636.6 542.7 636.8 543.6 637.0 545.3 637.2 530.1 637.4 544.6 637.6 539.0 637.8 522.4 638.0 529.5 638.2 530.0 638.4 520.2 638.6 527.9 638.8 530.0 639.0 515.6 639.2 537.8 639.4 535.1 639.6 538.0 639.8 527.4 640.0 543.3 640.2 533.3 640.4 533.2 640.6 556.7 640.8 537.9 641.0 537.8 641.2 549.6 641.4 565.8 641.6 537.9 641.8 555.2 642.0 539.8 642.2 562.0 642.4 550.4 642.6 561.6 642.8 543.5 643.0 556.8 643.2 558.2 643.4 553.2 643.6 564.3 643.8 557.0 644.0 569.3 644.2 574.4 644.4 557.2 644.6 568.0 644.8 558.0 645.0 554.0 645.2 571.9 645.4 563.9 645.6 575.3 645.8 547.3 646.0 550.5 646.2 563.6 646.4 557.9 646.6 574.0 646.8 570.2 647.0 561.3 647.2 566.6 647.4 571.6 647.6 585.6 647.8 560.4 648.0 549.7 648.2 561.8 648.4 568.8 648.6 570.1 648.8 563.5 649.0 569.7 649.2 550.6 649.4 552.1 649.6 579.2 649.8 572.2 650.0 567.8 650.2 582.5 650.4 566.3 650.6 579.0 650.8 573.6 651.0 556.7 651.2 579.8 651.4 553.8 651.6 578.3 651.8 586.5 652.0 565.2 652.2 575.5 652.4 555.9 652.6 574.4 652.8 575.8 653.0 567.5 653.2 567.7 653.4 557.4 653.6 567.9 653.8 575.1 654.0 576.2 654.2 571.3 654.4 576.3 654.6 583.2 654.8 575.2 655.0 564.1 655.2 572.5 655.4 570.9 655.6 578.4 655.8 579.7 656.0 570.7 656.2 556.9 656.4 565.4 656.6 568.2 656.8 566.4 657.0 556.0 657.2 543.0 657.4 567.1 657.6 556.4 657.8 536.8 658.0 569.2 658.2 569.0 658.4 564.7 658.6 545.4 658.8 566.2 659.0 555.9 659.2 560.8 659.4 560.4 659.6 553.0 659.8 561.0 660.0 555.5 660.2 540.0 660.4 556.7 660.6 561.8 660.8 553.2 661.0 537.2 661.2 546.6 661.4 550.0 661.6 534.1 661.8 548.5 662.0 529.3 662.2 537.9 662.4 555.9 662.6 537.3 662.8 541.0 663.0 546.3 663.2 532.9 663.4 538.4 663.6 522.4 663.8 539.2 664.0 522.4 664.2 541.2 664.4 519.3 664.6 531.0 664.8 529.4 665.0 534.1 665.2 546.3 665.4 516.3 665.6 531.5 665.8 516.7 666.0 508.1 666.2 529.5 666.4 525.7 666.6 514.6 666.8 503.0 667.0 532.5 667.2 499.9 667.4 508.5 667.6 510.4 667.8 512.0 668.0 526.7 668.2 508.2 668.4 501.5 668.6 533.0 668.8 497.9 669.0 503.1 669.2 522.3 669.4 514.7 669.6 497.1 669.8 515.7 670.0 508.4 670.2 508.8 670.4 505.3 670.6 496.9 670.8 489.1 671.0 560.0 671.2 521.9 671.4 561.7 671.6 495.4 671.8 522.8 672.0 498.3 672.2 509.1 672.4 555.6 672.6 539.1 672.8 491.2 673.0 539.9 673.2 512.8 673.4 534.1 673.6 544.7 673.8 506.6 674.0 512.9 674.2 527.4 674.4 504.4 674.6 524.7 674.8 507.0 675.0 512.6 675.2 509.4 675.4 534.8 675.6 526.2 675.8 534.7 676.0 519.6 676.2 516.0 676.4 531.1 676.6 516.9 676.8 525.3 677.0 521.1 677.2 529.3 677.4 521.4 677.6 519.5 677.8 513.6 678.0 519.4 678.2 532.0 678.4 493.1 678.6 527.9 678.8 527.0 679.0 522.3 679.2 513.3 679.4 517.7 679.6 501.1 679.8 537.6 680.0 510.9 680.2 494.3 680.4 538.6 680.6 535.3 680.8 526.6 681.0 523.2 681.2 539.6 681.4 532.3 681.6 547.7 681.8 563.2 682.0 536.8 682.2 534.8 682.4 575.5 682.6 536.5" fill="none" stroke="#000" stroke-width="1.1" stroke-linejoin="miter"/><path d="M233.6 475V455M336 478V459M389 475V449M396 478V448M510.5 480V458M488 525V559M639 540V515M670.5 515V596M597.8 595V614M357.4 520V541M544 490V466M394 500V519" stroke="#000" stroke-width="1.1"/><text x="215.98" y="652.7" font-size="17" textLength="44.99" lengthAdjust="spacingAndGlyphs" fill="#000">00:00</text><text x="431.33" y="652.7" font-size="17" textLength="45.65" lengthAdjust="spacingAndGlyphs" fill="#000">12:00</text><text x="648.08" y="652.7" font-size="17" textLength="44.99" lengthAdjust="spacingAndGlyphs" fill="#000">00:00</text><text x="216.30" y="672.6500000000001" font-size="17" textLength="44.72" lengthAdjust="spacingAndGlyphs" fill="#000">4.225</text><text x="431.98" y="672.6500000000001" font-size="17" textLength="45.09" lengthAdjust="spacingAndGlyphs" fill="#000">5.756</text><text x="648.12" y="672.6500000000001" font-size="17" textLength="45.09" lengthAdjust="spacingAndGlyphs" fill="#000">3.179</text><text x="156.42" y="672.6500000000001" font-size="17" textLength="12.07" lengthAdjust="spacingAndGlyphs" fill="#000">R</text><text x="167.98" y="677.6500000000001" font-size="10.3" textLength="6.64" lengthAdjust="spacingAndGlyphs" fill="#000" style="stroke:none">E</text><text x="200.19" y="692.6" font-size="17" textLength="60.81" lengthAdjust="spacingAndGlyphs" fill="#000">-10.580</text><text x="425.69" y="692.6" font-size="17" textLength="51.12" lengthAdjust="spacingAndGlyphs" fill="#000">-1.544</text><text x="632.29" y="692.6" font-size="17" textLength="60.81" lengthAdjust="spacingAndGlyphs" fill="#000">-16.190</text><text x="137.31" y="692.6" font-size="17" textLength="37.43" lengthAdjust="spacingAndGlyphs" fill="#000">MLat</text><text x="215.79" y="712.5500000000001" font-size="17" textLength="45.42" lengthAdjust="spacingAndGlyphs" fill="#000">2.247</text><text x="431.98" y="712.5500000000001" font-size="17" textLength="45.09" lengthAdjust="spacingAndGlyphs" fill="#000">5.398</text><text x="648.03" y="712.5500000000001" font-size="17" textLength="45.09" lengthAdjust="spacingAndGlyphs" fill="#000">8.125</text><text x="143.34" y="712.5500000000001" font-size="17" textLength="31.64" lengthAdjust="spacingAndGlyphs" fill="#000">MLT</text><text x="216.30" y="732.5" font-size="17" textLength="44.76" lengthAdjust="spacingAndGlyphs" fill="#000">4.373</text><text x="431.98" y="732.5" font-size="17" textLength="44.99" lengthAdjust="spacingAndGlyphs" fill="#000">5.760</text><text x="648.12" y="732.5" font-size="17" textLength="45.18" lengthAdjust="spacingAndGlyphs" fill="#000">3.447</text><text x="165.10" y="732.5" font-size="17" textLength="10.11" lengthAdjust="spacingAndGlyphs" fill="#000">L</text><text x="251.40" y="757.3" font-size="17" textLength="404.20" lengthAdjust="spacingAndGlyphs" fill="#000">2012-12-01 (336) 23:00 to 2012-12-03 (338) 01:00</text></g><path d="M346.5 447.5V365.5Q346.5 358.5 353.5 358.5H584.5Q591.5 358.5 591.5 365.5V447.5Z" fill="#eeeeee" stroke="#a9a9a9" stroke-width="1"/><path d="M347 383.5V366Q347 359 354 359H584Q591 359 591 366V383.5Z" fill="url(#ttl)"/><path d="M359 370h9l-4.5 5z" fill="#9a9a9a"/><text x="410.56" y="377.8" font-size="14" font-weight="bold" textLength="115.24" lengthAdjust="spacingAndGlyphs" fill="#7a7a7a">Progress Monitor</text><path d="M569 368.5l8 8M577 368.5l-8 8" stroke="#a0a0a0" stroke-width="2"/><rect x="349" y="383.5" width="240" height="62" fill="#fdfdfd"/><rect x="348" y="383.5" width="1" height="62" fill="#cccccc"/><rect x="589" y="383.5" width="1" height="62" fill="#cccccc"/><text x="413.32" y="396.2" font-size="14" font-weight="bold" textLength="111.00" lengthAdjust="spacingAndGlyphs" fill="#1e1e2e">running batch</text><text x="363.23" y="408.7" font-size="7.8" font-weight="bold" textLength="213.63" lengthAdjust="spacingAndGlyphs" fill="#1e1e2e">write /hom...walk3/product_20121231_00.png</text><rect x="349.5" y="411.5" width="219" height="19" fill="#eef0f3" stroke="#6f87b5" stroke-width="1"/><rect x="350" y="412" width="214" height="18" fill="#a2b5cb"/><rect x="570" y="411.5" width="19" height="19" fill="url(#btn)" stroke="#8a9aaa" stroke-width="1"/><rect x="572.5" y="414" width="14" height="14" rx="3" fill="#e04a55" stroke="#b8303a" stroke-width="1"/><path d="M576 417.5l7 7M583 417.5l-7 7" stroke="#f4f4f4" stroke-width="2.4"/><text x="380.04" y="442" font-size="13" font-weight="bold" textLength="178.23" lengthAdjust="spacingAndGlyphs" fill="#2a2a2a">61/62 (41.4/min, eta 2.9 s)</text></svg>
</body></html>
